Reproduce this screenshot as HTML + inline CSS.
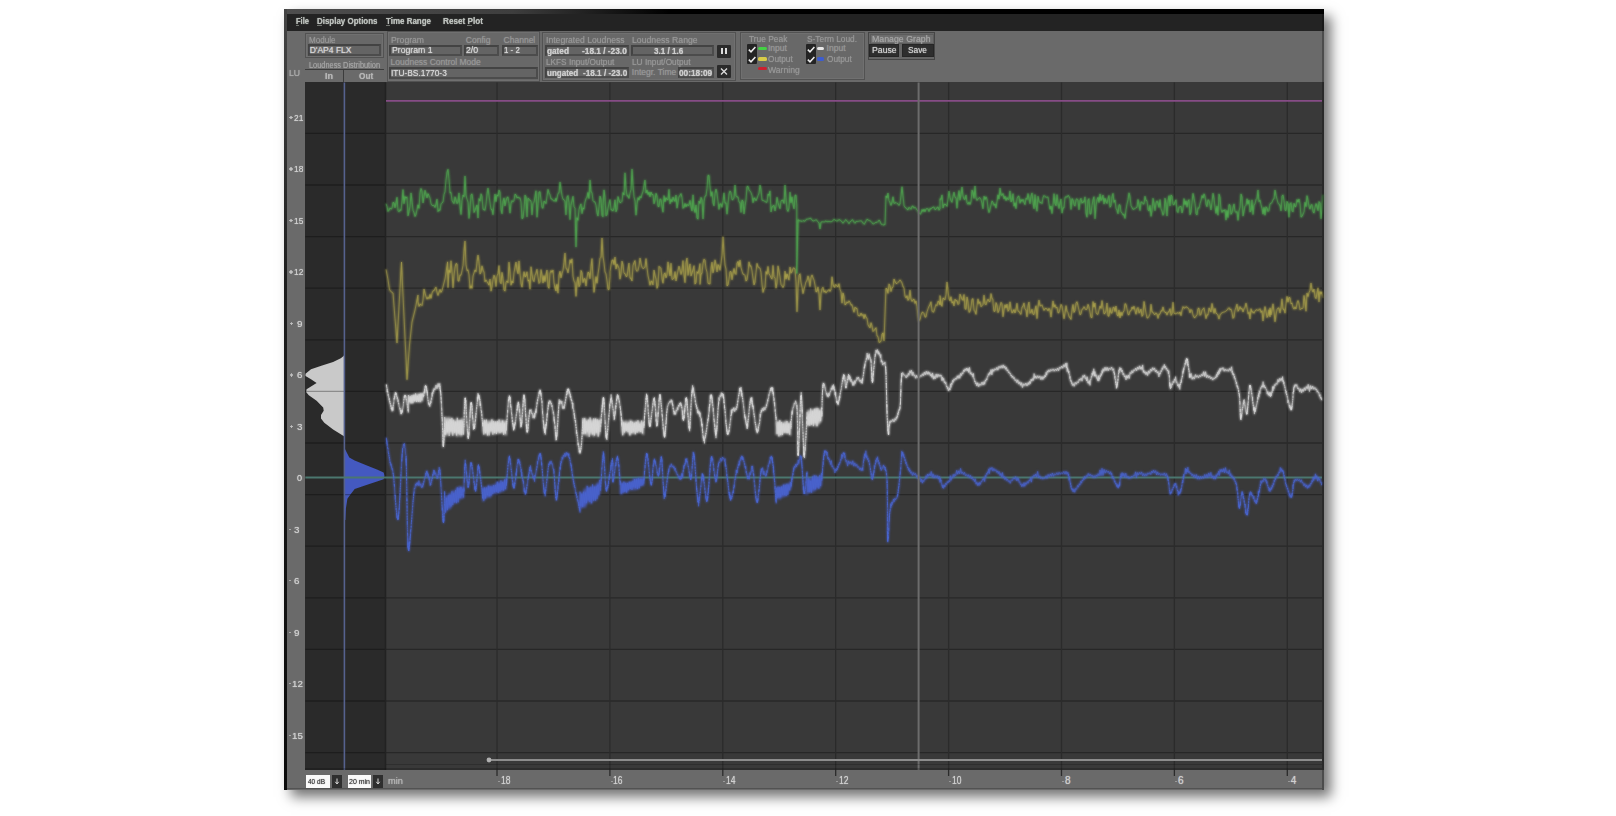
<!DOCTYPE html>
<html><head><meta charset="utf-8"><style>
html,body{margin:0;padding:0;background:#fff;width:1616px;height:816px;overflow:hidden;position:relative;font-family:"Liberation Sans",sans-serif;}
#win{position:absolute;left:0;top:0;width:1616px;height:816px;}
#win>div{position:absolute;}
.t{position:absolute;white-space:nowrap;line-height:1;}
</style></head><body>
<div id="win"><div style="left:284px;top:9px;width:1040px;height:780.5px;background:#6a6a6a;box-shadow:7px 7px 12px rgba(0,0,0,0.55);"></div>
<div style="left:284px;top:9px;width:1040px;height:5px;background:linear-gradient(to right,#4e4e4e 0%,#3e3e3e 22%,#000 37%,#000 100%);"></div>
<div style="left:284px;top:9px;width:3px;height:780.5px;background:linear-gradient(to bottom,#454545 0%,#1e1e1e 35%,#0a0a0a 100%);"></div>
<div style="left:287px;top:14px;width:1037px;height:16.5px;background:#232323;"></div>
<div class="t" style="left:295.5px;top:17.00px;font-size:8.5px;color:#bcc0bc;font-weight:bold;text-shadow:0 0 1px #bcc0bc;transform:scaleX(0.888);transform-origin:0 0;">File</div>
<div class="t" style="left:316.5px;top:17.00px;font-size:8.5px;color:#bcc0bc;font-weight:bold;text-shadow:0 0 1px #bcc0bc;transform:scaleX(0.935);transform-origin:0 0;">Display Options</div>
<div class="t" style="left:385.8px;top:17.00px;font-size:8.5px;color:#bcc0bc;font-weight:bold;text-shadow:0 0 1px #bcc0bc;transform:scaleX(0.937);transform-origin:0 0;">Time Range</div>
<div class="t" style="left:443.4px;top:17.00px;font-size:8.5px;color:#bcc0bc;font-weight:bold;text-shadow:0 0 1px #bcc0bc;transform:scaleX(0.962);transform-origin:0 0;">Reset Plot</div>
<div style="left:295.5px;top:25.4px;width:3.0px;height:0.7000000000000028px;background:#70746f;"></div>
<div style="left:316.5px;top:25.4px;width:5.0px;height:0.7000000000000028px;background:#70746f;"></div>
<div style="left:385.8px;top:25.4px;width:4.199999999999989px;height:0.7000000000000028px;background:#70746f;"></div>
<div style="left:467px;top:25.4px;width:5px;height:0.7000000000000028px;background:#70746f;"></div>
<div style="left:305.4px;top:32.8px;width:78.60000000000002px;height:25.400000000000006px;background:#686868;border:1px solid #525252;box-sizing:border-box;box-shadow:inset 0 0 0 1px #707070;"></div>
<div class="t" style="left:309px;top:35.50px;font-size:8.5px;color:#969696;font-weight:normal;text-shadow:0 0 1px #969696;transform:scaleX(0.954);transform-origin:0 0;">Module</div>
<div style="left:307.8px;top:44.4px;width:73.69999999999999px;height:11.300000000000004px;background:#646464;border:2px solid #434343;border-right-color:#4c4c4c;border-bottom-color:#4c4c4c;box-sizing:border-box;"></div>
<div class="t" style="left:309.7px;top:46.40px;font-size:8.5px;color:#d6d6d6;font-weight:normal;text-shadow:0 0 1px #d6d6d6;">D'AP4 FLX</div>
<div class="t" style="left:309px;top:60.80px;font-size:8.5px;color:#a2a2a2;font-weight:normal;text-shadow:0 0 1px #a2a2a2;transform:scaleX(0.869);transform-origin:0 0;">Loudness Distribution</div>
<div style="left:305px;top:68.8px;width:79px;height:1.4000000000000057px;background:#3c3c3c;"></div>
<div style="left:343px;top:70px;width:1.3999999999999773px;height:12.5px;background:#3c3c3c;"></div>
<div class="t" style="left:325px;top:72.00px;font-size:8.5px;color:#b6b6b6;font-weight:bold;text-shadow:0 0 1px #b6b6b6;transform:scaleX(1.059);transform-origin:0 0;">In</div>
<div class="t" style="left:358.6px;top:72.00px;font-size:8.5px;color:#b6b6b6;font-weight:bold;text-shadow:0 0 1px #b6b6b6;transform:scaleX(0.970);transform-origin:0 0;">Out</div>
<div class="t" style="left:288.7px;top:68.80px;font-size:8.5px;color:#ababab;font-weight:normal;text-shadow:0 0 1px #ababab;transform:scaleX(1.022);transform-origin:0 0;">LU</div>
<div style="left:387.4px;top:31.3px;width:152.60000000000002px;height:50.5px;background:#686868;border:1px solid #525252;box-sizing:border-box;box-shadow:inset 0 0 0 1px #707070;"></div>
<div class="t" style="left:390.5px;top:35.70px;font-size:8.5px;color:#969696;font-weight:normal;text-shadow:0 0 1px #969696;transform:scaleX(1.012);transform-origin:0 0;">Program</div>
<div class="t" style="left:465.8px;top:35.70px;font-size:8.5px;color:#969696;font-weight:normal;text-shadow:0 0 1px #969696;">Config</div>
<div class="t" style="left:503.6px;top:35.70px;font-size:8.5px;color:#969696;font-weight:normal;text-shadow:0 0 1px #969696;">Channel</div>
<div style="left:389px;top:44.5px;width:73px;height:11.5px;background:#646464;border:2px solid #434343;border-right-color:#4c4c4c;border-bottom-color:#4c4c4c;box-sizing:border-box;"></div>
<div class="t" style="left:391.6px;top:46.40px;font-size:8.5px;color:#d6d6d6;font-weight:normal;text-shadow:0 0 1px #d6d6d6;transform:scaleX(1.021);transform-origin:0 0;">Program 1</div>
<div style="left:464.2px;top:44.5px;width:35.19999999999999px;height:11.5px;background:#646464;border:2px solid #434343;border-right-color:#4c4c4c;border-bottom-color:#4c4c4c;box-sizing:border-box;"></div>
<div class="t" style="left:465.8px;top:46.40px;font-size:8.5px;color:#d6d6d6;font-weight:normal;text-shadow:0 0 1px #d6d6d6;transform:scaleX(1.024);transform-origin:0 0;">2/0</div>
<div style="left:502px;top:44.5px;width:35.799999999999955px;height:11.5px;background:#646464;border:2px solid #434343;border-right-color:#4c4c4c;border-bottom-color:#4c4c4c;box-sizing:border-box;"></div>
<div class="t" style="left:504.2px;top:46.40px;font-size:8.5px;color:#d6d6d6;font-weight:normal;text-shadow:0 0 1px #d6d6d6;transform:scaleX(0.929);transform-origin:0 0;">1 - 2</div>
<div class="t" style="left:390.5px;top:58.30px;font-size:8.5px;color:#969696;font-weight:normal;text-shadow:0 0 1px #969696;">Loudness Control Mode</div>
<div style="left:389px;top:67px;width:148.79999999999995px;height:11.5px;background:#646464;border:2px solid #434343;border-right-color:#4c4c4c;border-bottom-color:#4c4c4c;box-sizing:border-box;"></div>
<div class="t" style="left:391px;top:69.20px;font-size:8.5px;color:#d6d6d6;font-weight:normal;text-shadow:0 0 1px #d6d6d6;transform:scaleX(0.984);transform-origin:0 0;">ITU-BS.1770-3</div>
<div style="left:542.1px;top:31.5px;width:194.29999999999995px;height:49.400000000000006px;background:#686868;border:1px solid #525252;box-sizing:border-box;box-shadow:inset 0 0 0 1px #707070;"></div>
<div class="t" style="left:546px;top:36.00px;font-size:8.5px;color:#969696;font-weight:normal;text-shadow:0 0 1px #969696;transform:scaleX(1.014);transform-origin:0 0;">Integrated Loudness</div>
<div class="t" style="left:631.8px;top:36.00px;font-size:8.5px;color:#969696;font-weight:normal;text-shadow:0 0 1px #969696;transform:scaleX(1.021);transform-origin:0 0;">Loudness Range</div>
<div style="left:545.4px;top:44.5px;width:83.20000000000005px;height:11.700000000000003px;background:#646464;border:2px solid #434343;border-right-color:#4c4c4c;border-bottom-color:#4c4c4c;box-sizing:border-box;"></div>
<div class="t" style="left:546.7px;top:46.60px;font-size:8.5px;color:#cdcdcd;font-weight:bold;text-shadow:0 0 1px #cdcdcd;transform:scaleX(0.970);transform-origin:0 0;">gated</div>
<div class="t" style="left:581.8px;top:46.60px;font-size:8.5px;color:#cdcdcd;font-weight:bold;text-shadow:0 0 1px #cdcdcd;transform:scaleX(0.977);transform-origin:0 0;">-18.1 / -23.0</div>
<div style="left:631.2px;top:44.5px;width:82.5px;height:11.700000000000003px;background:#646464;border:2px solid #434343;border-right-color:#4c4c4c;border-bottom-color:#4c4c4c;box-sizing:border-box;"></div>
<div class="t" style="left:653.9px;top:46.60px;font-size:8.5px;color:#cdcdcd;font-weight:bold;text-shadow:0 0 1px #cdcdcd;transform:scaleX(0.951);transform-origin:0 0;">3.1 / 1.6</div>
<div style="left:717px;top:44.5px;width:13.600000000000023px;height:13.600000000000001px;background:#2b2b2b;border-radius:1px;"></div>
<div style="left:721.2px;top:48.3px;width:2.199999999999932px;height:6.0px;background:#dcdcdc;"></div>
<div style="left:724.6px;top:48.3px;width:2.199999999999932px;height:6.0px;background:#dcdcdc;"></div>
<div class="t" style="left:546px;top:58.10px;font-size:8.5px;color:#969696;font-weight:normal;text-shadow:0 0 1px #969696;transform:scaleX(0.970);transform-origin:0 0;">LKFS Input/Output</div>
<div class="t" style="left:631.8px;top:58.10px;font-size:8.5px;color:#969696;font-weight:normal;text-shadow:0 0 1px #969696;transform:scaleX(0.975);transform-origin:0 0;">LU Input/Output</div>
<div style="left:545.4px;top:67.2px;width:83.20000000000005px;height:10.799999999999997px;background:#646464;border:2px solid #434343;border-right-color:#4c4c4c;border-bottom-color:#4c4c4c;box-sizing:border-box;"></div>
<div class="t" style="left:546.7px;top:69.10px;font-size:8.5px;color:#cdcdcd;font-weight:bold;text-shadow:0 0 1px #cdcdcd;transform:scaleX(0.944);transform-origin:0 0;">ungated</div>
<div class="t" style="left:583px;top:69.10px;font-size:8.5px;color:#cdcdcd;font-weight:bold;text-shadow:0 0 1px #cdcdcd;transform:scaleX(0.964);transform-origin:0 0;">-18.1 / -23.0</div>
<div class="t" style="left:631.8px;top:68.10px;font-size:8.5px;color:#969696;font-weight:normal;text-shadow:0 0 1px #969696;">Integr. Time</div>
<div style="left:678px;top:67.2px;width:35.700000000000045px;height:10.799999999999997px;background:#646464;border:2px solid #434343;border-right-color:#4c4c4c;border-bottom-color:#4c4c4c;box-sizing:border-box;"></div>
<div class="t" style="left:679.2px;top:69.10px;font-size:8.5px;color:#cdcdcd;font-weight:bold;text-shadow:0 0 1px #cdcdcd;transform:scaleX(0.976);transform-origin:0 0;">00:18:09</div>
<div style="left:717px;top:65.3px;width:13.600000000000023px;height:13.0px;background:#2b2b2b;border-radius:1px;"></div>
<svg style="position:absolute;left:717px;top:65.3px" width="14" height="13" viewBox="0 0 14 13"><path d="M4,3.5 L10,9.5 M10,3.5 L4,9.5" stroke="#dedede" stroke-width="1.3" fill="none"/></svg>
<div style="left:739.5px;top:32.1px;width:125.5px;height:47.49999999999999px;background:#686868;border:1px solid #525252;box-sizing:border-box;box-shadow:inset 0 0 0 1px #707070;"></div>
<div class="t" style="left:748.6px;top:35.30px;font-size:8.5px;color:#969696;font-weight:normal;text-shadow:0 0 1px #969696;transform:scaleX(0.987);transform-origin:0 0;">True Peak</div>
<div class="t" style="left:807px;top:35.30px;font-size:8.5px;color:#969696;font-weight:normal;text-shadow:0 0 1px #969696;transform:scaleX(0.980);transform-origin:0 0;">S-Term Loud.</div>
<div style="left:747.3px;top:43.9px;width:9.900000000000091px;height:20.4px;background:#242424;border-radius:1px;"></div>
<div style="left:805.8px;top:43.9px;width:9.900000000000091px;height:20.4px;background:#242424;border-radius:1px;"></div>
<svg style="position:absolute;left:747.3px;top:44.5px" width="10" height="9" viewBox="0 0 10 9"><path d="M1.8,4.6 L4,6.8 L8.4,2" stroke="#ececec" stroke-width="1.5" fill="none"/></svg>
<svg style="position:absolute;left:747.3px;top:55.0px" width="10" height="9" viewBox="0 0 10 9"><path d="M1.8,4.6 L4,6.8 L8.4,2" stroke="#ececec" stroke-width="1.5" fill="none"/></svg>
<svg style="position:absolute;left:805.8px;top:44.5px" width="10" height="9" viewBox="0 0 10 9"><path d="M1.8,4.6 L4,6.8 L8.4,2" stroke="#ececec" stroke-width="1.5" fill="none"/></svg>
<svg style="position:absolute;left:805.8px;top:55.0px" width="10" height="9" viewBox="0 0 10 9"><path d="M1.8,4.6 L4,6.8 L8.4,2" stroke="#ececec" stroke-width="1.5" fill="none"/></svg>
<div style="left:758.4px;top:47.2px;width:8.300000000000068px;height:3.299999999999997px;background:#44d044;border-radius:1.5px;"></div>
<div style="left:758.4px;top:57.3px;width:8.300000000000068px;height:3.3000000000000043px;background:#d8cc48;border-radius:1.5px;"></div>
<div style="left:758.4px;top:66.8px;width:8.300000000000068px;height:3.6000000000000085px;background:#cc2030;border-radius:1.5px;"></div>
<div style="left:817.3px;top:47.2px;width:7.0px;height:3.299999999999997px;background:#e8e8e8;border-radius:1.5px;"></div>
<div style="left:817.3px;top:57.3px;width:7.0px;height:3.3000000000000043px;background:#3c5cd0;border-radius:1.5px;"></div>
<div class="t" style="left:768px;top:44.40px;font-size:8.5px;color:#969696;font-weight:normal;text-shadow:0 0 1px #969696;">Input</div>
<div class="t" style="left:768px;top:54.80px;font-size:8.5px;color:#969696;font-weight:normal;text-shadow:0 0 1px #969696;transform:scaleX(0.968);transform-origin:0 0;">Output</div>
<div class="t" style="left:768px;top:65.80px;font-size:8.5px;color:#969696;font-weight:normal;text-shadow:0 0 1px #969696;transform:scaleX(1.015);transform-origin:0 0;">Warning</div>
<div class="t" style="left:826.6px;top:44.40px;font-size:8.5px;color:#969696;font-weight:normal;text-shadow:0 0 1px #969696;">Input</div>
<div class="t" style="left:826.6px;top:54.80px;font-size:8.5px;color:#969696;font-weight:normal;text-shadow:0 0 1px #969696;transform:scaleX(0.968);transform-origin:0 0;">Output</div>
<div style="left:867.8px;top:32.3px;width:67.5px;height:27.400000000000006px;background:#666;border:1.5px solid #454545;box-sizing:border-box;"></div>
<div style="left:869.5px;top:34px;width:64.0px;height:9.899999999999999px;background:#6c6c6c;border:1px solid #5c5c5c;box-sizing:border-box;"></div>
<div class="t" style="left:871.5px;top:35.30px;font-size:8.5px;color:#a4a4a4;font-weight:normal;text-shadow:0 0 1px #a4a4a4;transform:scaleX(1.032);transform-origin:0 0;">Manage Graph</div>
<div style="left:868.6px;top:44.3px;width:30.799999999999955px;height:12.700000000000003px;background:#2e2e2e;border:1px solid #262626;box-sizing:border-box;"></div>
<div class="t" style="left:872px;top:46.30px;font-size:8.5px;color:#d0d0d0;font-weight:normal;text-shadow:0 0 1px #d0d0d0;transform:scaleX(1.025);transform-origin:0 0;">Pause</div>
<div style="left:902.2px;top:44.3px;width:31.399999999999977px;height:12.700000000000003px;background:#2e2e2e;border:1px solid #262626;box-sizing:border-box;"></div>
<div class="t" style="left:907.8px;top:46.30px;font-size:8.5px;color:#d0d0d0;font-weight:normal;text-shadow:0 0 1px #d0d0d0;transform:scaleX(0.981);transform-origin:0 0;">Save</div>
<div style="left:305.3px;top:82.4px;width:80.69999999999999px;height:687.6px;background:#2a2a2a;"></div>
<div style="left:386px;top:82.4px;width:938px;height:687.6px;background:#393939;"></div>
<svg style="position:absolute;left:0;top:0" width="1616" height="816" viewBox="0 0 1616 816"><polygon fill="#c9c9c9" points="344.5,354 343.6,356.1 340.8,358.3 333.1,362.1 322.1,365.5 311,369.3 305.5,373.7 305.5,375.9 311,379.2 316.6,383.1 311,386.4 306.6,389.2 306.1,391.9 308.8,395.3 316.6,400.8 323.2,407.4 323.7,410.7 321,415.1 321,418.4 324.3,422.8 333.1,429.5 343.6,436.1 344.5,437"/><polygon fill="#4459c0" points="344.6,446 344.9,448.8 347,453 349.3,457.6 354.7,460.6 362,463.5 369.4,466.5 377,469.5 383.6,472.4 384.6,475.8 383.6,479.2 377,481.5 369.4,484.1 362,486.5 354.7,489 350.8,494 347.4,498.8 345.9,508.6 345.4,520 344.6,520"/><line x1="305.3" y1="133.4" x2="1322" y2="133.4" stroke="rgba(0,0,0,0.3)" stroke-width="1.3"/><line x1="305.3" y1="185.0" x2="1322" y2="185.0" stroke="rgba(0,0,0,0.3)" stroke-width="1.3"/><line x1="305.3" y1="236.6" x2="1322" y2="236.6" stroke="rgba(0,0,0,0.3)" stroke-width="1.3"/><line x1="305.3" y1="288.2" x2="1322" y2="288.2" stroke="rgba(0,0,0,0.3)" stroke-width="1.3"/><line x1="305.3" y1="339.8" x2="1322" y2="339.8" stroke="rgba(0,0,0,0.3)" stroke-width="1.3"/><line x1="305.3" y1="391.4" x2="1322" y2="391.4" stroke="rgba(0,0,0,0.3)" stroke-width="1.3"/><line x1="305.3" y1="443.0" x2="1322" y2="443.0" stroke="rgba(0,0,0,0.3)" stroke-width="1.3"/><line x1="305.3" y1="494.6" x2="1322" y2="494.6" stroke="rgba(0,0,0,0.3)" stroke-width="1.3"/><line x1="305.3" y1="546.2" x2="1322" y2="546.2" stroke="rgba(0,0,0,0.3)" stroke-width="1.3"/><line x1="305.3" y1="597.8" x2="1322" y2="597.8" stroke="rgba(0,0,0,0.3)" stroke-width="1.3"/><line x1="305.3" y1="649.4" x2="1322" y2="649.4" stroke="rgba(0,0,0,0.3)" stroke-width="1.3"/><line x1="305.3" y1="701.0" x2="1322" y2="701.0" stroke="rgba(0,0,0,0.3)" stroke-width="1.3"/><line x1="305.3" y1="752.6" x2="1322" y2="752.6" stroke="rgba(0,0,0,0.3)" stroke-width="1.3"/><line x1="497.0" y1="82.4" x2="497.0" y2="776" stroke="#2b2b2b" stroke-width="1.3"/><line x1="609.9" y1="82.4" x2="609.9" y2="776" stroke="#2b2b2b" stroke-width="1.3"/><line x1="722.8" y1="82.4" x2="722.8" y2="776" stroke="#2b2b2b" stroke-width="1.3"/><line x1="835.7" y1="82.4" x2="835.7" y2="776" stroke="#2b2b2b" stroke-width="1.3"/><line x1="948.6" y1="82.4" x2="948.6" y2="776" stroke="#2b2b2b" stroke-width="1.3"/><line x1="1061.5" y1="82.4" x2="1061.5" y2="776" stroke="#2b2b2b" stroke-width="1.3"/><line x1="1174.4" y1="82.4" x2="1174.4" y2="776" stroke="#2b2b2b" stroke-width="1.3"/><line x1="1287.3" y1="82.4" x2="1287.3" y2="776" stroke="#2b2b2b" stroke-width="1.3"/><line x1="385.5" y1="82.4" x2="385.5" y2="770" stroke="#222" stroke-width="1.6"/><line x1="344.4" y1="82.4" x2="344.4" y2="770" stroke="#56628e" stroke-width="1.6"/><line x1="386" y1="100.9" x2="1322" y2="100.9" stroke="#864c86" stroke-width="1.6"/><line x1="305.3" y1="477.5" x2="1322" y2="477.5" stroke="#4b776f" stroke-width="1.8"/></svg><svg style="position:absolute;left:0;top:0;filter:blur(1px)" width="1616" height="816" viewBox="0 0 1616 816"><path d="M386.0,203.7 L387.0,206.4 L388.0,211.5 L389.0,210.2 L390.0,207.9 L391.0,209.1 L392.0,208.5 L393.0,202.2 L394.0,202.9 L395.0,207.9 L396.0,202.9 L397.0,197.2 L398.0,210.6 L399.0,211.8 L400.0,209.7 L401.0,210.6 L402.0,201.0 L403.0,189.5 L404.0,203.8 L405.0,196.5 L406.0,198.1 L407.0,196.8 L408.0,215.9 L409.0,211.8 L410.0,206.4 L411.0,192.9 L412.0,200.8 L413.0,210.3 L414.0,212.8 L415.0,216.5 L416.0,214.6 L417.0,209.6 L418.0,204.8 L419.0,208.4 L420.0,192.8 L421.0,188.4 L422.0,191.1 L423.0,203.0 L424.0,196.8 L425.0,190.2 L426.0,194.1 L427.0,198.0 L428.0,193.6 L429.0,195.6 L430.0,198.1 L431.0,203.7 L432.0,205.5 L433.0,205.5 L434.0,205.3 L435.0,207.6 L436.0,204.2 L437.0,199.1 L438.0,211.6 L439.0,209.9 L440.0,210.4 L441.0,203.9 L442.0,202.7 L443.0,202.1 L444.0,194.4 L445.0,191.8 L446.0,180.0 L447.0,172.4 L448.0,169.2 L449.0,178.8 L450.0,193.0 L451.0,192.4 L452.0,200.4 L453.0,202.3 L454.0,203.7 L455.0,196.7 L456.0,200.0 L457.0,203.7 L458.0,202.1 L459.0,192.9 L460.0,206.4 L461.0,214.6 L462.0,200.8 L463.0,195.0 L464.0,196.8 L465.0,176.0 L466.0,195.1 L467.0,199.2 L468.0,202.3 L469.0,218.5 L470.0,209.5 L471.0,194.8 L472.0,193.9 L473.0,201.1 L474.0,212.6 L475.0,210.2 L476.0,207.4 L477.0,204.9 L478.0,218.0 L479.0,198.6 L480.0,201.1 L481.0,193.7 L482.0,196.4 L483.0,209.4 L484.0,209.5 L485.0,210.3 L486.0,204.3 L487.0,193.8 L488.0,188.0 L489.0,195.2 L490.0,203.0 L491.0,209.4 L492.0,209.6 L493.0,214.8 L494.0,203.5 L495.0,194.0 L496.0,201.7 L497.0,194.8 L498.0,196.2 L499.0,190.0 L500.0,192.4 L501.0,209.5 L502.0,213.8 L503.0,201.6 L504.0,197.8 L505.0,206.0 L506.0,201.1 L507.0,197.5 L508.0,196.9 L509.0,203.8 L510.0,213.2 L511.0,203.8 L512.0,200.5 L513.0,201.8 L514.0,200.5 L515.0,194.1 L516.0,194.9 L517.0,198.1 L518.0,196.9 L519.0,198.2 L520.0,197.7 L521.0,201.8 L522.0,218.8 L523.0,217.9 L524.0,209.2 L525.0,195.1 L526.0,196.9 L527.0,216.9 L528.0,198.2 L529.0,199.0 L530.0,200.7 L531.0,200.7 L532.0,214.9 L533.0,203.7 L534.0,202.2 L535.0,196.7 L536.0,190.7 L537.0,217.3 L538.0,205.0 L539.0,192.0 L540.0,191.6 L541.0,199.8 L542.0,207.5 L543.0,208.3 L544.0,201.0 L545.0,202.3 L546.0,203.6 L547.0,196.1 L548.0,189.3 L549.0,192.9 L550.0,194.7 L551.0,199.1 L552.0,198.8 L553.0,200.6 L554.0,201.0 L555.0,200.7 L556.0,198.1 L556.0,201.6 L557.0,198.2 L558.0,193.4 L559.0,192.9 L560.0,182.0 L561.0,189.1 L562.0,195.6 L563.0,199.3 L564.0,199.7 L565.0,201.7 L566.0,214.9 L567.0,197.0 L568.0,195.5 L569.0,202.4 L570.0,219.7 L571.0,205.2 L572.0,200.7 L573.0,196.2 L574.0,206.6 L575.0,208.2 L576.0,247.0 L577.0,217.7 L578.0,220.3 L579.0,209.4 L580.0,206.2 L581.0,203.8 L582.0,213.7 L583.0,207.9 L584.0,209.1 L585.0,202.0 L586.0,198.7 L587.0,197.1 L588.0,192.4 L589.0,198.6 L590.0,180.0 L591.0,191.8 L592.0,192.5 L593.0,200.8 L594.0,201.8 L595.0,201.8 L596.0,205.3 L597.0,212.6 L598.0,216.1 L599.0,206.9 L600.0,196.0 L601.0,199.3 L602.0,215.6 L603.0,216.8 L603.0,205.9 L604.0,189.9 L605.0,197.7 L606.0,215.9 L607.0,214.6 L608.0,208.2 L609.0,203.5 L610.0,199.5 L611.0,210.1 L612.0,209.7 L613.0,211.1 L614.0,207.7 L615.0,199.7 L616.0,211.9 L617.0,209.0 L618.0,196.5 L619.0,200.3 L620.0,202.8 L621.0,202.4 L622.0,201.3 L623.0,192.5 L624.0,195.0 L625.0,172.8 L626.0,188.0 L627.0,196.2 L628.0,195.7 L629.0,198.5 L630.0,193.2 L631.0,189.4 L632.0,169.0 L633.0,185.1 L634.0,196.8 L635.0,201.0 L636.0,215.2 L637.0,204.5 L638.0,197.6 L639.0,200.1 L640.0,196.3 L641.0,197.9 L642.0,194.2 L643.0,191.5 L644.0,185.5 L645.0,180.0 L646.0,193.1 L647.0,190.1 L648.0,194.7 L649.0,192.1 L650.0,196.9 L651.0,192.0 L652.0,194.6 L653.0,194.4 L654.0,203.9 L655.0,200.2 L656.0,193.2 L657.0,195.9 L658.0,206.4 L659.0,206.7 L660.0,198.9 L661.0,199.3 L662.0,206.7 L663.0,212.3 L664.0,195.5 L665.0,201.8 L666.0,197.7 L667.0,199.7 L668.0,199.7 L669.0,189.3 L670.0,203.9 L671.0,199.4 L672.0,201.9 L673.0,196.9 L674.0,199.9 L675.0,201.5 L676.0,195.0 L677.0,208.2 L678.0,202.4 L679.0,196.4 L680.0,195.7 L681.0,193.5 L682.0,197.6 L683.0,208.4 L684.0,207.3 L685.0,203.4 L686.0,206.8 L687.0,204.2 L688.0,205.8 L689.0,204.9 L690.0,200.4 L691.0,207.0 L692.0,211.1 L693.0,194.8 L694.0,208.4 L695.0,212.6 L696.0,204.9 L697.0,217.9 L698.0,219.2 L699.0,201.0 L700.0,203.5 L701.0,197.3 L702.0,200.0 L703.0,219.0 L704.0,202.0 L705.0,196.0 L706.0,195.9 L707.0,188.4 L708.0,175.3 L709.0,175.3 L710.0,187.0 L711.0,196.3 L712.0,191.6 L713.0,202.7 L714.0,205.9 L715.0,193.3 L716.0,189.0 L717.0,193.1 L718.0,201.5 L719.0,209.5 L720.0,203.9 L721.0,203.9 L722.0,207.4 L723.0,200.6 L724.0,192.8 L725.0,203.1 L726.0,202.9 L727.0,214.2 L728.0,204.2 L729.0,193.7 L730.0,190.9 L731.0,192.7 L732.0,199.8 L733.0,199.7 L734.0,198.0 L735.0,185.0 L736.0,195.6 L737.0,197.1 L738.0,196.8 L739.0,202.1 L740.0,202.5 L741.0,212.5 L742.0,199.9 L743.0,201.1 L744.0,214.0 L745.0,206.2 L746.0,199.7 L747.0,186.5 L748.0,186.3 L749.0,189.8 L750.0,191.0 L751.0,192.7 L752.0,195.5 L753.0,202.8 L754.0,197.9 L755.0,198.5 L756.0,200.8 L757.0,198.5 L758.0,195.6 L759.0,193.0 L760.0,185.0 L761.0,189.3 L762.0,200.3 L763.0,200.4 L764.0,200.8 L765.0,201.5 L766.0,202.1 L767.0,202.4 L768.0,194.1 L769.0,195.3 L770.0,190.9 L771.0,212.0 L772.0,207.0 L773.0,206.0 L774.0,205.3 L775.0,211.0 L776.0,206.3 L777.0,197.2 L778.0,202.7 L779.0,206.0 L780.0,208.8 L781.0,200.7 L782.0,200.4 L783.0,200.2 L784.0,203.6 L785.0,185.0 L786.0,197.9 L787.0,209.5 L788.0,211.5 L789.0,208.1 L790.0,192.1 L791.0,202.8 L792.0,196.8 L793.0,204.5 L794.0,208.9 L795.0,195.2 L796.0,195.0 L796.8,205.0 L796.8,273.5 L798.0,222.0 L798.0,219.8 L799.0,220.3 L800.0,221.2 L801.0,220.7 L802.0,221.6 L803.0,220.6 L804.0,220.9 L805.0,221.3 L806.0,219.5 L807.0,219.0 L808.0,219.2 L809.0,218.7 L810.0,218.4 L811.0,218.3 L812.0,220.2 L813.0,221.0 L814.0,220.9 L815.0,220.3 L816.0,219.7 L817.0,220.3 L818.0,222.0 L819.0,223.1 L820.0,229.0 L821.0,222.1 L822.0,221.7 L823.0,221.8 L824.0,222.1 L825.0,221.6 L826.0,220.8 L827.0,222.0 L828.0,221.3 L829.0,221.6 L830.0,221.4 L831.0,221.9 L832.0,221.3 L833.0,220.7 L834.0,219.2 L835.0,220.2 L836.0,220.3 L837.0,221.4 L838.0,220.1 L839.0,219.9 L840.0,219.7 L841.0,221.0 L842.0,221.8 L843.0,223.3 L844.0,222.0 L845.0,220.2 L846.0,219.6 L847.0,221.2 L848.0,222.2 L849.0,223.8 L850.0,221.8 L851.0,221.3 L852.0,219.7 L853.0,220.1 L854.0,222.3 L855.0,223.3 L856.0,221.5 L857.0,221.2 L858.0,221.6 L859.0,221.0 L860.0,221.0 L861.0,220.8 L862.0,221.3 L863.0,223.2 L864.0,224.3 L865.0,223.4 L866.0,220.9 L867.0,219.2 L868.0,219.8 L869.0,220.6 L870.0,220.7 L871.0,221.4 L872.0,222.7 L873.0,224.1 L874.0,223.6 L875.0,223.0 L876.0,222.0 L877.0,222.6 L878.0,221.6 L879.0,220.0 L880.0,221.2 L881.0,224.1 L882.0,224.2 L883.0,225.2 L884.0,224.5 L885.0,224.8 L886.0,195.9 L887.0,197.8 L888.0,193.0 L889.0,200.8 L890.0,202.7 L891.0,205.5 L892.0,202.1 L893.0,196.7 L894.0,203.4 L895.0,203.1 L896.0,202.4 L897.0,203.5 L898.0,203.9 L899.0,205.5 L900.0,203.8 L900.0,204.0 L901.0,195.1 L902.0,186.7 L903.0,195.5 L904.0,205.5 L905.0,207.5 L906.0,207.8 L907.0,209.4 L908.0,209.9 L909.0,207.3 L910.0,208.3 L911.0,209.4 L912.0,206.2 L913.0,206.0 L914.0,208.2 L915.0,207.2 L916.0,208.3 L917.0,210.0 L918.0,211.0 L919.0,212.9 L920.0,214.2 L921.0,213.5 L922.0,209.5 L923.0,211.5 L924.0,209.2 L925.0,211.8 L926.0,208.9 L927.0,208.5 L928.0,208.9 L929.0,211.7 L930.0,208.4 L931.0,209.3 L932.0,207.5 L933.0,207.5 L934.0,206.8 L935.0,209.9 L936.0,209.2 L937.0,207.3 L938.0,207.0 L939.0,210.3 L940.0,208.8 L940.0,198.7 L941.0,199.4 L942.0,194.9 L943.0,208.1 L944.0,204.3 L945.0,204.4 L946.0,204.7 L947.0,206.4 L948.0,199.3 L949.0,191.0 L950.0,197.4 L951.0,200.8 L952.0,202.4 L953.0,196.1 L954.0,192.1 L955.0,197.3 L956.0,197.8 L957.0,208.3 L958.0,196.8 L959.0,190.5 L960.0,200.3 L961.0,194.4 L962.0,187.0 L963.0,195.9 L964.0,199.4 L965.0,199.2 L966.0,194.9 L967.0,202.9 L968.0,204.3 L969.0,202.1 L970.0,204.5 L971.0,201.7 L972.0,189.9 L973.0,193.1 L974.0,198.5 L975.0,186.0 L976.0,197.9 L977.0,200.5 L978.0,198.9 L979.0,197.9 L980.0,197.7 L981.0,199.7 L982.0,203.4 L983.0,208.8 L984.0,196.2 L985.0,199.5 L986.0,196.8 L987.0,199.1 L988.0,208.5 L989.0,212.7 L990.0,209.3 L991.0,204.9 L992.0,200.8 L993.0,202.3 L994.0,205.4 L995.0,204.0 L996.0,208.2 L997.0,201.5 L998.0,194.8 L999.0,199.1 L1000.0,188.0 L1001.0,194.9 L1002.0,195.4 L1003.0,193.4 L1004.0,198.9 L1005.0,196.1 L1006.0,200.6 L1007.0,197.6 L1008.0,199.7 L1009.0,198.9 L1010.0,190.9 L1011.0,202.0 L1012.0,200.2 L1013.0,193.6 L1014.0,206.2 L1015.0,202.8 L1016.0,208.7 L1017.0,198.6 L1018.0,196.4 L1019.0,196.1 L1020.0,203.4 L1021.0,199.5 L1022.0,201.3 L1023.0,199.3 L1024.0,202.5 L1025.0,204.7 L1026.0,198.2 L1027.0,199.4 L1028.0,193.5 L1029.0,198.6 L1030.0,203.8 L1031.0,196.3 L1032.0,192.9 L1033.0,202.4 L1034.0,208.8 L1035.0,194.5 L1036.0,205.3 L1037.0,211.3 L1038.0,196.2 L1039.0,201.2 L1040.0,202.8 L1041.0,202.4 L1042.0,203.6 L1043.0,197.6 L1044.0,195.5 L1045.0,196.5 L1046.0,197.3 L1047.0,197.3 L1048.0,196.9 L1049.0,203.9 L1050.0,209.3 L1051.0,206.0 L1052.0,213.6 L1053.0,204.8 L1054.0,193.6 L1055.0,203.2 L1056.0,205.9 L1057.0,194.5 L1058.0,203.1 L1059.0,208.6 L1060.0,203.2 L1061.0,198.9 L1062.0,213.2 L1063.0,207.9 L1064.0,208.0 L1065.0,197.2 L1066.0,196.7 L1067.0,197.2 L1068.0,195.4 L1069.0,196.1 L1070.0,198.9 L1071.0,209.5 L1072.0,198.6 L1073.0,199.5 L1074.0,204.4 L1075.0,206.2 L1076.0,199.4 L1077.0,198.7 L1078.0,200.7 L1079.0,209.8 L1080.0,201.1 L1080.0,200.7 L1081.0,198.2 L1082.0,203.3 L1083.0,201.8 L1084.0,202.1 L1085.0,196.8 L1086.0,212.9 L1087.0,217.3 L1088.0,200.0 L1089.0,198.5 L1090.0,214.1 L1091.0,213.9 L1092.0,205.5 L1093.0,199.7 L1094.0,196.6 L1095.0,218.8 L1096.0,206.1 L1097.0,199.5 L1098.0,197.3 L1099.0,202.6 L1100.0,193.9 L1101.0,200.7 L1102.0,198.9 L1103.0,195.0 L1104.0,204.1 L1105.0,198.2 L1106.0,201.6 L1107.0,203.6 L1108.0,198.9 L1109.0,195.4 L1110.0,207.3 L1111.0,205.7 L1112.0,196.8 L1113.0,193.3 L1114.0,202.5 L1115.0,200.0 L1116.0,208.3 L1117.0,210.0 L1118.0,213.8 L1119.0,204.7 L1120.0,204.9 L1121.0,212.0 L1122.0,212.9 L1123.0,215.1 L1124.0,214.4 L1125.0,218.5 L1126.0,209.7 L1127.0,204.1 L1128.0,199.6 L1129.0,192.8 L1130.0,196.8 L1131.0,205.8 L1132.0,207.5 L1133.0,209.6 L1134.0,208.8 L1135.0,208.8 L1136.0,207.5 L1137.0,207.3 L1138.0,199.4 L1139.0,204.6 L1140.0,210.6 L1141.0,201.8 L1142.0,202.2 L1143.0,203.7 L1144.0,204.2 L1145.0,196.2 L1146.0,200.5 L1147.0,200.7 L1148.0,209.6 L1149.0,210.9 L1150.0,205.2 L1151.0,216.4 L1152.0,210.7 L1153.0,198.2 L1154.0,203.9 L1155.0,210.7 L1156.0,203.2 L1157.0,200.7 L1158.0,203.4 L1159.0,207.5 L1160.0,199.5 L1161.0,208.8 L1162.0,211.3 L1163.0,215.4 L1164.0,212.7 L1165.0,198.1 L1166.0,204.4 L1167.0,216.0 L1168.0,200.9 L1169.0,195.6 L1170.0,206.0 L1171.0,195.0 L1172.0,196.0 L1173.0,204.5 L1174.0,205.0 L1175.0,201.9 L1176.0,199.7 L1177.0,211.2 L1178.0,212.6 L1179.0,206.9 L1180.0,206.9 L1181.0,206.2 L1182.0,213.0 L1183.0,209.0 L1184.0,198.5 L1185.0,204.6 L1186.0,200.8 L1187.0,207.3 L1188.0,201.6 L1189.0,199.6 L1190.0,214.8 L1191.0,212.1 L1192.0,202.5 L1193.0,193.3 L1194.0,198.2 L1195.0,203.6 L1196.0,213.5 L1197.0,215.0 L1198.0,207.7 L1199.0,208.3 L1200.0,203.6 L1201.0,200.5 L1202.0,195.5 L1203.0,198.1 L1204.0,193.8 L1205.0,196.3 L1206.0,204.1 L1207.0,206.8 L1208.0,199.7 L1209.0,200.4 L1210.0,205.0 L1211.0,210.0 L1212.0,202.1 L1213.0,193.2 L1214.0,198.2 L1215.0,207.4 L1216.0,213.5 L1217.0,206.1 L1218.0,215.3 L1219.0,193.9 L1220.0,197.6 L1221.0,209.3 L1222.0,212.5 L1223.0,210.1 L1224.0,211.2 L1225.0,209.5 L1226.0,220.1 L1227.0,210.3 L1228.0,217.6 L1229.0,204.5 L1230.0,204.9 L1231.0,214.4 L1232.0,212.7 L1233.0,207.7 L1234.0,203.9 L1235.0,211.6 L1236.0,212.4 L1237.0,211.5 L1238.0,220.4 L1239.0,211.1 L1240.0,207.2 L1241.0,193.9 L1242.0,197.2 L1243.0,216.1 L1244.0,211.5 L1245.0,206.3 L1246.0,205.3 L1247.0,198.7 L1248.0,204.2 L1249.0,200.1 L1250.0,212.1 L1251.0,210.2 L1252.0,199.8 L1253.0,214.6 L1254.0,205.7 L1255.0,203.8 L1256.0,199.5 L1257.0,198.5 L1258.0,190.0 L1259.0,201.7 L1260.0,200.2 L1261.0,204.8 L1262.0,208.5 L1263.0,214.2 L1264.0,207.3 L1265.0,215.3 L1266.0,206.7 L1267.0,208.1 L1268.0,211.6 L1269.0,210.4 L1270.0,203.7 L1271.0,203.2 L1272.0,202.7 L1273.0,199.4 L1274.0,199.0 L1275.0,190.0 L1276.0,195.2 L1277.0,199.2 L1278.0,202.9 L1279.0,204.5 L1280.0,205.1 L1281.0,210.9 L1282.0,196.4 L1283.0,194.9 L1284.0,200.5 L1285.0,210.3 L1286.0,210.6 L1287.0,201.2 L1288.0,203.6 L1289.0,217.3 L1290.0,203.8 L1291.0,202.6 L1292.0,210.6 L1293.0,211.9 L1294.0,203.2 L1295.0,206.7 L1296.0,206.5 L1297.0,199.5 L1298.0,202.1 L1299.0,199.0 L1300.0,203.9 L1301.0,217.1 L1302.0,216.4 L1303.0,214.3 L1304.0,211.9 L1305.0,202.2 L1306.0,206.7 L1307.0,195.6 L1308.0,200.2 L1309.0,206.4 L1310.0,209.2 L1311.0,205.2 L1312.0,204.4 L1313.0,211.6 L1314.0,213.1 L1315.0,207.3 L1316.0,203.5 L1317.0,206.2 L1318.0,210.8 L1319.0,201.5 L1320.0,203.0 L1321.0,218.8 L1322.0,209.4 L1323.0,194.7" fill="none" stroke="#4fb04f" stroke-width="1.1" stroke-linejoin="round"/><path d="M386.0,269.4 L387.8,278.5 L389.5,289.6 L391.2,291.9 L393.0,293.0 L395.0,318.4 L397.0,343.0 L398.5,315.9 L400.0,288.1 L401.5,262.0 L403.3,302.1 L405.2,341.4 L407.0,379.7 L409.5,345.0 L412.0,322.0 L413.5,316.0 L415.0,310.0 L416.5,302.5 L418.0,295.0 L418.0,301.5 L419.0,306.5 L420.0,304.2 L421.0,304.5 L422.0,305.6 L423.0,300.1 L424.0,289.0 L425.0,293.1 L426.0,296.5 L427.0,299.2 L428.0,297.2 L429.0,298.7 L430.0,294.4 L431.0,298.4 L432.0,293.2 L433.0,290.7 L434.0,290.9 L435.0,288.6 L436.0,287.1 L437.0,292.6 L438.0,295.5 L439.0,292.3 L440.0,289.4 L441.0,292.4 L442.0,290.7 L445.0,279.0 L447.6,261.8 L448.0,287.6 L449.0,270.1 L450.0,272.6 L451.0,260.7 L452.0,272.2 L453.0,287.8 L454.0,276.2 L455.0,266.9 L456.0,263.5 L457.0,263.9 L458.0,280.9 L459.0,281.2 L460.0,275.0 L461.0,275.2 L462.0,270.7 L463.0,265.5 L464.0,251.3 L465.0,241.0 L466.0,264.7 L467.0,270.7 L468.0,269.8 L469.0,274.7 L470.0,288.5 L471.0,285.8 L472.0,288.4 L473.0,276.0 L474.0,272.9 L475.0,270.0 L476.0,271.7 L477.0,261.7 L478.0,255.0 L479.0,261.7 L480.0,274.1 L481.0,272.3 L482.0,265.8 L483.0,270.1 L484.0,272.0 L485.0,281.8 L486.0,279.9 L487.0,281.7 L488.0,283.3 L489.0,285.2 L490.0,279.0 L491.0,291.2 L492.0,286.9 L493.0,279.4 L494.0,275.1 L495.0,278.0 L496.0,286.6 L497.0,275.9 L498.0,273.7 L499.0,265.5 L500.0,281.9 L501.0,283.8 L502.0,272.3 L503.0,278.6 L504.0,289.7 L505.0,291.1 L506.0,282.6 L507.0,280.9 L508.0,282.8 L509.0,262.1 L510.0,271.9 L511.0,285.3 L512.0,281.0 L513.0,283.0 L514.0,272.6 L515.0,267.1 L516.0,262.0 L517.0,269.8 L518.0,273.8 L519.0,260.9 L520.0,273.4 L521.0,283.4 L522.0,287.2 L523.0,279.1 L524.0,271.6 L525.0,276.9 L526.0,276.1 L527.0,271.7 L528.0,281.1 L529.0,279.9 L530.0,289.2 L531.0,266.7 L532.0,274.3 L533.0,280.0 L534.0,281.7 L535.0,275.1 L536.0,273.1 L537.0,269.2 L538.0,277.4 L539.0,283.5 L540.0,282.2 L541.0,269.5 L542.0,274.9 L543.0,283.1 L544.0,275.6 L545.0,281.6 L546.0,274.6 L547.0,270.0 L548.0,286.3 L549.0,288.4 L550.0,273.4 L551.0,270.5 L552.0,272.3 L553.0,270.1 L554.0,282.7 L555.0,288.2 L556.0,291.0 L556.0,287.2 L557.0,284.3 L558.0,293.2 L559.0,275.4 L560.0,271.2 L561.0,277.9 L562.0,273.7 L563.0,270.4 L564.0,262.5 L565.0,253.0 L566.0,268.5 L567.0,269.1 L568.0,272.9 L569.0,267.2 L570.0,259.7 L571.0,263.0 L572.0,258.8 L573.0,276.2 L574.0,281.1 L575.0,282.8 L576.0,296.4 L577.0,282.4 L578.0,276.9 L579.0,286.8 L580.0,284.7 L581.0,270.4 L582.0,272.8 L583.0,282.7 L584.0,278.8 L585.0,278.7 L586.0,286.1 L587.0,277.7 L588.0,272.0 L589.0,273.0 L590.0,278.8 L591.0,266.5 L592.0,258.5 L593.0,277.9 L594.0,292.4 L595.0,284.8 L596.0,276.6 L597.0,283.3 L598.0,274.0 L599.0,267.3 L600.0,258.4 L601.0,257.2 L602.0,238.0 L603.0,256.0 L604.0,263.1 L605.0,272.0 L606.0,273.9 L607.0,281.0 L608.0,289.4 L609.0,289.7 L610.0,276.7 L610.0,271.7 L611.0,264.9 L612.0,260.1 L613.0,260.0 L614.0,264.7 L615.0,257.0 L616.0,269.1 L617.0,264.2 L618.0,265.8 L619.0,268.4 L620.0,279.2 L621.0,273.8 L622.0,261.1 L623.0,264.9 L624.0,273.3 L625.0,273.5 L626.0,276.5 L627.0,276.4 L628.0,269.0 L629.0,263.0 L630.0,278.2 L631.0,278.2 L632.0,281.0 L633.0,265.3 L634.0,262.7 L635.0,260.5 L636.0,269.8 L637.0,271.4 L638.0,270.4 L639.0,265.7 L640.0,258.0 L641.0,263.0 L642.0,267.6 L643.0,268.5 L644.0,268.3 L645.0,267.0 L646.0,258.5 L647.0,267.8 L648.0,275.7 L649.0,280.1 L650.0,285.3 L651.0,281.3 L652.0,281.2 L653.0,285.1 L654.0,270.0 L655.0,275.1 L656.0,279.0 L657.0,288.4 L658.0,285.3 L659.0,266.3 L660.0,267.3 L661.0,268.4 L662.0,278.7 L663.0,283.3 L664.0,274.4 L665.0,272.8 L666.0,277.9 L667.0,274.9 L668.0,261.9 L669.0,270.2 L670.0,275.9 L671.0,263.2 L672.0,279.5 L673.0,279.2 L674.0,277.9 L675.0,271.5 L676.0,281.0 L677.0,276.1 L678.0,270.3 L679.0,266.1 L680.0,269.9 L681.0,274.6 L682.0,270.7 L683.0,260.5 L684.0,274.7 L685.0,282.7 L686.0,262.8 L687.0,258.0 L688.0,275.5 L689.0,268.8 L690.0,263.9 L691.0,276.1 L692.0,272.9 L693.0,270.0 L694.0,265.6 L695.0,284.1 L696.0,282.5 L697.0,271.6 L698.0,273.4 L699.0,269.6 L700.0,263.5 L700.0,284.5 L701.0,273.9 L702.0,273.4 L703.0,263.4 L704.0,259.2 L705.0,260.2 L706.0,268.7 L707.0,272.1 L708.0,283.3 L709.0,283.6 L710.0,284.0 L711.0,268.4 L712.0,262.1 L713.0,272.9 L714.0,268.3 L715.0,259.8 L716.0,264.6 L717.0,272.0 L718.0,264.5 L719.0,266.0 L720.0,270.4 L721.0,263.3 L722.0,255.1 L723.0,236.8 L724.0,252.8 L725.0,265.0 L726.0,269.1 L727.0,286.0 L728.0,285.0 L729.0,279.4 L730.0,271.5 L731.0,271.6 L732.0,279.8 L733.0,273.4 L734.0,268.4 L735.0,273.4 L736.0,274.5 L737.0,263.2 L738.0,261.4 L739.0,266.8 L740.0,260.0 L741.0,267.4 L742.0,271.2 L743.0,274.3 L744.0,274.2 L745.0,275.6 L746.0,281.1 L747.0,279.7 L748.0,273.1 L749.0,261.8 L750.0,266.2 L751.0,265.7 L752.0,270.9 L753.0,278.5 L754.0,285.0 L755.0,282.1 L756.0,272.3 L757.0,263.3 L758.0,266.9 L759.0,267.6 L760.0,268.0 L761.0,272.4 L762.0,284.2 L763.0,292.5 L764.0,288.7 L765.0,287.9 L766.0,271.5 L767.0,274.3 L768.0,266.4 L769.0,273.6 L770.0,275.4 L771.0,277.7 L772.0,279.2 L773.0,265.4 L774.0,276.6 L775.0,278.2 L776.0,288.2 L777.0,282.9 L778.0,265.8 L779.0,271.0 L780.0,276.7 L781.0,284.5 L782.0,285.8 L783.0,287.6 L784.0,285.5 L785.0,271.1 L786.0,279.2 L787.0,273.9 L788.0,276.5 L789.0,280.2 L790.0,267.1 L791.0,273.2 L792.0,272.1 L793.0,268.3 L794.0,267.8 L795.0,269.5 L796.0,281.9 L797.0,311.8 L798.0,288.0 L799.0,275.4 L800.0,273.7 L801.0,282.2 L802.0,287.4 L803.0,293.7 L804.0,289.4 L805.0,285.8 L806.0,281.5 L807.0,280.6 L808.0,275.8 L809.0,279.8 L810.0,286.6 L811.0,277.5 L812.0,274.9 L813.0,277.6 L814.0,280.1 L815.0,285.2 L816.0,292.0 L817.0,291.3 L818.0,286.9 L819.0,294.2 L820.0,310.0 L821.0,293.8 L822.0,288.6 L823.0,287.2 L824.0,292.2 L825.0,290.7 L826.0,292.9 L827.0,291.2 L828.0,290.8 L829.0,289.5 L830.0,291.4 L831.0,289.5 L832.0,276.7 L833.0,284.2 L834.0,287.1 L835.0,287.3 L835.0,285.2 L836.0,284.5 L837.0,286.2 L838.0,286.9 L839.0,283.6 L840.0,289.4 L841.0,292.0 L842.0,303.2 L843.0,292.9 L844.0,296.5 L845.0,305.0 L846.0,304.0 L847.0,301.9 L848.0,302.9 L849.0,300.8 L850.0,302.2 L851.0,305.3 L852.0,304.5 L853.0,309.1 L854.0,312.3 L855.0,307.1 L856.0,308.4 L857.0,308.3 L858.0,315.5 L859.0,315.6 L860.0,316.0 L861.0,313.0 L862.0,315.5 L863.0,314.4 L864.0,318.8 L865.0,314.3 L866.0,317.3 L867.0,318.1 L868.0,324.9 L869.0,326.5 L870.0,327.9 L871.0,322.6 L872.0,325.8 L873.0,331.6 L874.0,330.5 L875.0,329.2 L876.0,327.6 L877.0,336.0 L878.0,336.4 L879.0,342.5 L880.0,342.1 L881.0,341.3 L882.0,334.1 L883.0,332.9 L884.0,340.9 L886.0,288.0 L887.0,289.2 L888.0,293.4 L889.0,283.9 L890.0,285.9 L891.0,291.6 L892.0,287.8 L893.0,287.3 L894.0,279.0 L895.0,281.4 L896.0,283.4 L897.0,283.5 L898.0,282.5 L899.0,281.2 L900.0,279.9 L901.0,281.1 L902.0,283.0 L903.0,286.5 L903.0,286.3 L904.0,288.1 L905.0,296.2 L906.0,297.9 L907.0,295.7 L908.0,300.5 L909.0,298.6 L910.0,290.1 L911.0,299.0 L912.0,301.5 L913.0,299.8 L914.0,299.0 L915.0,303.5 L916.0,300.9 L917.0,306.5 L918.0,315.9 L919.0,321.1 L919.0,319.1 L920.0,319.5 L921.0,315.0 L922.0,312.3 L923.0,312.2 L924.0,313.5 L925.0,317.2 L926.0,317.0 L927.0,311.9 L928.0,308.9 L929.0,306.2 L930.0,304.6 L931.0,301.7 L932.0,311.1 L933.0,312.2 L934.0,311.6 L935.0,307.4 L936.0,304.6 L937.0,305.7 L938.0,301.1 L939.0,302.1 L940.0,304.9 L940.0,295.5 L941.0,304.0 L942.0,306.4 L943.0,298.0 L944.0,298.7 L945.0,299.8 L946.0,294.4 L947.0,282.0 L948.0,290.3 L949.0,299.1 L950.0,300.8 L951.0,296.7 L952.0,303.1 L953.0,301.5 L954.0,306.0 L955.0,299.1 L956.0,300.9 L957.0,300.5 L958.0,304.6 L959.0,303.6 L960.0,294.1 L961.0,296.6 L962.0,299.3 L963.0,300.4 L964.0,294.4 L965.0,308.8 L966.0,309.4 L967.0,296.9 L968.0,301.7 L969.0,312.4 L970.0,311.6 L971.0,307.1 L972.0,299.2 L973.0,298.6 L974.0,310.3 L975.0,311.5 L976.0,314.4 L977.0,305.6 L978.0,298.8 L979.0,303.7 L980.0,301.7 L981.0,306.8 L982.0,305.7 L983.0,304.5 L984.0,295.1 L985.0,303.6 L986.0,304.9 L987.0,301.3 L988.0,299.1 L989.0,301.4 L990.0,301.8 L991.0,293.5 L992.0,298.6 L993.0,299.2 L993.0,303.7 L994.0,311.5 L995.0,311.2 L996.0,302.5 L997.0,305.1 L998.0,312.7 L999.0,310.6 L1000.0,306.1 L1001.0,302.3 L1002.0,303.8 L1003.0,316.8 L1004.0,310.0 L1005.0,304.7 L1006.0,307.9 L1007.0,304.1 L1008.0,311.4 L1009.0,309.7 L1010.0,301.8 L1011.0,308.7 L1012.0,313.1 L1013.0,311.4 L1014.0,309.5 L1015.0,313.0 L1016.0,309.2 L1017.0,303.2 L1018.0,311.2 L1019.0,311.2 L1020.0,313.5 L1021.0,314.4 L1022.0,307.0 L1023.0,306.3 L1024.0,302.9 L1025.0,309.2 L1026.0,310.0 L1027.0,316.9 L1028.0,305.8 L1029.0,302.0 L1030.0,313.4 L1031.0,312.3 L1032.0,309.2 L1033.0,314.3 L1034.0,314.6 L1035.0,309.7 L1036.0,305.7 L1037.0,318.6 L1038.0,307.5 L1039.0,300.1 L1040.0,305.8 L1041.0,305.8 L1042.0,304.8 L1043.0,307.9 L1044.0,310.5 L1045.0,308.5 L1046.0,308.3 L1047.0,309.0 L1048.0,310.9 L1049.0,308.3 L1050.0,310.1 L1051.0,317.1 L1052.0,308.9 L1053.0,300.9 L1054.0,307.1 L1055.0,304.7 L1056.0,308.1 L1057.0,307.1 L1058.0,312.9 L1059.0,312.7 L1060.0,308.7 L1061.0,304.3 L1062.0,306.1 L1063.0,312.4 L1064.0,318.8 L1065.0,313.5 L1066.0,305.6 L1067.0,311.2 L1068.0,312.5 L1069.0,316.8 L1070.0,317.5 L1071.0,319.5 L1072.0,309.7 L1073.0,304.4 L1074.0,312.5 L1075.0,310.6 L1076.0,303.4 L1077.0,301.7 L1078.0,305.6 L1079.0,310.4 L1080.0,314.8 L1081.0,313.9 L1082.0,309.2 L1083.0,308.9 L1084.0,306.6 L1085.0,308.5 L1086.0,310.0 L1087.0,308.9 L1088.0,304.3 L1089.0,306.9 L1090.0,312.5 L1091.0,317.4 L1092.0,317.6 L1093.0,301.5 L1094.0,307.1 L1095.0,303.0 L1096.0,312.5 L1097.0,314.2 L1098.0,314.3 L1099.0,309.9 L1100.0,306.1 L1101.0,308.4 L1102.0,300.5 L1103.0,307.3 L1104.0,313.9 L1105.0,313.4 L1106.0,311.0 L1107.0,303.0 L1108.0,316.0 L1109.0,316.3 L1110.0,307.6 L1111.0,312.8 L1112.0,313.3 L1113.0,307.3 L1114.0,307.3 L1115.0,311.6 L1116.0,306.0 L1117.0,315.0 L1118.0,316.1 L1119.0,309.9 L1120.0,318.0 L1121.0,312.2 L1122.0,315.7 L1123.0,312.0 L1124.0,311.2 L1125.0,303.6 L1126.0,304.4 L1127.0,308.9 L1128.0,314.5 L1129.0,314.9 L1130.0,310.9 L1131.0,310.9 L1132.0,307.0 L1133.0,309.0 L1134.0,306.2 L1135.0,310.7 L1136.0,314.3 L1137.0,308.8 L1138.0,307.4 L1139.0,313.2 L1140.0,311.3 L1141.0,309.0 L1142.0,316.4 L1143.0,314.9 L1144.0,301.4 L1145.0,307.4 L1146.0,313.0 L1147.0,318.0 L1148.0,317.9 L1149.0,316.3 L1150.0,313.9 L1151.0,304.2 L1152.0,311.9 L1153.0,312.1 L1154.0,314.3 L1155.0,314.6 L1156.0,312.8 L1157.0,314.0 L1158.0,318.5 L1159.0,314.1 L1160.0,314.2 L1161.0,310.7 L1162.0,311.2 L1163.0,306.9 L1164.0,311.0 L1165.0,312.6 L1166.0,312.2 L1167.0,315.2 L1168.0,312.0 L1169.0,311.8 L1170.0,308.6 L1171.0,315.5 L1172.0,313.8 L1173.0,302.2 L1174.0,312.8 L1175.0,314.1 L1176.0,313.3 L1177.0,313.4 L1178.0,312.5 L1179.0,313.6 L1180.0,312.0 L1181.0,315.7 L1182.0,310.3 L1183.0,306.6 L1184.0,308.0 L1185.0,308.1 L1186.0,306.6 L1187.0,307.5 L1188.0,307.7 L1189.0,309.5 L1190.0,312.9 L1191.0,309.5 L1192.0,310.5 L1193.0,315.0 L1194.0,317.5 L1195.0,317.7 L1196.0,316.1 L1197.0,314.9 L1198.0,308.6 L1199.0,308.1 L1200.0,315.4 L1201.0,314.3 L1202.0,310.2 L1203.0,309.0 L1204.0,307.8 L1205.0,313.4 L1206.0,318.7 L1207.0,314.8 L1208.0,315.1 L1209.0,307.9 L1210.0,310.0 L1211.0,312.1 L1212.0,303.4 L1213.0,308.8 L1214.0,313.5 L1215.0,308.4 L1216.0,313.3 L1217.0,313.7 L1218.0,315.5 L1219.0,319.1 L1220.0,315.1 L1221.0,313.4 L1222.0,312.8 L1223.0,312.3 L1224.0,312.0 L1225.0,311.8 L1226.0,310.9 L1227.0,310.3 L1228.0,308.7 L1229.0,307.7 L1230.0,309.8 L1231.0,308.9 L1232.0,312.7 L1233.0,318.4 L1234.0,317.2 L1235.0,310.0 L1236.0,307.6 L1237.0,304.1 L1238.0,311.4 L1239.0,309.5 L1240.0,306.5 L1241.0,309.0 L1242.0,308.5 L1243.0,312.0 L1244.0,308.9 L1245.0,307.2 L1246.0,303.1 L1247.0,307.6 L1248.0,313.7 L1249.0,312.4 L1250.0,319.0 L1251.0,308.6 L1252.0,312.1 L1253.0,311.9 L1254.0,313.3 L1255.0,311.1 L1256.0,309.8 L1257.0,309.9 L1258.0,310.5 L1259.0,309.8 L1260.0,308.7 L1261.0,312.5 L1262.0,310.7 L1263.0,321.0 L1264.0,312.9 L1265.0,306.5 L1266.0,311.5 L1267.0,317.6 L1268.0,315.4 L1269.0,309.7 L1270.0,316.9 L1270.0,307.8 L1271.0,314.9 L1272.0,309.9 L1273.0,303.8 L1274.0,311.7 L1275.0,321.8 L1276.0,315.0 L1277.0,309.5 L1278.0,307.9 L1279.0,308.2 L1280.0,313.1 L1281.0,307.7 L1282.0,298.8 L1283.0,309.3 L1284.0,309.2 L1285.0,313.2 L1286.0,303.6 L1287.0,296.3 L1288.0,302.2 L1289.0,297.5 L1290.0,297.6 L1291.0,304.0 L1292.0,302.9 L1293.0,307.4 L1294.0,309.1 L1295.0,307.1 L1296.0,309.0 L1297.0,303.0 L1298.0,300.5 L1299.0,303.3 L1300.0,309.8 L1301.0,308.7 L1302.0,308.5 L1303.0,308.3 L1304.0,295.4 L1305.0,301.8 L1306.0,311.3 L1307.0,293.1 L1308.0,296.6 L1309.0,292.7 L1310.0,290.3 L1311.0,283.0 L1312.0,289.6 L1313.0,292.1 L1314.0,289.1 L1315.0,296.9 L1316.0,298.7 L1317.0,293.0 L1318.0,287.8 L1319.0,301.9 L1320.0,291.5 L1321.0,293.9 L1322.0,291.7 L1323.0,297.8" fill="none" stroke="#aca246" stroke-width="1.1" stroke-linejoin="round"/><path d="M408.4,395.0 L409.3,396.0 L410.2,396.2 L411.1,396.7 L412.0,395.1 L412.9,395.4 L413.8,394.8 L414.7,394.2 L415.6,393.4 L416.5,395.2 L417.4,395.9 L418.3,393.1 L419.2,394.2 L420.1,393.0 L421.0,393.4 L421.9,393.5 L422.8,393.4 L422.8,401.2 L421.9,400.3 L421.0,401.9 L420.1,402.1 L419.2,399.6 L418.3,402.0 L417.4,400.5 L416.5,402.1 L415.6,400.4 L414.7,401.4 L413.8,401.2 L412.9,403.3 L412.0,402.1 L411.1,403.4 L410.2,403.0 L409.3,401.8 L408.4,403.8Z" fill="#cacaca" stroke="#cacaca" stroke-width="1"/><path d="M444.7,417.0 L445.6,417.3 L446.5,421.6 L447.4,417.2 L448.3,421.5 L449.2,416.8 L450.1,419.1 L451.0,419.8 L451.9,417.9 L452.8,420.7 L453.7,419.7 L454.6,421.5 L455.5,421.6 L456.4,420.2 L457.3,417.8 L458.2,422.1 L459.1,420.2 L460.0,420.7 L460.9,420.1 L461.8,418.0 L462.7,421.4 L463.6,420.2 L463.6,434.6 L462.7,433.0 L461.8,434.9 L460.9,436.6 L460.0,434.6 L459.1,431.7 L458.2,433.5 L457.3,436.7 L456.4,435.5 L455.5,430.9 L454.6,432.8 L453.7,432.0 L452.8,435.7 L451.9,434.2 L451.0,431.6 L450.1,430.9 L449.2,436.0 L448.3,430.9 L447.4,432.3 L446.5,435.3 L445.6,434.7 L444.7,436.6Z" fill="#cacaca" stroke="#cacaca" stroke-width="1"/><path d="M482.9,422.9 L483.8,420.0 L484.7,419.9 L485.6,421.8 L486.5,419.6 L487.4,424.1 L488.3,424.2 L489.2,420.0 L490.1,422.8 L491.0,421.4 L491.9,419.4 L492.8,420.2 L493.7,421.0 L494.6,423.8 L495.5,421.5 L496.4,421.5 L497.3,421.1 L498.2,423.8 L499.1,419.5 L500.0,422.8 L500.9,423.0 L501.8,419.6 L502.7,420.6 L503.6,420.3 L504.5,423.5 L505.4,422.5 L506.3,420.6 L506.3,435.3 L505.4,433.5 L504.5,432.4 L503.6,434.9 L502.7,432.4 L501.8,432.2 L500.9,431.0 L500.0,433.2 L499.1,433.8 L498.2,431.1 L497.3,432.8 L496.4,434.1 L495.5,431.6 L494.6,433.1 L493.7,434.0 L492.8,434.7 L491.9,431.4 L491.0,431.4 L490.1,431.7 L489.2,435.4 L488.3,433.2 L487.4,435.5 L486.5,431.7 L485.6,433.2 L484.7,431.8 L483.8,434.6 L482.9,431.5Z" fill="#cacaca" stroke="#cacaca" stroke-width="1"/><path d="M582.9,418.3 L583.8,421.9 L584.7,418.2 L585.6,418.3 L586.5,421.3 L587.4,421.8 L588.3,419.6 L589.2,420.3 L590.1,417.5 L591.0,419.3 L591.9,422.6 L592.8,420.0 L593.7,418.4 L594.6,420.2 L595.5,418.6 L596.4,418.5 L597.3,419.3 L598.2,422.1 L599.1,420.2 L600.0,418.4 L600.0,431.9 L599.1,435.1 L598.2,436.6 L597.3,434.0 L596.4,432.6 L595.5,431.7 L594.6,435.5 L593.7,436.6 L592.8,434.5 L591.9,434.7 L591.0,431.7 L590.1,434.2 L589.2,436.8 L588.3,431.5 L587.4,431.5 L586.5,436.4 L585.6,433.5 L584.7,432.7 L583.8,434.1 L582.9,434.9Z" fill="#cacaca" stroke="#cacaca" stroke-width="1"/><path d="M621.8,419.6 L622.7,421.0 L623.6,422.5 L624.5,421.6 L625.4,423.4 L626.3,420.0 L627.2,423.9 L628.1,421.9 L629.0,422.6 L629.9,419.8 L630.8,421.2 L631.7,420.2 L632.6,421.8 L633.5,424.2 L634.4,422.9 L635.3,420.8 L636.2,421.9 L637.1,422.6 L638.0,420.3 L638.9,422.1 L639.8,424.1 L640.7,422.4 L641.6,420.5 L642.5,424.2 L643.4,422.1 L643.4,434.8 L642.5,433.4 L641.6,431.7 L640.7,431.9 L639.8,432.9 L638.9,430.7 L638.0,432.5 L637.1,432.7 L636.2,431.5 L635.3,434.3 L634.4,433.8 L633.5,431.5 L632.6,433.8 L631.7,432.9 L630.8,434.4 L629.9,435.4 L629.0,434.1 L628.1,432.1 L627.2,431.5 L626.3,430.9 L625.4,431.7 L624.5,432.5 L623.6,434.6 L622.7,435.3 L621.8,430.8Z" fill="#cacaca" stroke="#cacaca" stroke-width="1"/><path d="M776.2,422.4 L777.1,423.3 L778.0,421.8 L778.9,420.6 L779.8,420.2 L780.7,421.8 L781.6,422.0 L782.5,424.1 L783.4,423.6 L784.3,421.1 L785.2,424.3 L786.1,420.6 L787.0,421.0 L787.9,423.1 L788.8,423.4 L789.7,424.0 L790.6,421.0 L790.6,435.4 L789.7,434.7 L788.8,432.2 L787.9,433.1 L787.0,434.2 L786.1,432.9 L785.2,431.9 L784.3,432.7 L783.4,432.8 L782.5,434.9 L781.6,435.6 L780.7,435.0 L779.8,435.6 L778.9,436.4 L778.0,433.0 L777.1,433.9 L776.2,434.9Z" fill="#cacaca" stroke="#cacaca" stroke-width="1"/><path d="M807.1,414.2 L808.0,409.8 L808.9,414.2 L809.8,411.1 L810.7,408.5 L811.6,410.3 L812.5,410.9 L813.4,409.4 L814.3,408.7 L815.2,412.3 L816.1,408.3 L817.0,407.5 L817.9,408.2 L818.8,409.2 L819.7,410.7 L820.6,411.2 L821.5,407.5 L821.5,420.9 L820.6,421.1 L819.7,423.5 L818.8,420.8 L817.9,425.4 L817.0,426.2 L816.1,426.2 L815.2,422.7 L814.3,423.3 L813.4,426.2 L812.5,422.6 L811.6,424.7 L810.7,424.3 L809.8,425.8 L808.9,423.3 L808.0,425.4 L807.1,425.8Z" fill="#cacaca" stroke="#cacaca" stroke-width="1"/><path d="M386.3,384.1 L386.4,386.6 L386.6,384.9 L386.7,387.8 L386.9,387.3 L387.1,392.2 L387.3,388.8 L387.6,392.3 L387.8,391.2 L388.0,395.6 L388.3,394.2 L388.6,397.2 L388.8,396.8 L389.1,400.2 L389.4,398.2 L389.6,402.4 L389.9,400.9 L390.2,404.2 L390.4,403.0 L390.7,406.6 L391.0,405.2 L391.2,409.0 L391.4,407.7 L391.7,409.7 L391.9,407.7 L392.1,411.3 L392.3,407.5 L392.6,410.0 L392.8,407.0 L393.0,410.6 L393.2,405.4 L393.4,406.1 L393.6,402.7 L393.8,403.5 L394.0,398.0 L394.2,399.6 L394.4,395.9 L394.6,398.6 L394.8,394.1 L395.1,394.4 L395.3,392.4 L395.6,395.0 L395.8,392.3 L396.1,394.8 L396.4,393.2 L396.6,396.5 L396.9,395.9 L397.2,399.2 L397.5,397.3 L397.9,401.9 L398.2,399.6 L398.5,404.2 L398.8,403.1 L399.1,406.6 L399.4,406.9 L399.8,409.4 L400.1,408.1 L400.4,411.5 L400.6,410.1 L400.9,414.1 L401.2,411.5 L401.4,414.1 L401.7,410.3 L401.9,413.0 L402.2,410.1 L402.4,412.2 L402.6,408.9 L402.9,408.8 L403.1,406.1 L403.3,406.1 L403.5,402.2 L403.6,403.0 L403.8,399.2 L404.0,399.8 L404.2,396.3 L404.4,397.8 L404.6,395.3 L404.8,397.5 L405.0,394.9 L405.2,396.7 L405.5,395.1 L405.7,397.3 L405.9,396.3 L406.2,399.9 L406.4,399.1 L406.7,401.7 L406.9,401.7 L407.2,404.9 L407.4,404.4 L407.6,407.7 L407.8,406.7 L408.0,410.9 L408.1,408.9 L408.3,412.4 L408.4,411.2 L408.4,395.0 L409.3,401.8 L410.2,396.2 L411.1,403.4 L412.0,395.1 L412.9,403.3 L413.8,394.8 L414.7,401.4 L415.6,393.4 L416.5,402.1 L417.4,395.9 L418.3,402.0 L419.2,394.2 L420.1,402.1 L421.0,393.4 L421.9,400.3 L422.8,393.4 L423.5,397.2 L423.7,394.9 L423.8,396.0 L424.0,391.6 L424.3,393.5 L424.5,388.8 L424.8,392.7 L425.0,386.2 L425.3,387.5 L425.6,385.0 L425.9,387.7 L426.0,386.1 L426.2,388.3 L426.4,386.3 L426.5,390.8 L426.7,388.3 L426.9,392.7 L427.1,390.3 L427.3,395.6 L427.4,391.8 L427.6,398.2 L427.8,397.6 L428.0,401.0 L428.2,400.3 L428.4,403.8 L428.6,402.5 L428.9,404.8 L429.1,403.8 L429.3,405.3 L429.6,403.8 L429.8,406.7 L430.1,403.1 L430.4,404.0 L430.7,400.8 L431.0,403.1 L431.3,397.8 L431.7,399.6 L432.0,392.8 L432.3,396.5 L432.6,391.9 L433.0,393.7 L433.3,389.7 L433.7,391.7 L434.0,388.4 L434.9,390.0 L436.0,385.0 L437.0,388.8 L438.1,383.4 L439.0,387.0 L439.8,383.4 L439.9,389.0 L440.1,385.9 L440.2,390.9 L440.3,388.7 L440.4,392.2 L440.5,390.1 L440.6,393.7 L440.7,391.3 L440.8,395.6 L440.9,393.7 L441.0,397.9 L441.0,396.7 L441.1,399.7 L441.2,397.9 L441.2,402.2 L441.3,400.7 L441.4,403.4 L441.4,402.1 L441.5,406.1 L441.5,405.9 L441.6,408.8 L441.7,407.7 L441.7,410.5 L441.8,409.3 L441.8,414.0 L441.9,412.5 L441.9,415.8 L442.0,414.5 L442.1,418.0 L442.1,416.8 L442.2,419.0 L442.2,417.8 L442.3,421.5 L442.3,418.9 L442.4,425.2 L442.4,423.4 L442.5,426.5 L442.5,426.2 L442.6,429.9 L442.6,427.8 L442.6,432.1 L442.7,431.3 L442.7,434.8 L442.7,434.3 L442.8,436.8 L442.8,435.1 L442.9,438.7 L442.9,437.9 L442.9,441.8 L443.0,439.9 L443.0,442.4 L443.0,441.3 L443.1,445.4 L443.1,442.1 L443.2,445.8 L443.2,443.7 L443.2,446.9 L443.3,445.0 L443.4,447.0 L443.4,445.0 L443.5,446.5 L443.6,443.8 L443.7,444.6 L443.7,441.2 L443.8,443.3 L443.9,438.6 L444.0,440.6 L444.1,436.3 L444.2,437.2 L444.2,430.3 L444.3,434.6 L444.4,430.0 L444.4,431.0 L444.5,428.0 L444.6,429.3 L444.6,422.8 L444.7,427.2 L444.7,424.7 L444.7,417.0 L445.6,434.7 L446.5,421.6 L447.4,432.3 L448.3,421.5 L449.2,436.0 L450.1,419.1 L451.0,431.6 L451.9,417.9 L452.8,435.7 L453.7,419.7 L454.6,432.8 L455.5,421.6 L456.4,435.5 L457.3,417.8 L458.2,433.5 L459.1,420.2 L460.0,434.6 L460.9,420.1 L461.8,434.9 L462.7,421.4 L463.6,434.6 L463.8,427.7 L463.9,425.7 L463.9,427.3 L463.9,423.7 L463.9,425.1 L464.0,421.4 L464.0,421.9 L464.1,419.4 L464.1,420.0 L464.2,416.2 L464.2,417.1 L464.2,412.1 L464.3,414.0 L464.3,410.2 L464.4,411.4 L464.5,406.6 L464.5,408.5 L464.6,404.0 L464.6,404.7 L464.7,402.1 L464.8,403.0 L464.8,400.3 L464.9,401.4 L465.0,398.3 L465.1,400.5 L465.1,397.8 L465.2,399.3 L465.3,397.9 L465.4,400.0 L465.4,397.8 L465.5,403.2 L465.5,399.9 L465.6,402.0 L465.7,400.4 L465.7,404.2 L465.8,400.0 L465.9,406.6 L466.0,404.3 L466.0,408.8 L466.1,407.2 L466.2,411.0 L466.3,410.5 L466.3,413.8 L466.4,412.1 L466.5,417.4 L466.6,416.0 L466.7,418.7 L466.8,418.8 L466.8,423.0 L466.9,421.4 L467.0,425.5 L467.1,424.7 L467.2,427.2 L467.3,426.6 L467.3,430.4 L467.4,429.2 L467.5,432.8 L467.6,431.2 L467.7,434.0 L467.8,432.9 L467.8,437.0 L467.9,434.2 L468.0,437.5 L468.1,436.2 L468.2,438.6 L468.2,436.6 L468.3,439.0 L468.4,436.0 L468.5,437.5 L468.6,432.8 L468.7,436.4 L468.8,432.9 L468.9,435.3 L468.9,431.7 L469.0,433.3 L469.1,429.6 L469.2,430.1 L469.3,426.8 L469.4,427.8 L469.5,423.9 L469.6,424.1 L469.7,419.9 L469.8,420.7 L469.8,418.2 L469.9,418.2 L470.0,412.0 L470.1,417.7 L470.2,409.4 L470.3,412.4 L470.4,406.2 L470.5,410.0 L470.6,407.1 L470.6,407.6 L470.7,403.2 L470.8,405.7 L470.9,402.8 L471.0,405.2 L471.1,402.1 L471.2,403.7 L471.3,402.2 L471.4,404.8 L471.5,402.9 L471.6,405.0 L471.7,403.6 L471.9,407.4 L472.0,405.6 L472.1,410.6 L472.2,408.3 L472.3,413.7 L472.4,411.8 L472.5,417.8 L472.6,415.0 L472.7,419.4 L472.8,417.6 L473.0,422.0 L473.1,421.7 L473.2,425.7 L473.3,423.8 L473.4,429.7 L473.6,425.8 L473.7,428.3 L473.8,426.6 L474.0,428.9 L474.1,427.3 L474.2,428.8 L474.4,425.6 L474.5,428.9 L474.6,424.7 L474.7,427.5 L474.9,423.6 L475.0,424.8 L475.1,421.4 L475.3,422.1 L475.4,419.4 L475.5,420.8 L475.7,415.3 L475.8,418.1 L475.9,413.0 L476.1,414.8 L476.2,411.0 L476.4,411.3 L476.5,407.4 L476.7,408.7 L476.8,405.4 L477.0,406.0 L477.1,402.9 L477.2,403.5 L477.4,396.8 L477.5,401.5 L477.7,397.6 L477.8,399.1 L478.0,393.1 L478.1,398.0 L478.3,394.5 L478.4,397.7 L478.5,394.8 L478.7,396.8 L478.8,395.4 L479.0,398.5 L479.2,395.3 L479.3,399.6 L479.5,397.4 L479.7,400.3 L479.9,399.0 L480.0,405.7 L480.2,401.2 L480.4,405.8 L480.6,403.6 L480.8,407.5 L480.9,407.1 L481.1,410.6 L481.3,410.0 L481.4,413.1 L481.6,411.0 L481.7,415.8 L481.9,414.3 L482.0,419.0 L482.2,418.2 L482.3,420.7 L482.4,420.4 L482.6,424.1 L482.7,422.3 L482.8,425.9 L482.9,422.7 L482.9,426.6 L482.9,422.9 L483.8,434.6 L484.7,419.9 L485.6,433.2 L486.5,419.6 L487.4,435.5 L488.3,424.2 L489.2,435.4 L490.1,422.8 L491.0,431.4 L491.9,419.4 L492.8,434.7 L493.7,421.0 L494.6,433.1 L495.5,421.5 L496.4,434.1 L497.3,421.1 L498.2,431.1 L499.1,419.5 L500.0,433.2 L500.9,423.0 L501.8,432.2 L502.7,420.6 L503.6,434.9 L504.5,423.5 L505.4,433.5 L506.3,420.6 L506.5,425.6 L506.5,430.5 L506.6,425.8 L506.6,426.0 L506.7,423.6 L506.8,424.2 L506.8,421.4 L506.9,422.2 L507.0,419.1 L507.1,419.8 L507.2,415.6 L507.3,416.8 L507.4,414.0 L507.5,413.7 L507.6,410.0 L507.7,412.6 L507.8,408.4 L507.9,408.3 L508.0,405.8 L508.1,406.5 L508.2,403.3 L508.3,403.3 L508.4,399.9 L508.6,401.3 L508.7,399.1 L508.8,400.5 L508.9,397.2 L509.0,399.9 L509.2,396.6 L509.3,398.1 L509.4,395.4 L509.5,399.0 L509.7,396.2 L509.8,399.7 L509.9,397.6 L510.0,400.4 L510.2,397.0 L510.3,402.8 L510.4,400.5 L510.6,407.0 L510.7,404.1 L510.9,407.8 L511.0,406.4 L511.2,409.4 L511.3,408.8 L511.5,413.7 L511.6,412.6 L511.7,415.3 L511.9,414.4 L512.0,418.6 L512.2,417.2 L512.3,422.0 L512.5,420.0 L512.6,424.0 L512.8,423.0 L512.9,425.4 L513.1,423.8 L513.2,427.2 L513.4,425.5 L513.5,430.3 L513.7,427.6 L513.8,430.2 L514.0,426.7 L514.2,428.9 L514.4,423.9 L514.5,428.2 L514.7,424.5 L514.9,425.6 L515.1,422.1 L515.3,424.3 L515.5,420.7 L515.7,421.1 L515.8,417.6 L516.0,418.0 L516.2,414.6 L516.4,415.6 L516.6,412.0 L516.8,412.4 L516.9,408.9 L517.1,410.5 L517.3,405.2 L517.4,410.3 L517.6,404.6 L517.8,406.4 L517.9,402.9 L518.1,403.8 L518.2,401.8 L518.4,405.3 L518.6,401.9 L518.7,405.5 L518.9,403.9 L519.0,407.6 L519.1,406.4 L519.3,409.8 L519.4,409.5 L519.5,412.5 L519.7,408.7 L519.8,415.6 L519.9,415.0 L520.0,419.2 L520.2,417.7 L520.3,421.2 L520.4,419.1 L520.5,423.8 L520.7,422.0 L520.8,427.4 L520.9,423.7 L521.0,426.1 L521.2,424.6 L521.3,427.0 L521.4,423.1 L521.5,425.1 L521.6,422.2 L521.7,424.5 L521.8,419.5 L521.9,422.9 L522.0,417.7 L522.1,418.5 L522.2,415.3 L522.3,416.8 L522.4,412.6 L522.5,413.9 L522.6,409.4 L522.7,410.5 L522.8,405.9 L522.9,407.1 L523.0,403.6 L523.1,405.7 L523.2,400.4 L523.3,402.3 L523.4,397.8 L523.5,399.1 L523.6,397.3 L523.7,398.1 L523.8,394.7 L523.9,397.5 L524.0,395.1 L524.1,397.6 L524.2,394.7 L524.3,396.9 L524.4,396.0 L524.5,398.3 L524.5,397.1 L524.6,399.9 L524.7,398.1 L524.8,402.1 L524.9,399.3 L525.0,403.6 L525.0,402.3 L525.1,406.2 L525.2,404.7 L525.3,409.8 L525.4,407.7 L525.5,412.1 L525.5,410.9 L525.6,416.5 L525.7,413.6 L525.8,417.1 L525.9,416.3 L526.0,420.4 L526.1,418.5 L526.1,423.1 L526.2,422.2 L526.3,426.4 L526.4,424.3 L526.5,428.6 L526.6,424.1 L526.6,429.4 L526.7,425.3 L526.8,431.7 L526.9,429.9 L527.0,431.8 L527.1,430.2 L527.2,432.9 L527.3,430.1 L527.5,431.9 L527.6,429.6 L527.8,431.2 L527.9,426.8 L528.0,428.9 L528.2,423.9 L528.3,425.8 L528.4,419.9 L528.6,421.8 L528.7,417.8 L528.9,418.7 L529.0,415.3 L529.2,416.9 L529.3,412.1 L529.5,414.4 L529.6,409.9 L529.8,412.2 L530.0,409.7 L530.5,410.9 L531.1,409.5 L531.7,413.7 L532.3,413.0 L533.0,418.1 L533.7,415.6 L534.4,418.3 L534.6,413.0 L534.8,417.2 L535.1,413.9 L535.3,414.1 L535.5,410.7 L535.8,413.2 L536.0,408.6 L536.2,412.6 L536.5,406.5 L536.7,407.0 L537.0,402.3 L537.2,404.1 L537.5,399.3 L537.7,401.1 L538.0,397.5 L538.2,398.2 L538.5,395.0 L538.7,395.3 L539.0,392.3 L539.2,393.7 L539.4,391.2 L539.6,393.6 L539.9,389.7 L540.1,393.3 L540.3,389.9 L540.4,393.7 L540.6,391.3 L540.7,394.3 L540.8,392.4 L540.9,395.6 L541.1,393.3 L541.2,396.4 L541.3,395.6 L541.4,399.5 L541.5,398.1 L541.6,400.4 L541.8,400.4 L541.9,403.1 L542.0,400.7 L542.1,405.6 L542.2,405.3 L542.3,409.5 L542.4,408.7 L542.5,413.8 L542.6,410.6 L542.8,415.2 L542.9,414.6 L543.0,417.6 L543.1,417.0 L543.2,421.5 L543.3,420.2 L543.4,423.8 L543.5,421.1 L543.6,425.0 L543.7,423.9 L543.8,427.8 L543.9,424.9 L544.0,429.1 L544.2,427.2 L544.3,430.9 L544.4,428.4 L544.5,432.9 L544.6,429.1 L544.7,432.6 L544.9,429.3 L545.0,432.4 L545.2,427.8 L545.3,434.5 L545.5,427.8 L545.6,429.5 L545.8,424.2 L545.9,428.6 L546.1,424.1 L546.2,426.2 L546.4,421.8 L546.5,424.7 L546.7,418.6 L546.8,420.9 L547.0,414.1 L547.1,417.6 L547.3,412.8 L547.4,415.0 L547.6,410.5 L547.7,410.8 L547.9,407.6 L548.1,409.4 L548.2,404.8 L548.4,406.9 L548.5,402.6 L548.7,404.3 L548.8,402.0 L549.0,404.1 L549.1,400.8 L549.5,401.7 L549.9,400.4 L550.3,402.6 L550.6,401.5 L551.0,404.2 L551.4,403.0 L551.8,407.0 L552.2,405.3 L552.5,409.8 L552.9,409.8 L553.2,413.6 L553.5,411.7 L553.7,415.0 L553.8,414.6 L554.0,420.7 L554.1,416.6 L554.3,422.2 L554.4,419.3 L554.5,423.6 L554.7,421.9 L554.8,425.3 L554.9,425.6 L555.0,428.9 L555.2,425.8 L555.3,431.1 L555.4,430.5 L555.5,434.6 L555.6,432.0 L555.7,436.2 L555.9,434.4 L556.0,440.3 L556.1,435.0 L556.2,437.7 L556.3,436.4 L556.5,440.0 L556.6,434.9 L556.6,437.2 L556.7,435.4 L556.8,436.7 L556.9,432.8 L557.0,435.6 L557.0,432.2 L557.1,433.4 L557.2,430.2 L557.3,431.4 L557.3,427.9 L557.4,428.4 L557.5,425.1 L557.6,427.0 L557.7,423.2 L557.7,424.5 L557.8,420.5 L557.9,421.8 L558.0,416.8 L558.0,418.2 L558.1,414.1 L558.2,415.9 L558.3,411.3 L558.4,413.5 L558.5,410.1 L558.6,411.2 L558.6,406.6 L558.7,408.7 L558.8,405.4 L558.9,406.2 L559.0,402.7 L559.1,404.5 L559.2,399.3 L559.3,404.0 L559.4,400.9 L560.0,402.4 L560.6,400.7 L561.2,403.8 L561.9,401.1 L562.5,408.5 L563.2,406.3 L563.8,408.9 L564.1,406.3 L564.3,408.3 L564.5,404.6 L564.8,405.5 L565.0,401.8 L565.2,403.4 L565.5,399.5 L565.7,400.5 L565.9,396.8 L566.2,398.1 L566.4,394.0 L566.7,395.2 L566.9,391.0 L567.2,394.4 L567.4,389.0 L567.7,391.8 L568.0,388.6 L568.2,390.8 L568.5,388.7 L568.7,391.0 L568.9,389.4 L569.1,393.4 L569.4,391.2 L569.6,393.5 L569.8,392.5 L570.1,397.1 L570.3,393.8 L570.6,398.1 L570.8,396.0 L571.1,400.3 L571.3,398.8 L571.6,401.1 L571.8,400.1 L572.1,403.8 L572.4,402.5 L572.6,408.5 L572.9,403.0 L573.1,408.8 L573.4,408.6 L573.6,411.4 L573.9,410.6 L574.1,415.2 L574.3,413.0 L574.4,418.3 L574.6,414.9 L574.8,419.0 L574.9,417.8 L575.1,421.0 L575.2,420.1 L575.4,422.7 L575.6,420.4 L575.7,425.7 L575.9,424.2 L576.1,428.1 L576.2,427.0 L576.4,433.7 L576.6,429.9 L576.7,433.7 L576.9,432.2 L577.1,435.9 L577.2,434.7 L577.4,437.7 L577.6,437.2 L577.7,441.1 L577.9,440.6 L578.0,445.2 L578.2,442.6 L578.4,445.3 L578.5,444.1 L578.7,447.2 L578.8,446.2 L579.0,449.4 L579.1,447.8 L579.2,452.3 L579.4,449.6 L579.5,451.2 L579.6,450.4 L579.8,452.2 L579.9,451.0 L580.0,453.6 L580.1,450.6 L580.3,452.6 L580.4,450.2 L580.5,451.8 L580.7,449.8 L580.8,450.2 L580.9,447.7 L581.0,449.2 L581.2,446.2 L581.3,447.0 L581.4,443.6 L581.5,445.0 L581.6,441.3 L581.7,441.9 L581.8,437.7 L581.9,439.2 L582.0,435.9 L582.1,436.9 L582.2,432.1 L582.2,433.8 L582.3,429.6 L582.4,431.0 L582.5,427.0 L582.5,428.3 L582.6,424.2 L582.7,426.8 L582.7,422.2 L582.8,424.1 L582.8,420.5 L582.9,423.3 L582.9,419.7 L582.9,418.3 L583.8,434.1 L584.7,418.2 L585.6,433.5 L586.5,421.3 L587.4,431.5 L588.3,419.6 L589.2,436.8 L590.1,417.5 L591.0,431.7 L591.9,422.6 L592.8,434.5 L593.7,418.4 L594.6,435.5 L595.5,418.6 L596.4,432.6 L597.3,419.3 L598.2,436.6 L599.1,420.2 L600.0,431.9 L600.6,427.2 L600.6,424.6 L600.7,427.1 L600.8,420.4 L600.9,424.3 L600.9,421.9 L601.0,422.8 L601.1,418.8 L601.2,421.4 L601.3,415.5 L601.4,417.0 L601.5,414.0 L601.6,414.9 L601.8,410.9 L601.9,412.3 L602.0,407.9 L602.1,411.7 L602.2,404.8 L602.4,408.7 L602.5,402.8 L602.6,407.0 L602.7,400.7 L602.8,404.3 L603.0,398.4 L603.1,400.8 L603.2,397.6 L603.3,400.6 L603.4,397.0 L603.5,399.5 L603.6,397.8 L603.7,401.0 L603.8,397.9 L603.8,401.5 L603.9,399.3 L604.0,403.7 L604.1,401.7 L604.1,404.9 L604.2,402.7 L604.3,407.1 L604.3,405.5 L604.4,409.8 L604.5,408.8 L604.5,412.2 L604.6,411.9 L604.7,414.7 L604.8,413.8 L604.8,418.1 L604.9,418.1 L605.0,421.4 L605.1,420.4 L605.1,424.1 L605.2,421.7 L605.3,426.8 L605.4,426.0 L605.4,429.4 L605.5,427.7 L605.6,432.1 L605.7,430.9 L605.8,434.0 L605.8,432.2 L605.9,436.4 L606.0,433.8 L606.1,437.8 L606.2,434.5 L606.3,438.5 L606.4,434.7 L606.5,438.6 L606.6,435.4 L606.7,438.2 L606.8,434.9 L606.9,440.0 L607.0,434.2 L607.1,435.3 L607.2,433.1 L607.3,434.7 L607.4,431.2 L607.5,432.0 L607.7,428.7 L607.8,430.2 L607.9,426.2 L608.0,427.0 L608.1,424.3 L608.3,424.1 L608.4,421.2 L608.5,421.4 L608.6,418.2 L608.8,419.6 L608.9,414.7 L609.0,416.8 L609.1,412.9 L609.3,413.5 L609.4,410.1 L609.5,411.3 L609.6,403.8 L609.7,408.5 L609.9,405.3 L610.0,406.0 L610.1,402.9 L610.2,403.4 L610.3,401.2 L610.4,402.7 L610.6,398.9 L610.7,401.6 L610.8,398.3 L610.9,400.7 L611.1,394.4 L611.3,399.5 L611.6,397.5 L611.8,402.6 L612.0,400.3 L612.2,403.9 L612.4,403.3 L612.6,407.4 L612.8,406.6 L613.0,409.7 L613.2,409.0 L613.4,413.3 L613.6,412.7 L613.8,416.1 L614.0,414.8 L614.2,420.1 L614.4,415.6 L614.6,419.1 L614.7,414.5 L614.9,415.7 L615.0,411.4 L615.2,414.4 L615.3,411.6 L615.5,412.2 L615.6,405.2 L615.8,408.8 L615.9,406.0 L616.1,406.8 L616.2,402.9 L616.3,404.1 L616.5,399.0 L616.6,400.9 L616.8,398.0 L616.9,398.5 L617.1,395.7 L617.2,398.6 L617.4,394.2 L617.6,397.3 L617.9,395.2 L618.1,398.3 L618.4,395.6 L618.7,399.4 L618.9,398.5 L619.2,402.6 L619.4,400.5 L619.7,404.5 L619.9,404.5 L620.1,407.9 L620.3,406.2 L620.4,409.8 L620.5,407.9 L620.7,412.9 L620.8,410.7 L620.9,414.5 L621.0,412.7 L621.1,416.1 L621.2,413.8 L621.3,418.4 L621.3,417.6 L621.4,420.9 L621.5,417.2 L621.6,424.1 L621.6,422.4 L621.7,425.1 L621.7,423.4 L621.8,426.5 L621.8,419.6 L622.7,435.3 L623.6,422.5 L624.5,432.5 L625.4,423.4 L626.3,430.9 L627.2,423.9 L628.1,432.1 L629.0,422.6 L629.9,435.4 L630.8,421.2 L631.7,432.9 L632.6,421.8 L633.5,431.5 L634.4,422.9 L635.3,434.3 L636.2,421.9 L637.1,432.7 L638.0,420.3 L638.9,430.7 L639.8,424.1 L640.7,431.9 L641.6,420.5 L642.5,433.4 L643.4,422.1 L643.8,426.4 L643.9,428.0 L643.9,424.3 L644.0,426.3 L644.1,422.8 L644.1,425.3 L644.2,420.7 L644.3,422.8 L644.4,416.2 L644.5,419.5 L644.6,415.7 L644.6,417.7 L644.7,413.0 L644.8,414.8 L645.0,410.1 L645.1,412.0 L645.2,408.3 L645.3,409.4 L645.4,405.9 L645.5,406.1 L645.6,403.0 L645.7,404.1 L645.8,401.1 L645.9,402.3 L646.0,398.1 L646.2,399.7 L646.3,396.2 L646.4,400.1 L646.5,393.7 L646.6,396.7 L646.7,394.5 L646.8,396.5 L646.9,395.0 L647.0,397.0 L647.1,395.8 L647.2,399.2 L647.3,397.3 L647.3,399.3 L647.4,398.6 L647.5,402.1 L647.6,400.4 L647.7,404.1 L647.8,404.3 L647.9,407.0 L648.0,404.7 L648.1,410.4 L648.2,409.5 L648.3,414.0 L648.4,412.4 L648.5,416.4 L648.6,415.1 L648.7,419.1 L648.8,417.9 L648.9,422.4 L649.0,419.8 L649.1,424.4 L649.2,422.0 L649.3,426.1 L649.5,423.0 L649.6,426.7 L649.7,423.8 L649.9,427.0 L650.0,423.8 L650.2,426.2 L650.3,423.0 L650.5,426.2 L650.7,420.2 L650.8,422.7 L651.0,417.9 L651.2,419.3 L651.4,415.8 L651.5,416.9 L651.7,412.3 L651.9,413.0 L652.1,409.9 L652.3,410.5 L652.5,406.4 L652.6,407.3 L652.8,403.5 L653.0,404.6 L653.2,401.5 L653.3,401.9 L653.5,399.5 L653.7,400.4 L653.8,398.4 L654.0,400.9 L654.1,398.1 L654.3,400.5 L654.4,397.3 L654.5,400.6 L654.7,400.1 L654.8,405.3 L654.9,401.0 L655.0,405.9 L655.1,403.9 L655.2,406.8 L655.4,406.2 L655.5,410.3 L655.6,409.4 L655.7,415.7 L655.8,412.2 L655.9,417.3 L656.0,414.5 L656.1,421.3 L656.2,418.7 L656.3,421.6 L656.4,420.7 L656.5,423.4 L656.6,422.5 L656.7,426.4 L656.8,424.5 L656.9,426.2 L657.1,423.9 L657.2,425.8 L657.3,423.7 L657.4,424.7 L657.5,422.6 L657.5,424.1 L657.6,420.8 L657.7,421.7 L657.8,418.9 L657.9,418.5 L658.0,412.9 L658.1,416.7 L658.2,411.9 L658.3,414.0 L658.4,410.0 L658.5,409.9 L658.6,406.4 L658.7,407.6 L658.8,403.7 L658.9,404.6 L659.0,400.0 L659.1,401.7 L659.2,398.3 L659.3,400.4 L659.4,397.2 L659.5,398.4 L659.6,394.8 L659.8,396.7 L659.9,394.2 L660.0,396.5 L660.1,394.2 L660.2,398.8 L660.3,395.4 L660.4,399.2 L660.5,396.5 L660.6,400.0 L660.7,398.6 L660.8,401.8 L660.9,401.2 L661.1,404.3 L661.2,403.3 L661.3,406.5 L661.4,405.2 L661.5,408.9 L661.7,408.0 L661.8,411.7 L661.9,410.1 L662.0,415.3 L662.1,413.8 L662.3,417.3 L662.4,414.9 L662.5,420.7 L662.6,418.7 L662.8,423.3 L662.9,422.7 L663.0,425.9 L663.1,424.3 L663.2,429.2 L663.3,427.3 L663.5,430.5 L663.6,429.6 L663.7,432.3 L663.8,431.4 L663.9,434.4 L664.0,432.1 L664.1,436.2 L664.2,433.4 L664.3,436.9 L664.4,434.0 L664.5,437.6 L664.7,431.7 L664.8,437.2 L664.9,433.0 L665.0,436.2 L665.1,432.8 L665.2,433.8 L665.3,430.4 L665.4,432.3 L665.5,426.2 L665.6,430.3 L665.7,426.2 L665.8,427.3 L665.9,423.3 L666.0,424.4 L666.1,419.9 L666.2,423.6 L666.3,417.3 L666.4,420.0 L666.4,414.4 L666.5,416.3 L666.7,411.6 L666.8,413.1 L666.9,410.6 L667.0,411.3 L667.1,408.6 L667.2,409.8 L667.4,406.1 L667.9,406.3 L668.5,403.0 L669.2,403.1 L669.9,401.1 L670.6,402.3 L671.2,399.5 L671.8,402.3 L672.1,400.5 L672.3,404.9 L672.5,402.7 L672.7,406.2 L672.9,404.5 L673.1,409.1 L673.3,407.8 L673.6,411.7 L673.8,410.8 L674.1,414.4 L674.4,411.3 L674.7,414.3 L675.1,412.6 L675.6,414.5 L676.2,410.3 L676.8,411.1 L677.3,407.4 L677.9,409.9 L678.5,405.0 L679.1,406.5 L679.7,403.1 L680.2,404.4 L680.6,402.4 L680.9,405.5 L681.1,403.5 L681.3,406.0 L681.5,404.9 L681.7,408.2 L681.9,406.7 L682.1,411.1 L682.2,410.8 L682.4,415.2 L682.6,410.6 L682.7,419.3 L682.9,415.7 L683.0,419.0 L683.2,417.7 L683.4,420.8 L683.5,416.6 L683.7,420.3 L683.8,416.9 L684.0,418.4 L684.1,415.1 L684.3,418.1 L684.4,410.2 L684.6,413.7 L684.7,407.7 L684.9,411.6 L685.0,405.5 L685.1,407.2 L685.3,404.1 L685.4,404.6 L685.6,398.2 L685.7,401.9 L685.9,398.6 L686.0,400.2 L686.2,397.5 L686.3,400.7 L686.5,397.4 L686.6,401.1 L686.7,398.7 L686.8,401.1 L686.9,399.2 L687.0,405.6 L687.1,401.1 L687.2,405.1 L687.3,404.1 L687.4,408.4 L687.5,406.2 L687.6,410.4 L687.7,409.3 L687.8,415.0 L687.9,412.8 L688.0,417.2 L688.1,415.6 L688.2,419.3 L688.3,419.3 L688.4,422.4 L688.5,420.6 L688.6,424.6 L688.7,423.4 L688.8,427.4 L688.9,425.6 L689.0,428.2 L689.1,426.6 L689.2,428.6 L689.3,427.4 L689.4,429.7 L689.5,426.4 L689.6,431.2 L689.6,425.8 L689.7,428.4 L689.8,425.2 L689.9,428.5 L689.9,422.8 L690.0,425.1 L690.1,421.7 L690.1,423.1 L690.2,419.1 L690.3,419.9 L690.4,416.8 L690.4,417.8 L690.5,414.8 L690.6,415.2 L690.6,411.7 L690.7,415.4 L690.8,408.7 L690.9,410.2 L690.9,405.7 L691.0,407.3 L691.1,403.6 L691.2,404.7 L691.2,400.4 L691.3,401.3 L691.4,398.4 L691.5,398.7 L691.6,394.8 L691.6,396.6 L691.7,393.9 L691.8,395.1 L691.9,391.8 L692.0,393.2 L692.1,390.2 L692.2,393.4 L692.3,388.5 L692.4,391.5 L692.6,385.3 L692.8,390.3 L693.0,388.6 L693.2,391.1 L693.5,387.5 L693.7,392.4 L694.0,391.8 L694.2,396.2 L694.5,393.7 L694.7,397.9 L695.0,396.8 L695.2,402.0 L695.5,400.4 L695.8,404.9 L696.0,403.7 L696.3,407.2 L696.5,405.0 L696.8,409.0 L697.1,407.2 L697.5,413.1 L697.9,409.5 L698.3,413.5 L698.7,411.1 L699.1,414.3 L699.4,411.7 L699.8,416.7 L700.2,412.7 L700.5,417.7 L700.9,417.4 L701.2,421.4 L701.4,418.5 L701.5,425.7 L701.7,421.4 L701.8,425.2 L702.0,424.0 L702.1,427.3 L702.3,423.7 L702.4,430.9 L702.5,428.6 L702.6,433.0 L702.8,431.3 L702.9,435.6 L703.0,435.1 L703.2,438.2 L703.3,436.0 L703.5,439.1 L703.6,437.5 L703.8,441.1 L703.9,439.1 L704.1,440.7 L704.3,439.4 L704.5,443.4 L704.6,438.3 L704.8,439.0 L705.0,436.8 L705.2,438.1 L705.4,435.2 L705.6,436.5 L705.8,432.9 L706.0,434.4 L706.2,430.6 L706.4,431.7 L706.6,428.3 L706.8,429.1 L707.0,424.9 L707.2,425.8 L707.4,422.4 L707.6,423.1 L707.8,419.0 L708.0,421.4 L708.2,417.7 L708.4,419.3 L708.5,414.7 L708.7,416.9 L708.9,412.7 L709.0,413.3 L709.2,406.9 L709.3,411.6 L709.5,404.3 L709.6,407.8 L709.7,404.0 L709.9,405.2 L710.0,400.3 L710.1,401.6 L710.3,395.3 L710.4,399.2 L710.5,396.2 L710.7,398.2 L710.8,395.3 L711.0,397.5 L711.1,394.1 L711.3,396.0 L711.5,395.4 L711.6,398.2 L711.7,395.3 L711.8,397.6 L711.9,396.7 L712.0,399.7 L712.1,397.8 L712.2,403.3 L712.3,399.8 L712.4,402.9 L712.6,402.5 L712.7,405.8 L712.8,404.6 L712.9,408.1 L713.1,408.2 L713.2,411.6 L713.3,407.8 L713.4,413.3 L713.6,413.1 L713.7,416.2 L713.8,415.3 L713.9,420.2 L714.1,418.6 L714.2,422.1 L714.3,420.3 L714.4,424.5 L714.5,423.8 L714.7,427.0 L714.8,424.7 L714.9,429.5 L715.0,428.1 L715.1,431.6 L715.3,430.6 L715.4,433.8 L715.5,429.6 L715.6,435.3 L715.7,432.1 L715.8,435.6 L715.9,433.7 L716.0,438.1 L716.1,432.7 L716.2,434.3 L716.3,432.3 L716.4,433.5 L716.5,430.4 L716.6,432.0 L716.7,428.4 L716.8,430.9 L716.9,426.2 L716.9,429.1 L717.0,425.3 L717.1,426.6 L717.2,421.7 L717.3,423.2 L717.4,419.3 L717.4,420.2 L717.5,416.2 L717.6,417.7 L717.7,413.4 L717.8,415.4 L717.8,411.4 L717.9,412.2 L718.0,408.2 L718.1,409.4 L718.2,406.5 L718.3,407.4 L718.4,403.7 L718.5,405.8 L718.6,401.6 L718.7,404.1 L718.8,397.5 L719.4,400.7 L720.0,395.5 L720.6,396.7 L721.3,392.6 L721.9,396.0 L722.6,393.2 L723.2,397.7 L723.4,394.1 L723.5,398.6 L723.6,395.7 L723.7,398.8 L723.8,397.4 L723.9,403.2 L724.0,399.3 L724.2,403.0 L724.3,402.3 L724.4,408.6 L724.5,404.9 L724.6,407.8 L724.7,406.7 L724.9,410.0 L725.0,409.3 L725.1,412.9 L725.2,411.4 L725.3,415.6 L725.4,415.1 L725.6,418.1 L725.7,418.2 L725.8,422.5 L725.9,419.8 L726.0,424.1 L726.1,423.1 L726.3,426.4 L726.4,424.8 L726.5,428.9 L726.6,426.6 L726.7,431.3 L726.8,429.0 L727.0,431.8 L727.1,430.7 L727.2,434.0 L727.3,431.7 L727.4,434.2 L727.5,433.0 L727.6,434.7 L727.8,433.0 L728.0,434.8 L728.2,432.6 L728.4,433.9 L728.6,431.2 L728.8,432.4 L729.0,429.9 L729.2,431.5 L729.4,426.9 L729.6,428.2 L729.8,424.1 L729.9,425.3 L730.1,421.9 L730.3,421.9 L730.5,418.7 L730.7,419.6 L730.9,414.8 L731.1,416.0 L731.3,409.9 L731.5,414.7 L731.7,411.5 L731.9,413.1 L732.1,409.0 L732.9,410.6 L733.8,407.5 L734.7,411.7 L735.6,408.4 L736.5,409.6 L736.7,406.3 L737.0,407.7 L737.2,404.1 L737.4,405.4 L737.7,400.7 L737.9,402.2 L738.1,398.7 L738.4,399.0 L738.6,394.8 L738.8,396.0 L739.1,392.9 L739.3,393.8 L739.6,387.9 L739.8,391.3 L740.1,388.6 L740.3,390.9 L740.6,388.4 L740.9,391.0 L741.0,387.0 L741.2,391.8 L741.3,389.9 L741.5,396.2 L741.7,391.3 L741.8,395.1 L742.0,393.2 L742.2,396.8 L742.3,395.7 L742.5,398.9 L742.7,398.0 L742.8,401.7 L743.0,400.6 L743.2,403.7 L743.4,403.8 L743.6,407.4 L743.7,406.5 L743.9,409.6 L744.1,409.6 L744.3,412.9 L744.4,412.3 L744.6,417.4 L744.8,414.2 L745.0,418.2 L745.1,417.3 L745.3,419.9 L745.5,416.6 L745.7,421.7 L745.8,420.4 L746.0,423.4 L746.1,422.3 L746.3,424.7 L746.5,423.9 L746.6,425.9 L746.8,423.7 L747.0,428.6 L747.1,424.2 L747.3,428.8 L747.5,423.3 L747.7,426.7 L747.9,420.8 L748.0,422.4 L748.2,419.1 L748.3,420.1 L748.5,415.8 L748.7,416.7 L748.8,413.2 L749.0,414.0 L749.1,409.7 L749.3,410.3 L749.4,406.6 L749.6,407.8 L749.8,403.8 L749.9,405.0 L750.1,401.4 L750.3,403.3 L750.4,399.7 L750.6,400.7 L750.8,398.1 L751.0,401.6 L751.2,397.4 L751.3,400.6 L751.5,398.7 L751.7,401.7 L751.9,397.4 L752.0,404.0 L752.2,400.6 L752.4,407.1 L752.6,403.5 L752.8,406.4 L753.0,405.3 L753.1,409.3 L753.3,406.1 L753.5,411.3 L753.7,410.9 L753.9,414.8 L754.1,413.5 L754.3,417.1 L754.5,415.8 L754.7,419.4 L754.9,419.7 L755.1,423.1 L755.3,422.1 L755.5,425.1 L755.7,424.2 L755.8,427.3 L756.0,426.6 L756.2,430.1 L756.4,428.1 L756.6,431.1 L756.7,429.2 L756.9,432.3 L757.1,430.6 L757.3,433.2 L757.5,430.6 L757.8,431.5 L758.0,428.9 L758.2,431.3 L758.4,426.5 L758.6,428.4 L758.8,424.7 L759.1,425.5 L759.3,423.0 L759.5,423.9 L759.7,419.6 L759.9,420.9 L760.1,413.9 L760.3,417.5 L760.5,414.9 L760.7,415.2 L760.9,411.9 L761.1,412.7 L761.3,410.0 L761.5,411.9 L762.3,408.3 L763.2,411.0 L764.0,407.2 L764.9,410.1 L765.9,407.0 L766.1,407.5 L766.4,404.4 L766.7,406.2 L767.0,402.8 L767.3,403.3 L767.6,399.5 L767.9,401.4 L768.2,398.1 L768.5,398.5 L768.8,394.5 L769.1,395.6 L769.4,392.8 L769.8,393.0 L770.1,390.1 L770.4,390.7 L770.7,387.9 L770.9,390.7 L771.2,387.8 L771.5,388.8 L771.8,387.4 L771.9,390.4 L772.1,387.3 L772.3,390.3 L772.4,389.1 L772.6,391.7 L772.8,387.7 L772.9,393.9 L773.1,391.7 L773.3,395.6 L773.5,392.4 L773.6,397.7 L773.8,397.2 L773.9,400.8 L774.1,398.3 L774.3,403.4 L774.4,402.4 L774.6,406.3 L774.7,402.5 L774.9,408.0 L775.0,408.2 L775.1,411.6 L775.3,409.4 L775.4,413.5 L775.5,412.8 L775.6,415.8 L775.7,414.5 L775.8,417.5 L775.9,416.4 L776.0,419.9 L776.1,416.9 L776.2,420.7 L776.2,422.4 L777.1,433.9 L778.0,421.8 L778.9,436.4 L779.8,420.2 L780.7,435.0 L781.6,422.0 L782.5,434.9 L783.4,423.6 L784.3,432.7 L785.2,424.3 L786.1,432.9 L787.0,421.0 L787.9,433.1 L788.8,423.4 L789.7,434.7 L790.6,421.0 L790.9,426.8 L790.9,428.8 L791.0,425.8 L791.0,427.0 L791.1,423.8 L791.1,424.7 L791.2,422.4 L791.2,422.6 L791.3,419.0 L791.4,420.3 L791.5,416.5 L791.6,417.5 L791.7,413.7 L791.8,414.7 L791.9,411.6 L792.0,413.5 L792.2,410.4 L792.4,414.4 L792.9,407.4 L793.5,407.7 L794.2,403.4 L794.9,404.1 L795.6,400.7 L796.3,403.3 L796.8,404.3 L796.8,406.3 L796.9,405.3 L796.9,408.3 L797.0,405.5 L797.0,409.2 L797.1,408.0 L797.1,410.5 L797.2,409.5 L797.2,413.6 L797.2,411.8 L797.3,414.8 L797.3,413.6 L797.3,417.2 L797.3,416.3 L797.4,419.9 L797.4,419.8 L797.4,422.5 L797.4,420.9 L797.5,425.1 L797.5,424.4 L797.5,428.7 L797.5,426.8 L797.6,431.3 L797.6,430.9 L797.6,434.8 L797.6,431.7 L797.6,437.0 L797.6,436.2 L797.7,439.0 L797.7,439.1 L797.7,444.1 L797.7,440.9 L797.7,444.7 L797.8,443.1 L797.8,447.5 L797.8,446.5 L797.8,449.2 L797.8,447.3 L797.9,450.7 L797.9,449.3 L797.9,452.0 L797.9,450.3 L798.0,455.9 L798.0,452.4 L798.0,455.0 L798.1,453.0 L798.1,455.2 L798.2,452.3 L798.2,455.6 L798.2,454.2 L798.3,455.1 L798.3,453.2 L798.4,455.6 L798.4,452.4 L798.4,453.8 L798.5,451.3 L798.5,453.4 L798.6,449.4 L798.6,451.6 L798.7,448.5 L798.7,449.5 L798.7,445.6 L798.8,447.3 L798.8,444.6 L798.9,445.1 L798.9,442.0 L799.0,442.9 L799.0,439.9 L799.1,440.1 L799.1,436.0 L799.2,438.3 L799.2,431.0 L799.3,435.3 L799.3,430.5 L799.4,431.8 L799.5,428.1 L799.5,430.4 L799.6,424.6 L799.6,425.7 L799.7,421.3 L799.7,423.7 L799.8,419.0 L799.8,419.5 L799.9,415.4 L799.9,417.2 L800.0,414.0 L800.1,416.9 L800.1,409.8 L800.2,411.4 L800.2,408.6 L800.3,408.9 L800.3,405.3 L800.4,406.3 L800.4,403.0 L800.5,403.8 L800.5,400.8 L800.6,402.6 L800.7,398.7 L800.7,400.1 L800.8,398.0 L800.8,399.9 L800.9,395.9 L800.9,399.0 L801.0,395.5 L801.0,398.2 L801.1,395.6 L801.1,397.7 L801.2,392.2 L801.2,397.1 L801.3,395.1 L801.3,396.8 L801.4,395.3 L801.4,398.9 L801.5,396.4 L801.5,399.7 L801.6,397.2 L801.6,400.2 L801.7,399.6 L801.7,403.1 L801.8,401.2 L801.8,404.8 L801.9,403.5 L801.9,406.5 L802.0,404.9 L802.0,410.5 L802.1,406.8 L802.1,411.9 L802.2,409.9 L802.2,413.6 L802.3,409.6 L802.3,416.3 L802.4,415.4 L802.4,418.9 L802.5,418.8 L802.5,422.5 L802.6,421.6 L802.6,425.3 L802.7,424.3 L802.7,427.9 L802.8,427.3 L802.8,430.8 L802.9,430.7 L803.0,433.8 L803.0,432.3 L803.1,436.5 L803.1,435.3 L803.2,440.3 L803.2,437.8 L803.3,442.1 L803.3,440.6 L803.4,444.5 L803.4,443.8 L803.5,447.7 L803.5,446.4 L803.6,448.4 L803.6,447.1 L803.7,450.8 L803.7,446.4 L803.8,454.7 L803.8,450.6 L803.9,457.0 L803.9,451.4 L804.0,455.4 L804.0,451.5 L804.1,455.2 L804.1,453.1 L804.2,455.6 L804.3,453.2 L804.4,455.3 L804.4,453.5 L804.5,458.0 L804.6,452.9 L804.7,454.6 L804.8,451.9 L804.9,452.0 L805.0,449.4 L805.1,450.6 L805.1,446.9 L805.2,449.5 L805.3,445.0 L805.4,446.1 L805.5,442.8 L805.6,442.6 L805.7,439.2 L805.8,439.8 L805.9,436.2 L805.9,438.1 L806.0,433.1 L806.1,435.0 L806.2,431.2 L806.3,432.1 L806.3,427.9 L806.4,428.8 L806.5,425.7 L806.6,426.5 L806.6,422.1 L806.7,423.8 L806.8,420.8 L806.8,422.3 L806.9,417.5 L806.9,419.4 L807.0,416.4 L807.0,419.0 L807.1,412.2 L807.1,414.2 L808.0,425.4 L808.9,414.2 L809.8,425.8 L810.7,408.5 L811.6,424.7 L812.5,410.9 L813.4,426.2 L814.3,408.7 L815.2,422.7 L816.1,408.3 L817.0,426.2 L817.9,408.2 L818.8,420.8 L819.7,410.7 L820.6,421.1 L821.5,407.5 L821.8,416.9 L821.8,414.7 L821.8,415.8 L821.8,413.1 L821.9,415.4 L821.9,411.3 L821.9,413.8 L821.9,408.1 L822.0,409.2 L822.0,407.1 L822.0,407.3 L822.1,404.6 L822.1,405.0 L822.1,400.9 L822.2,402.2 L822.2,398.5 L822.2,400.0 L822.3,396.5 L822.3,397.9 L822.4,393.0 L822.4,395.1 L822.5,390.2 L822.5,392.8 L822.6,389.1 L822.7,389.7 L822.7,386.8 L822.8,387.9 L822.9,385.0 L823.0,387.6 L823.1,384.2 L823.1,385.8 L823.2,382.9 L823.5,384.1 L823.8,383.2 L824.1,385.6 L824.4,384.4 L824.8,387.6 L825.2,387.3 L825.6,391.1 L826.0,391.2 L826.4,394.5 L826.8,393.2 L827.2,396.4 L827.6,394.6 L828.2,397.2 L828.8,393.0 L829.4,395.7 L830.0,391.5 L830.6,392.0 L831.2,387.9 L831.8,389.7 L832.4,385.6 L833.0,389.2 L833.5,384.5 L833.8,389.3 L834.1,386.5 L834.4,390.6 L834.7,389.1 L835.0,394.9 L835.2,392.1 L835.5,396.5 L835.7,392.2 L836.0,398.3 L836.2,397.5 L836.5,402.4 L836.8,401.0 L837.0,403.0 L837.3,401.2 L837.6,404.0 L837.9,401.3 L838.1,405.1 L838.3,402.0 L838.5,403.5 L838.7,400.4 L839.0,401.3 L839.2,396.5 L839.4,400.3 L839.6,395.7 L839.9,398.1 L840.1,393.2 L840.3,394.3 L840.6,390.8 L840.8,391.4 L841.0,389.1 L841.3,389.4 L841.5,386.2 L841.7,386.8 L841.9,383.3 L842.2,383.7 L842.4,380.2 L842.6,381.6 L842.8,377.8 L843.0,379.1 L843.2,376.5 L843.3,378.3 L843.5,374.3 L843.7,379.3 L843.8,374.8 L844.2,376.4 L844.4,374.8 L844.6,376.8 L844.8,376.7 L845.0,381.2 L845.1,380.0 L845.2,383.4 L845.4,383.8 L845.5,387.8 L845.7,386.1 L845.9,388.3 L846.1,386.1 L846.3,387.8 L846.5,383.7 L846.7,384.6 L847.0,381.6 L847.2,382.7 L847.4,379.0 L847.7,379.9 L848.0,376.4 L848.2,377.4 L848.5,374.0 L848.8,379.3 L849.2,375.0 L849.7,379.6 L850.2,376.6 L850.7,381.6 L851.2,379.1 L851.7,382.2 L852.2,381.7 L852.7,385.5 L853.2,382.3 L853.9,385.5 L854.5,380.7 L855.1,383.6 L855.8,380.3 L856.4,380.6 L857.0,377.3 L857.6,379.2 L858.6,377.0 L859.5,381.4 L860.4,380.0 L861.3,383.1 L862.1,379.5 L862.3,383.5 L862.5,378.1 L862.7,380.7 L862.9,377.7 L863.0,377.7 L863.2,375.4 L863.4,376.0 L863.5,372.2 L863.7,373.7 L863.9,370.3 L864.0,370.7 L864.2,366.8 L864.3,368.6 L864.5,365.6 L864.7,367.9 L864.8,363.7 L865.0,366.3 L865.4,361.4 L865.8,362.1 L866.3,358.1 L866.7,359.6 L867.1,353.0 L867.5,357.6 L867.9,355.2 L868.6,359.5 L869.2,353.7 L869.8,357.5 L870.4,357.6 L870.9,361.6 L871.0,359.4 L871.1,362.8 L871.2,361.4 L871.2,365.4 L871.3,364.8 L871.4,370.7 L871.4,366.7 L871.5,371.3 L871.6,369.9 L871.6,374.7 L871.7,372.7 L871.7,377.2 L871.8,375.5 L871.9,378.8 L871.9,377.1 L872.0,381.2 L872.1,380.0 L872.2,381.4 L872.2,379.5 L872.4,382.9 L872.4,380.5 L872.5,382.5 L872.6,378.5 L872.7,380.8 L872.8,377.7 L872.9,381.6 L873.0,373.7 L873.1,376.6 L873.3,372.8 L873.4,374.9 L873.5,371.0 L873.6,372.4 L873.7,367.7 L873.9,368.8 L874.0,366.1 L874.1,366.9 L874.2,363.2 L874.3,363.8 L874.5,360.8 L874.6,363.3 L874.7,358.6 L874.8,358.9 L874.9,356.2 L875.1,356.6 L875.2,353.9 L875.3,356.5 L876.0,350.0 L876.7,352.5 L877.4,349.5 L878.2,353.8 L878.6,351.4 L878.9,354.5 L879.3,352.7 L879.7,355.5 L880.0,355.3 L880.4,357.8 L880.8,354.4 L881.2,362.1 L881.6,359.8 L882.0,362.3 L882.3,361.4 L882.6,365.1 L883.5,363.2 L884.3,364.0 L885.0,361.9 L885.6,368.3 L885.6,366.1 L885.7,369.6 L885.7,366.8 L885.8,370.7 L885.8,369.2 L885.8,372.4 L885.9,370.4 L885.9,373.2 L886.0,372.7 L886.0,374.8 L886.0,372.2 L886.1,377.2 L886.1,376.3 L886.1,379.4 L886.2,377.9 L886.2,381.7 L886.2,380.7 L886.3,384.3 L886.3,383.0 L886.3,387.4 L886.3,382.9 L886.4,388.1 L886.4,387.1 L886.4,391.3 L886.5,390.0 L886.5,394.6 L886.5,391.9 L886.5,395.3 L886.6,394.6 L886.6,397.6 L886.6,396.7 L886.6,399.7 L886.7,398.4 L886.7,402.9 L886.7,401.1 L886.7,405.3 L886.8,403.9 L886.8,407.2 L886.8,405.2 L886.9,409.2 L886.9,404.6 L886.9,410.9 L886.9,409.3 L887.0,412.4 L887.0,411.3 L887.0,414.1 L887.1,410.7 L887.1,416.8 L887.2,415.7 L887.3,419.8 L887.4,418.3 L887.4,423.2 L887.5,420.8 L887.6,425.2 L887.6,423.6 L887.7,426.9 L887.8,425.7 L887.9,431.3 L887.9,425.6 L888.0,430.8 L888.1,429.2 L888.2,433.7 L888.2,430.9 L888.3,434.5 L888.4,433.1 L888.5,434.7 L888.5,432.5 L888.6,434.7 L888.7,431.9 L888.8,434.5 L888.9,431.1 L888.9,431.6 L889.0,428.1 L889.1,427.9 L889.3,424.4 L889.5,426.2 L889.7,421.3 L890.0,423.3 L890.8,420.6 L891.7,421.7 L892.8,419.3 L894.0,422.0 L895.0,418.5 L895.9,420.3 L896.3,417.0 L896.8,418.5 L897.1,415.7 L897.5,417.3 L897.8,412.9 L898.1,414.9 L898.3,411.5 L898.6,413.1 L898.8,409.7 L899.2,410.7 L899.4,408.8 L899.7,409.9 L899.9,406.5 L900.1,408.7 L900.3,403.8 L900.3,404.7 L900.4,402.5 L900.4,403.4 L900.5,400.5 L900.5,404.4 L900.5,398.3 L900.6,400.5 L900.6,393.5 L900.7,396.8 L900.7,393.4 L900.7,394.6 L900.8,391.2 L900.8,393.3 L900.8,389.2 L900.9,392.2 L900.9,386.9 L900.9,386.9 L901.0,384.3 L901.0,385.3 L901.1,381.7 L901.1,383.6 L901.2,379.6 L901.3,381.7 L901.3,378.1 L901.4,382.1 L901.5,373.0 L901.6,377.7 L901.7,375.3 L901.8,376.6 L902.7,372.5 L903.8,374.9 L905.0,375.3 L906.2,378.0 L906.9,375.5 L907.6,376.5 L908.3,373.2 L909.0,375.3 L909.8,370.7 L910.6,372.8 L911.4,370.1 L912.2,375.7 L913.0,372.0 L913.9,375.7 L914.7,375.2 L915.6,378.3 L916.5,375.3 L917.5,377.6 L918.4,376.2 L919.4,377.4 L920.4,375.6 L921.4,376.3 L922.4,373.8 L923.3,375.8 L924.3,372.2 L925.3,374.8 L926.3,371.2 L927.3,374.3 L928.2,371.6 L929.0,374.3 L929.7,372.4 L930.4,375.8 L931.2,374.2 L931.9,377.3 L932.6,372.9 L933.4,379.2 L934.1,376.4 L935.1,379.0 L936.1,373.9 L937.1,377.5 L938.0,374.2 L939.0,376.5 L940.0,374.8 L940.6,376.2 L941.2,375.1 L941.9,380.7 L942.5,377.2 L943.1,380.4 L943.7,378.4 L944.3,382.9 L944.9,381.5 L945.4,383.8 L945.9,382.4 L946.5,387.0 L947.0,386.1 L947.4,388.7 L947.8,387.3 L948.3,390.9 L948.8,389.4 L949.2,390.2 L949.6,388.1 L950.1,389.9 L950.5,383.8 L951.0,387.5 L951.5,383.1 L952.0,384.6 L952.6,380.2 L953.2,382.4 L953.9,378.9 L954.7,380.3 L955.5,378.0 L956.4,379.3 L957.3,375.8 L958.1,378.3 L959.0,375.4 L959.8,378.3 L960.6,373.4 L961.4,375.6 L962.2,372.7 L962.9,373.9 L963.6,369.9 L964.3,371.7 L965.0,368.9 L965.7,370.4 L966.5,368.1 L967.2,370.8 L968.0,368.4 L968.7,372.5 L969.5,367.4 L970.3,374.2 L971.0,372.5 L971.7,374.9 L972.4,374.1 L972.9,377.2 L973.4,373.4 L973.8,378.8 L974.3,378.6 L974.7,381.9 L975.1,380.9 L975.6,383.8 L976.2,382.8 L976.8,386.0 L977.7,382.7 L978.7,386.7 L979.8,383.9 L980.9,385.3 L982.0,382.0 L983.1,385.0 L984.1,381.7 L984.7,384.3 L985.3,380.1 L985.8,381.2 L986.4,378.7 L986.9,380.0 L987.4,376.3 L987.9,376.6 L988.4,373.7 L989.0,375.2 L989.5,372.5 L990.0,374.2 L991.0,369.5 L991.9,374.9 L992.8,369.2 L993.8,371.3 L994.8,368.7 L995.9,370.1 L996.9,367.4 L997.9,370.2 L999.0,366.2 L1000.1,368.2 L1001.2,365.6 L1002.2,368.2 L1003.2,364.9 L1004.1,367.9 L1004.8,366.0 L1005.6,369.3 L1006.4,367.4 L1007.1,371.0 L1007.8,369.7 L1008.5,372.8 L1009.1,371.8 L1009.8,373.9 L1010.4,373.3 L1010.9,376.0 L1011.4,375.0 L1012.0,377.5 L1012.7,376.0 L1013.5,378.6 L1014.2,377.4 L1015.1,380.8 L1015.9,379.6 L1016.9,382.7 L1017.8,379.8 L1018.8,384.1 L1019.8,381.9 L1020.7,385.3 L1021.6,382.6 L1022.4,387.6 L1023.7,383.8 L1024.8,385.4 L1025.9,383.0 L1027.0,386.0 L1028.2,382.6 L1028.9,384.7 L1029.6,381.4 L1030.3,383.7 L1031.1,379.0 L1031.8,381.0 L1032.6,378.6 L1033.3,380.5 L1034.1,373.5 L1034.8,378.3 L1035.6,376.0 L1036.7,378.4 L1037.7,375.7 L1038.8,378.1 L1039.9,375.9 L1040.9,379.7 L1042.0,376.5 L1042.9,379.5 L1043.6,376.8 L1044.3,377.8 L1044.9,375.1 L1045.5,377.0 L1046.1,372.3 L1046.7,375.2 L1047.3,370.8 L1048.0,372.2 L1048.8,369.8 L1049.8,371.8 L1050.8,369.4 L1051.9,370.8 L1053.1,368.9 L1054.2,371.2 L1055.4,369.0 L1056.5,370.7 L1057.6,368.1 L1058.6,370.8 L1059.7,367.1 L1060.7,368.4 L1061.7,366.0 L1062.8,368.3 L1063.7,364.7 L1064.7,366.7 L1065.6,363.3 L1066.5,368.1 L1066.9,362.9 L1067.2,371.6 L1067.6,367.7 L1067.9,370.0 L1068.3,369.9 L1068.6,373.2 L1068.9,371.0 L1069.2,374.6 L1069.5,374.3 L1069.8,378.6 L1070.1,376.3 L1070.4,380.6 L1070.7,379.8 L1071.0,381.8 L1071.3,380.6 L1071.6,383.6 L1072.0,382.6 L1072.4,385.5 L1073.2,383.8 L1074.2,386.3 L1075.2,382.3 L1076.3,384.2 L1077.3,381.7 L1078.3,382.9 L1079.2,379.0 L1080.0,380.3 L1081.1,378.1 L1082.1,381.2 L1082.9,375.5 L1083.7,377.3 L1084.6,374.9 L1085.3,378.5 L1085.9,377.8 L1086.6,381.0 L1087.2,376.7 L1087.9,383.1 L1088.5,381.7 L1089.2,383.8 L1089.6,380.7 L1090.0,385.4 L1090.4,379.5 L1090.9,379.9 L1091.3,376.4 L1091.7,377.3 L1092.1,373.0 L1092.5,375.4 L1093.0,371.4 L1093.4,373.8 L1093.8,368.7 L1094.4,376.2 L1094.9,371.5 L1095.5,376.3 L1096.1,374.7 L1096.7,378.3 L1097.2,378.2 L1097.8,380.8 L1098.4,375.6 L1098.8,381.1 L1099.3,377.6 L1099.7,379.2 L1100.1,375.3 L1100.6,376.7 L1101.0,373.5 L1101.5,375.4 L1102.0,370.5 L1102.5,373.3 L1103.0,368.7 L1103.9,371.3 L1105.0,367.2 L1106.0,370.7 L1107.1,367.3 L1108.2,370.8 L1109.1,368.2 L1110.4,369.5 L1111.6,367.0 L1112.7,370.4 L1113.7,368.7 L1113.9,373.2 L1114.2,371.6 L1114.4,374.9 L1114.6,373.1 L1114.8,378.5 L1115.0,375.8 L1115.2,379.6 L1115.4,379.0 L1115.6,383.1 L1115.8,381.4 L1116.0,384.8 L1116.2,383.9 L1116.4,388.5 L1116.6,385.4 L1116.8,387.8 L1116.9,384.4 L1117.1,386.7 L1117.3,382.7 L1117.4,385.2 L1117.6,381.9 L1117.7,382.8 L1117.9,378.9 L1118.0,380.6 L1118.2,375.8 L1118.3,377.2 L1118.5,373.3 L1118.7,374.1 L1118.9,370.1 L1119.1,372.9 L1119.3,369.1 L1119.6,370.1 L1119.8,367.4 L1120.4,370.2 L1121.0,368.1 L1121.6,371.9 L1122.3,370.1 L1123.0,374.9 L1123.7,373.3 L1124.4,377.0 L1125.2,375.9 L1126.0,380.0 L1126.7,375.6 L1127.6,378.1 L1128.4,375.1 L1129.3,378.5 L1130.1,372.4 L1131.0,373.8 L1131.9,370.6 L1132.8,373.0 L1133.6,369.8 L1134.6,370.7 L1135.6,368.1 L1136.6,370.7 L1137.6,367.1 L1138.6,369.3 L1139.6,365.8 L1140.5,369.2 L1141.3,367.1 L1142.1,369.6 L1142.7,364.9 L1143.3,372.4 L1143.8,370.3 L1144.4,373.2 L1145.1,371.7 L1145.9,374.6 L1146.7,372.1 L1147.6,375.6 L1148.6,370.8 L1149.6,373.3 L1150.6,369.0 L1151.7,371.2 L1152.6,367.7 L1153.5,369.8 L1154.5,367.9 L1155.4,372.0 L1156.3,370.0 L1157.2,373.0 L1158.1,371.6 L1158.9,377.0 L1159.7,373.0 L1160.3,374.1 L1160.9,370.6 L1161.5,371.6 L1162.1,367.8 L1162.6,369.6 L1163.1,366.6 L1163.7,367.3 L1164.3,364.3 L1164.8,367.8 L1165.5,366.2 L1166.1,369.4 L1166.7,368.1 L1167.3,370.9 L1167.9,369.9 L1168.4,373.9 L1168.8,370.7 L1169.1,375.4 L1169.2,374.9 L1169.3,377.4 L1169.4,375.6 L1169.5,380.3 L1169.6,380.1 L1169.6,384.2 L1169.7,382.2 L1169.8,386.0 L1169.9,383.7 L1170.0,387.4 L1170.2,383.6 L1170.4,389.1 L1170.8,386.8 L1171.3,387.7 L1171.9,383.8 L1172.5,384.8 L1173.1,381.2 L1173.8,382.8 L1174.4,379.1 L1175.0,380.4 L1175.6,376.6 L1176.3,382.5 L1176.9,381.7 L1177.6,386.0 L1178.3,384.2 L1178.9,387.4 L1179.6,384.5 L1179.8,389.5 L1180.1,384.2 L1180.4,385.0 L1180.6,382.2 L1180.9,383.1 L1181.2,379.6 L1181.4,382.5 L1181.7,377.9 L1182.0,378.3 L1182.2,375.9 L1182.5,377.1 L1182.7,371.4 L1183.0,373.7 L1183.2,369.6 L1183.5,372.3 L1183.7,367.8 L1183.9,370.2 L1184.2,366.9 L1184.6,367.1 L1185.0,363.0 L1185.4,364.6 L1185.8,359.9 L1186.1,363.1 L1186.5,358.2 L1186.9,360.8 L1187.2,358.6 L1187.4,361.0 L1187.6,359.0 L1187.7,365.5 L1187.9,361.3 L1188.0,365.5 L1188.2,364.2 L1188.3,366.8 L1188.5,366.2 L1188.7,369.9 L1188.8,368.4 L1189.0,371.7 L1189.2,370.5 L1189.4,377.7 L1189.6,373.6 L1189.8,377.2 L1190.0,374.2 L1190.3,377.5 L1191.1,373.4 L1192.1,379.3 L1193.2,377.1 L1194.3,379.1 L1195.4,374.5 L1196.4,377.2 L1197.4,375.7 L1198.5,377.8 L1199.5,375.4 L1200.5,376.7 L1201.5,374.4 L1202.5,376.0 L1203.6,371.6 L1204.6,376.5 L1205.6,371.7 L1206.6,377.7 L1207.7,375.3 L1208.7,377.8 L1209.7,375.9 L1210.7,378.9 L1211.7,377.3 L1212.8,380.1 L1213.8,378.1 L1214.8,378.7 L1215.4,376.9 L1215.9,377.9 L1216.5,374.4 L1217.0,377.0 L1217.6,372.2 L1218.1,374.9 L1218.7,370.6 L1219.3,373.7 L1219.8,368.5 L1220.4,371.4 L1220.9,368.2 L1222.0,369.3 L1223.0,367.5 L1224.1,371.3 L1225.1,369.1 L1226.1,370.8 L1227.1,369.6 L1228.3,371.3 L1229.5,368.6 L1230.5,370.6 L1231.7,366.7 L1232.0,372.7 L1232.4,370.8 L1232.7,374.6 L1233.1,372.9 L1233.5,375.3 L1233.9,374.0 L1234.2,378.2 L1234.6,376.0 L1234.9,379.3 L1235.3,378.3 L1235.6,381.4 L1235.9,380.8 L1236.2,384.1 L1236.6,382.0 L1236.9,386.5 L1237.2,385.2 L1237.4,387.7 L1237.7,386.0 L1238.0,388.8 L1238.2,387.8 L1238.5,391.8 L1238.7,390.1 L1238.9,393.9 L1239.1,393.1 L1239.3,396.2 L1239.4,393.8 L1239.5,397.5 L1239.6,396.3 L1239.7,399.7 L1239.7,399.4 L1239.8,402.3 L1239.8,401.0 L1239.9,404.6 L1240.0,402.3 L1240.0,407.6 L1240.1,407.3 L1240.1,409.8 L1240.2,409.3 L1240.2,412.0 L1240.3,409.0 L1240.3,415.2 L1240.4,413.2 L1240.4,417.3 L1240.5,415.0 L1240.6,419.0 L1240.7,417.0 L1240.7,419.5 L1240.8,416.4 L1241.0,420.0 L1241.1,414.8 L1241.3,417.8 L1241.5,414.3 L1241.6,416.6 L1241.8,413.4 L1242.0,413.8 L1242.2,409.2 L1242.4,410.2 L1242.6,407.1 L1242.8,407.9 L1243.0,404.6 L1243.2,404.7 L1243.3,402.5 L1243.5,404.2 L1243.7,400.4 L1243.9,401.7 L1244.2,399.4 L1244.4,402.8 L1244.7,402.3 L1244.9,405.8 L1245.2,405.5 L1245.4,409.0 L1245.7,409.3 L1246.0,412.0 L1246.2,411.9 L1246.5,414.5 L1246.7,411.9 L1247.0,413.9 L1247.1,412.5 L1247.2,414.2 L1247.3,410.3 L1247.4,412.1 L1247.5,407.8 L1247.6,410.2 L1247.7,406.4 L1247.8,407.8 L1247.9,403.3 L1248.0,405.5 L1248.1,401.6 L1248.3,402.7 L1248.4,396.9 L1248.5,399.6 L1248.6,395.3 L1248.7,397.2 L1248.8,392.0 L1248.9,394.0 L1249.0,391.0 L1249.1,391.4 L1249.3,388.5 L1249.4,388.8 L1249.5,385.9 L1249.6,387.5 L1249.8,385.0 L1249.9,387.5 L1250.0,385.1 L1250.2,387.3 L1250.4,385.1 L1250.5,388.1 L1250.7,386.2 L1250.9,389.8 L1251.1,388.3 L1251.3,391.1 L1251.5,390.9 L1251.6,394.2 L1251.8,392.9 L1252.0,396.9 L1252.2,396.7 L1252.4,400.8 L1252.6,396.9 L1252.8,403.5 L1253.0,402.3 L1253.2,405.9 L1253.4,404.8 L1253.6,410.1 L1253.8,407.3 L1254.0,411.0 L1254.2,407.0 L1254.4,414.1 L1254.6,408.2 L1254.9,411.9 L1255.1,408.6 L1255.4,411.6 L1255.7,408.2 L1255.9,408.8 L1256.2,406.4 L1256.4,406.6 L1256.7,403.9 L1256.9,404.1 L1257.2,401.3 L1257.4,402.2 L1257.7,397.1 L1258.0,399.5 L1258.2,395.4 L1258.5,396.3 L1258.7,393.3 L1259.0,397.2 L1259.2,390.7 L1259.9,393.7 L1260.5,387.7 L1261.1,388.4 L1261.7,385.8 L1262.4,387.1 L1263.1,381.6 L1263.8,387.2 L1264.3,385.2 L1264.9,388.0 L1265.4,386.9 L1266.0,389.4 L1266.6,389.6 L1267.2,393.8 L1267.8,391.5 L1268.3,395.2 L1268.9,392.8 L1269.4,395.8 L1270.0,392.1 L1270.5,396.9 L1270.9,393.0 L1271.3,395.9 L1271.8,391.7 L1272.2,392.7 L1272.6,386.5 L1273.0,390.9 L1273.5,386.5 L1274.0,388.6 L1274.5,384.6 L1275.3,385.5 L1276.1,383.3 L1277.0,384.4 L1277.9,379.4 L1278.8,382.1 L1279.8,378.3 L1280.7,380.6 L1281.5,378.4 L1282.2,380.5 L1282.6,376.5 L1283.0,382.0 L1283.3,380.4 L1283.7,384.2 L1284.0,381.8 L1284.3,385.4 L1284.6,385.0 L1284.8,387.7 L1285.1,386.8 L1285.4,390.9 L1285.7,389.8 L1285.9,393.4 L1286.2,391.0 L1286.5,395.0 L1286.8,393.7 L1287.1,397.2 L1287.5,396.5 L1287.8,402.9 L1288.2,399.8 L1288.5,402.1 L1288.9,402.3 L1289.2,406.4 L1289.5,405.0 L1289.9,408.1 L1290.2,405.7 L1290.5,409.4 L1290.8,407.3 L1291.1,410.3 L1291.4,407.1 L1291.6,410.0 L1291.7,407.4 L1291.8,408.8 L1292.0,405.5 L1292.1,407.3 L1292.2,403.5 L1292.3,404.6 L1292.5,401.6 L1292.6,402.2 L1292.7,399.2 L1292.8,399.8 L1292.9,396.4 L1293.0,397.6 L1293.1,392.0 L1293.2,393.8 L1293.4,391.2 L1293.5,392.0 L1293.6,388.3 L1293.8,391.8 L1293.9,386.9 L1294.1,388.2 L1294.3,385.5 L1294.5,386.9 L1295.2,384.4 L1295.9,386.2 L1296.8,384.5 L1297.7,389.0 L1298.6,387.8 L1299.6,391.7 L1300.6,388.7 L1301.5,392.8 L1302.4,389.4 L1303.3,391.5 L1304.3,387.7 L1305.3,390.5 L1306.3,386.6 L1307.3,388.6 L1308.2,384.3 L1309.4,391.7 L1310.5,385.6 L1311.6,389.0 L1312.7,386.1 L1313.8,389.3 L1314.9,387.5 L1315.9,389.8 L1316.5,388.9 L1317.1,392.1 L1317.7,390.7 L1318.3,392.9 L1318.9,392.4 L1319.4,396.3 L1320.0,394.5 L1320.5,398.3 L1321.0,397.0 L1321.4,399.6 L1321.7,398.4 L1322.0,400.4" fill="none" stroke="#d2d2d2" stroke-width="1.15" stroke-linejoin="round"/><path d="M444.7,495.6 L445.6,498.5 L446.5,497.8 L447.4,495.6 L448.3,495.4 L449.2,492.9 L450.1,494.6 L451.0,495.3 L451.9,491.3 L452.8,490.3 L453.7,493.3 L454.6,492.8 L455.5,490.2 L456.4,488.3 L457.3,487.4 L458.2,487.2 L459.1,488.4 L460.0,486.2 L460.9,486.9 L461.8,487.1 L462.7,489.1 L463.6,486.9 L463.6,497.5 L462.7,498.5 L461.8,495.8 L460.9,499.2 L460.0,498.2 L459.1,498.5 L458.2,502.3 L457.3,499.9 L456.4,503.2 L455.5,502.7 L454.6,502.5 L453.7,501.4 L452.8,505.0 L451.9,505.9 L451.0,506.5 L450.1,509.2 L449.2,505.2 L448.3,508.8 L447.4,510.2 L446.5,506.2 L445.6,512.6 L444.7,512.9Z" fill="#485dc4" stroke="#485dc4" stroke-width="1"/><path d="M482.9,488.4 L483.8,486.9 L484.7,487.4 L485.6,489.2 L486.5,487.5 L487.4,486.2 L488.3,485.7 L489.2,484.8 L490.1,486.4 L491.0,486.6 L491.9,486.5 L492.8,484.7 L493.7,485.0 L494.6,486.4 L495.5,484.9 L496.4,482.3 L497.3,481.7 L498.2,482.0 L499.1,483.6 L500.0,482.1 L500.9,480.4 L501.8,480.9 L502.7,482.0 L503.6,482.9 L504.5,479.5 L505.4,479.0 L506.3,478.4 L506.3,489.2 L505.4,489.2 L504.5,489.8 L503.6,490.6 L502.7,491.4 L501.8,490.0 L500.9,492.2 L500.0,491.4 L499.1,493.0 L498.2,493.0 L497.3,491.2 L496.4,491.7 L495.5,494.3 L494.6,492.4 L493.7,492.9 L492.8,494.1 L491.9,495.0 L491.0,495.7 L490.1,497.8 L489.2,496.3 L488.3,497.3 L487.4,495.4 L486.5,498.5 L485.6,498.5 L484.7,497.9 L483.8,500.8 L482.9,501.3Z" fill="#485dc4" stroke="#485dc4" stroke-width="1"/><path d="M580.0,491.7 L580.9,493.5 L581.8,493.7 L582.7,493.0 L583.6,491.7 L584.5,488.4 L585.4,492.4 L586.3,492.2 L587.2,485.9 L588.1,488.5 L589.0,487.5 L589.9,488.5 L590.8,486.7 L591.7,488.9 L592.6,484.3 L593.5,488.1 L594.4,486.7 L595.3,485.5 L596.2,486.3 L597.1,482.8 L598.0,484.8 L598.9,483.3 L599.8,479.9 L599.8,494.2 L598.9,495.2 L598.0,496.1 L597.1,498.8 L596.2,500.3 L595.3,500.8 L594.4,497.6 L593.5,500.7 L592.6,497.7 L591.7,503.3 L590.8,503.9 L589.9,502.0 L589.0,500.3 L588.1,500.4 L587.2,503.7 L586.3,503.2 L585.4,507.5 L584.5,502.5 L583.6,507.8 L582.7,506.8 L581.8,507.9 L580.9,505.8 L580.0,509.9Z" fill="#485dc4" stroke="#485dc4" stroke-width="1"/><path d="M620.3,481.7 L621.2,482.3 L622.1,483.3 L623.0,483.5 L623.9,481.6 L624.8,484.1 L625.7,482.9 L626.6,482.5 L627.5,483.0 L628.4,483.2 L629.3,481.7 L630.2,482.0 L631.1,481.7 L632.0,481.2 L632.9,481.1 L633.8,477.9 L634.7,479.0 L635.6,479.3 L636.5,478.7 L637.4,478.7 L638.3,477.9 L639.2,478.4 L640.1,479.1 L641.0,477.0 L641.9,479.2 L642.8,477.8 L643.7,478.7 L643.7,485.5 L642.8,485.4 L641.9,484.8 L641.0,485.9 L640.1,485.9 L639.2,488.4 L638.3,487.2 L637.4,489.1 L636.5,489.0 L635.6,487.7 L634.7,490.3 L633.8,486.9 L632.9,489.3 L632.0,490.0 L631.1,489.8 L630.2,489.1 L629.3,488.7 L628.4,490.2 L627.5,492.4 L626.6,492.5 L625.7,492.5 L624.8,491.8 L623.9,492.6 L623.0,492.5 L622.1,494.1 L621.2,493.7 L620.3,494.1Z" fill="#485dc4" stroke="#485dc4" stroke-width="1"/><path d="M776.2,487.8 L777.1,489.5 L778.0,486.7 L778.9,486.6 L779.8,487.2 L780.7,486.4 L781.6,486.5 L782.5,486.5 L783.4,484.7 L784.3,484.3 L785.2,484.8 L786.1,485.5 L787.0,483.7 L787.9,485.8 L788.8,484.6 L789.7,482.0 L790.6,482.1 L790.6,489.8 L789.7,490.4 L788.8,490.8 L787.9,494.8 L787.0,495.1 L786.1,496.0 L785.2,496.0 L784.3,495.2 L783.4,497.3 L782.5,494.6 L781.6,497.6 L780.7,497.3 L779.8,499.7 L778.9,497.4 L778.0,497.6 L777.1,498.1 L776.2,500.6Z" fill="#485dc4" stroke="#485dc4" stroke-width="1"/><path d="M807.1,482.8 L808.0,479.1 L808.9,478.1 L809.8,480.1 L810.7,480.9 L811.6,477.4 L812.5,476.6 L813.4,475.8 L814.3,475.4 L815.2,477.4 L816.1,475.5 L817.0,478.7 L817.9,477.2 L818.8,478.1 L819.7,475.2 L820.6,476.7 L821.5,473.1 L821.5,484.9 L820.6,486.0 L819.7,488.1 L818.8,488.7 L817.9,484.9 L817.0,487.5 L816.1,489.9 L815.2,489.4 L814.3,491.5 L813.4,488.7 L812.5,490.5 L811.6,492.7 L810.7,492.0 L809.8,492.3 L808.9,492.3 L808.0,492.2 L807.1,495.0Z" fill="#485dc4" stroke="#485dc4" stroke-width="1"/><path d="M386.3,437.5 L386.4,439.7 L386.5,438.4 L386.6,441.8 L386.7,439.7 L386.9,443.9 L387.0,441.4 L387.1,445.6 L387.3,443.7 L387.5,447.8 L387.6,447.0 L387.8,449.1 L388.0,448.1 L388.2,452.6 L388.4,451.6 L388.6,454.0 L388.7,453.0 L388.9,456.2 L389.1,455.4 L389.3,458.5 L389.5,457.0 L389.6,460.4 L389.8,459.5 L390.0,463.0 L390.3,461.8 L390.5,464.7 L390.8,463.2 L391.0,466.2 L391.2,464.2 L391.5,467.6 L391.7,466.5 L392.0,469.6 L392.2,468.1 L392.5,470.4 L392.7,469.7 L393.0,474.2 L393.3,472.9 L393.4,476.2 L393.5,474.6 L393.6,478.1 L393.7,476.1 L393.8,479.8 L393.9,479.3 L394.0,482.2 L394.1,481.4 L394.2,485.3 L394.3,484.2 L394.4,486.7 L394.5,484.4 L394.6,489.8 L394.7,489.8 L394.8,492.6 L394.9,492.7 L395.0,496.1 L395.1,494.9 L395.2,499.6 L395.4,495.3 L395.5,501.9 L395.6,500.5 L395.7,504.8 L395.8,503.1 L395.9,506.6 L396.0,506.0 L396.1,510.1 L396.2,508.0 L396.4,511.6 L396.5,510.7 L396.6,514.9 L396.7,512.8 L396.8,516.7 L396.9,515.1 L397.0,517.9 L397.1,516.6 L397.2,518.3 L397.4,516.4 L397.5,519.2 L397.6,517.4 L397.7,519.5 L397.8,518.4 L397.9,520.0 L398.0,518.1 L398.1,519.4 L398.1,515.6 L398.2,519.4 L398.3,517.2 L398.3,519.0 L398.4,515.0 L398.5,517.1 L398.6,514.2 L398.6,516.3 L398.7,512.8 L398.8,514.0 L398.8,511.3 L398.9,513.3 L399.0,509.6 L399.0,510.4 L399.1,508.3 L399.2,509.8 L399.3,505.2 L399.3,509.4 L399.4,503.6 L399.5,505.2 L399.5,500.8 L399.6,502.8 L399.7,498.0 L399.7,500.4 L399.8,495.5 L399.9,497.9 L400.0,493.0 L400.0,495.4 L400.1,490.4 L400.2,491.8 L400.2,487.7 L400.3,489.4 L400.4,485.6 L400.4,486.9 L400.5,483.2 L400.6,484.6 L400.7,479.7 L400.7,481.2 L400.8,477.2 L400.9,478.1 L400.9,474.2 L401.0,476.4 L401.1,472.5 L401.1,473.3 L401.2,470.4 L401.3,470.3 L401.3,467.2 L401.4,468.2 L401.5,465.4 L401.5,465.5 L401.6,462.8 L401.7,462.9 L401.7,459.4 L401.8,461.7 L401.9,457.7 L401.9,460.7 L402.0,455.5 L402.0,458.1 L402.1,453.8 L402.2,456.7 L402.2,453.5 L402.3,454.5 L402.3,451.4 L402.4,452.3 L402.5,448.2 L402.5,452.6 L402.6,448.5 L403.1,448.1 L403.5,444.0 L404.0,446.0 L404.4,443.3 L404.8,447.6 L405.2,448.2 L405.6,453.9 L406.0,455.9 L406.0,460.3 L406.1,455.9 L406.1,462.0 L406.1,459.4 L406.2,463.7 L406.2,458.1 L406.2,465.4 L406.2,461.4 L406.3,466.2 L406.3,464.1 L406.3,467.2 L406.3,466.6 L406.4,469.2 L406.4,467.6 L406.4,471.2 L406.4,470.3 L406.5,474.3 L406.5,472.5 L406.5,475.8 L406.5,475.0 L406.6,480.6 L406.6,477.7 L406.6,480.3 L406.6,478.8 L406.6,483.5 L406.7,482.3 L406.7,484.8 L406.7,484.7 L406.7,487.7 L406.8,486.8 L406.8,490.6 L406.8,489.1 L406.8,493.8 L406.8,492.0 L406.9,495.1 L406.9,493.5 L406.9,501.4 L406.9,497.4 L406.9,500.9 L407.0,499.2 L407.0,504.0 L407.0,503.0 L407.0,506.3 L407.0,505.6 L407.1,508.5 L407.1,506.0 L407.1,511.4 L407.1,509.5 L407.1,514.2 L407.2,513.2 L407.2,517.5 L407.2,515.8 L407.2,519.8 L407.3,518.3 L407.3,521.9 L407.3,521.4 L407.3,524.8 L407.3,521.3 L407.4,526.5 L407.4,525.7 L407.4,528.8 L407.4,528.4 L407.5,530.5 L407.5,530.1 L407.5,533.7 L407.6,532.8 L407.6,535.8 L407.6,533.3 L407.6,537.2 L407.7,536.6 L407.7,538.7 L407.7,537.6 L407.8,540.5 L407.8,538.7 L407.8,543.0 L407.9,540.5 L407.9,547.2 L407.9,543.1 L408.0,544.8 L408.0,543.0 L408.0,547.2 L408.1,542.2 L408.1,548.4 L408.2,546.2 L408.2,548.2 L408.2,546.6 L408.3,550.1 L408.3,547.4 L408.4,549.1 L408.4,547.3 L408.5,550.7 L408.6,547.8 L408.6,551.0 L408.7,547.5 L408.8,550.1 L408.9,546.8 L409.0,551.0 L409.0,547.5 L409.1,549.0 L409.2,545.3 L409.3,547.2 L409.4,541.8 L409.5,546.2 L409.6,542.1 L409.7,544.5 L409.8,541.3 L409.9,542.7 L410.0,537.7 L410.1,540.2 L410.2,536.0 L410.3,537.9 L410.4,533.6 L410.5,536.0 L410.6,529.9 L410.7,532.4 L410.8,529.3 L410.9,530.3 L411.1,526.0 L411.2,527.5 L411.3,522.5 L411.4,523.8 L411.5,519.9 L411.6,521.9 L411.7,517.6 L411.8,518.8 L411.9,515.0 L412.0,515.6 L412.2,511.6 L412.3,512.8 L412.4,508.8 L412.5,509.5 L412.6,505.7 L412.7,507.1 L412.8,503.2 L412.9,503.7 L413.0,500.6 L413.1,501.9 L413.2,499.1 L413.3,499.7 L413.4,496.9 L413.5,498.3 L413.6,493.6 L413.7,496.0 L413.8,493.1 L413.9,493.5 L414.0,491.5 L414.1,493.3 L414.2,488.1 L414.9,488.9 L415.5,483.9 L416.1,485.8 L416.7,482.9 L417.3,484.7 L417.8,482.5 L418.4,485.6 L418.9,480.5 L419.8,485.5 L420.7,483.8 L421.5,487.7 L422.4,485.4 L422.7,487.4 L423.0,483.1 L423.3,485.3 L423.7,481.2 L424.0,482.4 L424.4,478.9 L424.7,479.1 L425.1,476.4 L425.4,477.3 L425.7,473.1 L426.1,475.7 L426.4,471.2 L426.7,473.5 L427.0,470.7 L427.3,474.2 L427.6,472.5 L428.0,477.4 L428.2,473.7 L428.5,477.6 L428.8,477.1 L429.1,480.3 L429.4,476.8 L429.7,482.7 L429.9,482.5 L430.2,485.8 L430.5,483.2 L430.8,485.0 L431.0,482.4 L431.3,482.8 L431.6,479.6 L431.8,480.8 L432.1,477.3 L432.4,478.9 L432.7,474.0 L432.9,476.2 L433.2,472.7 L433.5,473.1 L433.7,469.9 L434.0,474.7 L434.5,470.4 L435.0,473.7 L435.6,472.8 L436.1,476.2 L436.6,475.9 L437.1,478.9 L437.5,476.1 L437.8,478.1 L438.1,474.4 L438.4,475.0 L438.6,470.0 L438.9,473.2 L439.2,467.1 L439.5,469.6 L439.8,468.9 L439.9,471.1 L439.9,469.7 L440.0,472.4 L440.0,471.6 L440.1,474.3 L440.2,472.5 L440.2,475.2 L440.3,473.6 L440.4,477.4 L440.4,476.5 L440.5,479.7 L440.6,478.7 L440.7,482.7 L440.7,481.2 L440.8,484.7 L440.9,483.3 L440.9,486.5 L441.0,485.3 L441.1,488.7 L441.2,489.0 L441.3,491.3 L441.3,491.4 L441.4,493.9 L441.5,492.9 L441.6,497.3 L441.6,495.9 L441.7,499.9 L441.8,498.5 L441.9,503.4 L441.9,501.9 L442.0,506.1 L442.1,504.5 L442.2,510.4 L442.2,506.2 L442.3,510.8 L442.4,508.0 L442.5,512.3 L442.5,511.6 L442.6,515.1 L442.7,513.7 L442.7,517.3 L442.8,515.6 L442.8,518.0 L442.9,515.8 L443.0,520.0 L443.0,518.2 L443.1,521.5 L443.1,518.3 L443.2,522.3 L443.2,519.0 L443.3,522.6 L443.4,520.6 L443.5,522.3 L443.5,520.3 L443.6,523.0 L443.7,518.7 L443.8,521.6 L443.8,515.7 L443.9,521.3 L444.0,515.7 L444.0,516.9 L444.1,513.0 L444.1,514.3 L444.2,510.7 L444.2,511.0 L444.3,508.3 L444.3,508.4 L444.4,504.2 L444.4,505.5 L444.4,502.0 L444.5,502.4 L444.5,499.1 L444.5,499.6 L444.6,496.0 L444.6,497.8 L444.6,491.2 L444.7,495.7 L444.7,492.6 L444.7,494.2 L444.7,495.6 L445.6,512.6 L446.5,497.8 L447.4,510.2 L448.3,495.4 L449.2,505.2 L450.1,494.6 L451.0,506.5 L451.9,491.3 L452.8,505.0 L453.7,493.3 L454.6,502.5 L455.5,490.2 L456.4,503.2 L457.3,487.4 L458.2,502.3 L459.1,488.4 L460.0,498.2 L460.9,486.9 L461.8,495.8 L462.7,489.1 L463.6,497.5 L463.8,490.5 L463.9,492.3 L463.9,489.3 L463.9,490.5 L463.9,487.5 L464.0,491.0 L464.0,485.4 L464.1,485.4 L464.1,482.6 L464.2,482.9 L464.2,479.8 L464.2,482.5 L464.3,477.6 L464.3,479.7 L464.4,474.7 L464.5,474.7 L464.5,471.9 L464.6,472.9 L464.6,466.6 L464.7,470.3 L464.8,466.7 L464.8,468.5 L464.9,464.8 L465.0,466.0 L465.1,463.6 L465.1,465.4 L465.2,459.8 L465.3,465.2 L465.4,463.0 L465.5,465.7 L465.6,463.5 L465.7,466.5 L465.8,464.2 L466.0,467.7 L466.1,467.2 L466.2,471.5 L466.3,470.8 L466.5,474.6 L466.6,471.7 L466.7,477.4 L466.9,475.5 L467.0,480.8 L467.2,479.5 L467.3,482.6 L467.4,481.2 L467.6,485.2 L467.7,484.6 L467.8,487.2 L468.0,485.7 L468.1,487.9 L468.2,486.5 L468.4,487.3 L468.5,485.8 L468.6,487.1 L468.7,481.9 L468.8,485.4 L469.0,481.1 L469.1,483.5 L469.2,479.0 L469.3,480.4 L469.4,475.6 L469.6,477.8 L469.7,473.7 L469.8,474.3 L469.9,470.3 L470.0,470.3 L470.2,467.8 L470.3,467.8 L470.4,464.8 L470.6,466.6 L470.7,462.4 L470.9,465.7 L471.0,462.6 L471.2,464.2 L471.3,462.7 L471.5,465.2 L471.6,462.7 L471.8,466.0 L472.0,464.9 L472.1,469.2 L472.3,467.2 L472.5,470.1 L472.7,469.8 L472.8,473.7 L473.0,472.3 L473.2,476.7 L473.4,475.7 L473.6,479.0 L473.7,478.7 L473.9,483.0 L474.1,481.0 L474.3,484.9 L474.5,483.4 L474.6,489.5 L474.8,485.7 L475.0,489.4 L475.1,487.2 L475.3,490.4 L475.4,485.9 L475.6,491.7 L475.7,486.6 L475.9,490.7 L476.0,487.6 L476.2,489.1 L476.3,485.7 L476.4,486.6 L476.5,483.7 L476.7,485.3 L476.8,479.1 L476.9,482.1 L477.0,476.9 L477.1,478.0 L477.2,474.4 L477.3,475.9 L477.5,472.0 L477.6,471.8 L477.7,468.8 L477.8,470.5 L477.9,466.1 L478.1,469.2 L478.2,464.9 L478.4,467.8 L478.5,464.4 L478.6,468.1 L478.8,466.3 L478.9,469.2 L479.0,466.2 L479.2,469.3 L479.3,467.5 L479.5,473.3 L479.6,469.7 L479.8,473.4 L479.9,471.5 L480.1,475.6 L480.3,475.2 L480.4,478.6 L480.6,477.1 L480.8,481.3 L480.9,480.2 L481.1,483.8 L481.2,482.2 L481.4,487.0 L481.5,484.8 L481.7,489.1 L481.8,488.8 L482.0,491.5 L482.1,490.6 L482.2,494.3 L482.4,492.0 L482.5,498.0 L482.6,494.6 L482.7,497.8 L482.8,496.9 L482.9,499.1 L482.9,496.8 L482.9,488.4 L483.8,500.8 L484.7,487.4 L485.6,498.5 L486.5,487.5 L487.4,495.4 L488.3,485.7 L489.2,496.3 L490.1,486.4 L491.0,495.7 L491.9,486.5 L492.8,494.1 L493.7,485.0 L494.6,492.4 L495.5,484.9 L496.4,491.7 L497.3,481.7 L498.2,493.0 L499.1,483.6 L500.0,491.4 L500.9,480.4 L501.8,490.0 L502.7,482.0 L503.6,490.6 L504.5,479.5 L505.4,489.2 L506.3,478.4 L506.5,485.8 L506.5,482.2 L506.6,484.4 L506.7,480.0 L506.7,482.9 L506.8,479.1 L506.9,479.8 L507.0,475.7 L507.1,477.7 L507.2,474.3 L507.3,475.2 L507.4,471.3 L507.5,472.1 L507.7,468.0 L507.8,469.3 L507.9,465.2 L508.0,466.2 L508.2,463.1 L508.3,463.4 L508.4,460.7 L508.6,462.9 L508.7,458.6 L508.8,459.7 L509.0,457.1 L509.1,459.2 L509.3,455.9 L509.4,458.1 L509.5,455.8 L509.7,459.8 L509.8,458.0 L509.9,461.0 L510.1,458.8 L510.2,462.4 L510.4,461.5 L510.5,464.6 L510.7,462.9 L510.8,466.5 L511.0,466.8 L511.1,469.9 L511.3,468.9 L511.4,472.1 L511.6,471.2 L511.8,475.5 L511.9,474.6 L512.1,478.9 L512.2,477.1 L512.4,481.8 L512.6,480.3 L512.7,485.1 L512.9,482.7 L513.0,486.5 L513.2,484.1 L513.4,487.5 L513.5,485.1 L513.7,488.2 L513.8,485.6 L514.0,488.6 L514.2,485.0 L514.3,488.1 L514.5,482.5 L514.7,485.8 L514.8,482.8 L515.0,484.1 L515.2,480.5 L515.4,480.8 L515.5,477.6 L515.7,479.8 L515.9,473.3 L516.0,475.3 L516.2,471.7 L516.4,475.7 L516.5,468.5 L516.7,472.5 L516.9,466.7 L517.0,467.2 L517.2,464.3 L517.4,464.2 L517.6,461.9 L517.7,463.6 L517.9,459.4 L518.1,461.4 L518.2,458.9 L518.5,462.4 L518.7,459.0 L519.0,462.5 L519.2,460.4 L519.5,463.8 L519.8,461.6 L520.0,465.3 L520.3,464.3 L520.5,468.1 L520.8,467.6 L521.0,472.2 L521.3,469.0 L521.5,476.7 L521.8,472.0 L522.0,475.4 L522.2,474.9 L522.4,478.5 L522.6,477.7 L522.9,481.3 L523.1,479.5 L523.3,483.7 L523.6,481.0 L523.7,486.3 L523.9,486.2 L524.1,491.7 L524.3,487.7 L524.5,492.0 L524.7,490.7 L524.9,493.2 L525.1,491.5 L525.3,494.7 L525.6,491.6 L525.8,493.8 L525.9,490.2 L526.1,493.1 L526.3,489.6 L526.4,490.5 L526.6,487.0 L526.8,488.8 L527.0,484.5 L527.2,485.8 L527.4,483.0 L527.6,482.9 L527.8,479.1 L528.0,480.0 L528.2,476.1 L528.4,478.6 L528.6,474.2 L528.8,477.3 L529.0,472.4 L529.2,473.8 L529.4,469.4 L529.6,471.2 L529.8,467.0 L530.0,471.0 L530.5,465.5 L531.0,471.4 L531.4,470.1 L531.9,474.3 L532.4,473.7 L532.8,478.0 L533.3,476.4 L533.9,479.5 L534.4,477.6 L534.6,481.7 L534.9,475.2 L535.1,477.3 L535.3,474.9 L535.6,475.1 L535.8,472.7 L536.1,472.6 L536.3,468.7 L536.6,470.2 L536.8,466.3 L537.1,467.6 L537.4,461.2 L537.6,464.4 L537.9,461.2 L538.1,461.2 L538.4,457.3 L538.6,459.6 L538.9,455.4 L539.1,456.9 L539.4,454.1 L539.6,456.3 L539.9,453.1 L540.1,455.4 L540.3,453.5 L540.4,456.1 L540.6,453.5 L540.7,457.5 L540.8,455.2 L540.9,458.7 L541.1,456.9 L541.2,460.2 L541.3,458.3 L541.4,465.2 L541.6,461.7 L541.7,465.3 L541.8,463.2 L541.9,466.2 L542.0,465.8 L542.1,470.0 L542.3,469.0 L542.4,473.0 L542.5,471.4 L542.6,475.7 L542.7,474.7 L542.8,478.1 L542.9,477.9 L543.0,480.4 L543.1,479.9 L543.3,484.1 L543.4,483.2 L543.5,486.7 L543.6,484.5 L543.7,488.8 L543.8,486.9 L543.9,490.0 L544.0,488.3 L544.1,492.5 L544.2,489.7 L544.4,493.6 L544.5,491.8 L544.6,493.8 L544.7,492.0 L544.9,493.6 L545.0,492.1 L545.2,496.3 L545.3,490.3 L545.5,492.0 L545.6,489.3 L545.8,490.9 L545.9,487.3 L546.1,488.1 L546.2,485.9 L546.4,486.0 L546.5,481.9 L546.7,482.9 L546.8,479.0 L547.0,480.4 L547.1,476.7 L547.3,477.4 L547.4,474.6 L547.6,475.5 L547.7,470.9 L547.9,472.3 L548.1,468.5 L548.2,469.3 L548.4,466.0 L548.5,466.9 L548.7,464.4 L548.8,465.1 L549.0,463.3 L549.1,465.4 L549.8,461.5 L550.4,463.8 L551.1,460.8 L551.7,464.0 L552.4,463.6 L553.0,468.9 L553.5,468.7 L553.7,470.9 L553.8,469.1 L553.9,473.6 L554.0,470.9 L554.1,474.6 L554.2,474.6 L554.3,477.2 L554.4,476.0 L554.5,480.9 L554.6,479.0 L554.7,484.5 L554.8,481.8 L554.9,486.4 L555.0,484.7 L555.0,489.0 L555.1,486.1 L555.2,492.0 L555.3,489.8 L555.4,493.0 L555.5,491.9 L555.6,495.3 L555.7,493.0 L555.8,498.0 L555.9,496.4 L556.0,498.4 L556.1,496.9 L556.2,500.4 L556.3,497.0 L556.5,499.9 L556.6,496.3 L556.7,500.3 L556.8,497.5 L556.9,498.3 L557.0,495.3 L557.1,497.2 L557.2,491.6 L557.3,495.2 L557.4,492.1 L557.5,493.7 L557.6,490.3 L557.8,491.1 L557.9,485.5 L558.0,489.4 L558.1,486.3 L558.2,486.0 L558.3,482.7 L558.5,484.3 L558.6,480.4 L558.7,481.3 L558.8,477.6 L559.0,481.8 L559.1,474.7 L559.2,475.7 L559.4,471.8 L559.5,476.1 L559.6,470.2 L559.8,470.4 L559.9,467.3 L560.1,469.5 L560.2,466.3 L560.4,469.4 L560.6,463.0 L560.7,465.9 L560.9,461.2 L561.4,463.2 L562.1,456.9 L562.7,459.4 L563.4,455.1 L564.1,456.7 L564.8,453.2 L565.5,456.7 L566.3,452.3 L566.9,455.3 L567.6,452.9 L568.2,455.3 L568.5,454.1 L568.7,456.7 L568.9,453.5 L569.1,458.0 L569.3,457.0 L569.5,459.0 L569.8,457.8 L570.0,460.7 L570.2,460.1 L570.4,463.8 L570.6,462.8 L570.8,465.7 L571.0,463.6 L571.2,467.8 L571.4,465.1 L571.6,471.0 L571.8,468.4 L572.0,472.3 L572.1,471.9 L572.3,475.8 L572.5,474.2 L572.7,477.4 L572.9,476.4 L573.1,480.1 L573.3,479.2 L573.5,482.6 L573.7,480.6 L573.9,484.4 L574.1,482.8 L574.3,486.7 L574.6,485.2 L574.8,487.8 L575.0,487.0 L575.3,490.1 L575.5,490.2 L575.8,493.7 L576.0,492.1 L576.3,495.7 L576.6,493.7 L576.8,497.9 L577.1,496.0 L577.3,500.4 L577.5,499.3 L577.8,501.5 L578.0,500.4 L578.3,503.5 L578.5,502.4 L578.7,505.8 L578.9,504.1 L579.1,508.0 L579.3,506.9 L579.4,509.7 L579.6,507.2 L579.8,510.7 L579.9,509.4 L580.0,512.5 L580.0,491.7 L580.9,505.8 L581.8,493.7 L582.7,506.8 L583.6,491.7 L584.5,502.5 L585.4,492.4 L586.3,503.2 L587.2,485.9 L588.1,500.4 L589.0,487.5 L589.9,502.0 L590.8,486.7 L591.7,503.3 L592.6,484.3 L593.5,500.7 L594.4,486.7 L595.3,500.8 L596.2,486.3 L597.1,498.8 L598.0,484.8 L598.9,495.2 L599.8,479.9 L600.6,487.5 L600.6,490.7 L600.7,485.5 L600.7,487.1 L600.8,485.0 L600.9,485.2 L600.9,482.5 L601.0,483.6 L601.1,479.2 L601.2,481.3 L601.3,477.1 L601.4,478.8 L601.4,473.9 L601.5,476.0 L601.6,472.1 L601.7,472.2 L601.8,467.8 L601.9,469.5 L602.0,466.9 L602.1,467.4 L602.2,463.7 L602.3,464.4 L602.4,460.6 L602.5,462.4 L602.6,458.7 L602.8,460.0 L602.9,456.5 L603.0,457.9 L603.1,454.9 L603.2,457.0 L603.3,451.4 L603.3,456.3 L603.4,454.2 L603.5,455.4 L603.6,452.8 L603.7,456.3 L603.8,453.5 L603.8,460.4 L603.9,455.8 L604.0,458.5 L604.1,457.3 L604.1,461.3 L604.2,460.0 L604.3,462.7 L604.4,461.6 L604.4,465.1 L604.5,465.1 L604.6,468.2 L604.6,466.5 L604.7,471.1 L604.8,468.7 L604.9,474.1 L604.9,473.0 L605.0,476.4 L605.1,476.2 L605.2,479.6 L605.2,479.6 L605.3,483.3 L605.4,481.2 L605.5,485.5 L605.6,483.1 L605.7,486.6 L605.8,486.2 L605.9,488.9 L606.0,487.6 L606.1,490.3 L606.2,487.8 L606.3,491.2 L606.5,487.0 L606.6,491.6 L606.8,489.2 L607.0,490.3 L607.2,487.4 L607.4,488.8 L607.6,485.6 L607.8,488.0 L608.0,484.7 L608.3,485.9 L608.5,480.9 L608.7,484.1 L609.0,476.4 L609.2,480.0 L609.4,474.2 L609.7,478.0 L609.9,472.1 L610.1,472.9 L610.4,469.7 L610.6,470.6 L610.8,465.2 L611.0,469.7 L611.2,462.5 L611.4,466.3 L611.6,463.0 L611.8,463.4 L612.0,460.3 L612.1,462.3 L612.2,459.9 L612.4,462.1 L612.5,458.2 L612.6,461.2 L612.7,460.9 L612.7,463.7 L612.8,462.5 L612.8,466.3 L612.8,462.8 L612.8,468.2 L612.8,467.8 L612.7,471.4 L612.7,470.2 L612.7,476.4 L612.7,473.4 L612.7,477.8 L612.6,477.4 L612.7,480.5 L612.7,479.6 L612.8,482.3 L612.8,479.8 L612.9,481.7 L613.1,479.2 L613.2,482.3 L613.3,479.2 L613.5,480.5 L613.7,477.2 L613.9,478.8 L614.0,474.6 L614.3,474.9 L614.5,471.8 L614.7,472.9 L614.9,469.3 L615.1,469.6 L615.3,465.2 L615.6,466.3 L615.8,462.3 L616.0,465.9 L616.2,460.1 L616.4,461.1 L616.6,458.3 L616.8,459.8 L617.0,457.3 L617.2,460.0 L617.4,455.8 L617.5,458.8 L617.6,456.5 L617.8,459.3 L617.9,458.1 L618.1,460.9 L618.2,459.0 L618.3,462.9 L618.5,462.2 L618.6,465.8 L618.7,464.1 L618.9,467.3 L619.0,464.8 L619.1,471.0 L619.2,469.4 L619.3,475.7 L619.4,472.1 L619.6,475.9 L619.7,474.5 L619.8,478.8 L619.8,477.7 L619.9,480.8 L620.0,480.2 L620.1,482.5 L620.2,481.0 L620.2,484.8 L620.3,482.7 L620.3,481.7 L621.2,493.7 L622.1,483.3 L623.0,492.5 L623.9,481.6 L624.8,491.8 L625.7,482.9 L626.6,492.5 L627.5,483.0 L628.4,490.2 L629.3,481.7 L630.2,489.1 L631.1,481.7 L632.0,490.0 L632.9,481.1 L633.8,486.9 L634.7,479.0 L635.6,487.7 L636.5,478.7 L637.4,489.1 L638.3,477.9 L639.2,488.4 L640.1,479.1 L641.0,485.9 L641.9,479.2 L642.8,485.4 L643.7,478.7 L643.8,483.6 L643.9,480.1 L643.9,481.3 L644.0,477.1 L644.1,480.0 L644.2,476.2 L644.3,476.6 L644.4,471.2 L644.5,474.6 L644.6,471.0 L644.7,471.9 L644.8,468.3 L644.9,468.1 L645.0,464.9 L645.1,468.3 L645.3,462.4 L645.4,464.0 L645.5,459.2 L645.7,461.6 L645.8,457.3 L645.9,458.0 L646.1,456.1 L646.2,456.8 L646.3,453.8 L646.5,455.7 L646.6,453.0 L646.8,457.6 L646.9,453.0 L647.0,456.0 L647.2,454.0 L647.3,457.6 L647.5,454.3 L647.6,458.7 L647.8,458.4 L647.9,460.8 L648.1,458.3 L648.2,464.3 L648.4,462.2 L648.6,466.7 L648.7,465.1 L648.9,469.3 L649.1,468.7 L649.2,473.0 L649.4,472.2 L649.5,477.2 L649.7,475.2 L649.9,478.8 L650.0,477.6 L650.2,480.9 L650.3,478.6 L650.5,483.4 L650.6,481.1 L650.8,483.7 L650.9,481.7 L651.0,485.1 L651.2,482.0 L651.3,485.6 L651.5,483.0 L651.6,484.8 L651.8,482.2 L651.9,482.9 L652.0,479.4 L652.1,480.2 L652.3,476.4 L652.4,480.6 L652.5,474.2 L652.6,475.5 L652.7,469.7 L652.8,472.9 L652.9,468.1 L653.0,468.5 L653.2,464.6 L653.3,466.8 L653.4,463.6 L653.5,464.4 L653.7,461.7 L653.8,462.2 L654.0,459.8 L654.1,461.7 L654.4,458.7 L654.6,462.5 L654.9,459.9 L655.2,464.4 L655.5,461.3 L655.8,465.7 L656.2,465.2 L656.5,468.8 L656.8,469.1 L657.1,473.2 L657.4,471.7 L657.7,475.3 L658.0,473.4 L658.3,476.7 L658.5,474.7 L658.7,475.7 L658.9,472.9 L659.1,474.7 L659.3,467.9 L659.5,472.6 L659.7,467.7 L659.8,468.6 L660.0,463.9 L660.2,464.6 L660.3,461.3 L660.5,462.0 L660.7,459.1 L660.8,461.7 L661.0,457.0 L661.1,458.4 L661.3,456.1 L661.5,458.5 L661.5,456.9 L661.6,459.8 L661.7,458.0 L661.8,460.4 L661.8,459.6 L661.9,462.4 L662.0,459.6 L662.1,465.1 L662.1,463.6 L662.2,467.3 L662.3,465.3 L662.3,471.2 L662.4,468.3 L662.5,471.3 L662.6,470.0 L662.6,473.7 L662.7,472.9 L662.8,477.5 L662.8,476.1 L662.9,479.4 L663.0,479.0 L663.1,483.3 L663.1,481.8 L663.2,484.7 L663.3,483.6 L663.4,488.5 L663.5,485.9 L663.5,490.7 L663.6,486.7 L663.7,492.1 L663.8,491.1 L663.9,494.4 L664.0,492.2 L664.0,495.2 L664.1,493.6 L664.2,499.0 L664.3,493.7 L664.4,497.4 L664.6,494.7 L664.7,497.0 L664.9,492.0 L665.0,496.4 L665.2,493.2 L665.3,496.9 L665.5,491.4 L665.7,492.3 L665.8,489.1 L666.0,491.1 L666.2,486.2 L666.3,487.8 L666.5,484.3 L666.7,484.8 L666.9,480.6 L667.1,482.3 L667.2,478.2 L667.4,479.4 L667.6,475.8 L667.8,476.7 L668.0,472.9 L668.1,474.5 L668.3,470.8 L668.5,472.9 L668.7,468.6 L668.8,472.1 L669.7,465.7 L670.4,466.9 L671.3,463.7 L672.2,467.1 L673.2,465.8 L673.7,468.2 L674.2,466.7 L674.8,470.5 L675.3,468.0 L675.9,472.2 L676.5,471.6 L677.1,474.8 L677.7,474.2 L678.3,477.4 L678.9,476.4 L679.5,479.3 L680.1,476.3 L680.6,479.6 L681.0,477.2 L681.3,479.1 L681.7,473.3 L682.0,476.7 L682.4,473.6 L682.7,477.4 L683.1,470.1 L683.4,471.7 L683.7,465.5 L684.0,468.8 L684.4,464.7 L684.7,466.1 L685.0,462.8 L685.3,464.5 L685.6,458.7 L685.9,462.7 L686.2,459.2 L686.5,462.0 L686.8,458.3 L687.0,462.2 L687.3,461.3 L687.6,463.5 L687.8,463.7 L688.1,466.9 L688.4,465.9 L688.6,469.0 L688.9,469.0 L689.1,472.9 L689.3,471.5 L689.6,476.9 L689.8,473.0 L690.0,477.6 L690.2,475.6 L690.5,479.7 L690.7,477.8 L690.9,480.0 L691.0,476.3 L691.2,478.3 L691.3,475.3 L691.5,477.6 L691.6,473.9 L691.7,476.3 L691.8,471.3 L692.0,471.6 L692.1,466.0 L692.2,468.6 L692.3,464.3 L692.4,465.3 L692.5,460.6 L692.6,461.6 L692.7,457.8 L692.9,459.4 L693.0,456.2 L693.1,457.1 L693.2,451.9 L693.4,455.4 L693.5,453.6 L693.7,455.2 L693.8,452.6 L693.9,457.0 L694.0,454.2 L694.1,457.7 L694.1,455.3 L694.2,458.7 L694.3,456.0 L694.4,459.8 L694.5,458.4 L694.6,461.1 L694.7,460.7 L694.8,463.8 L694.8,462.2 L694.9,465.1 L695.0,463.9 L695.1,468.4 L695.2,466.8 L695.3,471.0 L695.4,470.3 L695.5,474.1 L695.6,472.3 L695.7,476.5 L695.8,475.4 L695.9,481.7 L696.0,477.6 L696.1,481.2 L696.2,480.4 L696.3,484.3 L696.4,483.6 L696.5,489.8 L696.6,485.7 L696.7,490.2 L696.8,487.9 L696.9,491.9 L697.0,490.2 L697.1,494.3 L697.2,492.8 L697.3,496.5 L697.4,494.9 L697.5,499.0 L697.6,496.4 L697.7,499.8 L697.8,499.0 L697.9,502.0 L698.0,497.2 L698.0,502.3 L698.1,501.0 L698.2,502.7 L698.4,500.3 L698.6,506.3 L698.7,501.3 L698.9,503.2 L699.1,498.3 L699.3,500.9 L699.4,496.6 L699.6,498.3 L699.8,494.1 L699.9,495.3 L700.1,492.0 L700.3,493.1 L700.4,488.8 L700.6,489.4 L700.8,485.5 L701.0,486.9 L701.1,482.5 L701.3,482.6 L701.5,477.4 L701.6,480.4 L701.8,476.8 L702.0,477.7 L702.1,473.5 L702.3,476.7 L702.5,473.5 L702.6,479.1 L702.8,474.0 L703.0,476.9 L703.2,474.8 L703.4,481.3 L703.5,476.2 L703.7,479.8 L703.9,478.2 L704.1,483.4 L704.2,482.2 L704.4,485.9 L704.6,485.5 L704.8,489.9 L704.9,487.8 L705.1,492.8 L705.3,491.3 L705.5,495.3 L705.6,494.6 L705.8,498.5 L706.0,496.0 L706.2,499.9 L706.4,498.3 L706.5,501.9 L706.7,499.2 L706.9,501.2 L707.1,499.4 L707.2,501.5 L707.3,496.6 L707.4,500.2 L707.5,497.2 L707.6,499.4 L707.7,496.2 L707.8,498.0 L707.9,493.2 L708.0,495.0 L708.1,492.0 L708.2,492.8 L708.3,488.0 L708.4,492.6 L708.5,487.3 L708.6,489.2 L708.7,484.7 L708.8,487.1 L708.9,481.8 L709.1,483.6 L709.2,478.7 L709.3,480.1 L709.4,477.1 L709.5,477.3 L709.6,473.8 L709.7,474.6 L709.8,470.2 L709.9,472.5 L710.0,467.9 L710.1,470.0 L710.2,465.1 L710.3,466.6 L710.4,463.6 L710.5,465.5 L710.6,461.6 L710.7,462.9 L710.8,459.9 L710.9,460.8 L711.1,457.9 L711.2,459.6 L711.3,456.7 L711.4,461.5 L711.5,456.4 L711.7,458.2 L711.9,456.4 L712.1,459.6 L712.3,457.9 L712.5,460.4 L712.7,458.8 L712.9,461.7 L713.1,461.8 L713.3,465.3 L713.5,463.8 L713.7,470.9 L713.9,468.1 L714.1,471.2 L714.3,471.5 L714.5,476.1 L714.6,474.3 L714.8,476.7 L715.0,475.9 L715.2,479.1 L715.4,477.7 L715.6,481.2 L715.7,480.5 L715.9,482.3 L716.1,479.5 L716.3,481.7 L716.5,478.8 L716.6,480.3 L716.8,476.6 L716.9,478.4 L717.1,474.2 L717.2,476.7 L717.3,471.4 L717.5,473.7 L717.6,469.3 L717.8,470.6 L718.0,465.8 L718.1,467.4 L718.4,463.3 L718.6,466.0 L718.8,461.8 L719.6,462.9 L720.6,458.1 L721.6,461.3 L722.6,457.0 L723.7,459.1 L724.7,460.0 L724.9,461.9 L725.0,458.5 L725.2,466.5 L725.3,462.2 L725.5,464.6 L725.6,464.0 L725.8,466.5 L725.9,465.4 L726.1,469.3 L726.3,468.0 L726.4,471.5 L726.6,470.8 L726.7,476.0 L726.9,473.9 L727.0,477.5 L727.2,476.4 L727.3,480.3 L727.5,477.9 L727.6,481.8 L727.8,480.6 L728.0,484.3 L728.1,483.6 L728.3,487.3 L728.4,486.1 L728.6,489.7 L728.7,488.6 L728.9,493.3 L729.0,491.8 L729.2,495.3 L729.3,493.8 L729.5,496.1 L729.7,492.0 L729.8,497.9 L730.0,495.6 L730.1,498.8 L730.3,495.1 L730.4,500.5 L730.6,497.0 L730.8,500.3 L731.0,496.4 L731.2,499.1 L731.5,497.8 L731.7,498.8 L731.9,496.0 L732.1,497.1 L732.3,494.6 L732.5,494.8 L732.8,491.7 L733.0,493.3 L733.2,490.2 L733.4,492.9 L733.6,487.1 L733.9,488.4 L734.1,484.7 L734.3,487.3 L734.5,482.0 L734.7,482.0 L734.9,478.9 L735.2,479.8 L735.4,476.6 L735.6,478.0 L735.8,474.0 L736.0,474.8 L736.3,469.9 L736.5,473.4 L736.9,470.0 L737.3,472.9 L737.6,466.8 L738.0,468.1 L738.4,463.9 L738.8,465.9 L739.2,460.8 L739.6,465.2 L740.0,459.8 L740.4,460.5 L740.8,457.4 L741.2,458.7 L741.6,455.8 L742.0,459.5 L742.4,456.3 L742.6,459.9 L742.9,456.9 L743.2,459.5 L743.5,458.7 L743.8,461.8 L744.1,461.2 L744.4,464.6 L744.7,463.4 L745.0,467.5 L745.2,465.9 L745.5,468.8 L745.8,466.4 L746.1,472.9 L746.4,471.1 L746.7,474.4 L746.9,473.5 L747.2,477.1 L747.5,475.9 L747.7,479.1 L748.0,476.6 L748.2,478.7 L748.8,476.3 L749.3,479.3 L749.8,472.5 L750.3,475.1 L750.8,471.6 L751.2,472.3 L751.7,466.1 L752.2,469.2 L752.6,465.9 L752.8,471.1 L752.9,469.6 L753.1,471.6 L753.2,471.1 L753.3,474.6 L753.5,473.4 L753.6,476.2 L753.8,473.7 L753.9,477.8 L754.0,477.8 L754.2,481.8 L754.3,480.6 L754.4,483.3 L754.6,483.7 L754.7,486.7 L754.9,485.4 L755.0,489.7 L755.1,489.4 L755.3,493.1 L755.4,491.4 L755.5,495.1 L755.7,494.6 L755.8,498.1 L756.0,495.8 L756.1,499.5 L756.2,498.0 L756.4,500.9 L756.5,499.6 L756.6,501.5 L756.8,500.3 L756.9,502.7 L757.1,500.9 L757.2,502.5 L757.3,499.7 L757.5,502.8 L757.6,499.1 L757.7,501.6 L757.9,498.0 L758.0,500.5 L758.2,496.4 L758.3,496.7 L758.4,494.0 L758.6,494.7 L758.7,490.3 L758.9,492.1 L759.0,488.9 L759.1,491.2 L759.3,486.0 L759.4,487.6 L759.5,484.0 L759.7,484.9 L759.8,479.8 L760.0,482.1 L760.1,477.6 L760.2,478.9 L760.4,475.1 L760.5,476.2 L760.6,472.5 L760.8,474.6 L760.9,471.2 L761.1,472.6 L761.2,468.8 L761.3,471.7 L761.5,468.5 L762.1,470.2 L762.7,467.6 L763.3,474.8 L763.9,470.9 L764.5,474.6 L765.2,474.6 L765.9,476.7 L766.2,473.4 L766.5,475.4 L766.8,470.5 L767.1,472.8 L767.5,469.7 L767.8,469.3 L768.1,465.4 L768.5,466.6 L768.8,463.5 L769.2,463.6 L769.5,460.6 L769.9,463.6 L770.2,457.1 L770.5,459.0 L770.9,456.5 L771.2,458.1 L771.5,455.9 L771.8,458.6 L771.9,457.4 L772.0,460.3 L772.1,457.1 L772.2,461.2 L772.4,458.2 L772.5,462.7 L772.6,461.0 L772.7,463.4 L772.8,461.8 L773.0,466.0 L773.1,464.4 L773.2,467.8 L773.3,467.1 L773.4,473.0 L773.5,466.1 L773.7,471.8 L773.8,470.4 L773.9,474.6 L774.0,473.4 L774.1,476.6 L774.2,475.8 L774.3,480.5 L774.4,478.3 L774.6,482.1 L774.7,480.7 L774.8,484.3 L774.9,483.7 L775.0,489.3 L775.1,486.0 L775.1,489.4 L775.2,489.7 L775.3,492.6 L775.4,490.4 L775.5,495.5 L775.6,494.1 L775.7,497.0 L775.7,496.1 L775.8,498.5 L775.9,497.9 L775.9,501.0 L776.0,495.9 L776.1,501.9 L776.1,500.5 L776.2,503.3 L776.2,487.8 L777.1,498.1 L778.0,486.7 L778.9,497.4 L779.8,487.2 L780.7,497.3 L781.6,486.5 L782.5,494.6 L783.4,484.7 L784.3,495.2 L785.2,484.8 L786.1,496.0 L787.0,483.7 L787.9,494.8 L788.8,484.6 L789.7,490.4 L790.6,482.1 L790.9,485.8 L791.0,487.3 L791.1,483.8 L791.2,486.0 L791.3,482.8 L791.5,484.2 L791.6,478.5 L791.8,482.3 L792.0,477.4 L792.2,479.8 L792.4,475.7 L792.6,476.2 L792.8,473.2 L793.0,475.0 L793.2,470.6 L793.4,471.8 L793.6,467.7 L793.8,470.6 L794.4,466.2 L795.0,467.7 L795.7,464.2 L796.4,466.8 L797.0,463.8 L797.7,465.0 L798.2,459.9 L798.8,463.6 L799.3,459.5 L799.8,459.6 L800.3,455.3 L800.7,457.6 L801.2,456.1 L801.3,459.9 L801.3,456.8 L801.4,460.1 L801.5,458.7 L801.6,462.7 L801.7,460.5 L801.8,464.7 L801.8,462.7 L801.9,466.7 L802.0,464.7 L802.1,468.4 L802.2,467.1 L802.3,472.1 L802.4,470.8 L802.4,473.4 L802.5,472.7 L802.6,477.1 L802.7,475.2 L802.8,479.4 L802.9,477.6 L802.9,482.5 L803.0,480.2 L803.1,484.8 L803.2,482.7 L803.3,489.9 L803.4,485.5 L803.4,488.5 L803.5,487.3 L803.6,491.1 L803.7,486.4 L803.8,491.9 L803.9,490.7 L803.9,494.0 L804.0,490.9 L804.1,493.5 L804.3,491.5 L804.4,493.7 L804.6,490.8 L804.8,494.0 L804.9,489.8 L805.1,490.7 L805.3,487.7 L805.4,488.5 L805.6,485.9 L805.8,485.8 L805.9,481.6 L806.1,482.6 L806.2,478.9 L806.4,479.4 L806.5,473.2 L806.7,477.2 L806.8,472.9 L806.9,474.3 L807.0,471.6 L807.1,474.1 L807.1,482.8 L808.0,492.2 L808.9,478.1 L809.8,492.3 L810.7,480.9 L811.6,492.7 L812.5,476.6 L813.4,488.7 L814.3,475.4 L815.2,489.4 L816.1,475.5 L817.0,487.5 L817.9,477.2 L818.8,488.7 L819.7,475.2 L820.6,486.0 L821.5,473.1 L821.8,478.8 L821.8,480.8 L821.9,478.0 L821.9,479.3 L822.0,476.2 L822.1,476.7 L822.1,473.4 L822.2,475.4 L822.3,471.3 L822.4,473.3 L822.5,468.5 L822.6,470.7 L822.7,465.6 L822.8,466.8 L822.9,464.5 L823.0,464.1 L823.1,461.5 L823.2,465.1 L823.3,458.7 L823.4,460.1 L823.6,456.1 L823.7,460.0 L823.8,455.1 L824.0,455.9 L824.1,452.9 L824.3,456.0 L824.4,450.7 L824.6,453.1 L824.7,450.8 L825.1,451.8 L825.4,450.6 L825.9,453.0 L826.3,451.1 L826.8,455.3 L827.2,452.0 L827.7,458.9 L828.2,457.1 L828.7,459.9 L829.2,458.6 L829.7,462.1 L830.1,461.4 L830.6,464.6 L831.3,460.5 L832.0,466.9 L832.7,465.7 L833.4,468.8 L834.2,468.6 L834.9,473.0 L835.7,469.2 L836.5,470.8 L836.9,468.0 L837.3,469.8 L837.7,466.0 L838.2,467.8 L838.7,463.8 L839.2,465.2 L839.7,462.3 L840.1,463.3 L840.6,459.3 L841.1,460.4 L841.6,454.3 L842.0,458.8 L842.4,455.1 L842.8,456.6 L843.2,452.9 L843.5,454.1 L843.8,452.2 L844.4,455.1 L844.7,453.0 L844.9,458.0 L845.0,455.4 L845.2,459.3 L845.4,459.1 L845.9,461.6 L846.6,460.4 L847.6,466.1 L848.6,460.8 L849.7,463.6 L850.7,461.8 L851.8,464.5 L852.8,460.7 L853.8,466.2 L854.8,462.9 L855.8,466.2 L856.8,464.3 L857.6,467.5 L858.6,466.5 L859.6,469.8 L860.5,467.9 L861.3,470.6 L862.1,468.2 L862.3,469.6 L862.5,467.6 L862.8,470.7 L863.0,465.3 L863.2,465.7 L863.3,461.4 L863.5,462.6 L863.7,459.5 L863.9,460.8 L864.1,456.6 L864.3,458.5 L864.5,454.3 L864.7,455.8 L865.0,453.3 L865.4,456.8 L865.9,450.7 L866.4,457.9 L866.9,455.5 L867.5,459.8 L868.0,457.9 L868.5,461.8 L869.0,460.2 L869.4,465.0 L869.7,463.4 L869.9,466.5 L870.1,466.4 L870.3,469.9 L870.5,468.2 L870.7,472.4 L870.9,471.2 L871.1,475.2 L871.3,473.3 L871.4,476.9 L871.7,476.5 L871.9,479.2 L872.1,477.7 L872.4,479.9 L872.6,477.0 L872.8,478.2 L873.0,474.2 L873.2,477.3 L873.4,472.5 L873.6,475.0 L873.9,470.3 L874.1,472.7 L874.3,465.3 L874.6,469.0 L874.8,465.9 L875.1,466.4 L875.3,462.8 L875.6,464.4 L875.8,460.0 L876.1,462.5 L876.3,459.5 L876.5,459.9 L876.8,457.9 L877.2,459.8 L877.6,456.7 L878.0,461.7 L878.4,460.2 L878.9,464.3 L879.3,462.3 L879.7,466.2 L880.1,465.4 L880.5,469.1 L880.8,467.3 L881.2,470.6 L882.0,468.6 L882.7,468.1 L883.4,464.9 L884.1,467.4 L884.3,466.3 L884.6,467.7 L884.8,467.2 L885.0,470.1 L885.3,467.1 L885.5,470.9 L885.7,469.3 L886.0,471.4 L886.2,470.6 L886.4,475.0 L886.6,473.2 L886.8,478.3 L886.9,477.8 L887.1,482.8 L887.1,480.4 L887.1,483.4 L887.1,482.0 L887.2,485.9 L887.2,484.0 L887.2,487.8 L887.2,486.0 L887.2,488.8 L887.3,488.1 L887.3,491.5 L887.3,490.4 L887.3,492.9 L887.3,491.7 L887.3,494.9 L887.3,491.9 L887.3,498.1 L887.3,497.2 L887.4,500.3 L887.4,498.7 L887.4,505.7 L887.4,501.7 L887.4,504.7 L887.4,503.9 L887.4,507.3 L887.4,506.3 L887.4,510.0 L887.4,509.5 L887.4,513.1 L887.4,511.7 L887.4,515.8 L887.4,513.6 L887.4,521.2 L887.4,517.0 L887.4,521.0 L887.4,520.4 L887.4,523.6 L887.4,522.9 L887.4,525.7 L887.4,523.9 L887.4,528.3 L887.4,526.6 L887.4,529.8 L887.4,528.4 L887.4,532.5 L887.4,531.3 L887.5,533.8 L887.5,532.0 L887.5,536.0 L887.5,534.8 L887.5,536.6 L887.5,532.4 L887.5,540.5 L887.5,537.4 L887.6,539.2 L887.6,535.1 L887.6,541.3 L887.6,538.6 L887.6,541.6 L887.7,539.8 L887.8,541.0 L887.8,536.8 L887.9,542.2 L887.9,539.4 L888.0,540.0 L888.1,537.0 L888.2,538.7 L888.2,535.3 L888.3,538.6 L888.4,532.7 L888.5,533.8 L888.5,531.3 L888.6,530.9 L888.7,527.9 L888.8,530.5 L888.9,525.2 L889.0,524.7 L889.1,521.2 L889.2,521.8 L889.3,516.0 L889.4,520.8 L889.4,514.1 L889.5,517.2 L889.6,512.9 L889.7,514.0 L889.8,511.3 L889.9,512.2 L890.0,509.2 L890.3,510.6 L890.6,503.6 L890.9,507.9 L891.2,504.6 L891.5,505.9 L891.8,501.9 L892.2,504.7 L892.5,502.0 L892.9,502.6 L893.5,499.0 L894.1,501.9 L894.8,498.4 L895.5,499.9 L896.2,498.1 L896.8,498.4 L897.4,494.7 L897.5,496.7 L897.7,493.9 L897.8,495.5 L898.0,492.0 L898.1,493.0 L898.2,489.3 L898.4,491.5 L898.5,486.9 L898.7,488.7 L898.8,485.9 L898.9,487.1 L899.0,483.4 L899.2,485.2 L899.3,480.7 L899.4,481.5 L899.5,479.3 L899.6,480.2 L899.7,476.0 L899.9,476.9 L900.0,473.6 L900.1,474.9 L900.2,471.4 L900.3,473.8 L900.4,470.6 L900.5,470.8 L900.7,467.4 L900.8,469.3 L900.9,465.7 L900.9,465.6 L901.0,463.0 L901.1,464.1 L901.2,460.9 L901.3,461.7 L901.4,458.3 L901.5,458.5 L901.6,455.3 L901.7,456.6 L901.8,450.9 L901.9,456.0 L902.1,452.5 L902.2,455.0 L902.4,452.2 L902.7,453.6 L903.0,452.5 L903.4,456.7 L903.7,454.2 L904.1,458.0 L904.5,456.8 L904.9,460.9 L905.3,459.4 L905.8,463.9 L906.2,461.8 L906.6,465.3 L907.1,464.6 L907.5,468.0 L908.0,467.0 L908.5,470.3 L909.0,468.2 L909.5,471.6 L910.0,469.9 L910.6,473.3 L911.5,471.7 L912.4,475.5 L913.4,472.6 L914.5,474.9 L915.5,473.4 L916.5,476.9 L917.2,475.2 L917.9,478.8 L918.7,475.9 L919.4,479.2 L920.1,478.2 L920.9,482.0 L921.6,479.1 L922.4,483.2 L923.1,480.3 L923.8,481.6 L924.6,478.9 L925.3,479.3 L926.0,475.7 L926.8,478.4 L927.5,474.0 L928.2,476.3 L929.2,473.9 L930.2,476.0 L931.2,471.4 L932.2,477.3 L933.1,473.8 L934.1,478.1 L935.1,475.4 L936.2,477.7 L937.2,475.5 L938.3,479.1 L939.2,476.2 L940.0,482.4 L940.4,478.0 L940.8,481.3 L941.1,479.8 L941.3,482.9 L941.6,483.1 L941.9,485.5 L942.1,485.2 L942.5,487.7 L942.9,485.1 L943.5,488.4 L944.2,484.9 L944.9,487.0 L945.7,483.2 L946.5,484.6 L947.3,481.5 L948.1,483.0 L948.8,480.6 L949.6,481.8 L950.3,475.6 L951.0,480.4 L951.8,477.6 L952.5,477.8 L953.2,474.3 L954.0,477.0 L954.7,474.4 L955.7,475.7 L956.7,470.3 L957.6,474.2 L958.6,470.9 L959.6,473.8 L960.6,468.3 L961.6,473.5 L962.5,472.2 L963.5,474.4 L964.5,472.3 L965.5,475.8 L966.5,474.6 L967.5,476.4 L968.4,474.7 L969.4,477.7 L970.4,475.3 L971.4,478.7 L972.4,477.0 L973.1,480.1 L973.8,479.1 L974.6,481.7 L975.3,478.7 L976.0,484.1 L976.8,482.3 L977.5,485.5 L978.2,482.9 L979.0,485.7 L979.7,482.4 L980.4,484.4 L981.2,481.4 L981.9,481.7 L982.6,478.9 L983.4,479.8 L984.1,477.6 L984.7,481.6 L985.3,475.3 L985.9,477.1 L986.5,473.3 L987.1,474.4 L987.6,471.8 L988.2,472.8 L988.8,468.9 L989.4,473.6 L990.0,467.8 L991.0,469.5 L992.0,467.3 L992.9,471.2 L993.9,468.5 L994.9,470.8 L995.9,469.6 L996.7,472.4 L997.5,470.9 L998.3,473.7 L999.1,471.4 L1000.0,475.6 L1000.8,473.4 L1001.8,477.1 L1002.5,472.5 L1003.3,478.0 L1004.1,476.4 L1004.9,479.6 L1005.8,477.4 L1006.6,480.4 L1007.5,479.0 L1008.3,481.5 L1009.1,480.6 L1010.2,483.4 L1011.3,479.7 L1012.3,480.7 L1013.4,477.8 L1014.5,479.0 L1015.5,476.6 L1016.5,480.7 L1017.2,477.7 L1017.9,480.7 L1018.5,478.3 L1019.2,482.4 L1019.8,481.7 L1020.4,484.7 L1021.1,483.8 L1021.7,486.7 L1022.4,484.3 L1023.2,486.4 L1024.0,482.5 L1024.8,486.3 L1025.6,482.8 L1026.4,484.3 L1027.3,481.5 L1028.2,483.3 L1029.0,480.0 L1029.8,480.8 L1030.6,477.6 L1031.4,482.2 L1032.2,476.6 L1033.1,477.4 L1033.9,474.9 L1034.8,476.5 L1035.6,474.1 L1036.6,477.2 L1037.7,471.3 L1038.7,478.0 L1039.8,475.8 L1040.8,478.7 L1041.9,477.4 L1042.9,479.2 L1044.0,477.7 L1045.0,478.4 L1046.0,475.7 L1047.0,478.5 L1048.1,474.4 L1049.2,476.9 L1050.3,474.0 L1051.3,476.5 L1052.4,473.0 L1053.5,476.4 L1054.6,473.9 L1055.7,474.9 L1056.9,472.7 L1058.0,474.9 L1059.1,472.3 L1060.3,474.3 L1061.4,472.8 L1062.6,473.7 L1063.8,471.4 L1065.0,474.2 L1066.0,471.3 L1067.0,474.2 L1067.9,472.2 L1068.3,475.9 L1068.7,473.8 L1069.0,480.4 L1069.3,476.5 L1069.5,479.2 L1069.8,478.3 L1070.0,482.3 L1070.2,481.7 L1070.4,484.8 L1070.7,482.8 L1070.9,487.4 L1071.1,485.4 L1071.4,489.1 L1071.7,488.4 L1072.0,490.2 L1072.4,488.7 L1073.1,492.0 L1073.9,488.9 L1074.8,492.3 L1075.7,488.4 L1076.6,489.4 L1077.6,485.4 L1078.4,487.2 L1079.3,483.7 L1080.0,485.1 L1080.8,481.1 L1081.5,483.2 L1082.2,479.9 L1082.8,481.0 L1083.4,478.0 L1084.0,479.7 L1084.6,476.4 L1085.5,478.4 L1086.4,475.5 L1087.2,476.7 L1088.2,473.4 L1089.2,476.0 L1090.1,474.0 L1091.1,476.4 L1092.1,475.0 L1093.1,477.6 L1094.2,475.7 L1095.3,477.6 L1096.2,474.9 L1097.1,476.5 L1098.1,473.7 L1099.1,476.0 L1100.0,469.9 L1101.0,475.7 L1102.0,468.2 L1103.0,475.6 L1104.1,469.3 L1105.2,473.2 L1106.3,470.3 L1107.4,472.3 L1108.4,471.2 L1109.5,474.1 L1110.6,471.7 L1111.2,474.8 L1111.7,473.1 L1112.2,478.4 L1112.8,476.0 L1113.4,478.9 L1113.9,478.1 L1114.5,482.3 L1115.0,480.7 L1115.6,484.2 L1116.1,483.1 L1116.6,486.5 L1117.1,484.3 L1117.5,487.4 L1117.9,485.1 L1118.3,488.2 L1118.7,485.1 L1119.0,487.0 L1119.3,483.7 L1119.5,485.9 L1119.7,481.7 L1119.8,485.5 L1120.0,479.3 L1120.2,479.5 L1120.4,475.9 L1120.6,477.0 L1121.0,473.6 L1121.4,477.6 L1122.1,472.6 L1122.9,476.3 L1123.8,473.3 L1124.8,477.5 L1125.8,473.1 L1126.9,477.9 L1128.0,476.1 L1129.0,478.7 L1129.9,477.1 L1130.8,478.1 L1131.7,476.0 L1132.7,477.3 L1133.6,475.2 L1134.6,475.7 L1135.5,471.8 L1136.4,477.9 L1137.3,472.5 L1138.2,475.2 L1139.4,472.4 L1140.5,474.3 L1141.6,471.9 L1142.7,476.0 L1143.7,473.5 L1144.8,476.2 L1145.9,473.7 L1146.8,475.8 L1147.8,472.8 L1148.8,474.2 L1149.8,472.6 L1150.8,474.6 L1151.7,471.0 L1152.6,473.0 L1153.5,470.2 L1154.6,472.7 L1155.6,470.6 L1156.6,475.0 L1157.6,471.9 L1158.6,474.7 L1159.7,473.4 L1160.7,475.4 L1161.9,473.7 L1163.1,475.3 L1164.3,472.9 L1165.4,476.2 L1166.4,473.5 L1167.3,477.1 L1167.6,475.7 L1167.9,480.5 L1168.1,477.2 L1168.3,480.6 L1168.5,480.0 L1168.7,484.1 L1168.8,482.4 L1169.0,485.2 L1169.1,484.5 L1169.2,488.3 L1169.4,487.9 L1169.5,491.2 L1169.7,490.3 L1169.8,492.6 L1170.0,491.8 L1170.2,494.4 L1170.4,492.0 L1170.8,493.9 L1171.2,491.5 L1171.6,492.9 L1172.1,489.2 L1172.6,490.3 L1173.1,487.2 L1173.5,488.0 L1174.0,484.5 L1174.5,486.2 L1175.0,483.0 L1175.4,485.2 L1175.9,483.4 L1176.4,488.1 L1176.8,485.8 L1177.3,491.1 L1177.7,490.0 L1178.2,495.4 L1178.7,491.3 L1179.1,494.2 L1179.6,492.0 L1179.8,494.0 L1180.1,491.4 L1180.4,492.5 L1180.6,489.1 L1180.9,491.6 L1181.2,488.0 L1181.4,489.4 L1181.7,485.4 L1182.0,486.3 L1182.2,481.9 L1182.5,482.9 L1182.7,480.0 L1183.0,482.6 L1183.2,476.0 L1183.5,479.2 L1183.7,474.3 L1183.9,477.1 L1184.2,473.8 L1184.9,473.4 L1185.4,468.2 L1186.0,474.0 L1186.5,469.0 L1187.2,472.0 L1187.9,467.1 L1188.5,472.5 L1189.2,471.3 L1190.0,473.7 L1190.9,472.9 L1191.8,475.8 L1192.6,474.1 L1193.5,476.9 L1194.4,474.8 L1195.4,477.9 L1196.4,474.5 L1197.4,479.2 L1198.4,476.0 L1199.5,479.2 L1200.5,476.4 L1201.5,478.6 L1202.5,476.5 L1203.6,478.4 L1204.7,474.4 L1205.8,477.7 L1206.8,474.3 L1207.8,477.8 L1208.7,472.9 L1209.9,476.6 L1210.9,472.3 L1211.9,477.8 L1212.9,475.7 L1213.8,479.1 L1214.8,476.4 L1215.5,479.2 L1216.1,474.7 L1216.7,476.8 L1217.4,473.6 L1218.0,474.7 L1218.7,471.1 L1219.4,475.6 L1220.1,469.4 L1220.9,471.9 L1221.7,469.3 L1222.6,472.0 L1223.6,468.6 L1224.5,472.8 L1225.5,467.6 L1226.5,472.7 L1227.5,471.8 L1228.4,473.9 L1229.3,469.8 L1230.1,476.2 L1230.8,473.6 L1231.5,477.1 L1232.1,475.6 L1232.7,478.2 L1233.3,477.0 L1233.8,479.6 L1234.4,478.1 L1234.9,481.6 L1235.4,480.9 L1235.8,484.1 L1236.2,482.6 L1236.4,485.2 L1236.6,484.2 L1236.8,489.5 L1237.0,486.6 L1237.1,490.7 L1237.3,489.0 L1237.4,491.7 L1237.5,492.0 L1237.7,494.3 L1237.8,492.6 L1237.9,497.9 L1238.0,496.3 L1238.1,500.0 L1238.3,499.2 L1238.4,502.8 L1238.5,501.6 L1238.6,504.5 L1238.7,503.1 L1238.8,507.4 L1238.9,504.1 L1239.1,507.2 L1239.2,504.9 L1239.3,508.6 L1239.5,505.3 L1239.7,508.5 L1239.9,504.5 L1240.1,505.9 L1240.3,501.6 L1240.5,505.2 L1240.7,499.0 L1241.0,499.1 L1241.2,495.3 L1241.4,496.1 L1241.6,492.6 L1241.9,495.0 L1242.1,491.2 L1242.4,494.2 L1242.6,492.4 L1242.8,495.2 L1243.0,493.9 L1243.2,498.3 L1243.4,496.2 L1243.6,499.0 L1243.9,498.0 L1244.1,502.4 L1244.3,500.5 L1244.6,504.8 L1244.8,504.1 L1245.0,507.6 L1245.3,503.9 L1245.5,513.4 L1245.7,509.6 L1246.0,513.1 L1246.2,511.7 L1246.4,514.7 L1246.6,513.4 L1246.8,515.0 L1247.0,513.3 L1247.1,515.2 L1247.3,513.1 L1247.5,515.2 L1247.6,508.6 L1247.7,513.6 L1247.9,509.9 L1248.0,510.8 L1248.1,507.7 L1248.2,508.8 L1248.4,504.0 L1248.5,507.6 L1248.6,501.2 L1248.7,502.8 L1248.8,498.4 L1249.0,500.0 L1249.1,496.7 L1249.3,497.3 L1249.5,494.2 L1249.6,495.7 L1249.8,492.7 L1250.0,493.8 L1250.5,491.6 L1251.0,495.1 L1251.5,492.5 L1252.1,496.1 L1252.7,495.1 L1253.3,499.0 L1253.9,496.1 L1254.5,501.6 L1255.1,500.0 L1255.7,503.3 L1256.2,501.3 L1256.5,503.8 L1256.7,500.0 L1257.0,502.3 L1257.3,498.2 L1257.6,500.0 L1257.8,496.0 L1258.1,497.2 L1258.3,491.4 L1258.6,496.0 L1258.8,491.1 L1259.0,492.6 L1259.3,489.3 L1259.5,492.3 L1259.8,487.2 L1260.0,488.3 L1260.3,484.2 L1260.5,486.0 L1260.8,480.7 L1261.5,483.4 L1262.3,480.4 L1263.1,481.9 L1263.8,478.2 L1264.6,479.7 L1265.4,478.5 L1265.8,481.4 L1266.2,479.7 L1266.6,483.4 L1267.0,481.4 L1267.4,485.6 L1267.8,485.0 L1268.2,488.1 L1268.6,487.3 L1269.0,490.8 L1269.5,488.1 L1270.0,491.7 L1270.4,488.9 L1270.8,489.9 L1271.3,487.3 L1271.7,489.3 L1272.2,485.0 L1272.7,487.3 L1273.2,483.2 L1273.7,484.9 L1274.1,480.1 L1274.6,481.8 L1275.1,478.0 L1275.6,479.8 L1276.1,476.0 L1276.8,477.4 L1277.5,474.3 L1278.2,475.9 L1278.9,471.8 L1279.6,473.1 L1280.3,467.4 L1280.9,471.4 L1281.6,468.6 L1282.2,471.4 L1282.5,470.0 L1282.8,472.0 L1283.1,470.5 L1283.4,474.3 L1283.7,471.7 L1283.9,476.7 L1284.2,475.0 L1284.5,478.6 L1284.7,477.6 L1285.0,480.5 L1285.2,479.3 L1285.5,483.7 L1285.8,482.6 L1286.0,485.4 L1286.3,484.3 L1286.5,486.8 L1286.8,485.6 L1287.3,489.4 L1287.7,487.9 L1288.2,492.3 L1288.7,490.6 L1289.2,495.7 L1289.7,493.4 L1290.1,497.3 L1290.6,495.2 L1291.0,497.7 L1291.4,495.7 L1291.6,497.5 L1291.9,493.7 L1292.1,496.3 L1292.2,493.0 L1292.4,494.3 L1292.6,490.2 L1292.8,491.0 L1292.9,484.6 L1293.1,489.0 L1293.3,484.3 L1293.5,485.4 L1293.7,481.9 L1293.9,483.2 L1294.2,479.8 L1294.5,481.8 L1295.3,479.1 L1296.2,480.8 L1297.2,478.8 L1298.3,480.8 L1299.4,479.3 L1300.6,482.2 L1301.4,479.7 L1302.2,482.8 L1303.0,482.5 L1303.9,485.9 L1304.8,483.6 L1305.6,487.1 L1306.5,484.9 L1307.4,488.4 L1308.2,485.6 L1308.8,487.7 L1309.4,484.7 L1310.0,486.3 L1310.7,483.1 L1311.3,484.2 L1311.9,480.4 L1312.5,482.2 L1313.1,477.3 L1313.7,480.7 L1314.2,476.9 L1314.8,478.8 L1315.4,473.8 L1315.9,478.1 L1316.7,475.6 L1317.5,481.2 L1318.3,477.3 L1319.1,480.3 L1319.8,478.5 L1320.5,482.5 L1321.1,481.9 L1321.6,485.2 L1322.0,482.3" fill="none" stroke="#485dc6" stroke-width="1.15" stroke-linejoin="round"/></svg><svg style="position:absolute;left:0;top:0" width="1616" height="816" viewBox="0 0 1616 816"><path d="M386.0,203.7 L387.0,206.4 L388.0,211.5 L389.0,210.2 L390.0,207.9 L391.0,209.1 L392.0,208.5 L393.0,202.2 L394.0,202.9 L395.0,207.9 L396.0,202.9 L397.0,197.2 L398.0,210.6 L399.0,211.8 L400.0,209.7 L401.0,210.6 L402.0,201.0 L403.0,189.5 L404.0,203.8 L405.0,196.5 L406.0,198.1 L407.0,196.8 L408.0,215.9 L409.0,211.8 L410.0,206.4 L411.0,192.9 L412.0,200.8 L413.0,210.3 L414.0,212.8 L415.0,216.5 L416.0,214.6 L417.0,209.6 L418.0,204.8 L419.0,208.4 L420.0,192.8 L421.0,188.4 L422.0,191.1 L423.0,203.0 L424.0,196.8 L425.0,190.2 L426.0,194.1 L427.0,198.0 L428.0,193.6 L429.0,195.6 L430.0,198.1 L431.0,203.7 L432.0,205.5 L433.0,205.5 L434.0,205.3 L435.0,207.6 L436.0,204.2 L437.0,199.1 L438.0,211.6 L439.0,209.9 L440.0,210.4 L441.0,203.9 L442.0,202.7 L443.0,202.1 L444.0,194.4 L445.0,191.8 L446.0,180.0 L447.0,172.4 L448.0,169.2 L449.0,178.8 L450.0,193.0 L451.0,192.4 L452.0,200.4 L453.0,202.3 L454.0,203.7 L455.0,196.7 L456.0,200.0 L457.0,203.7 L458.0,202.1 L459.0,192.9 L460.0,206.4 L461.0,214.6 L462.0,200.8 L463.0,195.0 L464.0,196.8 L465.0,176.0 L466.0,195.1 L467.0,199.2 L468.0,202.3 L469.0,218.5 L470.0,209.5 L471.0,194.8 L472.0,193.9 L473.0,201.1 L474.0,212.6 L475.0,210.2 L476.0,207.4 L477.0,204.9 L478.0,218.0 L479.0,198.6 L480.0,201.1 L481.0,193.7 L482.0,196.4 L483.0,209.4 L484.0,209.5 L485.0,210.3 L486.0,204.3 L487.0,193.8 L488.0,188.0 L489.0,195.2 L490.0,203.0 L491.0,209.4 L492.0,209.6 L493.0,214.8 L494.0,203.5 L495.0,194.0 L496.0,201.7 L497.0,194.8 L498.0,196.2 L499.0,190.0 L500.0,192.4 L501.0,209.5 L502.0,213.8 L503.0,201.6 L504.0,197.8 L505.0,206.0 L506.0,201.1 L507.0,197.5 L508.0,196.9 L509.0,203.8 L510.0,213.2 L511.0,203.8 L512.0,200.5 L513.0,201.8 L514.0,200.5 L515.0,194.1 L516.0,194.9 L517.0,198.1 L518.0,196.9 L519.0,198.2 L520.0,197.7 L521.0,201.8 L522.0,218.8 L523.0,217.9 L524.0,209.2 L525.0,195.1 L526.0,196.9 L527.0,216.9 L528.0,198.2 L529.0,199.0 L530.0,200.7 L531.0,200.7 L532.0,214.9 L533.0,203.7 L534.0,202.2 L535.0,196.7 L536.0,190.7 L537.0,217.3 L538.0,205.0 L539.0,192.0 L540.0,191.6 L541.0,199.8 L542.0,207.5 L543.0,208.3 L544.0,201.0 L545.0,202.3 L546.0,203.6 L547.0,196.1 L548.0,189.3 L549.0,192.9 L550.0,194.7 L551.0,199.1 L552.0,198.8 L553.0,200.6 L554.0,201.0 L555.0,200.7 L556.0,198.1 L556.0,201.6 L557.0,198.2 L558.0,193.4 L559.0,192.9 L560.0,182.0 L561.0,189.1 L562.0,195.6 L563.0,199.3 L564.0,199.7 L565.0,201.7 L566.0,214.9 L567.0,197.0 L568.0,195.5 L569.0,202.4 L570.0,219.7 L571.0,205.2 L572.0,200.7 L573.0,196.2 L574.0,206.6 L575.0,208.2 L576.0,247.0 L577.0,217.7 L578.0,220.3 L579.0,209.4 L580.0,206.2 L581.0,203.8 L582.0,213.7 L583.0,207.9 L584.0,209.1 L585.0,202.0 L586.0,198.7 L587.0,197.1 L588.0,192.4 L589.0,198.6 L590.0,180.0 L591.0,191.8 L592.0,192.5 L593.0,200.8 L594.0,201.8 L595.0,201.8 L596.0,205.3 L597.0,212.6 L598.0,216.1 L599.0,206.9 L600.0,196.0 L601.0,199.3 L602.0,215.6 L603.0,216.8 L603.0,205.9 L604.0,189.9 L605.0,197.7 L606.0,215.9 L607.0,214.6 L608.0,208.2 L609.0,203.5 L610.0,199.5 L611.0,210.1 L612.0,209.7 L613.0,211.1 L614.0,207.7 L615.0,199.7 L616.0,211.9 L617.0,209.0 L618.0,196.5 L619.0,200.3 L620.0,202.8 L621.0,202.4 L622.0,201.3 L623.0,192.5 L624.0,195.0 L625.0,172.8 L626.0,188.0 L627.0,196.2 L628.0,195.7 L629.0,198.5 L630.0,193.2 L631.0,189.4 L632.0,169.0 L633.0,185.1 L634.0,196.8 L635.0,201.0 L636.0,215.2 L637.0,204.5 L638.0,197.6 L639.0,200.1 L640.0,196.3 L641.0,197.9 L642.0,194.2 L643.0,191.5 L644.0,185.5 L645.0,180.0 L646.0,193.1 L647.0,190.1 L648.0,194.7 L649.0,192.1 L650.0,196.9 L651.0,192.0 L652.0,194.6 L653.0,194.4 L654.0,203.9 L655.0,200.2 L656.0,193.2 L657.0,195.9 L658.0,206.4 L659.0,206.7 L660.0,198.9 L661.0,199.3 L662.0,206.7 L663.0,212.3 L664.0,195.5 L665.0,201.8 L666.0,197.7 L667.0,199.7 L668.0,199.7 L669.0,189.3 L670.0,203.9 L671.0,199.4 L672.0,201.9 L673.0,196.9 L674.0,199.9 L675.0,201.5 L676.0,195.0 L677.0,208.2 L678.0,202.4 L679.0,196.4 L680.0,195.7 L681.0,193.5 L682.0,197.6 L683.0,208.4 L684.0,207.3 L685.0,203.4 L686.0,206.8 L687.0,204.2 L688.0,205.8 L689.0,204.9 L690.0,200.4 L691.0,207.0 L692.0,211.1 L693.0,194.8 L694.0,208.4 L695.0,212.6 L696.0,204.9 L697.0,217.9 L698.0,219.2 L699.0,201.0 L700.0,203.5 L701.0,197.3 L702.0,200.0 L703.0,219.0 L704.0,202.0 L705.0,196.0 L706.0,195.9 L707.0,188.4 L708.0,175.3 L709.0,175.3 L710.0,187.0 L711.0,196.3 L712.0,191.6 L713.0,202.7 L714.0,205.9 L715.0,193.3 L716.0,189.0 L717.0,193.1 L718.0,201.5 L719.0,209.5 L720.0,203.9 L721.0,203.9 L722.0,207.4 L723.0,200.6 L724.0,192.8 L725.0,203.1 L726.0,202.9 L727.0,214.2 L728.0,204.2 L729.0,193.7 L730.0,190.9 L731.0,192.7 L732.0,199.8 L733.0,199.7 L734.0,198.0 L735.0,185.0 L736.0,195.6 L737.0,197.1 L738.0,196.8 L739.0,202.1 L740.0,202.5 L741.0,212.5 L742.0,199.9 L743.0,201.1 L744.0,214.0 L745.0,206.2 L746.0,199.7 L747.0,186.5 L748.0,186.3 L749.0,189.8 L750.0,191.0 L751.0,192.7 L752.0,195.5 L753.0,202.8 L754.0,197.9 L755.0,198.5 L756.0,200.8 L757.0,198.5 L758.0,195.6 L759.0,193.0 L760.0,185.0 L761.0,189.3 L762.0,200.3 L763.0,200.4 L764.0,200.8 L765.0,201.5 L766.0,202.1 L767.0,202.4 L768.0,194.1 L769.0,195.3 L770.0,190.9 L771.0,212.0 L772.0,207.0 L773.0,206.0 L774.0,205.3 L775.0,211.0 L776.0,206.3 L777.0,197.2 L778.0,202.7 L779.0,206.0 L780.0,208.8 L781.0,200.7 L782.0,200.4 L783.0,200.2 L784.0,203.6 L785.0,185.0 L786.0,197.9 L787.0,209.5 L788.0,211.5 L789.0,208.1 L790.0,192.1 L791.0,202.8 L792.0,196.8 L793.0,204.5 L794.0,208.9 L795.0,195.2 L796.0,195.0 L796.8,205.0 L796.8,273.5 L798.0,222.0 L798.0,219.8 L799.0,220.3 L800.0,221.2 L801.0,220.7 L802.0,221.6 L803.0,220.6 L804.0,220.9 L805.0,221.3 L806.0,219.5 L807.0,219.0 L808.0,219.2 L809.0,218.7 L810.0,218.4 L811.0,218.3 L812.0,220.2 L813.0,221.0 L814.0,220.9 L815.0,220.3 L816.0,219.7 L817.0,220.3 L818.0,222.0 L819.0,223.1 L820.0,229.0 L821.0,222.1 L822.0,221.7 L823.0,221.8 L824.0,222.1 L825.0,221.6 L826.0,220.8 L827.0,222.0 L828.0,221.3 L829.0,221.6 L830.0,221.4 L831.0,221.9 L832.0,221.3 L833.0,220.7 L834.0,219.2 L835.0,220.2 L836.0,220.3 L837.0,221.4 L838.0,220.1 L839.0,219.9 L840.0,219.7 L841.0,221.0 L842.0,221.8 L843.0,223.3 L844.0,222.0 L845.0,220.2 L846.0,219.6 L847.0,221.2 L848.0,222.2 L849.0,223.8 L850.0,221.8 L851.0,221.3 L852.0,219.7 L853.0,220.1 L854.0,222.3 L855.0,223.3 L856.0,221.5 L857.0,221.2 L858.0,221.6 L859.0,221.0 L860.0,221.0 L861.0,220.8 L862.0,221.3 L863.0,223.2 L864.0,224.3 L865.0,223.4 L866.0,220.9 L867.0,219.2 L868.0,219.8 L869.0,220.6 L870.0,220.7 L871.0,221.4 L872.0,222.7 L873.0,224.1 L874.0,223.6 L875.0,223.0 L876.0,222.0 L877.0,222.6 L878.0,221.6 L879.0,220.0 L880.0,221.2 L881.0,224.1 L882.0,224.2 L883.0,225.2 L884.0,224.5 L885.0,224.8 L886.0,195.9 L887.0,197.8 L888.0,193.0 L889.0,200.8 L890.0,202.7 L891.0,205.5 L892.0,202.1 L893.0,196.7 L894.0,203.4 L895.0,203.1 L896.0,202.4 L897.0,203.5 L898.0,203.9 L899.0,205.5 L900.0,203.8 L900.0,204.0 L901.0,195.1 L902.0,186.7 L903.0,195.5 L904.0,205.5 L905.0,207.5 L906.0,207.8 L907.0,209.4 L908.0,209.9 L909.0,207.3 L910.0,208.3 L911.0,209.4 L912.0,206.2 L913.0,206.0 L914.0,208.2 L915.0,207.2 L916.0,208.3 L917.0,210.0 L918.0,211.0 L919.0,212.9 L920.0,214.2 L921.0,213.5 L922.0,209.5 L923.0,211.5 L924.0,209.2 L925.0,211.8 L926.0,208.9 L927.0,208.5 L928.0,208.9 L929.0,211.7 L930.0,208.4 L931.0,209.3 L932.0,207.5 L933.0,207.5 L934.0,206.8 L935.0,209.9 L936.0,209.2 L937.0,207.3 L938.0,207.0 L939.0,210.3 L940.0,208.8 L940.0,198.7 L941.0,199.4 L942.0,194.9 L943.0,208.1 L944.0,204.3 L945.0,204.4 L946.0,204.7 L947.0,206.4 L948.0,199.3 L949.0,191.0 L950.0,197.4 L951.0,200.8 L952.0,202.4 L953.0,196.1 L954.0,192.1 L955.0,197.3 L956.0,197.8 L957.0,208.3 L958.0,196.8 L959.0,190.5 L960.0,200.3 L961.0,194.4 L962.0,187.0 L963.0,195.9 L964.0,199.4 L965.0,199.2 L966.0,194.9 L967.0,202.9 L968.0,204.3 L969.0,202.1 L970.0,204.5 L971.0,201.7 L972.0,189.9 L973.0,193.1 L974.0,198.5 L975.0,186.0 L976.0,197.9 L977.0,200.5 L978.0,198.9 L979.0,197.9 L980.0,197.7 L981.0,199.7 L982.0,203.4 L983.0,208.8 L984.0,196.2 L985.0,199.5 L986.0,196.8 L987.0,199.1 L988.0,208.5 L989.0,212.7 L990.0,209.3 L991.0,204.9 L992.0,200.8 L993.0,202.3 L994.0,205.4 L995.0,204.0 L996.0,208.2 L997.0,201.5 L998.0,194.8 L999.0,199.1 L1000.0,188.0 L1001.0,194.9 L1002.0,195.4 L1003.0,193.4 L1004.0,198.9 L1005.0,196.1 L1006.0,200.6 L1007.0,197.6 L1008.0,199.7 L1009.0,198.9 L1010.0,190.9 L1011.0,202.0 L1012.0,200.2 L1013.0,193.6 L1014.0,206.2 L1015.0,202.8 L1016.0,208.7 L1017.0,198.6 L1018.0,196.4 L1019.0,196.1 L1020.0,203.4 L1021.0,199.5 L1022.0,201.3 L1023.0,199.3 L1024.0,202.5 L1025.0,204.7 L1026.0,198.2 L1027.0,199.4 L1028.0,193.5 L1029.0,198.6 L1030.0,203.8 L1031.0,196.3 L1032.0,192.9 L1033.0,202.4 L1034.0,208.8 L1035.0,194.5 L1036.0,205.3 L1037.0,211.3 L1038.0,196.2 L1039.0,201.2 L1040.0,202.8 L1041.0,202.4 L1042.0,203.6 L1043.0,197.6 L1044.0,195.5 L1045.0,196.5 L1046.0,197.3 L1047.0,197.3 L1048.0,196.9 L1049.0,203.9 L1050.0,209.3 L1051.0,206.0 L1052.0,213.6 L1053.0,204.8 L1054.0,193.6 L1055.0,203.2 L1056.0,205.9 L1057.0,194.5 L1058.0,203.1 L1059.0,208.6 L1060.0,203.2 L1061.0,198.9 L1062.0,213.2 L1063.0,207.9 L1064.0,208.0 L1065.0,197.2 L1066.0,196.7 L1067.0,197.2 L1068.0,195.4 L1069.0,196.1 L1070.0,198.9 L1071.0,209.5 L1072.0,198.6 L1073.0,199.5 L1074.0,204.4 L1075.0,206.2 L1076.0,199.4 L1077.0,198.7 L1078.0,200.7 L1079.0,209.8 L1080.0,201.1 L1080.0,200.7 L1081.0,198.2 L1082.0,203.3 L1083.0,201.8 L1084.0,202.1 L1085.0,196.8 L1086.0,212.9 L1087.0,217.3 L1088.0,200.0 L1089.0,198.5 L1090.0,214.1 L1091.0,213.9 L1092.0,205.5 L1093.0,199.7 L1094.0,196.6 L1095.0,218.8 L1096.0,206.1 L1097.0,199.5 L1098.0,197.3 L1099.0,202.6 L1100.0,193.9 L1101.0,200.7 L1102.0,198.9 L1103.0,195.0 L1104.0,204.1 L1105.0,198.2 L1106.0,201.6 L1107.0,203.6 L1108.0,198.9 L1109.0,195.4 L1110.0,207.3 L1111.0,205.7 L1112.0,196.8 L1113.0,193.3 L1114.0,202.5 L1115.0,200.0 L1116.0,208.3 L1117.0,210.0 L1118.0,213.8 L1119.0,204.7 L1120.0,204.9 L1121.0,212.0 L1122.0,212.9 L1123.0,215.1 L1124.0,214.4 L1125.0,218.5 L1126.0,209.7 L1127.0,204.1 L1128.0,199.6 L1129.0,192.8 L1130.0,196.8 L1131.0,205.8 L1132.0,207.5 L1133.0,209.6 L1134.0,208.8 L1135.0,208.8 L1136.0,207.5 L1137.0,207.3 L1138.0,199.4 L1139.0,204.6 L1140.0,210.6 L1141.0,201.8 L1142.0,202.2 L1143.0,203.7 L1144.0,204.2 L1145.0,196.2 L1146.0,200.5 L1147.0,200.7 L1148.0,209.6 L1149.0,210.9 L1150.0,205.2 L1151.0,216.4 L1152.0,210.7 L1153.0,198.2 L1154.0,203.9 L1155.0,210.7 L1156.0,203.2 L1157.0,200.7 L1158.0,203.4 L1159.0,207.5 L1160.0,199.5 L1161.0,208.8 L1162.0,211.3 L1163.0,215.4 L1164.0,212.7 L1165.0,198.1 L1166.0,204.4 L1167.0,216.0 L1168.0,200.9 L1169.0,195.6 L1170.0,206.0 L1171.0,195.0 L1172.0,196.0 L1173.0,204.5 L1174.0,205.0 L1175.0,201.9 L1176.0,199.7 L1177.0,211.2 L1178.0,212.6 L1179.0,206.9 L1180.0,206.9 L1181.0,206.2 L1182.0,213.0 L1183.0,209.0 L1184.0,198.5 L1185.0,204.6 L1186.0,200.8 L1187.0,207.3 L1188.0,201.6 L1189.0,199.6 L1190.0,214.8 L1191.0,212.1 L1192.0,202.5 L1193.0,193.3 L1194.0,198.2 L1195.0,203.6 L1196.0,213.5 L1197.0,215.0 L1198.0,207.7 L1199.0,208.3 L1200.0,203.6 L1201.0,200.5 L1202.0,195.5 L1203.0,198.1 L1204.0,193.8 L1205.0,196.3 L1206.0,204.1 L1207.0,206.8 L1208.0,199.7 L1209.0,200.4 L1210.0,205.0 L1211.0,210.0 L1212.0,202.1 L1213.0,193.2 L1214.0,198.2 L1215.0,207.4 L1216.0,213.5 L1217.0,206.1 L1218.0,215.3 L1219.0,193.9 L1220.0,197.6 L1221.0,209.3 L1222.0,212.5 L1223.0,210.1 L1224.0,211.2 L1225.0,209.5 L1226.0,220.1 L1227.0,210.3 L1228.0,217.6 L1229.0,204.5 L1230.0,204.9 L1231.0,214.4 L1232.0,212.7 L1233.0,207.7 L1234.0,203.9 L1235.0,211.6 L1236.0,212.4 L1237.0,211.5 L1238.0,220.4 L1239.0,211.1 L1240.0,207.2 L1241.0,193.9 L1242.0,197.2 L1243.0,216.1 L1244.0,211.5 L1245.0,206.3 L1246.0,205.3 L1247.0,198.7 L1248.0,204.2 L1249.0,200.1 L1250.0,212.1 L1251.0,210.2 L1252.0,199.8 L1253.0,214.6 L1254.0,205.7 L1255.0,203.8 L1256.0,199.5 L1257.0,198.5 L1258.0,190.0 L1259.0,201.7 L1260.0,200.2 L1261.0,204.8 L1262.0,208.5 L1263.0,214.2 L1264.0,207.3 L1265.0,215.3 L1266.0,206.7 L1267.0,208.1 L1268.0,211.6 L1269.0,210.4 L1270.0,203.7 L1271.0,203.2 L1272.0,202.7 L1273.0,199.4 L1274.0,199.0 L1275.0,190.0 L1276.0,195.2 L1277.0,199.2 L1278.0,202.9 L1279.0,204.5 L1280.0,205.1 L1281.0,210.9 L1282.0,196.4 L1283.0,194.9 L1284.0,200.5 L1285.0,210.3 L1286.0,210.6 L1287.0,201.2 L1288.0,203.6 L1289.0,217.3 L1290.0,203.8 L1291.0,202.6 L1292.0,210.6 L1293.0,211.9 L1294.0,203.2 L1295.0,206.7 L1296.0,206.5 L1297.0,199.5 L1298.0,202.1 L1299.0,199.0 L1300.0,203.9 L1301.0,217.1 L1302.0,216.4 L1303.0,214.3 L1304.0,211.9 L1305.0,202.2 L1306.0,206.7 L1307.0,195.6 L1308.0,200.2 L1309.0,206.4 L1310.0,209.2 L1311.0,205.2 L1312.0,204.4 L1313.0,211.6 L1314.0,213.1 L1315.0,207.3 L1316.0,203.5 L1317.0,206.2 L1318.0,210.8 L1319.0,201.5 L1320.0,203.0 L1321.0,218.8 L1322.0,209.4 L1323.0,194.7" fill="none" stroke="#55b855" stroke-opacity="0.5" stroke-width="0.8" stroke-linejoin="round"/><path d="M386.0,269.4 L387.8,278.5 L389.5,289.6 L391.2,291.9 L393.0,293.0 L395.0,318.4 L397.0,343.0 L398.5,315.9 L400.0,288.1 L401.5,262.0 L403.3,302.1 L405.2,341.4 L407.0,379.7 L409.5,345.0 L412.0,322.0 L413.5,316.0 L415.0,310.0 L416.5,302.5 L418.0,295.0 L418.0,301.5 L419.0,306.5 L420.0,304.2 L421.0,304.5 L422.0,305.6 L423.0,300.1 L424.0,289.0 L425.0,293.1 L426.0,296.5 L427.0,299.2 L428.0,297.2 L429.0,298.7 L430.0,294.4 L431.0,298.4 L432.0,293.2 L433.0,290.7 L434.0,290.9 L435.0,288.6 L436.0,287.1 L437.0,292.6 L438.0,295.5 L439.0,292.3 L440.0,289.4 L441.0,292.4 L442.0,290.7 L445.0,279.0 L447.6,261.8 L448.0,287.6 L449.0,270.1 L450.0,272.6 L451.0,260.7 L452.0,272.2 L453.0,287.8 L454.0,276.2 L455.0,266.9 L456.0,263.5 L457.0,263.9 L458.0,280.9 L459.0,281.2 L460.0,275.0 L461.0,275.2 L462.0,270.7 L463.0,265.5 L464.0,251.3 L465.0,241.0 L466.0,264.7 L467.0,270.7 L468.0,269.8 L469.0,274.7 L470.0,288.5 L471.0,285.8 L472.0,288.4 L473.0,276.0 L474.0,272.9 L475.0,270.0 L476.0,271.7 L477.0,261.7 L478.0,255.0 L479.0,261.7 L480.0,274.1 L481.0,272.3 L482.0,265.8 L483.0,270.1 L484.0,272.0 L485.0,281.8 L486.0,279.9 L487.0,281.7 L488.0,283.3 L489.0,285.2 L490.0,279.0 L491.0,291.2 L492.0,286.9 L493.0,279.4 L494.0,275.1 L495.0,278.0 L496.0,286.6 L497.0,275.9 L498.0,273.7 L499.0,265.5 L500.0,281.9 L501.0,283.8 L502.0,272.3 L503.0,278.6 L504.0,289.7 L505.0,291.1 L506.0,282.6 L507.0,280.9 L508.0,282.8 L509.0,262.1 L510.0,271.9 L511.0,285.3 L512.0,281.0 L513.0,283.0 L514.0,272.6 L515.0,267.1 L516.0,262.0 L517.0,269.8 L518.0,273.8 L519.0,260.9 L520.0,273.4 L521.0,283.4 L522.0,287.2 L523.0,279.1 L524.0,271.6 L525.0,276.9 L526.0,276.1 L527.0,271.7 L528.0,281.1 L529.0,279.9 L530.0,289.2 L531.0,266.7 L532.0,274.3 L533.0,280.0 L534.0,281.7 L535.0,275.1 L536.0,273.1 L537.0,269.2 L538.0,277.4 L539.0,283.5 L540.0,282.2 L541.0,269.5 L542.0,274.9 L543.0,283.1 L544.0,275.6 L545.0,281.6 L546.0,274.6 L547.0,270.0 L548.0,286.3 L549.0,288.4 L550.0,273.4 L551.0,270.5 L552.0,272.3 L553.0,270.1 L554.0,282.7 L555.0,288.2 L556.0,291.0 L556.0,287.2 L557.0,284.3 L558.0,293.2 L559.0,275.4 L560.0,271.2 L561.0,277.9 L562.0,273.7 L563.0,270.4 L564.0,262.5 L565.0,253.0 L566.0,268.5 L567.0,269.1 L568.0,272.9 L569.0,267.2 L570.0,259.7 L571.0,263.0 L572.0,258.8 L573.0,276.2 L574.0,281.1 L575.0,282.8 L576.0,296.4 L577.0,282.4 L578.0,276.9 L579.0,286.8 L580.0,284.7 L581.0,270.4 L582.0,272.8 L583.0,282.7 L584.0,278.8 L585.0,278.7 L586.0,286.1 L587.0,277.7 L588.0,272.0 L589.0,273.0 L590.0,278.8 L591.0,266.5 L592.0,258.5 L593.0,277.9 L594.0,292.4 L595.0,284.8 L596.0,276.6 L597.0,283.3 L598.0,274.0 L599.0,267.3 L600.0,258.4 L601.0,257.2 L602.0,238.0 L603.0,256.0 L604.0,263.1 L605.0,272.0 L606.0,273.9 L607.0,281.0 L608.0,289.4 L609.0,289.7 L610.0,276.7 L610.0,271.7 L611.0,264.9 L612.0,260.1 L613.0,260.0 L614.0,264.7 L615.0,257.0 L616.0,269.1 L617.0,264.2 L618.0,265.8 L619.0,268.4 L620.0,279.2 L621.0,273.8 L622.0,261.1 L623.0,264.9 L624.0,273.3 L625.0,273.5 L626.0,276.5 L627.0,276.4 L628.0,269.0 L629.0,263.0 L630.0,278.2 L631.0,278.2 L632.0,281.0 L633.0,265.3 L634.0,262.7 L635.0,260.5 L636.0,269.8 L637.0,271.4 L638.0,270.4 L639.0,265.7 L640.0,258.0 L641.0,263.0 L642.0,267.6 L643.0,268.5 L644.0,268.3 L645.0,267.0 L646.0,258.5 L647.0,267.8 L648.0,275.7 L649.0,280.1 L650.0,285.3 L651.0,281.3 L652.0,281.2 L653.0,285.1 L654.0,270.0 L655.0,275.1 L656.0,279.0 L657.0,288.4 L658.0,285.3 L659.0,266.3 L660.0,267.3 L661.0,268.4 L662.0,278.7 L663.0,283.3 L664.0,274.4 L665.0,272.8 L666.0,277.9 L667.0,274.9 L668.0,261.9 L669.0,270.2 L670.0,275.9 L671.0,263.2 L672.0,279.5 L673.0,279.2 L674.0,277.9 L675.0,271.5 L676.0,281.0 L677.0,276.1 L678.0,270.3 L679.0,266.1 L680.0,269.9 L681.0,274.6 L682.0,270.7 L683.0,260.5 L684.0,274.7 L685.0,282.7 L686.0,262.8 L687.0,258.0 L688.0,275.5 L689.0,268.8 L690.0,263.9 L691.0,276.1 L692.0,272.9 L693.0,270.0 L694.0,265.6 L695.0,284.1 L696.0,282.5 L697.0,271.6 L698.0,273.4 L699.0,269.6 L700.0,263.5 L700.0,284.5 L701.0,273.9 L702.0,273.4 L703.0,263.4 L704.0,259.2 L705.0,260.2 L706.0,268.7 L707.0,272.1 L708.0,283.3 L709.0,283.6 L710.0,284.0 L711.0,268.4 L712.0,262.1 L713.0,272.9 L714.0,268.3 L715.0,259.8 L716.0,264.6 L717.0,272.0 L718.0,264.5 L719.0,266.0 L720.0,270.4 L721.0,263.3 L722.0,255.1 L723.0,236.8 L724.0,252.8 L725.0,265.0 L726.0,269.1 L727.0,286.0 L728.0,285.0 L729.0,279.4 L730.0,271.5 L731.0,271.6 L732.0,279.8 L733.0,273.4 L734.0,268.4 L735.0,273.4 L736.0,274.5 L737.0,263.2 L738.0,261.4 L739.0,266.8 L740.0,260.0 L741.0,267.4 L742.0,271.2 L743.0,274.3 L744.0,274.2 L745.0,275.6 L746.0,281.1 L747.0,279.7 L748.0,273.1 L749.0,261.8 L750.0,266.2 L751.0,265.7 L752.0,270.9 L753.0,278.5 L754.0,285.0 L755.0,282.1 L756.0,272.3 L757.0,263.3 L758.0,266.9 L759.0,267.6 L760.0,268.0 L761.0,272.4 L762.0,284.2 L763.0,292.5 L764.0,288.7 L765.0,287.9 L766.0,271.5 L767.0,274.3 L768.0,266.4 L769.0,273.6 L770.0,275.4 L771.0,277.7 L772.0,279.2 L773.0,265.4 L774.0,276.6 L775.0,278.2 L776.0,288.2 L777.0,282.9 L778.0,265.8 L779.0,271.0 L780.0,276.7 L781.0,284.5 L782.0,285.8 L783.0,287.6 L784.0,285.5 L785.0,271.1 L786.0,279.2 L787.0,273.9 L788.0,276.5 L789.0,280.2 L790.0,267.1 L791.0,273.2 L792.0,272.1 L793.0,268.3 L794.0,267.8 L795.0,269.5 L796.0,281.9 L797.0,311.8 L798.0,288.0 L799.0,275.4 L800.0,273.7 L801.0,282.2 L802.0,287.4 L803.0,293.7 L804.0,289.4 L805.0,285.8 L806.0,281.5 L807.0,280.6 L808.0,275.8 L809.0,279.8 L810.0,286.6 L811.0,277.5 L812.0,274.9 L813.0,277.6 L814.0,280.1 L815.0,285.2 L816.0,292.0 L817.0,291.3 L818.0,286.9 L819.0,294.2 L820.0,310.0 L821.0,293.8 L822.0,288.6 L823.0,287.2 L824.0,292.2 L825.0,290.7 L826.0,292.9 L827.0,291.2 L828.0,290.8 L829.0,289.5 L830.0,291.4 L831.0,289.5 L832.0,276.7 L833.0,284.2 L834.0,287.1 L835.0,287.3 L835.0,285.2 L836.0,284.5 L837.0,286.2 L838.0,286.9 L839.0,283.6 L840.0,289.4 L841.0,292.0 L842.0,303.2 L843.0,292.9 L844.0,296.5 L845.0,305.0 L846.0,304.0 L847.0,301.9 L848.0,302.9 L849.0,300.8 L850.0,302.2 L851.0,305.3 L852.0,304.5 L853.0,309.1 L854.0,312.3 L855.0,307.1 L856.0,308.4 L857.0,308.3 L858.0,315.5 L859.0,315.6 L860.0,316.0 L861.0,313.0 L862.0,315.5 L863.0,314.4 L864.0,318.8 L865.0,314.3 L866.0,317.3 L867.0,318.1 L868.0,324.9 L869.0,326.5 L870.0,327.9 L871.0,322.6 L872.0,325.8 L873.0,331.6 L874.0,330.5 L875.0,329.2 L876.0,327.6 L877.0,336.0 L878.0,336.4 L879.0,342.5 L880.0,342.1 L881.0,341.3 L882.0,334.1 L883.0,332.9 L884.0,340.9 L886.0,288.0 L887.0,289.2 L888.0,293.4 L889.0,283.9 L890.0,285.9 L891.0,291.6 L892.0,287.8 L893.0,287.3 L894.0,279.0 L895.0,281.4 L896.0,283.4 L897.0,283.5 L898.0,282.5 L899.0,281.2 L900.0,279.9 L901.0,281.1 L902.0,283.0 L903.0,286.5 L903.0,286.3 L904.0,288.1 L905.0,296.2 L906.0,297.9 L907.0,295.7 L908.0,300.5 L909.0,298.6 L910.0,290.1 L911.0,299.0 L912.0,301.5 L913.0,299.8 L914.0,299.0 L915.0,303.5 L916.0,300.9 L917.0,306.5 L918.0,315.9 L919.0,321.1 L919.0,319.1 L920.0,319.5 L921.0,315.0 L922.0,312.3 L923.0,312.2 L924.0,313.5 L925.0,317.2 L926.0,317.0 L927.0,311.9 L928.0,308.9 L929.0,306.2 L930.0,304.6 L931.0,301.7 L932.0,311.1 L933.0,312.2 L934.0,311.6 L935.0,307.4 L936.0,304.6 L937.0,305.7 L938.0,301.1 L939.0,302.1 L940.0,304.9 L940.0,295.5 L941.0,304.0 L942.0,306.4 L943.0,298.0 L944.0,298.7 L945.0,299.8 L946.0,294.4 L947.0,282.0 L948.0,290.3 L949.0,299.1 L950.0,300.8 L951.0,296.7 L952.0,303.1 L953.0,301.5 L954.0,306.0 L955.0,299.1 L956.0,300.9 L957.0,300.5 L958.0,304.6 L959.0,303.6 L960.0,294.1 L961.0,296.6 L962.0,299.3 L963.0,300.4 L964.0,294.4 L965.0,308.8 L966.0,309.4 L967.0,296.9 L968.0,301.7 L969.0,312.4 L970.0,311.6 L971.0,307.1 L972.0,299.2 L973.0,298.6 L974.0,310.3 L975.0,311.5 L976.0,314.4 L977.0,305.6 L978.0,298.8 L979.0,303.7 L980.0,301.7 L981.0,306.8 L982.0,305.7 L983.0,304.5 L984.0,295.1 L985.0,303.6 L986.0,304.9 L987.0,301.3 L988.0,299.1 L989.0,301.4 L990.0,301.8 L991.0,293.5 L992.0,298.6 L993.0,299.2 L993.0,303.7 L994.0,311.5 L995.0,311.2 L996.0,302.5 L997.0,305.1 L998.0,312.7 L999.0,310.6 L1000.0,306.1 L1001.0,302.3 L1002.0,303.8 L1003.0,316.8 L1004.0,310.0 L1005.0,304.7 L1006.0,307.9 L1007.0,304.1 L1008.0,311.4 L1009.0,309.7 L1010.0,301.8 L1011.0,308.7 L1012.0,313.1 L1013.0,311.4 L1014.0,309.5 L1015.0,313.0 L1016.0,309.2 L1017.0,303.2 L1018.0,311.2 L1019.0,311.2 L1020.0,313.5 L1021.0,314.4 L1022.0,307.0 L1023.0,306.3 L1024.0,302.9 L1025.0,309.2 L1026.0,310.0 L1027.0,316.9 L1028.0,305.8 L1029.0,302.0 L1030.0,313.4 L1031.0,312.3 L1032.0,309.2 L1033.0,314.3 L1034.0,314.6 L1035.0,309.7 L1036.0,305.7 L1037.0,318.6 L1038.0,307.5 L1039.0,300.1 L1040.0,305.8 L1041.0,305.8 L1042.0,304.8 L1043.0,307.9 L1044.0,310.5 L1045.0,308.5 L1046.0,308.3 L1047.0,309.0 L1048.0,310.9 L1049.0,308.3 L1050.0,310.1 L1051.0,317.1 L1052.0,308.9 L1053.0,300.9 L1054.0,307.1 L1055.0,304.7 L1056.0,308.1 L1057.0,307.1 L1058.0,312.9 L1059.0,312.7 L1060.0,308.7 L1061.0,304.3 L1062.0,306.1 L1063.0,312.4 L1064.0,318.8 L1065.0,313.5 L1066.0,305.6 L1067.0,311.2 L1068.0,312.5 L1069.0,316.8 L1070.0,317.5 L1071.0,319.5 L1072.0,309.7 L1073.0,304.4 L1074.0,312.5 L1075.0,310.6 L1076.0,303.4 L1077.0,301.7 L1078.0,305.6 L1079.0,310.4 L1080.0,314.8 L1081.0,313.9 L1082.0,309.2 L1083.0,308.9 L1084.0,306.6 L1085.0,308.5 L1086.0,310.0 L1087.0,308.9 L1088.0,304.3 L1089.0,306.9 L1090.0,312.5 L1091.0,317.4 L1092.0,317.6 L1093.0,301.5 L1094.0,307.1 L1095.0,303.0 L1096.0,312.5 L1097.0,314.2 L1098.0,314.3 L1099.0,309.9 L1100.0,306.1 L1101.0,308.4 L1102.0,300.5 L1103.0,307.3 L1104.0,313.9 L1105.0,313.4 L1106.0,311.0 L1107.0,303.0 L1108.0,316.0 L1109.0,316.3 L1110.0,307.6 L1111.0,312.8 L1112.0,313.3 L1113.0,307.3 L1114.0,307.3 L1115.0,311.6 L1116.0,306.0 L1117.0,315.0 L1118.0,316.1 L1119.0,309.9 L1120.0,318.0 L1121.0,312.2 L1122.0,315.7 L1123.0,312.0 L1124.0,311.2 L1125.0,303.6 L1126.0,304.4 L1127.0,308.9 L1128.0,314.5 L1129.0,314.9 L1130.0,310.9 L1131.0,310.9 L1132.0,307.0 L1133.0,309.0 L1134.0,306.2 L1135.0,310.7 L1136.0,314.3 L1137.0,308.8 L1138.0,307.4 L1139.0,313.2 L1140.0,311.3 L1141.0,309.0 L1142.0,316.4 L1143.0,314.9 L1144.0,301.4 L1145.0,307.4 L1146.0,313.0 L1147.0,318.0 L1148.0,317.9 L1149.0,316.3 L1150.0,313.9 L1151.0,304.2 L1152.0,311.9 L1153.0,312.1 L1154.0,314.3 L1155.0,314.6 L1156.0,312.8 L1157.0,314.0 L1158.0,318.5 L1159.0,314.1 L1160.0,314.2 L1161.0,310.7 L1162.0,311.2 L1163.0,306.9 L1164.0,311.0 L1165.0,312.6 L1166.0,312.2 L1167.0,315.2 L1168.0,312.0 L1169.0,311.8 L1170.0,308.6 L1171.0,315.5 L1172.0,313.8 L1173.0,302.2 L1174.0,312.8 L1175.0,314.1 L1176.0,313.3 L1177.0,313.4 L1178.0,312.5 L1179.0,313.6 L1180.0,312.0 L1181.0,315.7 L1182.0,310.3 L1183.0,306.6 L1184.0,308.0 L1185.0,308.1 L1186.0,306.6 L1187.0,307.5 L1188.0,307.7 L1189.0,309.5 L1190.0,312.9 L1191.0,309.5 L1192.0,310.5 L1193.0,315.0 L1194.0,317.5 L1195.0,317.7 L1196.0,316.1 L1197.0,314.9 L1198.0,308.6 L1199.0,308.1 L1200.0,315.4 L1201.0,314.3 L1202.0,310.2 L1203.0,309.0 L1204.0,307.8 L1205.0,313.4 L1206.0,318.7 L1207.0,314.8 L1208.0,315.1 L1209.0,307.9 L1210.0,310.0 L1211.0,312.1 L1212.0,303.4 L1213.0,308.8 L1214.0,313.5 L1215.0,308.4 L1216.0,313.3 L1217.0,313.7 L1218.0,315.5 L1219.0,319.1 L1220.0,315.1 L1221.0,313.4 L1222.0,312.8 L1223.0,312.3 L1224.0,312.0 L1225.0,311.8 L1226.0,310.9 L1227.0,310.3 L1228.0,308.7 L1229.0,307.7 L1230.0,309.8 L1231.0,308.9 L1232.0,312.7 L1233.0,318.4 L1234.0,317.2 L1235.0,310.0 L1236.0,307.6 L1237.0,304.1 L1238.0,311.4 L1239.0,309.5 L1240.0,306.5 L1241.0,309.0 L1242.0,308.5 L1243.0,312.0 L1244.0,308.9 L1245.0,307.2 L1246.0,303.1 L1247.0,307.6 L1248.0,313.7 L1249.0,312.4 L1250.0,319.0 L1251.0,308.6 L1252.0,312.1 L1253.0,311.9 L1254.0,313.3 L1255.0,311.1 L1256.0,309.8 L1257.0,309.9 L1258.0,310.5 L1259.0,309.8 L1260.0,308.7 L1261.0,312.5 L1262.0,310.7 L1263.0,321.0 L1264.0,312.9 L1265.0,306.5 L1266.0,311.5 L1267.0,317.6 L1268.0,315.4 L1269.0,309.7 L1270.0,316.9 L1270.0,307.8 L1271.0,314.9 L1272.0,309.9 L1273.0,303.8 L1274.0,311.7 L1275.0,321.8 L1276.0,315.0 L1277.0,309.5 L1278.0,307.9 L1279.0,308.2 L1280.0,313.1 L1281.0,307.7 L1282.0,298.8 L1283.0,309.3 L1284.0,309.2 L1285.0,313.2 L1286.0,303.6 L1287.0,296.3 L1288.0,302.2 L1289.0,297.5 L1290.0,297.6 L1291.0,304.0 L1292.0,302.9 L1293.0,307.4 L1294.0,309.1 L1295.0,307.1 L1296.0,309.0 L1297.0,303.0 L1298.0,300.5 L1299.0,303.3 L1300.0,309.8 L1301.0,308.7 L1302.0,308.5 L1303.0,308.3 L1304.0,295.4 L1305.0,301.8 L1306.0,311.3 L1307.0,293.1 L1308.0,296.6 L1309.0,292.7 L1310.0,290.3 L1311.0,283.0 L1312.0,289.6 L1313.0,292.1 L1314.0,289.1 L1315.0,296.9 L1316.0,298.7 L1317.0,293.0 L1318.0,287.8 L1319.0,301.9 L1320.0,291.5 L1321.0,293.9 L1322.0,291.7 L1323.0,297.8" fill="none" stroke="#b8ae52" stroke-opacity="0.5" stroke-width="0.8" stroke-linejoin="round"/><path d="M386.3,384.1 L386.4,386.6 L386.6,384.9 L386.7,387.8 L386.9,387.3 L387.1,392.2 L387.3,388.8 L387.6,392.3 L387.8,391.2 L388.0,395.6 L388.3,394.2 L388.6,397.2 L388.8,396.8 L389.1,400.2 L389.4,398.2 L389.6,402.4 L389.9,400.9 L390.2,404.2 L390.4,403.0 L390.7,406.6 L391.0,405.2 L391.2,409.0 L391.4,407.7 L391.7,409.7 L391.9,407.7 L392.1,411.3 L392.3,407.5 L392.6,410.0 L392.8,407.0 L393.0,410.6 L393.2,405.4 L393.4,406.1 L393.6,402.7 L393.8,403.5 L394.0,398.0 L394.2,399.6 L394.4,395.9 L394.6,398.6 L394.8,394.1 L395.1,394.4 L395.3,392.4 L395.6,395.0 L395.8,392.3 L396.1,394.8 L396.4,393.2 L396.6,396.5 L396.9,395.9 L397.2,399.2 L397.5,397.3 L397.9,401.9 L398.2,399.6 L398.5,404.2 L398.8,403.1 L399.1,406.6 L399.4,406.9 L399.8,409.4 L400.1,408.1 L400.4,411.5 L400.6,410.1 L400.9,414.1 L401.2,411.5 L401.4,414.1 L401.7,410.3 L401.9,413.0 L402.2,410.1 L402.4,412.2 L402.6,408.9 L402.9,408.8 L403.1,406.1 L403.3,406.1 L403.5,402.2 L403.6,403.0 L403.8,399.2 L404.0,399.8 L404.2,396.3 L404.4,397.8 L404.6,395.3 L404.8,397.5 L405.0,394.9 L405.2,396.7 L405.5,395.1 L405.7,397.3 L405.9,396.3 L406.2,399.9 L406.4,399.1 L406.7,401.7 L406.9,401.7 L407.2,404.9 L407.4,404.4 L407.6,407.7 L407.8,406.7 L408.0,410.9 L408.1,408.9 L408.3,412.4 L408.4,411.2 L408.4,395.0 L409.3,401.8 L410.2,396.2 L411.1,403.4 L412.0,395.1 L412.9,403.3 L413.8,394.8 L414.7,401.4 L415.6,393.4 L416.5,402.1 L417.4,395.9 L418.3,402.0 L419.2,394.2 L420.1,402.1 L421.0,393.4 L421.9,400.3 L422.8,393.4 L423.5,397.2 L423.7,394.9 L423.8,396.0 L424.0,391.6 L424.3,393.5 L424.5,388.8 L424.8,392.7 L425.0,386.2 L425.3,387.5 L425.6,385.0 L425.9,387.7 L426.0,386.1 L426.2,388.3 L426.4,386.3 L426.5,390.8 L426.7,388.3 L426.9,392.7 L427.1,390.3 L427.3,395.6 L427.4,391.8 L427.6,398.2 L427.8,397.6 L428.0,401.0 L428.2,400.3 L428.4,403.8 L428.6,402.5 L428.9,404.8 L429.1,403.8 L429.3,405.3 L429.6,403.8 L429.8,406.7 L430.1,403.1 L430.4,404.0 L430.7,400.8 L431.0,403.1 L431.3,397.8 L431.7,399.6 L432.0,392.8 L432.3,396.5 L432.6,391.9 L433.0,393.7 L433.3,389.7 L433.7,391.7 L434.0,388.4 L434.9,390.0 L436.0,385.0 L437.0,388.8 L438.1,383.4 L439.0,387.0 L439.8,383.4 L439.9,389.0 L440.1,385.9 L440.2,390.9 L440.3,388.7 L440.4,392.2 L440.5,390.1 L440.6,393.7 L440.7,391.3 L440.8,395.6 L440.9,393.7 L441.0,397.9 L441.0,396.7 L441.1,399.7 L441.2,397.9 L441.2,402.2 L441.3,400.7 L441.4,403.4 L441.4,402.1 L441.5,406.1 L441.5,405.9 L441.6,408.8 L441.7,407.7 L441.7,410.5 L441.8,409.3 L441.8,414.0 L441.9,412.5 L441.9,415.8 L442.0,414.5 L442.1,418.0 L442.1,416.8 L442.2,419.0 L442.2,417.8 L442.3,421.5 L442.3,418.9 L442.4,425.2 L442.4,423.4 L442.5,426.5 L442.5,426.2 L442.6,429.9 L442.6,427.8 L442.6,432.1 L442.7,431.3 L442.7,434.8 L442.7,434.3 L442.8,436.8 L442.8,435.1 L442.9,438.7 L442.9,437.9 L442.9,441.8 L443.0,439.9 L443.0,442.4 L443.0,441.3 L443.1,445.4 L443.1,442.1 L443.2,445.8 L443.2,443.7 L443.2,446.9 L443.3,445.0 L443.4,447.0 L443.4,445.0 L443.5,446.5 L443.6,443.8 L443.7,444.6 L443.7,441.2 L443.8,443.3 L443.9,438.6 L444.0,440.6 L444.1,436.3 L444.2,437.2 L444.2,430.3 L444.3,434.6 L444.4,430.0 L444.4,431.0 L444.5,428.0 L444.6,429.3 L444.6,422.8 L444.7,427.2 L444.7,424.7 L444.7,417.0 L445.6,434.7 L446.5,421.6 L447.4,432.3 L448.3,421.5 L449.2,436.0 L450.1,419.1 L451.0,431.6 L451.9,417.9 L452.8,435.7 L453.7,419.7 L454.6,432.8 L455.5,421.6 L456.4,435.5 L457.3,417.8 L458.2,433.5 L459.1,420.2 L460.0,434.6 L460.9,420.1 L461.8,434.9 L462.7,421.4 L463.6,434.6 L463.8,427.7 L463.9,425.7 L463.9,427.3 L463.9,423.7 L463.9,425.1 L464.0,421.4 L464.0,421.9 L464.1,419.4 L464.1,420.0 L464.2,416.2 L464.2,417.1 L464.2,412.1 L464.3,414.0 L464.3,410.2 L464.4,411.4 L464.5,406.6 L464.5,408.5 L464.6,404.0 L464.6,404.7 L464.7,402.1 L464.8,403.0 L464.8,400.3 L464.9,401.4 L465.0,398.3 L465.1,400.5 L465.1,397.8 L465.2,399.3 L465.3,397.9 L465.4,400.0 L465.4,397.8 L465.5,403.2 L465.5,399.9 L465.6,402.0 L465.7,400.4 L465.7,404.2 L465.8,400.0 L465.9,406.6 L466.0,404.3 L466.0,408.8 L466.1,407.2 L466.2,411.0 L466.3,410.5 L466.3,413.8 L466.4,412.1 L466.5,417.4 L466.6,416.0 L466.7,418.7 L466.8,418.8 L466.8,423.0 L466.9,421.4 L467.0,425.5 L467.1,424.7 L467.2,427.2 L467.3,426.6 L467.3,430.4 L467.4,429.2 L467.5,432.8 L467.6,431.2 L467.7,434.0 L467.8,432.9 L467.8,437.0 L467.9,434.2 L468.0,437.5 L468.1,436.2 L468.2,438.6 L468.2,436.6 L468.3,439.0 L468.4,436.0 L468.5,437.5 L468.6,432.8 L468.7,436.4 L468.8,432.9 L468.9,435.3 L468.9,431.7 L469.0,433.3 L469.1,429.6 L469.2,430.1 L469.3,426.8 L469.4,427.8 L469.5,423.9 L469.6,424.1 L469.7,419.9 L469.8,420.7 L469.8,418.2 L469.9,418.2 L470.0,412.0 L470.1,417.7 L470.2,409.4 L470.3,412.4 L470.4,406.2 L470.5,410.0 L470.6,407.1 L470.6,407.6 L470.7,403.2 L470.8,405.7 L470.9,402.8 L471.0,405.2 L471.1,402.1 L471.2,403.7 L471.3,402.2 L471.4,404.8 L471.5,402.9 L471.6,405.0 L471.7,403.6 L471.9,407.4 L472.0,405.6 L472.1,410.6 L472.2,408.3 L472.3,413.7 L472.4,411.8 L472.5,417.8 L472.6,415.0 L472.7,419.4 L472.8,417.6 L473.0,422.0 L473.1,421.7 L473.2,425.7 L473.3,423.8 L473.4,429.7 L473.6,425.8 L473.7,428.3 L473.8,426.6 L474.0,428.9 L474.1,427.3 L474.2,428.8 L474.4,425.6 L474.5,428.9 L474.6,424.7 L474.7,427.5 L474.9,423.6 L475.0,424.8 L475.1,421.4 L475.3,422.1 L475.4,419.4 L475.5,420.8 L475.7,415.3 L475.8,418.1 L475.9,413.0 L476.1,414.8 L476.2,411.0 L476.4,411.3 L476.5,407.4 L476.7,408.7 L476.8,405.4 L477.0,406.0 L477.1,402.9 L477.2,403.5 L477.4,396.8 L477.5,401.5 L477.7,397.6 L477.8,399.1 L478.0,393.1 L478.1,398.0 L478.3,394.5 L478.4,397.7 L478.5,394.8 L478.7,396.8 L478.8,395.4 L479.0,398.5 L479.2,395.3 L479.3,399.6 L479.5,397.4 L479.7,400.3 L479.9,399.0 L480.0,405.7 L480.2,401.2 L480.4,405.8 L480.6,403.6 L480.8,407.5 L480.9,407.1 L481.1,410.6 L481.3,410.0 L481.4,413.1 L481.6,411.0 L481.7,415.8 L481.9,414.3 L482.0,419.0 L482.2,418.2 L482.3,420.7 L482.4,420.4 L482.6,424.1 L482.7,422.3 L482.8,425.9 L482.9,422.7 L482.9,426.6 L482.9,422.9 L483.8,434.6 L484.7,419.9 L485.6,433.2 L486.5,419.6 L487.4,435.5 L488.3,424.2 L489.2,435.4 L490.1,422.8 L491.0,431.4 L491.9,419.4 L492.8,434.7 L493.7,421.0 L494.6,433.1 L495.5,421.5 L496.4,434.1 L497.3,421.1 L498.2,431.1 L499.1,419.5 L500.0,433.2 L500.9,423.0 L501.8,432.2 L502.7,420.6 L503.6,434.9 L504.5,423.5 L505.4,433.5 L506.3,420.6 L506.5,425.6 L506.5,430.5 L506.6,425.8 L506.6,426.0 L506.7,423.6 L506.8,424.2 L506.8,421.4 L506.9,422.2 L507.0,419.1 L507.1,419.8 L507.2,415.6 L507.3,416.8 L507.4,414.0 L507.5,413.7 L507.6,410.0 L507.7,412.6 L507.8,408.4 L507.9,408.3 L508.0,405.8 L508.1,406.5 L508.2,403.3 L508.3,403.3 L508.4,399.9 L508.6,401.3 L508.7,399.1 L508.8,400.5 L508.9,397.2 L509.0,399.9 L509.2,396.6 L509.3,398.1 L509.4,395.4 L509.5,399.0 L509.7,396.2 L509.8,399.7 L509.9,397.6 L510.0,400.4 L510.2,397.0 L510.3,402.8 L510.4,400.5 L510.6,407.0 L510.7,404.1 L510.9,407.8 L511.0,406.4 L511.2,409.4 L511.3,408.8 L511.5,413.7 L511.6,412.6 L511.7,415.3 L511.9,414.4 L512.0,418.6 L512.2,417.2 L512.3,422.0 L512.5,420.0 L512.6,424.0 L512.8,423.0 L512.9,425.4 L513.1,423.8 L513.2,427.2 L513.4,425.5 L513.5,430.3 L513.7,427.6 L513.8,430.2 L514.0,426.7 L514.2,428.9 L514.4,423.9 L514.5,428.2 L514.7,424.5 L514.9,425.6 L515.1,422.1 L515.3,424.3 L515.5,420.7 L515.7,421.1 L515.8,417.6 L516.0,418.0 L516.2,414.6 L516.4,415.6 L516.6,412.0 L516.8,412.4 L516.9,408.9 L517.1,410.5 L517.3,405.2 L517.4,410.3 L517.6,404.6 L517.8,406.4 L517.9,402.9 L518.1,403.8 L518.2,401.8 L518.4,405.3 L518.6,401.9 L518.7,405.5 L518.9,403.9 L519.0,407.6 L519.1,406.4 L519.3,409.8 L519.4,409.5 L519.5,412.5 L519.7,408.7 L519.8,415.6 L519.9,415.0 L520.0,419.2 L520.2,417.7 L520.3,421.2 L520.4,419.1 L520.5,423.8 L520.7,422.0 L520.8,427.4 L520.9,423.7 L521.0,426.1 L521.2,424.6 L521.3,427.0 L521.4,423.1 L521.5,425.1 L521.6,422.2 L521.7,424.5 L521.8,419.5 L521.9,422.9 L522.0,417.7 L522.1,418.5 L522.2,415.3 L522.3,416.8 L522.4,412.6 L522.5,413.9 L522.6,409.4 L522.7,410.5 L522.8,405.9 L522.9,407.1 L523.0,403.6 L523.1,405.7 L523.2,400.4 L523.3,402.3 L523.4,397.8 L523.5,399.1 L523.6,397.3 L523.7,398.1 L523.8,394.7 L523.9,397.5 L524.0,395.1 L524.1,397.6 L524.2,394.7 L524.3,396.9 L524.4,396.0 L524.5,398.3 L524.5,397.1 L524.6,399.9 L524.7,398.1 L524.8,402.1 L524.9,399.3 L525.0,403.6 L525.0,402.3 L525.1,406.2 L525.2,404.7 L525.3,409.8 L525.4,407.7 L525.5,412.1 L525.5,410.9 L525.6,416.5 L525.7,413.6 L525.8,417.1 L525.9,416.3 L526.0,420.4 L526.1,418.5 L526.1,423.1 L526.2,422.2 L526.3,426.4 L526.4,424.3 L526.5,428.6 L526.6,424.1 L526.6,429.4 L526.7,425.3 L526.8,431.7 L526.9,429.9 L527.0,431.8 L527.1,430.2 L527.2,432.9 L527.3,430.1 L527.5,431.9 L527.6,429.6 L527.8,431.2 L527.9,426.8 L528.0,428.9 L528.2,423.9 L528.3,425.8 L528.4,419.9 L528.6,421.8 L528.7,417.8 L528.9,418.7 L529.0,415.3 L529.2,416.9 L529.3,412.1 L529.5,414.4 L529.6,409.9 L529.8,412.2 L530.0,409.7 L530.5,410.9 L531.1,409.5 L531.7,413.7 L532.3,413.0 L533.0,418.1 L533.7,415.6 L534.4,418.3 L534.6,413.0 L534.8,417.2 L535.1,413.9 L535.3,414.1 L535.5,410.7 L535.8,413.2 L536.0,408.6 L536.2,412.6 L536.5,406.5 L536.7,407.0 L537.0,402.3 L537.2,404.1 L537.5,399.3 L537.7,401.1 L538.0,397.5 L538.2,398.2 L538.5,395.0 L538.7,395.3 L539.0,392.3 L539.2,393.7 L539.4,391.2 L539.6,393.6 L539.9,389.7 L540.1,393.3 L540.3,389.9 L540.4,393.7 L540.6,391.3 L540.7,394.3 L540.8,392.4 L540.9,395.6 L541.1,393.3 L541.2,396.4 L541.3,395.6 L541.4,399.5 L541.5,398.1 L541.6,400.4 L541.8,400.4 L541.9,403.1 L542.0,400.7 L542.1,405.6 L542.2,405.3 L542.3,409.5 L542.4,408.7 L542.5,413.8 L542.6,410.6 L542.8,415.2 L542.9,414.6 L543.0,417.6 L543.1,417.0 L543.2,421.5 L543.3,420.2 L543.4,423.8 L543.5,421.1 L543.6,425.0 L543.7,423.9 L543.8,427.8 L543.9,424.9 L544.0,429.1 L544.2,427.2 L544.3,430.9 L544.4,428.4 L544.5,432.9 L544.6,429.1 L544.7,432.6 L544.9,429.3 L545.0,432.4 L545.2,427.8 L545.3,434.5 L545.5,427.8 L545.6,429.5 L545.8,424.2 L545.9,428.6 L546.1,424.1 L546.2,426.2 L546.4,421.8 L546.5,424.7 L546.7,418.6 L546.8,420.9 L547.0,414.1 L547.1,417.6 L547.3,412.8 L547.4,415.0 L547.6,410.5 L547.7,410.8 L547.9,407.6 L548.1,409.4 L548.2,404.8 L548.4,406.9 L548.5,402.6 L548.7,404.3 L548.8,402.0 L549.0,404.1 L549.1,400.8 L549.5,401.7 L549.9,400.4 L550.3,402.6 L550.6,401.5 L551.0,404.2 L551.4,403.0 L551.8,407.0 L552.2,405.3 L552.5,409.8 L552.9,409.8 L553.2,413.6 L553.5,411.7 L553.7,415.0 L553.8,414.6 L554.0,420.7 L554.1,416.6 L554.3,422.2 L554.4,419.3 L554.5,423.6 L554.7,421.9 L554.8,425.3 L554.9,425.6 L555.0,428.9 L555.2,425.8 L555.3,431.1 L555.4,430.5 L555.5,434.6 L555.6,432.0 L555.7,436.2 L555.9,434.4 L556.0,440.3 L556.1,435.0 L556.2,437.7 L556.3,436.4 L556.5,440.0 L556.6,434.9 L556.6,437.2 L556.7,435.4 L556.8,436.7 L556.9,432.8 L557.0,435.6 L557.0,432.2 L557.1,433.4 L557.2,430.2 L557.3,431.4 L557.3,427.9 L557.4,428.4 L557.5,425.1 L557.6,427.0 L557.7,423.2 L557.7,424.5 L557.8,420.5 L557.9,421.8 L558.0,416.8 L558.0,418.2 L558.1,414.1 L558.2,415.9 L558.3,411.3 L558.4,413.5 L558.5,410.1 L558.6,411.2 L558.6,406.6 L558.7,408.7 L558.8,405.4 L558.9,406.2 L559.0,402.7 L559.1,404.5 L559.2,399.3 L559.3,404.0 L559.4,400.9 L560.0,402.4 L560.6,400.7 L561.2,403.8 L561.9,401.1 L562.5,408.5 L563.2,406.3 L563.8,408.9 L564.1,406.3 L564.3,408.3 L564.5,404.6 L564.8,405.5 L565.0,401.8 L565.2,403.4 L565.5,399.5 L565.7,400.5 L565.9,396.8 L566.2,398.1 L566.4,394.0 L566.7,395.2 L566.9,391.0 L567.2,394.4 L567.4,389.0 L567.7,391.8 L568.0,388.6 L568.2,390.8 L568.5,388.7 L568.7,391.0 L568.9,389.4 L569.1,393.4 L569.4,391.2 L569.6,393.5 L569.8,392.5 L570.1,397.1 L570.3,393.8 L570.6,398.1 L570.8,396.0 L571.1,400.3 L571.3,398.8 L571.6,401.1 L571.8,400.1 L572.1,403.8 L572.4,402.5 L572.6,408.5 L572.9,403.0 L573.1,408.8 L573.4,408.6 L573.6,411.4 L573.9,410.6 L574.1,415.2 L574.3,413.0 L574.4,418.3 L574.6,414.9 L574.8,419.0 L574.9,417.8 L575.1,421.0 L575.2,420.1 L575.4,422.7 L575.6,420.4 L575.7,425.7 L575.9,424.2 L576.1,428.1 L576.2,427.0 L576.4,433.7 L576.6,429.9 L576.7,433.7 L576.9,432.2 L577.1,435.9 L577.2,434.7 L577.4,437.7 L577.6,437.2 L577.7,441.1 L577.9,440.6 L578.0,445.2 L578.2,442.6 L578.4,445.3 L578.5,444.1 L578.7,447.2 L578.8,446.2 L579.0,449.4 L579.1,447.8 L579.2,452.3 L579.4,449.6 L579.5,451.2 L579.6,450.4 L579.8,452.2 L579.9,451.0 L580.0,453.6 L580.1,450.6 L580.3,452.6 L580.4,450.2 L580.5,451.8 L580.7,449.8 L580.8,450.2 L580.9,447.7 L581.0,449.2 L581.2,446.2 L581.3,447.0 L581.4,443.6 L581.5,445.0 L581.6,441.3 L581.7,441.9 L581.8,437.7 L581.9,439.2 L582.0,435.9 L582.1,436.9 L582.2,432.1 L582.2,433.8 L582.3,429.6 L582.4,431.0 L582.5,427.0 L582.5,428.3 L582.6,424.2 L582.7,426.8 L582.7,422.2 L582.8,424.1 L582.8,420.5 L582.9,423.3 L582.9,419.7 L582.9,418.3 L583.8,434.1 L584.7,418.2 L585.6,433.5 L586.5,421.3 L587.4,431.5 L588.3,419.6 L589.2,436.8 L590.1,417.5 L591.0,431.7 L591.9,422.6 L592.8,434.5 L593.7,418.4 L594.6,435.5 L595.5,418.6 L596.4,432.6 L597.3,419.3 L598.2,436.6 L599.1,420.2 L600.0,431.9 L600.6,427.2 L600.6,424.6 L600.7,427.1 L600.8,420.4 L600.9,424.3 L600.9,421.9 L601.0,422.8 L601.1,418.8 L601.2,421.4 L601.3,415.5 L601.4,417.0 L601.5,414.0 L601.6,414.9 L601.8,410.9 L601.9,412.3 L602.0,407.9 L602.1,411.7 L602.2,404.8 L602.4,408.7 L602.5,402.8 L602.6,407.0 L602.7,400.7 L602.8,404.3 L603.0,398.4 L603.1,400.8 L603.2,397.6 L603.3,400.6 L603.4,397.0 L603.5,399.5 L603.6,397.8 L603.7,401.0 L603.8,397.9 L603.8,401.5 L603.9,399.3 L604.0,403.7 L604.1,401.7 L604.1,404.9 L604.2,402.7 L604.3,407.1 L604.3,405.5 L604.4,409.8 L604.5,408.8 L604.5,412.2 L604.6,411.9 L604.7,414.7 L604.8,413.8 L604.8,418.1 L604.9,418.1 L605.0,421.4 L605.1,420.4 L605.1,424.1 L605.2,421.7 L605.3,426.8 L605.4,426.0 L605.4,429.4 L605.5,427.7 L605.6,432.1 L605.7,430.9 L605.8,434.0 L605.8,432.2 L605.9,436.4 L606.0,433.8 L606.1,437.8 L606.2,434.5 L606.3,438.5 L606.4,434.7 L606.5,438.6 L606.6,435.4 L606.7,438.2 L606.8,434.9 L606.9,440.0 L607.0,434.2 L607.1,435.3 L607.2,433.1 L607.3,434.7 L607.4,431.2 L607.5,432.0 L607.7,428.7 L607.8,430.2 L607.9,426.2 L608.0,427.0 L608.1,424.3 L608.3,424.1 L608.4,421.2 L608.5,421.4 L608.6,418.2 L608.8,419.6 L608.9,414.7 L609.0,416.8 L609.1,412.9 L609.3,413.5 L609.4,410.1 L609.5,411.3 L609.6,403.8 L609.7,408.5 L609.9,405.3 L610.0,406.0 L610.1,402.9 L610.2,403.4 L610.3,401.2 L610.4,402.7 L610.6,398.9 L610.7,401.6 L610.8,398.3 L610.9,400.7 L611.1,394.4 L611.3,399.5 L611.6,397.5 L611.8,402.6 L612.0,400.3 L612.2,403.9 L612.4,403.3 L612.6,407.4 L612.8,406.6 L613.0,409.7 L613.2,409.0 L613.4,413.3 L613.6,412.7 L613.8,416.1 L614.0,414.8 L614.2,420.1 L614.4,415.6 L614.6,419.1 L614.7,414.5 L614.9,415.7 L615.0,411.4 L615.2,414.4 L615.3,411.6 L615.5,412.2 L615.6,405.2 L615.8,408.8 L615.9,406.0 L616.1,406.8 L616.2,402.9 L616.3,404.1 L616.5,399.0 L616.6,400.9 L616.8,398.0 L616.9,398.5 L617.1,395.7 L617.2,398.6 L617.4,394.2 L617.6,397.3 L617.9,395.2 L618.1,398.3 L618.4,395.6 L618.7,399.4 L618.9,398.5 L619.2,402.6 L619.4,400.5 L619.7,404.5 L619.9,404.5 L620.1,407.9 L620.3,406.2 L620.4,409.8 L620.5,407.9 L620.7,412.9 L620.8,410.7 L620.9,414.5 L621.0,412.7 L621.1,416.1 L621.2,413.8 L621.3,418.4 L621.3,417.6 L621.4,420.9 L621.5,417.2 L621.6,424.1 L621.6,422.4 L621.7,425.1 L621.7,423.4 L621.8,426.5 L621.8,419.6 L622.7,435.3 L623.6,422.5 L624.5,432.5 L625.4,423.4 L626.3,430.9 L627.2,423.9 L628.1,432.1 L629.0,422.6 L629.9,435.4 L630.8,421.2 L631.7,432.9 L632.6,421.8 L633.5,431.5 L634.4,422.9 L635.3,434.3 L636.2,421.9 L637.1,432.7 L638.0,420.3 L638.9,430.7 L639.8,424.1 L640.7,431.9 L641.6,420.5 L642.5,433.4 L643.4,422.1 L643.8,426.4 L643.9,428.0 L643.9,424.3 L644.0,426.3 L644.1,422.8 L644.1,425.3 L644.2,420.7 L644.3,422.8 L644.4,416.2 L644.5,419.5 L644.6,415.7 L644.6,417.7 L644.7,413.0 L644.8,414.8 L645.0,410.1 L645.1,412.0 L645.2,408.3 L645.3,409.4 L645.4,405.9 L645.5,406.1 L645.6,403.0 L645.7,404.1 L645.8,401.1 L645.9,402.3 L646.0,398.1 L646.2,399.7 L646.3,396.2 L646.4,400.1 L646.5,393.7 L646.6,396.7 L646.7,394.5 L646.8,396.5 L646.9,395.0 L647.0,397.0 L647.1,395.8 L647.2,399.2 L647.3,397.3 L647.3,399.3 L647.4,398.6 L647.5,402.1 L647.6,400.4 L647.7,404.1 L647.8,404.3 L647.9,407.0 L648.0,404.7 L648.1,410.4 L648.2,409.5 L648.3,414.0 L648.4,412.4 L648.5,416.4 L648.6,415.1 L648.7,419.1 L648.8,417.9 L648.9,422.4 L649.0,419.8 L649.1,424.4 L649.2,422.0 L649.3,426.1 L649.5,423.0 L649.6,426.7 L649.7,423.8 L649.9,427.0 L650.0,423.8 L650.2,426.2 L650.3,423.0 L650.5,426.2 L650.7,420.2 L650.8,422.7 L651.0,417.9 L651.2,419.3 L651.4,415.8 L651.5,416.9 L651.7,412.3 L651.9,413.0 L652.1,409.9 L652.3,410.5 L652.5,406.4 L652.6,407.3 L652.8,403.5 L653.0,404.6 L653.2,401.5 L653.3,401.9 L653.5,399.5 L653.7,400.4 L653.8,398.4 L654.0,400.9 L654.1,398.1 L654.3,400.5 L654.4,397.3 L654.5,400.6 L654.7,400.1 L654.8,405.3 L654.9,401.0 L655.0,405.9 L655.1,403.9 L655.2,406.8 L655.4,406.2 L655.5,410.3 L655.6,409.4 L655.7,415.7 L655.8,412.2 L655.9,417.3 L656.0,414.5 L656.1,421.3 L656.2,418.7 L656.3,421.6 L656.4,420.7 L656.5,423.4 L656.6,422.5 L656.7,426.4 L656.8,424.5 L656.9,426.2 L657.1,423.9 L657.2,425.8 L657.3,423.7 L657.4,424.7 L657.5,422.6 L657.5,424.1 L657.6,420.8 L657.7,421.7 L657.8,418.9 L657.9,418.5 L658.0,412.9 L658.1,416.7 L658.2,411.9 L658.3,414.0 L658.4,410.0 L658.5,409.9 L658.6,406.4 L658.7,407.6 L658.8,403.7 L658.9,404.6 L659.0,400.0 L659.1,401.7 L659.2,398.3 L659.3,400.4 L659.4,397.2 L659.5,398.4 L659.6,394.8 L659.8,396.7 L659.9,394.2 L660.0,396.5 L660.1,394.2 L660.2,398.8 L660.3,395.4 L660.4,399.2 L660.5,396.5 L660.6,400.0 L660.7,398.6 L660.8,401.8 L660.9,401.2 L661.1,404.3 L661.2,403.3 L661.3,406.5 L661.4,405.2 L661.5,408.9 L661.7,408.0 L661.8,411.7 L661.9,410.1 L662.0,415.3 L662.1,413.8 L662.3,417.3 L662.4,414.9 L662.5,420.7 L662.6,418.7 L662.8,423.3 L662.9,422.7 L663.0,425.9 L663.1,424.3 L663.2,429.2 L663.3,427.3 L663.5,430.5 L663.6,429.6 L663.7,432.3 L663.8,431.4 L663.9,434.4 L664.0,432.1 L664.1,436.2 L664.2,433.4 L664.3,436.9 L664.4,434.0 L664.5,437.6 L664.7,431.7 L664.8,437.2 L664.9,433.0 L665.0,436.2 L665.1,432.8 L665.2,433.8 L665.3,430.4 L665.4,432.3 L665.5,426.2 L665.6,430.3 L665.7,426.2 L665.8,427.3 L665.9,423.3 L666.0,424.4 L666.1,419.9 L666.2,423.6 L666.3,417.3 L666.4,420.0 L666.4,414.4 L666.5,416.3 L666.7,411.6 L666.8,413.1 L666.9,410.6 L667.0,411.3 L667.1,408.6 L667.2,409.8 L667.4,406.1 L667.9,406.3 L668.5,403.0 L669.2,403.1 L669.9,401.1 L670.6,402.3 L671.2,399.5 L671.8,402.3 L672.1,400.5 L672.3,404.9 L672.5,402.7 L672.7,406.2 L672.9,404.5 L673.1,409.1 L673.3,407.8 L673.6,411.7 L673.8,410.8 L674.1,414.4 L674.4,411.3 L674.7,414.3 L675.1,412.6 L675.6,414.5 L676.2,410.3 L676.8,411.1 L677.3,407.4 L677.9,409.9 L678.5,405.0 L679.1,406.5 L679.7,403.1 L680.2,404.4 L680.6,402.4 L680.9,405.5 L681.1,403.5 L681.3,406.0 L681.5,404.9 L681.7,408.2 L681.9,406.7 L682.1,411.1 L682.2,410.8 L682.4,415.2 L682.6,410.6 L682.7,419.3 L682.9,415.7 L683.0,419.0 L683.2,417.7 L683.4,420.8 L683.5,416.6 L683.7,420.3 L683.8,416.9 L684.0,418.4 L684.1,415.1 L684.3,418.1 L684.4,410.2 L684.6,413.7 L684.7,407.7 L684.9,411.6 L685.0,405.5 L685.1,407.2 L685.3,404.1 L685.4,404.6 L685.6,398.2 L685.7,401.9 L685.9,398.6 L686.0,400.2 L686.2,397.5 L686.3,400.7 L686.5,397.4 L686.6,401.1 L686.7,398.7 L686.8,401.1 L686.9,399.2 L687.0,405.6 L687.1,401.1 L687.2,405.1 L687.3,404.1 L687.4,408.4 L687.5,406.2 L687.6,410.4 L687.7,409.3 L687.8,415.0 L687.9,412.8 L688.0,417.2 L688.1,415.6 L688.2,419.3 L688.3,419.3 L688.4,422.4 L688.5,420.6 L688.6,424.6 L688.7,423.4 L688.8,427.4 L688.9,425.6 L689.0,428.2 L689.1,426.6 L689.2,428.6 L689.3,427.4 L689.4,429.7 L689.5,426.4 L689.6,431.2 L689.6,425.8 L689.7,428.4 L689.8,425.2 L689.9,428.5 L689.9,422.8 L690.0,425.1 L690.1,421.7 L690.1,423.1 L690.2,419.1 L690.3,419.9 L690.4,416.8 L690.4,417.8 L690.5,414.8 L690.6,415.2 L690.6,411.7 L690.7,415.4 L690.8,408.7 L690.9,410.2 L690.9,405.7 L691.0,407.3 L691.1,403.6 L691.2,404.7 L691.2,400.4 L691.3,401.3 L691.4,398.4 L691.5,398.7 L691.6,394.8 L691.6,396.6 L691.7,393.9 L691.8,395.1 L691.9,391.8 L692.0,393.2 L692.1,390.2 L692.2,393.4 L692.3,388.5 L692.4,391.5 L692.6,385.3 L692.8,390.3 L693.0,388.6 L693.2,391.1 L693.5,387.5 L693.7,392.4 L694.0,391.8 L694.2,396.2 L694.5,393.7 L694.7,397.9 L695.0,396.8 L695.2,402.0 L695.5,400.4 L695.8,404.9 L696.0,403.7 L696.3,407.2 L696.5,405.0 L696.8,409.0 L697.1,407.2 L697.5,413.1 L697.9,409.5 L698.3,413.5 L698.7,411.1 L699.1,414.3 L699.4,411.7 L699.8,416.7 L700.2,412.7 L700.5,417.7 L700.9,417.4 L701.2,421.4 L701.4,418.5 L701.5,425.7 L701.7,421.4 L701.8,425.2 L702.0,424.0 L702.1,427.3 L702.3,423.7 L702.4,430.9 L702.5,428.6 L702.6,433.0 L702.8,431.3 L702.9,435.6 L703.0,435.1 L703.2,438.2 L703.3,436.0 L703.5,439.1 L703.6,437.5 L703.8,441.1 L703.9,439.1 L704.1,440.7 L704.3,439.4 L704.5,443.4 L704.6,438.3 L704.8,439.0 L705.0,436.8 L705.2,438.1 L705.4,435.2 L705.6,436.5 L705.8,432.9 L706.0,434.4 L706.2,430.6 L706.4,431.7 L706.6,428.3 L706.8,429.1 L707.0,424.9 L707.2,425.8 L707.4,422.4 L707.6,423.1 L707.8,419.0 L708.0,421.4 L708.2,417.7 L708.4,419.3 L708.5,414.7 L708.7,416.9 L708.9,412.7 L709.0,413.3 L709.2,406.9 L709.3,411.6 L709.5,404.3 L709.6,407.8 L709.7,404.0 L709.9,405.2 L710.0,400.3 L710.1,401.6 L710.3,395.3 L710.4,399.2 L710.5,396.2 L710.7,398.2 L710.8,395.3 L711.0,397.5 L711.1,394.1 L711.3,396.0 L711.5,395.4 L711.6,398.2 L711.7,395.3 L711.8,397.6 L711.9,396.7 L712.0,399.7 L712.1,397.8 L712.2,403.3 L712.3,399.8 L712.4,402.9 L712.6,402.5 L712.7,405.8 L712.8,404.6 L712.9,408.1 L713.1,408.2 L713.2,411.6 L713.3,407.8 L713.4,413.3 L713.6,413.1 L713.7,416.2 L713.8,415.3 L713.9,420.2 L714.1,418.6 L714.2,422.1 L714.3,420.3 L714.4,424.5 L714.5,423.8 L714.7,427.0 L714.8,424.7 L714.9,429.5 L715.0,428.1 L715.1,431.6 L715.3,430.6 L715.4,433.8 L715.5,429.6 L715.6,435.3 L715.7,432.1 L715.8,435.6 L715.9,433.7 L716.0,438.1 L716.1,432.7 L716.2,434.3 L716.3,432.3 L716.4,433.5 L716.5,430.4 L716.6,432.0 L716.7,428.4 L716.8,430.9 L716.9,426.2 L716.9,429.1 L717.0,425.3 L717.1,426.6 L717.2,421.7 L717.3,423.2 L717.4,419.3 L717.4,420.2 L717.5,416.2 L717.6,417.7 L717.7,413.4 L717.8,415.4 L717.8,411.4 L717.9,412.2 L718.0,408.2 L718.1,409.4 L718.2,406.5 L718.3,407.4 L718.4,403.7 L718.5,405.8 L718.6,401.6 L718.7,404.1 L718.8,397.5 L719.4,400.7 L720.0,395.5 L720.6,396.7 L721.3,392.6 L721.9,396.0 L722.6,393.2 L723.2,397.7 L723.4,394.1 L723.5,398.6 L723.6,395.7 L723.7,398.8 L723.8,397.4 L723.9,403.2 L724.0,399.3 L724.2,403.0 L724.3,402.3 L724.4,408.6 L724.5,404.9 L724.6,407.8 L724.7,406.7 L724.9,410.0 L725.0,409.3 L725.1,412.9 L725.2,411.4 L725.3,415.6 L725.4,415.1 L725.6,418.1 L725.7,418.2 L725.8,422.5 L725.9,419.8 L726.0,424.1 L726.1,423.1 L726.3,426.4 L726.4,424.8 L726.5,428.9 L726.6,426.6 L726.7,431.3 L726.8,429.0 L727.0,431.8 L727.1,430.7 L727.2,434.0 L727.3,431.7 L727.4,434.2 L727.5,433.0 L727.6,434.7 L727.8,433.0 L728.0,434.8 L728.2,432.6 L728.4,433.9 L728.6,431.2 L728.8,432.4 L729.0,429.9 L729.2,431.5 L729.4,426.9 L729.6,428.2 L729.8,424.1 L729.9,425.3 L730.1,421.9 L730.3,421.9 L730.5,418.7 L730.7,419.6 L730.9,414.8 L731.1,416.0 L731.3,409.9 L731.5,414.7 L731.7,411.5 L731.9,413.1 L732.1,409.0 L732.9,410.6 L733.8,407.5 L734.7,411.7 L735.6,408.4 L736.5,409.6 L736.7,406.3 L737.0,407.7 L737.2,404.1 L737.4,405.4 L737.7,400.7 L737.9,402.2 L738.1,398.7 L738.4,399.0 L738.6,394.8 L738.8,396.0 L739.1,392.9 L739.3,393.8 L739.6,387.9 L739.8,391.3 L740.1,388.6 L740.3,390.9 L740.6,388.4 L740.9,391.0 L741.0,387.0 L741.2,391.8 L741.3,389.9 L741.5,396.2 L741.7,391.3 L741.8,395.1 L742.0,393.2 L742.2,396.8 L742.3,395.7 L742.5,398.9 L742.7,398.0 L742.8,401.7 L743.0,400.6 L743.2,403.7 L743.4,403.8 L743.6,407.4 L743.7,406.5 L743.9,409.6 L744.1,409.6 L744.3,412.9 L744.4,412.3 L744.6,417.4 L744.8,414.2 L745.0,418.2 L745.1,417.3 L745.3,419.9 L745.5,416.6 L745.7,421.7 L745.8,420.4 L746.0,423.4 L746.1,422.3 L746.3,424.7 L746.5,423.9 L746.6,425.9 L746.8,423.7 L747.0,428.6 L747.1,424.2 L747.3,428.8 L747.5,423.3 L747.7,426.7 L747.9,420.8 L748.0,422.4 L748.2,419.1 L748.3,420.1 L748.5,415.8 L748.7,416.7 L748.8,413.2 L749.0,414.0 L749.1,409.7 L749.3,410.3 L749.4,406.6 L749.6,407.8 L749.8,403.8 L749.9,405.0 L750.1,401.4 L750.3,403.3 L750.4,399.7 L750.6,400.7 L750.8,398.1 L751.0,401.6 L751.2,397.4 L751.3,400.6 L751.5,398.7 L751.7,401.7 L751.9,397.4 L752.0,404.0 L752.2,400.6 L752.4,407.1 L752.6,403.5 L752.8,406.4 L753.0,405.3 L753.1,409.3 L753.3,406.1 L753.5,411.3 L753.7,410.9 L753.9,414.8 L754.1,413.5 L754.3,417.1 L754.5,415.8 L754.7,419.4 L754.9,419.7 L755.1,423.1 L755.3,422.1 L755.5,425.1 L755.7,424.2 L755.8,427.3 L756.0,426.6 L756.2,430.1 L756.4,428.1 L756.6,431.1 L756.7,429.2 L756.9,432.3 L757.1,430.6 L757.3,433.2 L757.5,430.6 L757.8,431.5 L758.0,428.9 L758.2,431.3 L758.4,426.5 L758.6,428.4 L758.8,424.7 L759.1,425.5 L759.3,423.0 L759.5,423.9 L759.7,419.6 L759.9,420.9 L760.1,413.9 L760.3,417.5 L760.5,414.9 L760.7,415.2 L760.9,411.9 L761.1,412.7 L761.3,410.0 L761.5,411.9 L762.3,408.3 L763.2,411.0 L764.0,407.2 L764.9,410.1 L765.9,407.0 L766.1,407.5 L766.4,404.4 L766.7,406.2 L767.0,402.8 L767.3,403.3 L767.6,399.5 L767.9,401.4 L768.2,398.1 L768.5,398.5 L768.8,394.5 L769.1,395.6 L769.4,392.8 L769.8,393.0 L770.1,390.1 L770.4,390.7 L770.7,387.9 L770.9,390.7 L771.2,387.8 L771.5,388.8 L771.8,387.4 L771.9,390.4 L772.1,387.3 L772.3,390.3 L772.4,389.1 L772.6,391.7 L772.8,387.7 L772.9,393.9 L773.1,391.7 L773.3,395.6 L773.5,392.4 L773.6,397.7 L773.8,397.2 L773.9,400.8 L774.1,398.3 L774.3,403.4 L774.4,402.4 L774.6,406.3 L774.7,402.5 L774.9,408.0 L775.0,408.2 L775.1,411.6 L775.3,409.4 L775.4,413.5 L775.5,412.8 L775.6,415.8 L775.7,414.5 L775.8,417.5 L775.9,416.4 L776.0,419.9 L776.1,416.9 L776.2,420.7 L776.2,422.4 L777.1,433.9 L778.0,421.8 L778.9,436.4 L779.8,420.2 L780.7,435.0 L781.6,422.0 L782.5,434.9 L783.4,423.6 L784.3,432.7 L785.2,424.3 L786.1,432.9 L787.0,421.0 L787.9,433.1 L788.8,423.4 L789.7,434.7 L790.6,421.0 L790.9,426.8 L790.9,428.8 L791.0,425.8 L791.0,427.0 L791.1,423.8 L791.1,424.7 L791.2,422.4 L791.2,422.6 L791.3,419.0 L791.4,420.3 L791.5,416.5 L791.6,417.5 L791.7,413.7 L791.8,414.7 L791.9,411.6 L792.0,413.5 L792.2,410.4 L792.4,414.4 L792.9,407.4 L793.5,407.7 L794.2,403.4 L794.9,404.1 L795.6,400.7 L796.3,403.3 L796.8,404.3 L796.8,406.3 L796.9,405.3 L796.9,408.3 L797.0,405.5 L797.0,409.2 L797.1,408.0 L797.1,410.5 L797.2,409.5 L797.2,413.6 L797.2,411.8 L797.3,414.8 L797.3,413.6 L797.3,417.2 L797.3,416.3 L797.4,419.9 L797.4,419.8 L797.4,422.5 L797.4,420.9 L797.5,425.1 L797.5,424.4 L797.5,428.7 L797.5,426.8 L797.6,431.3 L797.6,430.9 L797.6,434.8 L797.6,431.7 L797.6,437.0 L797.6,436.2 L797.7,439.0 L797.7,439.1 L797.7,444.1 L797.7,440.9 L797.7,444.7 L797.8,443.1 L797.8,447.5 L797.8,446.5 L797.8,449.2 L797.8,447.3 L797.9,450.7 L797.9,449.3 L797.9,452.0 L797.9,450.3 L798.0,455.9 L798.0,452.4 L798.0,455.0 L798.1,453.0 L798.1,455.2 L798.2,452.3 L798.2,455.6 L798.2,454.2 L798.3,455.1 L798.3,453.2 L798.4,455.6 L798.4,452.4 L798.4,453.8 L798.5,451.3 L798.5,453.4 L798.6,449.4 L798.6,451.6 L798.7,448.5 L798.7,449.5 L798.7,445.6 L798.8,447.3 L798.8,444.6 L798.9,445.1 L798.9,442.0 L799.0,442.9 L799.0,439.9 L799.1,440.1 L799.1,436.0 L799.2,438.3 L799.2,431.0 L799.3,435.3 L799.3,430.5 L799.4,431.8 L799.5,428.1 L799.5,430.4 L799.6,424.6 L799.6,425.7 L799.7,421.3 L799.7,423.7 L799.8,419.0 L799.8,419.5 L799.9,415.4 L799.9,417.2 L800.0,414.0 L800.1,416.9 L800.1,409.8 L800.2,411.4 L800.2,408.6 L800.3,408.9 L800.3,405.3 L800.4,406.3 L800.4,403.0 L800.5,403.8 L800.5,400.8 L800.6,402.6 L800.7,398.7 L800.7,400.1 L800.8,398.0 L800.8,399.9 L800.9,395.9 L800.9,399.0 L801.0,395.5 L801.0,398.2 L801.1,395.6 L801.1,397.7 L801.2,392.2 L801.2,397.1 L801.3,395.1 L801.3,396.8 L801.4,395.3 L801.4,398.9 L801.5,396.4 L801.5,399.7 L801.6,397.2 L801.6,400.2 L801.7,399.6 L801.7,403.1 L801.8,401.2 L801.8,404.8 L801.9,403.5 L801.9,406.5 L802.0,404.9 L802.0,410.5 L802.1,406.8 L802.1,411.9 L802.2,409.9 L802.2,413.6 L802.3,409.6 L802.3,416.3 L802.4,415.4 L802.4,418.9 L802.5,418.8 L802.5,422.5 L802.6,421.6 L802.6,425.3 L802.7,424.3 L802.7,427.9 L802.8,427.3 L802.8,430.8 L802.9,430.7 L803.0,433.8 L803.0,432.3 L803.1,436.5 L803.1,435.3 L803.2,440.3 L803.2,437.8 L803.3,442.1 L803.3,440.6 L803.4,444.5 L803.4,443.8 L803.5,447.7 L803.5,446.4 L803.6,448.4 L803.6,447.1 L803.7,450.8 L803.7,446.4 L803.8,454.7 L803.8,450.6 L803.9,457.0 L803.9,451.4 L804.0,455.4 L804.0,451.5 L804.1,455.2 L804.1,453.1 L804.2,455.6 L804.3,453.2 L804.4,455.3 L804.4,453.5 L804.5,458.0 L804.6,452.9 L804.7,454.6 L804.8,451.9 L804.9,452.0 L805.0,449.4 L805.1,450.6 L805.1,446.9 L805.2,449.5 L805.3,445.0 L805.4,446.1 L805.5,442.8 L805.6,442.6 L805.7,439.2 L805.8,439.8 L805.9,436.2 L805.9,438.1 L806.0,433.1 L806.1,435.0 L806.2,431.2 L806.3,432.1 L806.3,427.9 L806.4,428.8 L806.5,425.7 L806.6,426.5 L806.6,422.1 L806.7,423.8 L806.8,420.8 L806.8,422.3 L806.9,417.5 L806.9,419.4 L807.0,416.4 L807.0,419.0 L807.1,412.2 L807.1,414.2 L808.0,425.4 L808.9,414.2 L809.8,425.8 L810.7,408.5 L811.6,424.7 L812.5,410.9 L813.4,426.2 L814.3,408.7 L815.2,422.7 L816.1,408.3 L817.0,426.2 L817.9,408.2 L818.8,420.8 L819.7,410.7 L820.6,421.1 L821.5,407.5 L821.8,416.9 L821.8,414.7 L821.8,415.8 L821.8,413.1 L821.9,415.4 L821.9,411.3 L821.9,413.8 L821.9,408.1 L822.0,409.2 L822.0,407.1 L822.0,407.3 L822.1,404.6 L822.1,405.0 L822.1,400.9 L822.2,402.2 L822.2,398.5 L822.2,400.0 L822.3,396.5 L822.3,397.9 L822.4,393.0 L822.4,395.1 L822.5,390.2 L822.5,392.8 L822.6,389.1 L822.7,389.7 L822.7,386.8 L822.8,387.9 L822.9,385.0 L823.0,387.6 L823.1,384.2 L823.1,385.8 L823.2,382.9 L823.5,384.1 L823.8,383.2 L824.1,385.6 L824.4,384.4 L824.8,387.6 L825.2,387.3 L825.6,391.1 L826.0,391.2 L826.4,394.5 L826.8,393.2 L827.2,396.4 L827.6,394.6 L828.2,397.2 L828.8,393.0 L829.4,395.7 L830.0,391.5 L830.6,392.0 L831.2,387.9 L831.8,389.7 L832.4,385.6 L833.0,389.2 L833.5,384.5 L833.8,389.3 L834.1,386.5 L834.4,390.6 L834.7,389.1 L835.0,394.9 L835.2,392.1 L835.5,396.5 L835.7,392.2 L836.0,398.3 L836.2,397.5 L836.5,402.4 L836.8,401.0 L837.0,403.0 L837.3,401.2 L837.6,404.0 L837.9,401.3 L838.1,405.1 L838.3,402.0 L838.5,403.5 L838.7,400.4 L839.0,401.3 L839.2,396.5 L839.4,400.3 L839.6,395.7 L839.9,398.1 L840.1,393.2 L840.3,394.3 L840.6,390.8 L840.8,391.4 L841.0,389.1 L841.3,389.4 L841.5,386.2 L841.7,386.8 L841.9,383.3 L842.2,383.7 L842.4,380.2 L842.6,381.6 L842.8,377.8 L843.0,379.1 L843.2,376.5 L843.3,378.3 L843.5,374.3 L843.7,379.3 L843.8,374.8 L844.2,376.4 L844.4,374.8 L844.6,376.8 L844.8,376.7 L845.0,381.2 L845.1,380.0 L845.2,383.4 L845.4,383.8 L845.5,387.8 L845.7,386.1 L845.9,388.3 L846.1,386.1 L846.3,387.8 L846.5,383.7 L846.7,384.6 L847.0,381.6 L847.2,382.7 L847.4,379.0 L847.7,379.9 L848.0,376.4 L848.2,377.4 L848.5,374.0 L848.8,379.3 L849.2,375.0 L849.7,379.6 L850.2,376.6 L850.7,381.6 L851.2,379.1 L851.7,382.2 L852.2,381.7 L852.7,385.5 L853.2,382.3 L853.9,385.5 L854.5,380.7 L855.1,383.6 L855.8,380.3 L856.4,380.6 L857.0,377.3 L857.6,379.2 L858.6,377.0 L859.5,381.4 L860.4,380.0 L861.3,383.1 L862.1,379.5 L862.3,383.5 L862.5,378.1 L862.7,380.7 L862.9,377.7 L863.0,377.7 L863.2,375.4 L863.4,376.0 L863.5,372.2 L863.7,373.7 L863.9,370.3 L864.0,370.7 L864.2,366.8 L864.3,368.6 L864.5,365.6 L864.7,367.9 L864.8,363.7 L865.0,366.3 L865.4,361.4 L865.8,362.1 L866.3,358.1 L866.7,359.6 L867.1,353.0 L867.5,357.6 L867.9,355.2 L868.6,359.5 L869.2,353.7 L869.8,357.5 L870.4,357.6 L870.9,361.6 L871.0,359.4 L871.1,362.8 L871.2,361.4 L871.2,365.4 L871.3,364.8 L871.4,370.7 L871.4,366.7 L871.5,371.3 L871.6,369.9 L871.6,374.7 L871.7,372.7 L871.7,377.2 L871.8,375.5 L871.9,378.8 L871.9,377.1 L872.0,381.2 L872.1,380.0 L872.2,381.4 L872.2,379.5 L872.4,382.9 L872.4,380.5 L872.5,382.5 L872.6,378.5 L872.7,380.8 L872.8,377.7 L872.9,381.6 L873.0,373.7 L873.1,376.6 L873.3,372.8 L873.4,374.9 L873.5,371.0 L873.6,372.4 L873.7,367.7 L873.9,368.8 L874.0,366.1 L874.1,366.9 L874.2,363.2 L874.3,363.8 L874.5,360.8 L874.6,363.3 L874.7,358.6 L874.8,358.9 L874.9,356.2 L875.1,356.6 L875.2,353.9 L875.3,356.5 L876.0,350.0 L876.7,352.5 L877.4,349.5 L878.2,353.8 L878.6,351.4 L878.9,354.5 L879.3,352.7 L879.7,355.5 L880.0,355.3 L880.4,357.8 L880.8,354.4 L881.2,362.1 L881.6,359.8 L882.0,362.3 L882.3,361.4 L882.6,365.1 L883.5,363.2 L884.3,364.0 L885.0,361.9 L885.6,368.3 L885.6,366.1 L885.7,369.6 L885.7,366.8 L885.8,370.7 L885.8,369.2 L885.8,372.4 L885.9,370.4 L885.9,373.2 L886.0,372.7 L886.0,374.8 L886.0,372.2 L886.1,377.2 L886.1,376.3 L886.1,379.4 L886.2,377.9 L886.2,381.7 L886.2,380.7 L886.3,384.3 L886.3,383.0 L886.3,387.4 L886.3,382.9 L886.4,388.1 L886.4,387.1 L886.4,391.3 L886.5,390.0 L886.5,394.6 L886.5,391.9 L886.5,395.3 L886.6,394.6 L886.6,397.6 L886.6,396.7 L886.6,399.7 L886.7,398.4 L886.7,402.9 L886.7,401.1 L886.7,405.3 L886.8,403.9 L886.8,407.2 L886.8,405.2 L886.9,409.2 L886.9,404.6 L886.9,410.9 L886.9,409.3 L887.0,412.4 L887.0,411.3 L887.0,414.1 L887.1,410.7 L887.1,416.8 L887.2,415.7 L887.3,419.8 L887.4,418.3 L887.4,423.2 L887.5,420.8 L887.6,425.2 L887.6,423.6 L887.7,426.9 L887.8,425.7 L887.9,431.3 L887.9,425.6 L888.0,430.8 L888.1,429.2 L888.2,433.7 L888.2,430.9 L888.3,434.5 L888.4,433.1 L888.5,434.7 L888.5,432.5 L888.6,434.7 L888.7,431.9 L888.8,434.5 L888.9,431.1 L888.9,431.6 L889.0,428.1 L889.1,427.9 L889.3,424.4 L889.5,426.2 L889.7,421.3 L890.0,423.3 L890.8,420.6 L891.7,421.7 L892.8,419.3 L894.0,422.0 L895.0,418.5 L895.9,420.3 L896.3,417.0 L896.8,418.5 L897.1,415.7 L897.5,417.3 L897.8,412.9 L898.1,414.9 L898.3,411.5 L898.6,413.1 L898.8,409.7 L899.2,410.7 L899.4,408.8 L899.7,409.9 L899.9,406.5 L900.1,408.7 L900.3,403.8 L900.3,404.7 L900.4,402.5 L900.4,403.4 L900.5,400.5 L900.5,404.4 L900.5,398.3 L900.6,400.5 L900.6,393.5 L900.7,396.8 L900.7,393.4 L900.7,394.6 L900.8,391.2 L900.8,393.3 L900.8,389.2 L900.9,392.2 L900.9,386.9 L900.9,386.9 L901.0,384.3 L901.0,385.3 L901.1,381.7 L901.1,383.6 L901.2,379.6 L901.3,381.7 L901.3,378.1 L901.4,382.1 L901.5,373.0 L901.6,377.7 L901.7,375.3 L901.8,376.6 L902.7,372.5 L903.8,374.9 L905.0,375.3 L906.2,378.0 L906.9,375.5 L907.6,376.5 L908.3,373.2 L909.0,375.3 L909.8,370.7 L910.6,372.8 L911.4,370.1 L912.2,375.7 L913.0,372.0 L913.9,375.7 L914.7,375.2 L915.6,378.3 L916.5,375.3 L917.5,377.6 L918.4,376.2 L919.4,377.4 L920.4,375.6 L921.4,376.3 L922.4,373.8 L923.3,375.8 L924.3,372.2 L925.3,374.8 L926.3,371.2 L927.3,374.3 L928.2,371.6 L929.0,374.3 L929.7,372.4 L930.4,375.8 L931.2,374.2 L931.9,377.3 L932.6,372.9 L933.4,379.2 L934.1,376.4 L935.1,379.0 L936.1,373.9 L937.1,377.5 L938.0,374.2 L939.0,376.5 L940.0,374.8 L940.6,376.2 L941.2,375.1 L941.9,380.7 L942.5,377.2 L943.1,380.4 L943.7,378.4 L944.3,382.9 L944.9,381.5 L945.4,383.8 L945.9,382.4 L946.5,387.0 L947.0,386.1 L947.4,388.7 L947.8,387.3 L948.3,390.9 L948.8,389.4 L949.2,390.2 L949.6,388.1 L950.1,389.9 L950.5,383.8 L951.0,387.5 L951.5,383.1 L952.0,384.6 L952.6,380.2 L953.2,382.4 L953.9,378.9 L954.7,380.3 L955.5,378.0 L956.4,379.3 L957.3,375.8 L958.1,378.3 L959.0,375.4 L959.8,378.3 L960.6,373.4 L961.4,375.6 L962.2,372.7 L962.9,373.9 L963.6,369.9 L964.3,371.7 L965.0,368.9 L965.7,370.4 L966.5,368.1 L967.2,370.8 L968.0,368.4 L968.7,372.5 L969.5,367.4 L970.3,374.2 L971.0,372.5 L971.7,374.9 L972.4,374.1 L972.9,377.2 L973.4,373.4 L973.8,378.8 L974.3,378.6 L974.7,381.9 L975.1,380.9 L975.6,383.8 L976.2,382.8 L976.8,386.0 L977.7,382.7 L978.7,386.7 L979.8,383.9 L980.9,385.3 L982.0,382.0 L983.1,385.0 L984.1,381.7 L984.7,384.3 L985.3,380.1 L985.8,381.2 L986.4,378.7 L986.9,380.0 L987.4,376.3 L987.9,376.6 L988.4,373.7 L989.0,375.2 L989.5,372.5 L990.0,374.2 L991.0,369.5 L991.9,374.9 L992.8,369.2 L993.8,371.3 L994.8,368.7 L995.9,370.1 L996.9,367.4 L997.9,370.2 L999.0,366.2 L1000.1,368.2 L1001.2,365.6 L1002.2,368.2 L1003.2,364.9 L1004.1,367.9 L1004.8,366.0 L1005.6,369.3 L1006.4,367.4 L1007.1,371.0 L1007.8,369.7 L1008.5,372.8 L1009.1,371.8 L1009.8,373.9 L1010.4,373.3 L1010.9,376.0 L1011.4,375.0 L1012.0,377.5 L1012.7,376.0 L1013.5,378.6 L1014.2,377.4 L1015.1,380.8 L1015.9,379.6 L1016.9,382.7 L1017.8,379.8 L1018.8,384.1 L1019.8,381.9 L1020.7,385.3 L1021.6,382.6 L1022.4,387.6 L1023.7,383.8 L1024.8,385.4 L1025.9,383.0 L1027.0,386.0 L1028.2,382.6 L1028.9,384.7 L1029.6,381.4 L1030.3,383.7 L1031.1,379.0 L1031.8,381.0 L1032.6,378.6 L1033.3,380.5 L1034.1,373.5 L1034.8,378.3 L1035.6,376.0 L1036.7,378.4 L1037.7,375.7 L1038.8,378.1 L1039.9,375.9 L1040.9,379.7 L1042.0,376.5 L1042.9,379.5 L1043.6,376.8 L1044.3,377.8 L1044.9,375.1 L1045.5,377.0 L1046.1,372.3 L1046.7,375.2 L1047.3,370.8 L1048.0,372.2 L1048.8,369.8 L1049.8,371.8 L1050.8,369.4 L1051.9,370.8 L1053.1,368.9 L1054.2,371.2 L1055.4,369.0 L1056.5,370.7 L1057.6,368.1 L1058.6,370.8 L1059.7,367.1 L1060.7,368.4 L1061.7,366.0 L1062.8,368.3 L1063.7,364.7 L1064.7,366.7 L1065.6,363.3 L1066.5,368.1 L1066.9,362.9 L1067.2,371.6 L1067.6,367.7 L1067.9,370.0 L1068.3,369.9 L1068.6,373.2 L1068.9,371.0 L1069.2,374.6 L1069.5,374.3 L1069.8,378.6 L1070.1,376.3 L1070.4,380.6 L1070.7,379.8 L1071.0,381.8 L1071.3,380.6 L1071.6,383.6 L1072.0,382.6 L1072.4,385.5 L1073.2,383.8 L1074.2,386.3 L1075.2,382.3 L1076.3,384.2 L1077.3,381.7 L1078.3,382.9 L1079.2,379.0 L1080.0,380.3 L1081.1,378.1 L1082.1,381.2 L1082.9,375.5 L1083.7,377.3 L1084.6,374.9 L1085.3,378.5 L1085.9,377.8 L1086.6,381.0 L1087.2,376.7 L1087.9,383.1 L1088.5,381.7 L1089.2,383.8 L1089.6,380.7 L1090.0,385.4 L1090.4,379.5 L1090.9,379.9 L1091.3,376.4 L1091.7,377.3 L1092.1,373.0 L1092.5,375.4 L1093.0,371.4 L1093.4,373.8 L1093.8,368.7 L1094.4,376.2 L1094.9,371.5 L1095.5,376.3 L1096.1,374.7 L1096.7,378.3 L1097.2,378.2 L1097.8,380.8 L1098.4,375.6 L1098.8,381.1 L1099.3,377.6 L1099.7,379.2 L1100.1,375.3 L1100.6,376.7 L1101.0,373.5 L1101.5,375.4 L1102.0,370.5 L1102.5,373.3 L1103.0,368.7 L1103.9,371.3 L1105.0,367.2 L1106.0,370.7 L1107.1,367.3 L1108.2,370.8 L1109.1,368.2 L1110.4,369.5 L1111.6,367.0 L1112.7,370.4 L1113.7,368.7 L1113.9,373.2 L1114.2,371.6 L1114.4,374.9 L1114.6,373.1 L1114.8,378.5 L1115.0,375.8 L1115.2,379.6 L1115.4,379.0 L1115.6,383.1 L1115.8,381.4 L1116.0,384.8 L1116.2,383.9 L1116.4,388.5 L1116.6,385.4 L1116.8,387.8 L1116.9,384.4 L1117.1,386.7 L1117.3,382.7 L1117.4,385.2 L1117.6,381.9 L1117.7,382.8 L1117.9,378.9 L1118.0,380.6 L1118.2,375.8 L1118.3,377.2 L1118.5,373.3 L1118.7,374.1 L1118.9,370.1 L1119.1,372.9 L1119.3,369.1 L1119.6,370.1 L1119.8,367.4 L1120.4,370.2 L1121.0,368.1 L1121.6,371.9 L1122.3,370.1 L1123.0,374.9 L1123.7,373.3 L1124.4,377.0 L1125.2,375.9 L1126.0,380.0 L1126.7,375.6 L1127.6,378.1 L1128.4,375.1 L1129.3,378.5 L1130.1,372.4 L1131.0,373.8 L1131.9,370.6 L1132.8,373.0 L1133.6,369.8 L1134.6,370.7 L1135.6,368.1 L1136.6,370.7 L1137.6,367.1 L1138.6,369.3 L1139.6,365.8 L1140.5,369.2 L1141.3,367.1 L1142.1,369.6 L1142.7,364.9 L1143.3,372.4 L1143.8,370.3 L1144.4,373.2 L1145.1,371.7 L1145.9,374.6 L1146.7,372.1 L1147.6,375.6 L1148.6,370.8 L1149.6,373.3 L1150.6,369.0 L1151.7,371.2 L1152.6,367.7 L1153.5,369.8 L1154.5,367.9 L1155.4,372.0 L1156.3,370.0 L1157.2,373.0 L1158.1,371.6 L1158.9,377.0 L1159.7,373.0 L1160.3,374.1 L1160.9,370.6 L1161.5,371.6 L1162.1,367.8 L1162.6,369.6 L1163.1,366.6 L1163.7,367.3 L1164.3,364.3 L1164.8,367.8 L1165.5,366.2 L1166.1,369.4 L1166.7,368.1 L1167.3,370.9 L1167.9,369.9 L1168.4,373.9 L1168.8,370.7 L1169.1,375.4 L1169.2,374.9 L1169.3,377.4 L1169.4,375.6 L1169.5,380.3 L1169.6,380.1 L1169.6,384.2 L1169.7,382.2 L1169.8,386.0 L1169.9,383.7 L1170.0,387.4 L1170.2,383.6 L1170.4,389.1 L1170.8,386.8 L1171.3,387.7 L1171.9,383.8 L1172.5,384.8 L1173.1,381.2 L1173.8,382.8 L1174.4,379.1 L1175.0,380.4 L1175.6,376.6 L1176.3,382.5 L1176.9,381.7 L1177.6,386.0 L1178.3,384.2 L1178.9,387.4 L1179.6,384.5 L1179.8,389.5 L1180.1,384.2 L1180.4,385.0 L1180.6,382.2 L1180.9,383.1 L1181.2,379.6 L1181.4,382.5 L1181.7,377.9 L1182.0,378.3 L1182.2,375.9 L1182.5,377.1 L1182.7,371.4 L1183.0,373.7 L1183.2,369.6 L1183.5,372.3 L1183.7,367.8 L1183.9,370.2 L1184.2,366.9 L1184.6,367.1 L1185.0,363.0 L1185.4,364.6 L1185.8,359.9 L1186.1,363.1 L1186.5,358.2 L1186.9,360.8 L1187.2,358.6 L1187.4,361.0 L1187.6,359.0 L1187.7,365.5 L1187.9,361.3 L1188.0,365.5 L1188.2,364.2 L1188.3,366.8 L1188.5,366.2 L1188.7,369.9 L1188.8,368.4 L1189.0,371.7 L1189.2,370.5 L1189.4,377.7 L1189.6,373.6 L1189.8,377.2 L1190.0,374.2 L1190.3,377.5 L1191.1,373.4 L1192.1,379.3 L1193.2,377.1 L1194.3,379.1 L1195.4,374.5 L1196.4,377.2 L1197.4,375.7 L1198.5,377.8 L1199.5,375.4 L1200.5,376.7 L1201.5,374.4 L1202.5,376.0 L1203.6,371.6 L1204.6,376.5 L1205.6,371.7 L1206.6,377.7 L1207.7,375.3 L1208.7,377.8 L1209.7,375.9 L1210.7,378.9 L1211.7,377.3 L1212.8,380.1 L1213.8,378.1 L1214.8,378.7 L1215.4,376.9 L1215.9,377.9 L1216.5,374.4 L1217.0,377.0 L1217.6,372.2 L1218.1,374.9 L1218.7,370.6 L1219.3,373.7 L1219.8,368.5 L1220.4,371.4 L1220.9,368.2 L1222.0,369.3 L1223.0,367.5 L1224.1,371.3 L1225.1,369.1 L1226.1,370.8 L1227.1,369.6 L1228.3,371.3 L1229.5,368.6 L1230.5,370.6 L1231.7,366.7 L1232.0,372.7 L1232.4,370.8 L1232.7,374.6 L1233.1,372.9 L1233.5,375.3 L1233.9,374.0 L1234.2,378.2 L1234.6,376.0 L1234.9,379.3 L1235.3,378.3 L1235.6,381.4 L1235.9,380.8 L1236.2,384.1 L1236.6,382.0 L1236.9,386.5 L1237.2,385.2 L1237.4,387.7 L1237.7,386.0 L1238.0,388.8 L1238.2,387.8 L1238.5,391.8 L1238.7,390.1 L1238.9,393.9 L1239.1,393.1 L1239.3,396.2 L1239.4,393.8 L1239.5,397.5 L1239.6,396.3 L1239.7,399.7 L1239.7,399.4 L1239.8,402.3 L1239.8,401.0 L1239.9,404.6 L1240.0,402.3 L1240.0,407.6 L1240.1,407.3 L1240.1,409.8 L1240.2,409.3 L1240.2,412.0 L1240.3,409.0 L1240.3,415.2 L1240.4,413.2 L1240.4,417.3 L1240.5,415.0 L1240.6,419.0 L1240.7,417.0 L1240.7,419.5 L1240.8,416.4 L1241.0,420.0 L1241.1,414.8 L1241.3,417.8 L1241.5,414.3 L1241.6,416.6 L1241.8,413.4 L1242.0,413.8 L1242.2,409.2 L1242.4,410.2 L1242.6,407.1 L1242.8,407.9 L1243.0,404.6 L1243.2,404.7 L1243.3,402.5 L1243.5,404.2 L1243.7,400.4 L1243.9,401.7 L1244.2,399.4 L1244.4,402.8 L1244.7,402.3 L1244.9,405.8 L1245.2,405.5 L1245.4,409.0 L1245.7,409.3 L1246.0,412.0 L1246.2,411.9 L1246.5,414.5 L1246.7,411.9 L1247.0,413.9 L1247.1,412.5 L1247.2,414.2 L1247.3,410.3 L1247.4,412.1 L1247.5,407.8 L1247.6,410.2 L1247.7,406.4 L1247.8,407.8 L1247.9,403.3 L1248.0,405.5 L1248.1,401.6 L1248.3,402.7 L1248.4,396.9 L1248.5,399.6 L1248.6,395.3 L1248.7,397.2 L1248.8,392.0 L1248.9,394.0 L1249.0,391.0 L1249.1,391.4 L1249.3,388.5 L1249.4,388.8 L1249.5,385.9 L1249.6,387.5 L1249.8,385.0 L1249.9,387.5 L1250.0,385.1 L1250.2,387.3 L1250.4,385.1 L1250.5,388.1 L1250.7,386.2 L1250.9,389.8 L1251.1,388.3 L1251.3,391.1 L1251.5,390.9 L1251.6,394.2 L1251.8,392.9 L1252.0,396.9 L1252.2,396.7 L1252.4,400.8 L1252.6,396.9 L1252.8,403.5 L1253.0,402.3 L1253.2,405.9 L1253.4,404.8 L1253.6,410.1 L1253.8,407.3 L1254.0,411.0 L1254.2,407.0 L1254.4,414.1 L1254.6,408.2 L1254.9,411.9 L1255.1,408.6 L1255.4,411.6 L1255.7,408.2 L1255.9,408.8 L1256.2,406.4 L1256.4,406.6 L1256.7,403.9 L1256.9,404.1 L1257.2,401.3 L1257.4,402.2 L1257.7,397.1 L1258.0,399.5 L1258.2,395.4 L1258.5,396.3 L1258.7,393.3 L1259.0,397.2 L1259.2,390.7 L1259.9,393.7 L1260.5,387.7 L1261.1,388.4 L1261.7,385.8 L1262.4,387.1 L1263.1,381.6 L1263.8,387.2 L1264.3,385.2 L1264.9,388.0 L1265.4,386.9 L1266.0,389.4 L1266.6,389.6 L1267.2,393.8 L1267.8,391.5 L1268.3,395.2 L1268.9,392.8 L1269.4,395.8 L1270.0,392.1 L1270.5,396.9 L1270.9,393.0 L1271.3,395.9 L1271.8,391.7 L1272.2,392.7 L1272.6,386.5 L1273.0,390.9 L1273.5,386.5 L1274.0,388.6 L1274.5,384.6 L1275.3,385.5 L1276.1,383.3 L1277.0,384.4 L1277.9,379.4 L1278.8,382.1 L1279.8,378.3 L1280.7,380.6 L1281.5,378.4 L1282.2,380.5 L1282.6,376.5 L1283.0,382.0 L1283.3,380.4 L1283.7,384.2 L1284.0,381.8 L1284.3,385.4 L1284.6,385.0 L1284.8,387.7 L1285.1,386.8 L1285.4,390.9 L1285.7,389.8 L1285.9,393.4 L1286.2,391.0 L1286.5,395.0 L1286.8,393.7 L1287.1,397.2 L1287.5,396.5 L1287.8,402.9 L1288.2,399.8 L1288.5,402.1 L1288.9,402.3 L1289.2,406.4 L1289.5,405.0 L1289.9,408.1 L1290.2,405.7 L1290.5,409.4 L1290.8,407.3 L1291.1,410.3 L1291.4,407.1 L1291.6,410.0 L1291.7,407.4 L1291.8,408.8 L1292.0,405.5 L1292.1,407.3 L1292.2,403.5 L1292.3,404.6 L1292.5,401.6 L1292.6,402.2 L1292.7,399.2 L1292.8,399.8 L1292.9,396.4 L1293.0,397.6 L1293.1,392.0 L1293.2,393.8 L1293.4,391.2 L1293.5,392.0 L1293.6,388.3 L1293.8,391.8 L1293.9,386.9 L1294.1,388.2 L1294.3,385.5 L1294.5,386.9 L1295.2,384.4 L1295.9,386.2 L1296.8,384.5 L1297.7,389.0 L1298.6,387.8 L1299.6,391.7 L1300.6,388.7 L1301.5,392.8 L1302.4,389.4 L1303.3,391.5 L1304.3,387.7 L1305.3,390.5 L1306.3,386.6 L1307.3,388.6 L1308.2,384.3 L1309.4,391.7 L1310.5,385.6 L1311.6,389.0 L1312.7,386.1 L1313.8,389.3 L1314.9,387.5 L1315.9,389.8 L1316.5,388.9 L1317.1,392.1 L1317.7,390.7 L1318.3,392.9 L1318.9,392.4 L1319.4,396.3 L1320.0,394.5 L1320.5,398.3 L1321.0,397.0 L1321.4,399.6 L1321.7,398.4 L1322.0,400.4" fill="none" stroke="#d8d8d8" stroke-opacity="0.55" stroke-width="0.8" stroke-linejoin="round"/><path d="M386.3,437.5 L386.4,439.7 L386.5,438.4 L386.6,441.8 L386.7,439.7 L386.9,443.9 L387.0,441.4 L387.1,445.6 L387.3,443.7 L387.5,447.8 L387.6,447.0 L387.8,449.1 L388.0,448.1 L388.2,452.6 L388.4,451.6 L388.6,454.0 L388.7,453.0 L388.9,456.2 L389.1,455.4 L389.3,458.5 L389.5,457.0 L389.6,460.4 L389.8,459.5 L390.0,463.0 L390.3,461.8 L390.5,464.7 L390.8,463.2 L391.0,466.2 L391.2,464.2 L391.5,467.6 L391.7,466.5 L392.0,469.6 L392.2,468.1 L392.5,470.4 L392.7,469.7 L393.0,474.2 L393.3,472.9 L393.4,476.2 L393.5,474.6 L393.6,478.1 L393.7,476.1 L393.8,479.8 L393.9,479.3 L394.0,482.2 L394.1,481.4 L394.2,485.3 L394.3,484.2 L394.4,486.7 L394.5,484.4 L394.6,489.8 L394.7,489.8 L394.8,492.6 L394.9,492.7 L395.0,496.1 L395.1,494.9 L395.2,499.6 L395.4,495.3 L395.5,501.9 L395.6,500.5 L395.7,504.8 L395.8,503.1 L395.9,506.6 L396.0,506.0 L396.1,510.1 L396.2,508.0 L396.4,511.6 L396.5,510.7 L396.6,514.9 L396.7,512.8 L396.8,516.7 L396.9,515.1 L397.0,517.9 L397.1,516.6 L397.2,518.3 L397.4,516.4 L397.5,519.2 L397.6,517.4 L397.7,519.5 L397.8,518.4 L397.9,520.0 L398.0,518.1 L398.1,519.4 L398.1,515.6 L398.2,519.4 L398.3,517.2 L398.3,519.0 L398.4,515.0 L398.5,517.1 L398.6,514.2 L398.6,516.3 L398.7,512.8 L398.8,514.0 L398.8,511.3 L398.9,513.3 L399.0,509.6 L399.0,510.4 L399.1,508.3 L399.2,509.8 L399.3,505.2 L399.3,509.4 L399.4,503.6 L399.5,505.2 L399.5,500.8 L399.6,502.8 L399.7,498.0 L399.7,500.4 L399.8,495.5 L399.9,497.9 L400.0,493.0 L400.0,495.4 L400.1,490.4 L400.2,491.8 L400.2,487.7 L400.3,489.4 L400.4,485.6 L400.4,486.9 L400.5,483.2 L400.6,484.6 L400.7,479.7 L400.7,481.2 L400.8,477.2 L400.9,478.1 L400.9,474.2 L401.0,476.4 L401.1,472.5 L401.1,473.3 L401.2,470.4 L401.3,470.3 L401.3,467.2 L401.4,468.2 L401.5,465.4 L401.5,465.5 L401.6,462.8 L401.7,462.9 L401.7,459.4 L401.8,461.7 L401.9,457.7 L401.9,460.7 L402.0,455.5 L402.0,458.1 L402.1,453.8 L402.2,456.7 L402.2,453.5 L402.3,454.5 L402.3,451.4 L402.4,452.3 L402.5,448.2 L402.5,452.6 L402.6,448.5 L403.1,448.1 L403.5,444.0 L404.0,446.0 L404.4,443.3 L404.8,447.6 L405.2,448.2 L405.6,453.9 L406.0,455.9 L406.0,460.3 L406.1,455.9 L406.1,462.0 L406.1,459.4 L406.2,463.7 L406.2,458.1 L406.2,465.4 L406.2,461.4 L406.3,466.2 L406.3,464.1 L406.3,467.2 L406.3,466.6 L406.4,469.2 L406.4,467.6 L406.4,471.2 L406.4,470.3 L406.5,474.3 L406.5,472.5 L406.5,475.8 L406.5,475.0 L406.6,480.6 L406.6,477.7 L406.6,480.3 L406.6,478.8 L406.6,483.5 L406.7,482.3 L406.7,484.8 L406.7,484.7 L406.7,487.7 L406.8,486.8 L406.8,490.6 L406.8,489.1 L406.8,493.8 L406.8,492.0 L406.9,495.1 L406.9,493.5 L406.9,501.4 L406.9,497.4 L406.9,500.9 L407.0,499.2 L407.0,504.0 L407.0,503.0 L407.0,506.3 L407.0,505.6 L407.1,508.5 L407.1,506.0 L407.1,511.4 L407.1,509.5 L407.1,514.2 L407.2,513.2 L407.2,517.5 L407.2,515.8 L407.2,519.8 L407.3,518.3 L407.3,521.9 L407.3,521.4 L407.3,524.8 L407.3,521.3 L407.4,526.5 L407.4,525.7 L407.4,528.8 L407.4,528.4 L407.5,530.5 L407.5,530.1 L407.5,533.7 L407.6,532.8 L407.6,535.8 L407.6,533.3 L407.6,537.2 L407.7,536.6 L407.7,538.7 L407.7,537.6 L407.8,540.5 L407.8,538.7 L407.8,543.0 L407.9,540.5 L407.9,547.2 L407.9,543.1 L408.0,544.8 L408.0,543.0 L408.0,547.2 L408.1,542.2 L408.1,548.4 L408.2,546.2 L408.2,548.2 L408.2,546.6 L408.3,550.1 L408.3,547.4 L408.4,549.1 L408.4,547.3 L408.5,550.7 L408.6,547.8 L408.6,551.0 L408.7,547.5 L408.8,550.1 L408.9,546.8 L409.0,551.0 L409.0,547.5 L409.1,549.0 L409.2,545.3 L409.3,547.2 L409.4,541.8 L409.5,546.2 L409.6,542.1 L409.7,544.5 L409.8,541.3 L409.9,542.7 L410.0,537.7 L410.1,540.2 L410.2,536.0 L410.3,537.9 L410.4,533.6 L410.5,536.0 L410.6,529.9 L410.7,532.4 L410.8,529.3 L410.9,530.3 L411.1,526.0 L411.2,527.5 L411.3,522.5 L411.4,523.8 L411.5,519.9 L411.6,521.9 L411.7,517.6 L411.8,518.8 L411.9,515.0 L412.0,515.6 L412.2,511.6 L412.3,512.8 L412.4,508.8 L412.5,509.5 L412.6,505.7 L412.7,507.1 L412.8,503.2 L412.9,503.7 L413.0,500.6 L413.1,501.9 L413.2,499.1 L413.3,499.7 L413.4,496.9 L413.5,498.3 L413.6,493.6 L413.7,496.0 L413.8,493.1 L413.9,493.5 L414.0,491.5 L414.1,493.3 L414.2,488.1 L414.9,488.9 L415.5,483.9 L416.1,485.8 L416.7,482.9 L417.3,484.7 L417.8,482.5 L418.4,485.6 L418.9,480.5 L419.8,485.5 L420.7,483.8 L421.5,487.7 L422.4,485.4 L422.7,487.4 L423.0,483.1 L423.3,485.3 L423.7,481.2 L424.0,482.4 L424.4,478.9 L424.7,479.1 L425.1,476.4 L425.4,477.3 L425.7,473.1 L426.1,475.7 L426.4,471.2 L426.7,473.5 L427.0,470.7 L427.3,474.2 L427.6,472.5 L428.0,477.4 L428.2,473.7 L428.5,477.6 L428.8,477.1 L429.1,480.3 L429.4,476.8 L429.7,482.7 L429.9,482.5 L430.2,485.8 L430.5,483.2 L430.8,485.0 L431.0,482.4 L431.3,482.8 L431.6,479.6 L431.8,480.8 L432.1,477.3 L432.4,478.9 L432.7,474.0 L432.9,476.2 L433.2,472.7 L433.5,473.1 L433.7,469.9 L434.0,474.7 L434.5,470.4 L435.0,473.7 L435.6,472.8 L436.1,476.2 L436.6,475.9 L437.1,478.9 L437.5,476.1 L437.8,478.1 L438.1,474.4 L438.4,475.0 L438.6,470.0 L438.9,473.2 L439.2,467.1 L439.5,469.6 L439.8,468.9 L439.9,471.1 L439.9,469.7 L440.0,472.4 L440.0,471.6 L440.1,474.3 L440.2,472.5 L440.2,475.2 L440.3,473.6 L440.4,477.4 L440.4,476.5 L440.5,479.7 L440.6,478.7 L440.7,482.7 L440.7,481.2 L440.8,484.7 L440.9,483.3 L440.9,486.5 L441.0,485.3 L441.1,488.7 L441.2,489.0 L441.3,491.3 L441.3,491.4 L441.4,493.9 L441.5,492.9 L441.6,497.3 L441.6,495.9 L441.7,499.9 L441.8,498.5 L441.9,503.4 L441.9,501.9 L442.0,506.1 L442.1,504.5 L442.2,510.4 L442.2,506.2 L442.3,510.8 L442.4,508.0 L442.5,512.3 L442.5,511.6 L442.6,515.1 L442.7,513.7 L442.7,517.3 L442.8,515.6 L442.8,518.0 L442.9,515.8 L443.0,520.0 L443.0,518.2 L443.1,521.5 L443.1,518.3 L443.2,522.3 L443.2,519.0 L443.3,522.6 L443.4,520.6 L443.5,522.3 L443.5,520.3 L443.6,523.0 L443.7,518.7 L443.8,521.6 L443.8,515.7 L443.9,521.3 L444.0,515.7 L444.0,516.9 L444.1,513.0 L444.1,514.3 L444.2,510.7 L444.2,511.0 L444.3,508.3 L444.3,508.4 L444.4,504.2 L444.4,505.5 L444.4,502.0 L444.5,502.4 L444.5,499.1 L444.5,499.6 L444.6,496.0 L444.6,497.8 L444.6,491.2 L444.7,495.7 L444.7,492.6 L444.7,494.2 L444.7,495.6 L445.6,512.6 L446.5,497.8 L447.4,510.2 L448.3,495.4 L449.2,505.2 L450.1,494.6 L451.0,506.5 L451.9,491.3 L452.8,505.0 L453.7,493.3 L454.6,502.5 L455.5,490.2 L456.4,503.2 L457.3,487.4 L458.2,502.3 L459.1,488.4 L460.0,498.2 L460.9,486.9 L461.8,495.8 L462.7,489.1 L463.6,497.5 L463.8,490.5 L463.9,492.3 L463.9,489.3 L463.9,490.5 L463.9,487.5 L464.0,491.0 L464.0,485.4 L464.1,485.4 L464.1,482.6 L464.2,482.9 L464.2,479.8 L464.2,482.5 L464.3,477.6 L464.3,479.7 L464.4,474.7 L464.5,474.7 L464.5,471.9 L464.6,472.9 L464.6,466.6 L464.7,470.3 L464.8,466.7 L464.8,468.5 L464.9,464.8 L465.0,466.0 L465.1,463.6 L465.1,465.4 L465.2,459.8 L465.3,465.2 L465.4,463.0 L465.5,465.7 L465.6,463.5 L465.7,466.5 L465.8,464.2 L466.0,467.7 L466.1,467.2 L466.2,471.5 L466.3,470.8 L466.5,474.6 L466.6,471.7 L466.7,477.4 L466.9,475.5 L467.0,480.8 L467.2,479.5 L467.3,482.6 L467.4,481.2 L467.6,485.2 L467.7,484.6 L467.8,487.2 L468.0,485.7 L468.1,487.9 L468.2,486.5 L468.4,487.3 L468.5,485.8 L468.6,487.1 L468.7,481.9 L468.8,485.4 L469.0,481.1 L469.1,483.5 L469.2,479.0 L469.3,480.4 L469.4,475.6 L469.6,477.8 L469.7,473.7 L469.8,474.3 L469.9,470.3 L470.0,470.3 L470.2,467.8 L470.3,467.8 L470.4,464.8 L470.6,466.6 L470.7,462.4 L470.9,465.7 L471.0,462.6 L471.2,464.2 L471.3,462.7 L471.5,465.2 L471.6,462.7 L471.8,466.0 L472.0,464.9 L472.1,469.2 L472.3,467.2 L472.5,470.1 L472.7,469.8 L472.8,473.7 L473.0,472.3 L473.2,476.7 L473.4,475.7 L473.6,479.0 L473.7,478.7 L473.9,483.0 L474.1,481.0 L474.3,484.9 L474.5,483.4 L474.6,489.5 L474.8,485.7 L475.0,489.4 L475.1,487.2 L475.3,490.4 L475.4,485.9 L475.6,491.7 L475.7,486.6 L475.9,490.7 L476.0,487.6 L476.2,489.1 L476.3,485.7 L476.4,486.6 L476.5,483.7 L476.7,485.3 L476.8,479.1 L476.9,482.1 L477.0,476.9 L477.1,478.0 L477.2,474.4 L477.3,475.9 L477.5,472.0 L477.6,471.8 L477.7,468.8 L477.8,470.5 L477.9,466.1 L478.1,469.2 L478.2,464.9 L478.4,467.8 L478.5,464.4 L478.6,468.1 L478.8,466.3 L478.9,469.2 L479.0,466.2 L479.2,469.3 L479.3,467.5 L479.5,473.3 L479.6,469.7 L479.8,473.4 L479.9,471.5 L480.1,475.6 L480.3,475.2 L480.4,478.6 L480.6,477.1 L480.8,481.3 L480.9,480.2 L481.1,483.8 L481.2,482.2 L481.4,487.0 L481.5,484.8 L481.7,489.1 L481.8,488.8 L482.0,491.5 L482.1,490.6 L482.2,494.3 L482.4,492.0 L482.5,498.0 L482.6,494.6 L482.7,497.8 L482.8,496.9 L482.9,499.1 L482.9,496.8 L482.9,488.4 L483.8,500.8 L484.7,487.4 L485.6,498.5 L486.5,487.5 L487.4,495.4 L488.3,485.7 L489.2,496.3 L490.1,486.4 L491.0,495.7 L491.9,486.5 L492.8,494.1 L493.7,485.0 L494.6,492.4 L495.5,484.9 L496.4,491.7 L497.3,481.7 L498.2,493.0 L499.1,483.6 L500.0,491.4 L500.9,480.4 L501.8,490.0 L502.7,482.0 L503.6,490.6 L504.5,479.5 L505.4,489.2 L506.3,478.4 L506.5,485.8 L506.5,482.2 L506.6,484.4 L506.7,480.0 L506.7,482.9 L506.8,479.1 L506.9,479.8 L507.0,475.7 L507.1,477.7 L507.2,474.3 L507.3,475.2 L507.4,471.3 L507.5,472.1 L507.7,468.0 L507.8,469.3 L507.9,465.2 L508.0,466.2 L508.2,463.1 L508.3,463.4 L508.4,460.7 L508.6,462.9 L508.7,458.6 L508.8,459.7 L509.0,457.1 L509.1,459.2 L509.3,455.9 L509.4,458.1 L509.5,455.8 L509.7,459.8 L509.8,458.0 L509.9,461.0 L510.1,458.8 L510.2,462.4 L510.4,461.5 L510.5,464.6 L510.7,462.9 L510.8,466.5 L511.0,466.8 L511.1,469.9 L511.3,468.9 L511.4,472.1 L511.6,471.2 L511.8,475.5 L511.9,474.6 L512.1,478.9 L512.2,477.1 L512.4,481.8 L512.6,480.3 L512.7,485.1 L512.9,482.7 L513.0,486.5 L513.2,484.1 L513.4,487.5 L513.5,485.1 L513.7,488.2 L513.8,485.6 L514.0,488.6 L514.2,485.0 L514.3,488.1 L514.5,482.5 L514.7,485.8 L514.8,482.8 L515.0,484.1 L515.2,480.5 L515.4,480.8 L515.5,477.6 L515.7,479.8 L515.9,473.3 L516.0,475.3 L516.2,471.7 L516.4,475.7 L516.5,468.5 L516.7,472.5 L516.9,466.7 L517.0,467.2 L517.2,464.3 L517.4,464.2 L517.6,461.9 L517.7,463.6 L517.9,459.4 L518.1,461.4 L518.2,458.9 L518.5,462.4 L518.7,459.0 L519.0,462.5 L519.2,460.4 L519.5,463.8 L519.8,461.6 L520.0,465.3 L520.3,464.3 L520.5,468.1 L520.8,467.6 L521.0,472.2 L521.3,469.0 L521.5,476.7 L521.8,472.0 L522.0,475.4 L522.2,474.9 L522.4,478.5 L522.6,477.7 L522.9,481.3 L523.1,479.5 L523.3,483.7 L523.6,481.0 L523.7,486.3 L523.9,486.2 L524.1,491.7 L524.3,487.7 L524.5,492.0 L524.7,490.7 L524.9,493.2 L525.1,491.5 L525.3,494.7 L525.6,491.6 L525.8,493.8 L525.9,490.2 L526.1,493.1 L526.3,489.6 L526.4,490.5 L526.6,487.0 L526.8,488.8 L527.0,484.5 L527.2,485.8 L527.4,483.0 L527.6,482.9 L527.8,479.1 L528.0,480.0 L528.2,476.1 L528.4,478.6 L528.6,474.2 L528.8,477.3 L529.0,472.4 L529.2,473.8 L529.4,469.4 L529.6,471.2 L529.8,467.0 L530.0,471.0 L530.5,465.5 L531.0,471.4 L531.4,470.1 L531.9,474.3 L532.4,473.7 L532.8,478.0 L533.3,476.4 L533.9,479.5 L534.4,477.6 L534.6,481.7 L534.9,475.2 L535.1,477.3 L535.3,474.9 L535.6,475.1 L535.8,472.7 L536.1,472.6 L536.3,468.7 L536.6,470.2 L536.8,466.3 L537.1,467.6 L537.4,461.2 L537.6,464.4 L537.9,461.2 L538.1,461.2 L538.4,457.3 L538.6,459.6 L538.9,455.4 L539.1,456.9 L539.4,454.1 L539.6,456.3 L539.9,453.1 L540.1,455.4 L540.3,453.5 L540.4,456.1 L540.6,453.5 L540.7,457.5 L540.8,455.2 L540.9,458.7 L541.1,456.9 L541.2,460.2 L541.3,458.3 L541.4,465.2 L541.6,461.7 L541.7,465.3 L541.8,463.2 L541.9,466.2 L542.0,465.8 L542.1,470.0 L542.3,469.0 L542.4,473.0 L542.5,471.4 L542.6,475.7 L542.7,474.7 L542.8,478.1 L542.9,477.9 L543.0,480.4 L543.1,479.9 L543.3,484.1 L543.4,483.2 L543.5,486.7 L543.6,484.5 L543.7,488.8 L543.8,486.9 L543.9,490.0 L544.0,488.3 L544.1,492.5 L544.2,489.7 L544.4,493.6 L544.5,491.8 L544.6,493.8 L544.7,492.0 L544.9,493.6 L545.0,492.1 L545.2,496.3 L545.3,490.3 L545.5,492.0 L545.6,489.3 L545.8,490.9 L545.9,487.3 L546.1,488.1 L546.2,485.9 L546.4,486.0 L546.5,481.9 L546.7,482.9 L546.8,479.0 L547.0,480.4 L547.1,476.7 L547.3,477.4 L547.4,474.6 L547.6,475.5 L547.7,470.9 L547.9,472.3 L548.1,468.5 L548.2,469.3 L548.4,466.0 L548.5,466.9 L548.7,464.4 L548.8,465.1 L549.0,463.3 L549.1,465.4 L549.8,461.5 L550.4,463.8 L551.1,460.8 L551.7,464.0 L552.4,463.6 L553.0,468.9 L553.5,468.7 L553.7,470.9 L553.8,469.1 L553.9,473.6 L554.0,470.9 L554.1,474.6 L554.2,474.6 L554.3,477.2 L554.4,476.0 L554.5,480.9 L554.6,479.0 L554.7,484.5 L554.8,481.8 L554.9,486.4 L555.0,484.7 L555.0,489.0 L555.1,486.1 L555.2,492.0 L555.3,489.8 L555.4,493.0 L555.5,491.9 L555.6,495.3 L555.7,493.0 L555.8,498.0 L555.9,496.4 L556.0,498.4 L556.1,496.9 L556.2,500.4 L556.3,497.0 L556.5,499.9 L556.6,496.3 L556.7,500.3 L556.8,497.5 L556.9,498.3 L557.0,495.3 L557.1,497.2 L557.2,491.6 L557.3,495.2 L557.4,492.1 L557.5,493.7 L557.6,490.3 L557.8,491.1 L557.9,485.5 L558.0,489.4 L558.1,486.3 L558.2,486.0 L558.3,482.7 L558.5,484.3 L558.6,480.4 L558.7,481.3 L558.8,477.6 L559.0,481.8 L559.1,474.7 L559.2,475.7 L559.4,471.8 L559.5,476.1 L559.6,470.2 L559.8,470.4 L559.9,467.3 L560.1,469.5 L560.2,466.3 L560.4,469.4 L560.6,463.0 L560.7,465.9 L560.9,461.2 L561.4,463.2 L562.1,456.9 L562.7,459.4 L563.4,455.1 L564.1,456.7 L564.8,453.2 L565.5,456.7 L566.3,452.3 L566.9,455.3 L567.6,452.9 L568.2,455.3 L568.5,454.1 L568.7,456.7 L568.9,453.5 L569.1,458.0 L569.3,457.0 L569.5,459.0 L569.8,457.8 L570.0,460.7 L570.2,460.1 L570.4,463.8 L570.6,462.8 L570.8,465.7 L571.0,463.6 L571.2,467.8 L571.4,465.1 L571.6,471.0 L571.8,468.4 L572.0,472.3 L572.1,471.9 L572.3,475.8 L572.5,474.2 L572.7,477.4 L572.9,476.4 L573.1,480.1 L573.3,479.2 L573.5,482.6 L573.7,480.6 L573.9,484.4 L574.1,482.8 L574.3,486.7 L574.6,485.2 L574.8,487.8 L575.0,487.0 L575.3,490.1 L575.5,490.2 L575.8,493.7 L576.0,492.1 L576.3,495.7 L576.6,493.7 L576.8,497.9 L577.1,496.0 L577.3,500.4 L577.5,499.3 L577.8,501.5 L578.0,500.4 L578.3,503.5 L578.5,502.4 L578.7,505.8 L578.9,504.1 L579.1,508.0 L579.3,506.9 L579.4,509.7 L579.6,507.2 L579.8,510.7 L579.9,509.4 L580.0,512.5 L580.0,491.7 L580.9,505.8 L581.8,493.7 L582.7,506.8 L583.6,491.7 L584.5,502.5 L585.4,492.4 L586.3,503.2 L587.2,485.9 L588.1,500.4 L589.0,487.5 L589.9,502.0 L590.8,486.7 L591.7,503.3 L592.6,484.3 L593.5,500.7 L594.4,486.7 L595.3,500.8 L596.2,486.3 L597.1,498.8 L598.0,484.8 L598.9,495.2 L599.8,479.9 L600.6,487.5 L600.6,490.7 L600.7,485.5 L600.7,487.1 L600.8,485.0 L600.9,485.2 L600.9,482.5 L601.0,483.6 L601.1,479.2 L601.2,481.3 L601.3,477.1 L601.4,478.8 L601.4,473.9 L601.5,476.0 L601.6,472.1 L601.7,472.2 L601.8,467.8 L601.9,469.5 L602.0,466.9 L602.1,467.4 L602.2,463.7 L602.3,464.4 L602.4,460.6 L602.5,462.4 L602.6,458.7 L602.8,460.0 L602.9,456.5 L603.0,457.9 L603.1,454.9 L603.2,457.0 L603.3,451.4 L603.3,456.3 L603.4,454.2 L603.5,455.4 L603.6,452.8 L603.7,456.3 L603.8,453.5 L603.8,460.4 L603.9,455.8 L604.0,458.5 L604.1,457.3 L604.1,461.3 L604.2,460.0 L604.3,462.7 L604.4,461.6 L604.4,465.1 L604.5,465.1 L604.6,468.2 L604.6,466.5 L604.7,471.1 L604.8,468.7 L604.9,474.1 L604.9,473.0 L605.0,476.4 L605.1,476.2 L605.2,479.6 L605.2,479.6 L605.3,483.3 L605.4,481.2 L605.5,485.5 L605.6,483.1 L605.7,486.6 L605.8,486.2 L605.9,488.9 L606.0,487.6 L606.1,490.3 L606.2,487.8 L606.3,491.2 L606.5,487.0 L606.6,491.6 L606.8,489.2 L607.0,490.3 L607.2,487.4 L607.4,488.8 L607.6,485.6 L607.8,488.0 L608.0,484.7 L608.3,485.9 L608.5,480.9 L608.7,484.1 L609.0,476.4 L609.2,480.0 L609.4,474.2 L609.7,478.0 L609.9,472.1 L610.1,472.9 L610.4,469.7 L610.6,470.6 L610.8,465.2 L611.0,469.7 L611.2,462.5 L611.4,466.3 L611.6,463.0 L611.8,463.4 L612.0,460.3 L612.1,462.3 L612.2,459.9 L612.4,462.1 L612.5,458.2 L612.6,461.2 L612.7,460.9 L612.7,463.7 L612.8,462.5 L612.8,466.3 L612.8,462.8 L612.8,468.2 L612.8,467.8 L612.7,471.4 L612.7,470.2 L612.7,476.4 L612.7,473.4 L612.7,477.8 L612.6,477.4 L612.7,480.5 L612.7,479.6 L612.8,482.3 L612.8,479.8 L612.9,481.7 L613.1,479.2 L613.2,482.3 L613.3,479.2 L613.5,480.5 L613.7,477.2 L613.9,478.8 L614.0,474.6 L614.3,474.9 L614.5,471.8 L614.7,472.9 L614.9,469.3 L615.1,469.6 L615.3,465.2 L615.6,466.3 L615.8,462.3 L616.0,465.9 L616.2,460.1 L616.4,461.1 L616.6,458.3 L616.8,459.8 L617.0,457.3 L617.2,460.0 L617.4,455.8 L617.5,458.8 L617.6,456.5 L617.8,459.3 L617.9,458.1 L618.1,460.9 L618.2,459.0 L618.3,462.9 L618.5,462.2 L618.6,465.8 L618.7,464.1 L618.9,467.3 L619.0,464.8 L619.1,471.0 L619.2,469.4 L619.3,475.7 L619.4,472.1 L619.6,475.9 L619.7,474.5 L619.8,478.8 L619.8,477.7 L619.9,480.8 L620.0,480.2 L620.1,482.5 L620.2,481.0 L620.2,484.8 L620.3,482.7 L620.3,481.7 L621.2,493.7 L622.1,483.3 L623.0,492.5 L623.9,481.6 L624.8,491.8 L625.7,482.9 L626.6,492.5 L627.5,483.0 L628.4,490.2 L629.3,481.7 L630.2,489.1 L631.1,481.7 L632.0,490.0 L632.9,481.1 L633.8,486.9 L634.7,479.0 L635.6,487.7 L636.5,478.7 L637.4,489.1 L638.3,477.9 L639.2,488.4 L640.1,479.1 L641.0,485.9 L641.9,479.2 L642.8,485.4 L643.7,478.7 L643.8,483.6 L643.9,480.1 L643.9,481.3 L644.0,477.1 L644.1,480.0 L644.2,476.2 L644.3,476.6 L644.4,471.2 L644.5,474.6 L644.6,471.0 L644.7,471.9 L644.8,468.3 L644.9,468.1 L645.0,464.9 L645.1,468.3 L645.3,462.4 L645.4,464.0 L645.5,459.2 L645.7,461.6 L645.8,457.3 L645.9,458.0 L646.1,456.1 L646.2,456.8 L646.3,453.8 L646.5,455.7 L646.6,453.0 L646.8,457.6 L646.9,453.0 L647.0,456.0 L647.2,454.0 L647.3,457.6 L647.5,454.3 L647.6,458.7 L647.8,458.4 L647.9,460.8 L648.1,458.3 L648.2,464.3 L648.4,462.2 L648.6,466.7 L648.7,465.1 L648.9,469.3 L649.1,468.7 L649.2,473.0 L649.4,472.2 L649.5,477.2 L649.7,475.2 L649.9,478.8 L650.0,477.6 L650.2,480.9 L650.3,478.6 L650.5,483.4 L650.6,481.1 L650.8,483.7 L650.9,481.7 L651.0,485.1 L651.2,482.0 L651.3,485.6 L651.5,483.0 L651.6,484.8 L651.8,482.2 L651.9,482.9 L652.0,479.4 L652.1,480.2 L652.3,476.4 L652.4,480.6 L652.5,474.2 L652.6,475.5 L652.7,469.7 L652.8,472.9 L652.9,468.1 L653.0,468.5 L653.2,464.6 L653.3,466.8 L653.4,463.6 L653.5,464.4 L653.7,461.7 L653.8,462.2 L654.0,459.8 L654.1,461.7 L654.4,458.7 L654.6,462.5 L654.9,459.9 L655.2,464.4 L655.5,461.3 L655.8,465.7 L656.2,465.2 L656.5,468.8 L656.8,469.1 L657.1,473.2 L657.4,471.7 L657.7,475.3 L658.0,473.4 L658.3,476.7 L658.5,474.7 L658.7,475.7 L658.9,472.9 L659.1,474.7 L659.3,467.9 L659.5,472.6 L659.7,467.7 L659.8,468.6 L660.0,463.9 L660.2,464.6 L660.3,461.3 L660.5,462.0 L660.7,459.1 L660.8,461.7 L661.0,457.0 L661.1,458.4 L661.3,456.1 L661.5,458.5 L661.5,456.9 L661.6,459.8 L661.7,458.0 L661.8,460.4 L661.8,459.6 L661.9,462.4 L662.0,459.6 L662.1,465.1 L662.1,463.6 L662.2,467.3 L662.3,465.3 L662.3,471.2 L662.4,468.3 L662.5,471.3 L662.6,470.0 L662.6,473.7 L662.7,472.9 L662.8,477.5 L662.8,476.1 L662.9,479.4 L663.0,479.0 L663.1,483.3 L663.1,481.8 L663.2,484.7 L663.3,483.6 L663.4,488.5 L663.5,485.9 L663.5,490.7 L663.6,486.7 L663.7,492.1 L663.8,491.1 L663.9,494.4 L664.0,492.2 L664.0,495.2 L664.1,493.6 L664.2,499.0 L664.3,493.7 L664.4,497.4 L664.6,494.7 L664.7,497.0 L664.9,492.0 L665.0,496.4 L665.2,493.2 L665.3,496.9 L665.5,491.4 L665.7,492.3 L665.8,489.1 L666.0,491.1 L666.2,486.2 L666.3,487.8 L666.5,484.3 L666.7,484.8 L666.9,480.6 L667.1,482.3 L667.2,478.2 L667.4,479.4 L667.6,475.8 L667.8,476.7 L668.0,472.9 L668.1,474.5 L668.3,470.8 L668.5,472.9 L668.7,468.6 L668.8,472.1 L669.7,465.7 L670.4,466.9 L671.3,463.7 L672.2,467.1 L673.2,465.8 L673.7,468.2 L674.2,466.7 L674.8,470.5 L675.3,468.0 L675.9,472.2 L676.5,471.6 L677.1,474.8 L677.7,474.2 L678.3,477.4 L678.9,476.4 L679.5,479.3 L680.1,476.3 L680.6,479.6 L681.0,477.2 L681.3,479.1 L681.7,473.3 L682.0,476.7 L682.4,473.6 L682.7,477.4 L683.1,470.1 L683.4,471.7 L683.7,465.5 L684.0,468.8 L684.4,464.7 L684.7,466.1 L685.0,462.8 L685.3,464.5 L685.6,458.7 L685.9,462.7 L686.2,459.2 L686.5,462.0 L686.8,458.3 L687.0,462.2 L687.3,461.3 L687.6,463.5 L687.8,463.7 L688.1,466.9 L688.4,465.9 L688.6,469.0 L688.9,469.0 L689.1,472.9 L689.3,471.5 L689.6,476.9 L689.8,473.0 L690.0,477.6 L690.2,475.6 L690.5,479.7 L690.7,477.8 L690.9,480.0 L691.0,476.3 L691.2,478.3 L691.3,475.3 L691.5,477.6 L691.6,473.9 L691.7,476.3 L691.8,471.3 L692.0,471.6 L692.1,466.0 L692.2,468.6 L692.3,464.3 L692.4,465.3 L692.5,460.6 L692.6,461.6 L692.7,457.8 L692.9,459.4 L693.0,456.2 L693.1,457.1 L693.2,451.9 L693.4,455.4 L693.5,453.6 L693.7,455.2 L693.8,452.6 L693.9,457.0 L694.0,454.2 L694.1,457.7 L694.1,455.3 L694.2,458.7 L694.3,456.0 L694.4,459.8 L694.5,458.4 L694.6,461.1 L694.7,460.7 L694.8,463.8 L694.8,462.2 L694.9,465.1 L695.0,463.9 L695.1,468.4 L695.2,466.8 L695.3,471.0 L695.4,470.3 L695.5,474.1 L695.6,472.3 L695.7,476.5 L695.8,475.4 L695.9,481.7 L696.0,477.6 L696.1,481.2 L696.2,480.4 L696.3,484.3 L696.4,483.6 L696.5,489.8 L696.6,485.7 L696.7,490.2 L696.8,487.9 L696.9,491.9 L697.0,490.2 L697.1,494.3 L697.2,492.8 L697.3,496.5 L697.4,494.9 L697.5,499.0 L697.6,496.4 L697.7,499.8 L697.8,499.0 L697.9,502.0 L698.0,497.2 L698.0,502.3 L698.1,501.0 L698.2,502.7 L698.4,500.3 L698.6,506.3 L698.7,501.3 L698.9,503.2 L699.1,498.3 L699.3,500.9 L699.4,496.6 L699.6,498.3 L699.8,494.1 L699.9,495.3 L700.1,492.0 L700.3,493.1 L700.4,488.8 L700.6,489.4 L700.8,485.5 L701.0,486.9 L701.1,482.5 L701.3,482.6 L701.5,477.4 L701.6,480.4 L701.8,476.8 L702.0,477.7 L702.1,473.5 L702.3,476.7 L702.5,473.5 L702.6,479.1 L702.8,474.0 L703.0,476.9 L703.2,474.8 L703.4,481.3 L703.5,476.2 L703.7,479.8 L703.9,478.2 L704.1,483.4 L704.2,482.2 L704.4,485.9 L704.6,485.5 L704.8,489.9 L704.9,487.8 L705.1,492.8 L705.3,491.3 L705.5,495.3 L705.6,494.6 L705.8,498.5 L706.0,496.0 L706.2,499.9 L706.4,498.3 L706.5,501.9 L706.7,499.2 L706.9,501.2 L707.1,499.4 L707.2,501.5 L707.3,496.6 L707.4,500.2 L707.5,497.2 L707.6,499.4 L707.7,496.2 L707.8,498.0 L707.9,493.2 L708.0,495.0 L708.1,492.0 L708.2,492.8 L708.3,488.0 L708.4,492.6 L708.5,487.3 L708.6,489.2 L708.7,484.7 L708.8,487.1 L708.9,481.8 L709.1,483.6 L709.2,478.7 L709.3,480.1 L709.4,477.1 L709.5,477.3 L709.6,473.8 L709.7,474.6 L709.8,470.2 L709.9,472.5 L710.0,467.9 L710.1,470.0 L710.2,465.1 L710.3,466.6 L710.4,463.6 L710.5,465.5 L710.6,461.6 L710.7,462.9 L710.8,459.9 L710.9,460.8 L711.1,457.9 L711.2,459.6 L711.3,456.7 L711.4,461.5 L711.5,456.4 L711.7,458.2 L711.9,456.4 L712.1,459.6 L712.3,457.9 L712.5,460.4 L712.7,458.8 L712.9,461.7 L713.1,461.8 L713.3,465.3 L713.5,463.8 L713.7,470.9 L713.9,468.1 L714.1,471.2 L714.3,471.5 L714.5,476.1 L714.6,474.3 L714.8,476.7 L715.0,475.9 L715.2,479.1 L715.4,477.7 L715.6,481.2 L715.7,480.5 L715.9,482.3 L716.1,479.5 L716.3,481.7 L716.5,478.8 L716.6,480.3 L716.8,476.6 L716.9,478.4 L717.1,474.2 L717.2,476.7 L717.3,471.4 L717.5,473.7 L717.6,469.3 L717.8,470.6 L718.0,465.8 L718.1,467.4 L718.4,463.3 L718.6,466.0 L718.8,461.8 L719.6,462.9 L720.6,458.1 L721.6,461.3 L722.6,457.0 L723.7,459.1 L724.7,460.0 L724.9,461.9 L725.0,458.5 L725.2,466.5 L725.3,462.2 L725.5,464.6 L725.6,464.0 L725.8,466.5 L725.9,465.4 L726.1,469.3 L726.3,468.0 L726.4,471.5 L726.6,470.8 L726.7,476.0 L726.9,473.9 L727.0,477.5 L727.2,476.4 L727.3,480.3 L727.5,477.9 L727.6,481.8 L727.8,480.6 L728.0,484.3 L728.1,483.6 L728.3,487.3 L728.4,486.1 L728.6,489.7 L728.7,488.6 L728.9,493.3 L729.0,491.8 L729.2,495.3 L729.3,493.8 L729.5,496.1 L729.7,492.0 L729.8,497.9 L730.0,495.6 L730.1,498.8 L730.3,495.1 L730.4,500.5 L730.6,497.0 L730.8,500.3 L731.0,496.4 L731.2,499.1 L731.5,497.8 L731.7,498.8 L731.9,496.0 L732.1,497.1 L732.3,494.6 L732.5,494.8 L732.8,491.7 L733.0,493.3 L733.2,490.2 L733.4,492.9 L733.6,487.1 L733.9,488.4 L734.1,484.7 L734.3,487.3 L734.5,482.0 L734.7,482.0 L734.9,478.9 L735.2,479.8 L735.4,476.6 L735.6,478.0 L735.8,474.0 L736.0,474.8 L736.3,469.9 L736.5,473.4 L736.9,470.0 L737.3,472.9 L737.6,466.8 L738.0,468.1 L738.4,463.9 L738.8,465.9 L739.2,460.8 L739.6,465.2 L740.0,459.8 L740.4,460.5 L740.8,457.4 L741.2,458.7 L741.6,455.8 L742.0,459.5 L742.4,456.3 L742.6,459.9 L742.9,456.9 L743.2,459.5 L743.5,458.7 L743.8,461.8 L744.1,461.2 L744.4,464.6 L744.7,463.4 L745.0,467.5 L745.2,465.9 L745.5,468.8 L745.8,466.4 L746.1,472.9 L746.4,471.1 L746.7,474.4 L746.9,473.5 L747.2,477.1 L747.5,475.9 L747.7,479.1 L748.0,476.6 L748.2,478.7 L748.8,476.3 L749.3,479.3 L749.8,472.5 L750.3,475.1 L750.8,471.6 L751.2,472.3 L751.7,466.1 L752.2,469.2 L752.6,465.9 L752.8,471.1 L752.9,469.6 L753.1,471.6 L753.2,471.1 L753.3,474.6 L753.5,473.4 L753.6,476.2 L753.8,473.7 L753.9,477.8 L754.0,477.8 L754.2,481.8 L754.3,480.6 L754.4,483.3 L754.6,483.7 L754.7,486.7 L754.9,485.4 L755.0,489.7 L755.1,489.4 L755.3,493.1 L755.4,491.4 L755.5,495.1 L755.7,494.6 L755.8,498.1 L756.0,495.8 L756.1,499.5 L756.2,498.0 L756.4,500.9 L756.5,499.6 L756.6,501.5 L756.8,500.3 L756.9,502.7 L757.1,500.9 L757.2,502.5 L757.3,499.7 L757.5,502.8 L757.6,499.1 L757.7,501.6 L757.9,498.0 L758.0,500.5 L758.2,496.4 L758.3,496.7 L758.4,494.0 L758.6,494.7 L758.7,490.3 L758.9,492.1 L759.0,488.9 L759.1,491.2 L759.3,486.0 L759.4,487.6 L759.5,484.0 L759.7,484.9 L759.8,479.8 L760.0,482.1 L760.1,477.6 L760.2,478.9 L760.4,475.1 L760.5,476.2 L760.6,472.5 L760.8,474.6 L760.9,471.2 L761.1,472.6 L761.2,468.8 L761.3,471.7 L761.5,468.5 L762.1,470.2 L762.7,467.6 L763.3,474.8 L763.9,470.9 L764.5,474.6 L765.2,474.6 L765.9,476.7 L766.2,473.4 L766.5,475.4 L766.8,470.5 L767.1,472.8 L767.5,469.7 L767.8,469.3 L768.1,465.4 L768.5,466.6 L768.8,463.5 L769.2,463.6 L769.5,460.6 L769.9,463.6 L770.2,457.1 L770.5,459.0 L770.9,456.5 L771.2,458.1 L771.5,455.9 L771.8,458.6 L771.9,457.4 L772.0,460.3 L772.1,457.1 L772.2,461.2 L772.4,458.2 L772.5,462.7 L772.6,461.0 L772.7,463.4 L772.8,461.8 L773.0,466.0 L773.1,464.4 L773.2,467.8 L773.3,467.1 L773.4,473.0 L773.5,466.1 L773.7,471.8 L773.8,470.4 L773.9,474.6 L774.0,473.4 L774.1,476.6 L774.2,475.8 L774.3,480.5 L774.4,478.3 L774.6,482.1 L774.7,480.7 L774.8,484.3 L774.9,483.7 L775.0,489.3 L775.1,486.0 L775.1,489.4 L775.2,489.7 L775.3,492.6 L775.4,490.4 L775.5,495.5 L775.6,494.1 L775.7,497.0 L775.7,496.1 L775.8,498.5 L775.9,497.9 L775.9,501.0 L776.0,495.9 L776.1,501.9 L776.1,500.5 L776.2,503.3 L776.2,487.8 L777.1,498.1 L778.0,486.7 L778.9,497.4 L779.8,487.2 L780.7,497.3 L781.6,486.5 L782.5,494.6 L783.4,484.7 L784.3,495.2 L785.2,484.8 L786.1,496.0 L787.0,483.7 L787.9,494.8 L788.8,484.6 L789.7,490.4 L790.6,482.1 L790.9,485.8 L791.0,487.3 L791.1,483.8 L791.2,486.0 L791.3,482.8 L791.5,484.2 L791.6,478.5 L791.8,482.3 L792.0,477.4 L792.2,479.8 L792.4,475.7 L792.6,476.2 L792.8,473.2 L793.0,475.0 L793.2,470.6 L793.4,471.8 L793.6,467.7 L793.8,470.6 L794.4,466.2 L795.0,467.7 L795.7,464.2 L796.4,466.8 L797.0,463.8 L797.7,465.0 L798.2,459.9 L798.8,463.6 L799.3,459.5 L799.8,459.6 L800.3,455.3 L800.7,457.6 L801.2,456.1 L801.3,459.9 L801.3,456.8 L801.4,460.1 L801.5,458.7 L801.6,462.7 L801.7,460.5 L801.8,464.7 L801.8,462.7 L801.9,466.7 L802.0,464.7 L802.1,468.4 L802.2,467.1 L802.3,472.1 L802.4,470.8 L802.4,473.4 L802.5,472.7 L802.6,477.1 L802.7,475.2 L802.8,479.4 L802.9,477.6 L802.9,482.5 L803.0,480.2 L803.1,484.8 L803.2,482.7 L803.3,489.9 L803.4,485.5 L803.4,488.5 L803.5,487.3 L803.6,491.1 L803.7,486.4 L803.8,491.9 L803.9,490.7 L803.9,494.0 L804.0,490.9 L804.1,493.5 L804.3,491.5 L804.4,493.7 L804.6,490.8 L804.8,494.0 L804.9,489.8 L805.1,490.7 L805.3,487.7 L805.4,488.5 L805.6,485.9 L805.8,485.8 L805.9,481.6 L806.1,482.6 L806.2,478.9 L806.4,479.4 L806.5,473.2 L806.7,477.2 L806.8,472.9 L806.9,474.3 L807.0,471.6 L807.1,474.1 L807.1,482.8 L808.0,492.2 L808.9,478.1 L809.8,492.3 L810.7,480.9 L811.6,492.7 L812.5,476.6 L813.4,488.7 L814.3,475.4 L815.2,489.4 L816.1,475.5 L817.0,487.5 L817.9,477.2 L818.8,488.7 L819.7,475.2 L820.6,486.0 L821.5,473.1 L821.8,478.8 L821.8,480.8 L821.9,478.0 L821.9,479.3 L822.0,476.2 L822.1,476.7 L822.1,473.4 L822.2,475.4 L822.3,471.3 L822.4,473.3 L822.5,468.5 L822.6,470.7 L822.7,465.6 L822.8,466.8 L822.9,464.5 L823.0,464.1 L823.1,461.5 L823.2,465.1 L823.3,458.7 L823.4,460.1 L823.6,456.1 L823.7,460.0 L823.8,455.1 L824.0,455.9 L824.1,452.9 L824.3,456.0 L824.4,450.7 L824.6,453.1 L824.7,450.8 L825.1,451.8 L825.4,450.6 L825.9,453.0 L826.3,451.1 L826.8,455.3 L827.2,452.0 L827.7,458.9 L828.2,457.1 L828.7,459.9 L829.2,458.6 L829.7,462.1 L830.1,461.4 L830.6,464.6 L831.3,460.5 L832.0,466.9 L832.7,465.7 L833.4,468.8 L834.2,468.6 L834.9,473.0 L835.7,469.2 L836.5,470.8 L836.9,468.0 L837.3,469.8 L837.7,466.0 L838.2,467.8 L838.7,463.8 L839.2,465.2 L839.7,462.3 L840.1,463.3 L840.6,459.3 L841.1,460.4 L841.6,454.3 L842.0,458.8 L842.4,455.1 L842.8,456.6 L843.2,452.9 L843.5,454.1 L843.8,452.2 L844.4,455.1 L844.7,453.0 L844.9,458.0 L845.0,455.4 L845.2,459.3 L845.4,459.1 L845.9,461.6 L846.6,460.4 L847.6,466.1 L848.6,460.8 L849.7,463.6 L850.7,461.8 L851.8,464.5 L852.8,460.7 L853.8,466.2 L854.8,462.9 L855.8,466.2 L856.8,464.3 L857.6,467.5 L858.6,466.5 L859.6,469.8 L860.5,467.9 L861.3,470.6 L862.1,468.2 L862.3,469.6 L862.5,467.6 L862.8,470.7 L863.0,465.3 L863.2,465.7 L863.3,461.4 L863.5,462.6 L863.7,459.5 L863.9,460.8 L864.1,456.6 L864.3,458.5 L864.5,454.3 L864.7,455.8 L865.0,453.3 L865.4,456.8 L865.9,450.7 L866.4,457.9 L866.9,455.5 L867.5,459.8 L868.0,457.9 L868.5,461.8 L869.0,460.2 L869.4,465.0 L869.7,463.4 L869.9,466.5 L870.1,466.4 L870.3,469.9 L870.5,468.2 L870.7,472.4 L870.9,471.2 L871.1,475.2 L871.3,473.3 L871.4,476.9 L871.7,476.5 L871.9,479.2 L872.1,477.7 L872.4,479.9 L872.6,477.0 L872.8,478.2 L873.0,474.2 L873.2,477.3 L873.4,472.5 L873.6,475.0 L873.9,470.3 L874.1,472.7 L874.3,465.3 L874.6,469.0 L874.8,465.9 L875.1,466.4 L875.3,462.8 L875.6,464.4 L875.8,460.0 L876.1,462.5 L876.3,459.5 L876.5,459.9 L876.8,457.9 L877.2,459.8 L877.6,456.7 L878.0,461.7 L878.4,460.2 L878.9,464.3 L879.3,462.3 L879.7,466.2 L880.1,465.4 L880.5,469.1 L880.8,467.3 L881.2,470.6 L882.0,468.6 L882.7,468.1 L883.4,464.9 L884.1,467.4 L884.3,466.3 L884.6,467.7 L884.8,467.2 L885.0,470.1 L885.3,467.1 L885.5,470.9 L885.7,469.3 L886.0,471.4 L886.2,470.6 L886.4,475.0 L886.6,473.2 L886.8,478.3 L886.9,477.8 L887.1,482.8 L887.1,480.4 L887.1,483.4 L887.1,482.0 L887.2,485.9 L887.2,484.0 L887.2,487.8 L887.2,486.0 L887.2,488.8 L887.3,488.1 L887.3,491.5 L887.3,490.4 L887.3,492.9 L887.3,491.7 L887.3,494.9 L887.3,491.9 L887.3,498.1 L887.3,497.2 L887.4,500.3 L887.4,498.7 L887.4,505.7 L887.4,501.7 L887.4,504.7 L887.4,503.9 L887.4,507.3 L887.4,506.3 L887.4,510.0 L887.4,509.5 L887.4,513.1 L887.4,511.7 L887.4,515.8 L887.4,513.6 L887.4,521.2 L887.4,517.0 L887.4,521.0 L887.4,520.4 L887.4,523.6 L887.4,522.9 L887.4,525.7 L887.4,523.9 L887.4,528.3 L887.4,526.6 L887.4,529.8 L887.4,528.4 L887.4,532.5 L887.4,531.3 L887.5,533.8 L887.5,532.0 L887.5,536.0 L887.5,534.8 L887.5,536.6 L887.5,532.4 L887.5,540.5 L887.5,537.4 L887.6,539.2 L887.6,535.1 L887.6,541.3 L887.6,538.6 L887.6,541.6 L887.7,539.8 L887.8,541.0 L887.8,536.8 L887.9,542.2 L887.9,539.4 L888.0,540.0 L888.1,537.0 L888.2,538.7 L888.2,535.3 L888.3,538.6 L888.4,532.7 L888.5,533.8 L888.5,531.3 L888.6,530.9 L888.7,527.9 L888.8,530.5 L888.9,525.2 L889.0,524.7 L889.1,521.2 L889.2,521.8 L889.3,516.0 L889.4,520.8 L889.4,514.1 L889.5,517.2 L889.6,512.9 L889.7,514.0 L889.8,511.3 L889.9,512.2 L890.0,509.2 L890.3,510.6 L890.6,503.6 L890.9,507.9 L891.2,504.6 L891.5,505.9 L891.8,501.9 L892.2,504.7 L892.5,502.0 L892.9,502.6 L893.5,499.0 L894.1,501.9 L894.8,498.4 L895.5,499.9 L896.2,498.1 L896.8,498.4 L897.4,494.7 L897.5,496.7 L897.7,493.9 L897.8,495.5 L898.0,492.0 L898.1,493.0 L898.2,489.3 L898.4,491.5 L898.5,486.9 L898.7,488.7 L898.8,485.9 L898.9,487.1 L899.0,483.4 L899.2,485.2 L899.3,480.7 L899.4,481.5 L899.5,479.3 L899.6,480.2 L899.7,476.0 L899.9,476.9 L900.0,473.6 L900.1,474.9 L900.2,471.4 L900.3,473.8 L900.4,470.6 L900.5,470.8 L900.7,467.4 L900.8,469.3 L900.9,465.7 L900.9,465.6 L901.0,463.0 L901.1,464.1 L901.2,460.9 L901.3,461.7 L901.4,458.3 L901.5,458.5 L901.6,455.3 L901.7,456.6 L901.8,450.9 L901.9,456.0 L902.1,452.5 L902.2,455.0 L902.4,452.2 L902.7,453.6 L903.0,452.5 L903.4,456.7 L903.7,454.2 L904.1,458.0 L904.5,456.8 L904.9,460.9 L905.3,459.4 L905.8,463.9 L906.2,461.8 L906.6,465.3 L907.1,464.6 L907.5,468.0 L908.0,467.0 L908.5,470.3 L909.0,468.2 L909.5,471.6 L910.0,469.9 L910.6,473.3 L911.5,471.7 L912.4,475.5 L913.4,472.6 L914.5,474.9 L915.5,473.4 L916.5,476.9 L917.2,475.2 L917.9,478.8 L918.7,475.9 L919.4,479.2 L920.1,478.2 L920.9,482.0 L921.6,479.1 L922.4,483.2 L923.1,480.3 L923.8,481.6 L924.6,478.9 L925.3,479.3 L926.0,475.7 L926.8,478.4 L927.5,474.0 L928.2,476.3 L929.2,473.9 L930.2,476.0 L931.2,471.4 L932.2,477.3 L933.1,473.8 L934.1,478.1 L935.1,475.4 L936.2,477.7 L937.2,475.5 L938.3,479.1 L939.2,476.2 L940.0,482.4 L940.4,478.0 L940.8,481.3 L941.1,479.8 L941.3,482.9 L941.6,483.1 L941.9,485.5 L942.1,485.2 L942.5,487.7 L942.9,485.1 L943.5,488.4 L944.2,484.9 L944.9,487.0 L945.7,483.2 L946.5,484.6 L947.3,481.5 L948.1,483.0 L948.8,480.6 L949.6,481.8 L950.3,475.6 L951.0,480.4 L951.8,477.6 L952.5,477.8 L953.2,474.3 L954.0,477.0 L954.7,474.4 L955.7,475.7 L956.7,470.3 L957.6,474.2 L958.6,470.9 L959.6,473.8 L960.6,468.3 L961.6,473.5 L962.5,472.2 L963.5,474.4 L964.5,472.3 L965.5,475.8 L966.5,474.6 L967.5,476.4 L968.4,474.7 L969.4,477.7 L970.4,475.3 L971.4,478.7 L972.4,477.0 L973.1,480.1 L973.8,479.1 L974.6,481.7 L975.3,478.7 L976.0,484.1 L976.8,482.3 L977.5,485.5 L978.2,482.9 L979.0,485.7 L979.7,482.4 L980.4,484.4 L981.2,481.4 L981.9,481.7 L982.6,478.9 L983.4,479.8 L984.1,477.6 L984.7,481.6 L985.3,475.3 L985.9,477.1 L986.5,473.3 L987.1,474.4 L987.6,471.8 L988.2,472.8 L988.8,468.9 L989.4,473.6 L990.0,467.8 L991.0,469.5 L992.0,467.3 L992.9,471.2 L993.9,468.5 L994.9,470.8 L995.9,469.6 L996.7,472.4 L997.5,470.9 L998.3,473.7 L999.1,471.4 L1000.0,475.6 L1000.8,473.4 L1001.8,477.1 L1002.5,472.5 L1003.3,478.0 L1004.1,476.4 L1004.9,479.6 L1005.8,477.4 L1006.6,480.4 L1007.5,479.0 L1008.3,481.5 L1009.1,480.6 L1010.2,483.4 L1011.3,479.7 L1012.3,480.7 L1013.4,477.8 L1014.5,479.0 L1015.5,476.6 L1016.5,480.7 L1017.2,477.7 L1017.9,480.7 L1018.5,478.3 L1019.2,482.4 L1019.8,481.7 L1020.4,484.7 L1021.1,483.8 L1021.7,486.7 L1022.4,484.3 L1023.2,486.4 L1024.0,482.5 L1024.8,486.3 L1025.6,482.8 L1026.4,484.3 L1027.3,481.5 L1028.2,483.3 L1029.0,480.0 L1029.8,480.8 L1030.6,477.6 L1031.4,482.2 L1032.2,476.6 L1033.1,477.4 L1033.9,474.9 L1034.8,476.5 L1035.6,474.1 L1036.6,477.2 L1037.7,471.3 L1038.7,478.0 L1039.8,475.8 L1040.8,478.7 L1041.9,477.4 L1042.9,479.2 L1044.0,477.7 L1045.0,478.4 L1046.0,475.7 L1047.0,478.5 L1048.1,474.4 L1049.2,476.9 L1050.3,474.0 L1051.3,476.5 L1052.4,473.0 L1053.5,476.4 L1054.6,473.9 L1055.7,474.9 L1056.9,472.7 L1058.0,474.9 L1059.1,472.3 L1060.3,474.3 L1061.4,472.8 L1062.6,473.7 L1063.8,471.4 L1065.0,474.2 L1066.0,471.3 L1067.0,474.2 L1067.9,472.2 L1068.3,475.9 L1068.7,473.8 L1069.0,480.4 L1069.3,476.5 L1069.5,479.2 L1069.8,478.3 L1070.0,482.3 L1070.2,481.7 L1070.4,484.8 L1070.7,482.8 L1070.9,487.4 L1071.1,485.4 L1071.4,489.1 L1071.7,488.4 L1072.0,490.2 L1072.4,488.7 L1073.1,492.0 L1073.9,488.9 L1074.8,492.3 L1075.7,488.4 L1076.6,489.4 L1077.6,485.4 L1078.4,487.2 L1079.3,483.7 L1080.0,485.1 L1080.8,481.1 L1081.5,483.2 L1082.2,479.9 L1082.8,481.0 L1083.4,478.0 L1084.0,479.7 L1084.6,476.4 L1085.5,478.4 L1086.4,475.5 L1087.2,476.7 L1088.2,473.4 L1089.2,476.0 L1090.1,474.0 L1091.1,476.4 L1092.1,475.0 L1093.1,477.6 L1094.2,475.7 L1095.3,477.6 L1096.2,474.9 L1097.1,476.5 L1098.1,473.7 L1099.1,476.0 L1100.0,469.9 L1101.0,475.7 L1102.0,468.2 L1103.0,475.6 L1104.1,469.3 L1105.2,473.2 L1106.3,470.3 L1107.4,472.3 L1108.4,471.2 L1109.5,474.1 L1110.6,471.7 L1111.2,474.8 L1111.7,473.1 L1112.2,478.4 L1112.8,476.0 L1113.4,478.9 L1113.9,478.1 L1114.5,482.3 L1115.0,480.7 L1115.6,484.2 L1116.1,483.1 L1116.6,486.5 L1117.1,484.3 L1117.5,487.4 L1117.9,485.1 L1118.3,488.2 L1118.7,485.1 L1119.0,487.0 L1119.3,483.7 L1119.5,485.9 L1119.7,481.7 L1119.8,485.5 L1120.0,479.3 L1120.2,479.5 L1120.4,475.9 L1120.6,477.0 L1121.0,473.6 L1121.4,477.6 L1122.1,472.6 L1122.9,476.3 L1123.8,473.3 L1124.8,477.5 L1125.8,473.1 L1126.9,477.9 L1128.0,476.1 L1129.0,478.7 L1129.9,477.1 L1130.8,478.1 L1131.7,476.0 L1132.7,477.3 L1133.6,475.2 L1134.6,475.7 L1135.5,471.8 L1136.4,477.9 L1137.3,472.5 L1138.2,475.2 L1139.4,472.4 L1140.5,474.3 L1141.6,471.9 L1142.7,476.0 L1143.7,473.5 L1144.8,476.2 L1145.9,473.7 L1146.8,475.8 L1147.8,472.8 L1148.8,474.2 L1149.8,472.6 L1150.8,474.6 L1151.7,471.0 L1152.6,473.0 L1153.5,470.2 L1154.6,472.7 L1155.6,470.6 L1156.6,475.0 L1157.6,471.9 L1158.6,474.7 L1159.7,473.4 L1160.7,475.4 L1161.9,473.7 L1163.1,475.3 L1164.3,472.9 L1165.4,476.2 L1166.4,473.5 L1167.3,477.1 L1167.6,475.7 L1167.9,480.5 L1168.1,477.2 L1168.3,480.6 L1168.5,480.0 L1168.7,484.1 L1168.8,482.4 L1169.0,485.2 L1169.1,484.5 L1169.2,488.3 L1169.4,487.9 L1169.5,491.2 L1169.7,490.3 L1169.8,492.6 L1170.0,491.8 L1170.2,494.4 L1170.4,492.0 L1170.8,493.9 L1171.2,491.5 L1171.6,492.9 L1172.1,489.2 L1172.6,490.3 L1173.1,487.2 L1173.5,488.0 L1174.0,484.5 L1174.5,486.2 L1175.0,483.0 L1175.4,485.2 L1175.9,483.4 L1176.4,488.1 L1176.8,485.8 L1177.3,491.1 L1177.7,490.0 L1178.2,495.4 L1178.7,491.3 L1179.1,494.2 L1179.6,492.0 L1179.8,494.0 L1180.1,491.4 L1180.4,492.5 L1180.6,489.1 L1180.9,491.6 L1181.2,488.0 L1181.4,489.4 L1181.7,485.4 L1182.0,486.3 L1182.2,481.9 L1182.5,482.9 L1182.7,480.0 L1183.0,482.6 L1183.2,476.0 L1183.5,479.2 L1183.7,474.3 L1183.9,477.1 L1184.2,473.8 L1184.9,473.4 L1185.4,468.2 L1186.0,474.0 L1186.5,469.0 L1187.2,472.0 L1187.9,467.1 L1188.5,472.5 L1189.2,471.3 L1190.0,473.7 L1190.9,472.9 L1191.8,475.8 L1192.6,474.1 L1193.5,476.9 L1194.4,474.8 L1195.4,477.9 L1196.4,474.5 L1197.4,479.2 L1198.4,476.0 L1199.5,479.2 L1200.5,476.4 L1201.5,478.6 L1202.5,476.5 L1203.6,478.4 L1204.7,474.4 L1205.8,477.7 L1206.8,474.3 L1207.8,477.8 L1208.7,472.9 L1209.9,476.6 L1210.9,472.3 L1211.9,477.8 L1212.9,475.7 L1213.8,479.1 L1214.8,476.4 L1215.5,479.2 L1216.1,474.7 L1216.7,476.8 L1217.4,473.6 L1218.0,474.7 L1218.7,471.1 L1219.4,475.6 L1220.1,469.4 L1220.9,471.9 L1221.7,469.3 L1222.6,472.0 L1223.6,468.6 L1224.5,472.8 L1225.5,467.6 L1226.5,472.7 L1227.5,471.8 L1228.4,473.9 L1229.3,469.8 L1230.1,476.2 L1230.8,473.6 L1231.5,477.1 L1232.1,475.6 L1232.7,478.2 L1233.3,477.0 L1233.8,479.6 L1234.4,478.1 L1234.9,481.6 L1235.4,480.9 L1235.8,484.1 L1236.2,482.6 L1236.4,485.2 L1236.6,484.2 L1236.8,489.5 L1237.0,486.6 L1237.1,490.7 L1237.3,489.0 L1237.4,491.7 L1237.5,492.0 L1237.7,494.3 L1237.8,492.6 L1237.9,497.9 L1238.0,496.3 L1238.1,500.0 L1238.3,499.2 L1238.4,502.8 L1238.5,501.6 L1238.6,504.5 L1238.7,503.1 L1238.8,507.4 L1238.9,504.1 L1239.1,507.2 L1239.2,504.9 L1239.3,508.6 L1239.5,505.3 L1239.7,508.5 L1239.9,504.5 L1240.1,505.9 L1240.3,501.6 L1240.5,505.2 L1240.7,499.0 L1241.0,499.1 L1241.2,495.3 L1241.4,496.1 L1241.6,492.6 L1241.9,495.0 L1242.1,491.2 L1242.4,494.2 L1242.6,492.4 L1242.8,495.2 L1243.0,493.9 L1243.2,498.3 L1243.4,496.2 L1243.6,499.0 L1243.9,498.0 L1244.1,502.4 L1244.3,500.5 L1244.6,504.8 L1244.8,504.1 L1245.0,507.6 L1245.3,503.9 L1245.5,513.4 L1245.7,509.6 L1246.0,513.1 L1246.2,511.7 L1246.4,514.7 L1246.6,513.4 L1246.8,515.0 L1247.0,513.3 L1247.1,515.2 L1247.3,513.1 L1247.5,515.2 L1247.6,508.6 L1247.7,513.6 L1247.9,509.9 L1248.0,510.8 L1248.1,507.7 L1248.2,508.8 L1248.4,504.0 L1248.5,507.6 L1248.6,501.2 L1248.7,502.8 L1248.8,498.4 L1249.0,500.0 L1249.1,496.7 L1249.3,497.3 L1249.5,494.2 L1249.6,495.7 L1249.8,492.7 L1250.0,493.8 L1250.5,491.6 L1251.0,495.1 L1251.5,492.5 L1252.1,496.1 L1252.7,495.1 L1253.3,499.0 L1253.9,496.1 L1254.5,501.6 L1255.1,500.0 L1255.7,503.3 L1256.2,501.3 L1256.5,503.8 L1256.7,500.0 L1257.0,502.3 L1257.3,498.2 L1257.6,500.0 L1257.8,496.0 L1258.1,497.2 L1258.3,491.4 L1258.6,496.0 L1258.8,491.1 L1259.0,492.6 L1259.3,489.3 L1259.5,492.3 L1259.8,487.2 L1260.0,488.3 L1260.3,484.2 L1260.5,486.0 L1260.8,480.7 L1261.5,483.4 L1262.3,480.4 L1263.1,481.9 L1263.8,478.2 L1264.6,479.7 L1265.4,478.5 L1265.8,481.4 L1266.2,479.7 L1266.6,483.4 L1267.0,481.4 L1267.4,485.6 L1267.8,485.0 L1268.2,488.1 L1268.6,487.3 L1269.0,490.8 L1269.5,488.1 L1270.0,491.7 L1270.4,488.9 L1270.8,489.9 L1271.3,487.3 L1271.7,489.3 L1272.2,485.0 L1272.7,487.3 L1273.2,483.2 L1273.7,484.9 L1274.1,480.1 L1274.6,481.8 L1275.1,478.0 L1275.6,479.8 L1276.1,476.0 L1276.8,477.4 L1277.5,474.3 L1278.2,475.9 L1278.9,471.8 L1279.6,473.1 L1280.3,467.4 L1280.9,471.4 L1281.6,468.6 L1282.2,471.4 L1282.5,470.0 L1282.8,472.0 L1283.1,470.5 L1283.4,474.3 L1283.7,471.7 L1283.9,476.7 L1284.2,475.0 L1284.5,478.6 L1284.7,477.6 L1285.0,480.5 L1285.2,479.3 L1285.5,483.7 L1285.8,482.6 L1286.0,485.4 L1286.3,484.3 L1286.5,486.8 L1286.8,485.6 L1287.3,489.4 L1287.7,487.9 L1288.2,492.3 L1288.7,490.6 L1289.2,495.7 L1289.7,493.4 L1290.1,497.3 L1290.6,495.2 L1291.0,497.7 L1291.4,495.7 L1291.6,497.5 L1291.9,493.7 L1292.1,496.3 L1292.2,493.0 L1292.4,494.3 L1292.6,490.2 L1292.8,491.0 L1292.9,484.6 L1293.1,489.0 L1293.3,484.3 L1293.5,485.4 L1293.7,481.9 L1293.9,483.2 L1294.2,479.8 L1294.5,481.8 L1295.3,479.1 L1296.2,480.8 L1297.2,478.8 L1298.3,480.8 L1299.4,479.3 L1300.6,482.2 L1301.4,479.7 L1302.2,482.8 L1303.0,482.5 L1303.9,485.9 L1304.8,483.6 L1305.6,487.1 L1306.5,484.9 L1307.4,488.4 L1308.2,485.6 L1308.8,487.7 L1309.4,484.7 L1310.0,486.3 L1310.7,483.1 L1311.3,484.2 L1311.9,480.4 L1312.5,482.2 L1313.1,477.3 L1313.7,480.7 L1314.2,476.9 L1314.8,478.8 L1315.4,473.8 L1315.9,478.1 L1316.7,475.6 L1317.5,481.2 L1318.3,477.3 L1319.1,480.3 L1319.8,478.5 L1320.5,482.5 L1321.1,481.9 L1321.6,485.2 L1322.0,482.3" fill="none" stroke="#4a68d0" stroke-opacity="0.55" stroke-width="0.8" stroke-linejoin="round"/><line x1="918.6" y1="82.4" x2="918.6" y2="770" stroke="#6c6c6c" stroke-width="2"/><line x1="489" y1="760" x2="1322" y2="760" stroke="#8c8c8c" stroke-width="1.8"/><circle cx="489" cy="760" r="2.4" fill="#b0b0b0"/><line x1="386" y1="764.5" x2="1322" y2="764.5" stroke="rgba(0,0,0,0.18)" stroke-width="1.2"/></svg>
<div class="t" style="left:294.3px;top:112.96px;font-size:9.5px;color:#d0d0d0;font-weight:normal;text-shadow:0 0 1px #d0d0d0;transform:scaleX(0.880);transform-origin:0 0;">21</div>
<div style="left:289.2px;top:116.64999999999998px;width:3.6000000000000227px;height:1.5px;background:#c0c0c0;border-radius:1px;"></div>
<div style="left:290.25px;top:115.64999999999998px;width:1.5px;height:3.5px;background:#c0c0c0;border-radius:1px;"></div>
<div class="t" style="left:294.3px;top:164.46px;font-size:9.5px;color:#d0d0d0;font-weight:normal;text-shadow:0 0 1px #d0d0d0;transform:scaleX(0.880);transform-origin:0 0;">18</div>
<div style="left:289.2px;top:168.14999999999998px;width:3.6000000000000227px;height:1.5px;background:#c0c0c0;border-radius:1px;"></div>
<div style="left:290.25px;top:167.14999999999998px;width:1.5px;height:3.5px;background:#c0c0c0;border-radius:1px;"></div>
<div class="t" style="left:294.3px;top:215.96px;font-size:9.5px;color:#d0d0d0;font-weight:normal;text-shadow:0 0 1px #d0d0d0;transform:scaleX(0.880);transform-origin:0 0;">15</div>
<div style="left:289.2px;top:219.64999999999998px;width:3.6000000000000227px;height:1.5px;background:#c0c0c0;border-radius:1px;"></div>
<div style="left:290.25px;top:218.64999999999998px;width:1.5px;height:3.5px;background:#c0c0c0;border-radius:1px;"></div>
<div class="t" style="left:294.3px;top:267.46px;font-size:9.5px;color:#d0d0d0;font-weight:normal;text-shadow:0 0 1px #d0d0d0;transform:scaleX(0.880);transform-origin:0 0;">12</div>
<div style="left:289.2px;top:271.15px;width:3.6000000000000227px;height:1.5px;background:#c0c0c0;border-radius:1px;"></div>
<div style="left:290.25px;top:270.15px;width:1.5px;height:3.5px;background:#c0c0c0;border-radius:1px;"></div>
<div class="t" style="left:296.8px;top:318.96px;font-size:9.5px;color:#d0d0d0;font-weight:normal;text-shadow:0 0 1px #d0d0d0;transform:scaleX(1.022);transform-origin:0 0;">9</div>
<div style="left:289.6px;top:322.65px;width:3.6000000000000227px;height:1.5px;background:#c0c0c0;border-radius:1px;"></div>
<div style="left:290.65000000000003px;top:321.65px;width:1.5px;height:3.5px;background:#c0c0c0;border-radius:1px;"></div>
<div class="t" style="left:296.8px;top:370.46px;font-size:9.5px;color:#d0d0d0;font-weight:normal;text-shadow:0 0 1px #d0d0d0;transform:scaleX(1.022);transform-origin:0 0;">6</div>
<div style="left:289.6px;top:374.15px;width:3.6000000000000227px;height:1.5px;background:#c0c0c0;border-radius:1px;"></div>
<div style="left:290.65000000000003px;top:373.15px;width:1.5px;height:3.5px;background:#c0c0c0;border-radius:1px;"></div>
<div class="t" style="left:296.8px;top:421.96px;font-size:9.5px;color:#d0d0d0;font-weight:normal;text-shadow:0 0 1px #d0d0d0;transform:scaleX(1.022);transform-origin:0 0;">3</div>
<div style="left:289.6px;top:425.65px;width:3.6000000000000227px;height:1.5px;background:#c0c0c0;border-radius:1px;"></div>
<div style="left:290.65000000000003px;top:424.65px;width:1.5px;height:3.5px;background:#c0c0c0;border-radius:1px;"></div>
<div class="t" style="left:297.0px;top:473.46px;font-size:9.5px;color:#d0d0d0;font-weight:normal;text-shadow:0 0 1px #d0d0d0;transform:scaleX(0.946);transform-origin:0 0;">0</div>
<div class="t" style="left:294.3px;top:524.96px;font-size:9.5px;color:#d0d0d0;font-weight:normal;text-shadow:0 0 1px #d0d0d0;transform:scaleX(1.022);transform-origin:0 0;">3</div>
<div style="left:289.4px;top:528.8px;width:2.0px;height:1.2000000000000455px;background:#a8a8a8;"></div>
<div class="t" style="left:294.3px;top:576.46px;font-size:9.5px;color:#d0d0d0;font-weight:normal;text-shadow:0 0 1px #d0d0d0;transform:scaleX(1.022);transform-origin:0 0;">6</div>
<div style="left:289.4px;top:580.3px;width:2.0px;height:1.2000000000000455px;background:#a8a8a8;"></div>
<div class="t" style="left:294.3px;top:627.96px;font-size:9.5px;color:#d0d0d0;font-weight:normal;text-shadow:0 0 1px #d0d0d0;transform:scaleX(1.022);transform-origin:0 0;">9</div>
<div style="left:289.4px;top:631.8px;width:2.0px;height:1.2000000000000455px;background:#a8a8a8;"></div>
<div class="t" style="left:291.5px;top:679.46px;font-size:9.5px;color:#d0d0d0;font-weight:normal;text-shadow:0 0 1px #d0d0d0;transform:scaleX(1.032);transform-origin:0 0;">12</div>
<div style="left:288.8px;top:683.3px;width:2.0px;height:1.2000000000000455px;background:#a8a8a8;"></div>
<div class="t" style="left:291.5px;top:730.96px;font-size:9.5px;color:#d0d0d0;font-weight:normal;text-shadow:0 0 1px #d0d0d0;transform:scaleX(1.032);transform-origin:0 0;">15</div>
<div style="left:288.8px;top:734.8px;width:2.0px;height:1.2000000000000455px;background:#a8a8a8;"></div>
<div style="left:306.2px;top:774.5px;width:23.80000000000001px;height:13.0px;background:#fafafa;"></div>
<div class="t" style="left:308px;top:777.65px;font-size:7.5px;color:#444;font-weight:normal;text-shadow:0 0 1px #444;transform:scaleX(0.867);transform-origin:0 0;">40 dB</div>
<div style="left:331.8px;top:774.5px;width:10.199999999999989px;height:13.0px;background:#2e2e2e;"></div>
<svg style="position:absolute;left:331.8px;top:774.5px" width="10" height="13"><path d="M5,3.5 L5,8.5 M3.3,6.8 L5,9 L6.7,6.8" stroke="#d8d8d8" stroke-width="1" fill="none"/></svg>
<div style="left:347.7px;top:774.5px;width:23.69999999999999px;height:13.0px;background:#fafafa;"></div>
<div class="t" style="left:348.8px;top:777.65px;font-size:7.5px;color:#444;font-weight:normal;text-shadow:0 0 1px #444;transform:scaleX(0.933);transform-origin:0 0;">20 min</div>
<div style="left:373.3px;top:774.5px;width:9.699999999999989px;height:13.0px;background:#2e2e2e;"></div>
<svg style="position:absolute;left:373.3px;top:774.5px" width="10" height="13"><path d="M5,3.5 L5,8.5 M3.3,6.8 L5,9 L6.7,6.8" stroke="#d8d8d8" stroke-width="1" fill="none"/></svg>
<div class="t" style="left:388.2px;top:777.10px;font-size:8.5px;color:#b8b8b8;font-weight:normal;text-shadow:0 0 1px #b8b8b8;transform:scaleX(1.095);transform-origin:0 0;">min</div>
<div class="t" style="left:500.5px;top:775.83px;font-size:10px;color:#d0d0d0;font-weight:normal;text-shadow:0 0 1px #d0d0d0;transform:scaleX(0.854);transform-origin:0 0;">18</div>
<div style="left:497.6px;top:780.9px;width:2.0px;height:1.0px;background:#9a9a9a;"></div>
<div class="t" style="left:613.4px;top:775.83px;font-size:10px;color:#d0d0d0;font-weight:normal;text-shadow:0 0 1px #d0d0d0;transform:scaleX(0.854);transform-origin:0 0;">16</div>
<div style="left:610.5px;top:780.9px;width:2.0px;height:1.0px;background:#9a9a9a;"></div>
<div class="t" style="left:726.3px;top:775.83px;font-size:10px;color:#d0d0d0;font-weight:normal;text-shadow:0 0 1px #d0d0d0;transform:scaleX(0.854);transform-origin:0 0;">14</div>
<div style="left:723.4px;top:780.9px;width:2.0px;height:1.0px;background:#9a9a9a;"></div>
<div class="t" style="left:839.2px;top:775.83px;font-size:10px;color:#d0d0d0;font-weight:normal;text-shadow:0 0 1px #d0d0d0;transform:scaleX(0.854);transform-origin:0 0;">12</div>
<div style="left:836.3000000000001px;top:780.9px;width:2.0px;height:1.0px;background:#9a9a9a;"></div>
<div class="t" style="left:952.1px;top:775.83px;font-size:10px;color:#d0d0d0;font-weight:normal;text-shadow:0 0 1px #d0d0d0;transform:scaleX(0.854);transform-origin:0 0;">10</div>
<div style="left:949.2px;top:780.9px;width:2.0px;height:1.0px;background:#9a9a9a;"></div>
<div class="t" style="left:1065.0px;top:775.83px;font-size:10px;color:#d0d0d0;font-weight:normal;text-shadow:0 0 1px #d0d0d0;">8</div>
<div style="left:1062.1px;top:780.9px;width:2.0px;height:1.0px;background:#9a9a9a;"></div>
<div class="t" style="left:1177.9px;top:775.83px;font-size:10px;color:#d0d0d0;font-weight:normal;text-shadow:0 0 1px #d0d0d0;">6</div>
<div style="left:1175.0px;top:780.9px;width:2.0px;height:1.0px;background:#9a9a9a;"></div>
<div class="t" style="left:1290.8000000000002px;top:775.83px;font-size:10px;color:#d0d0d0;font-weight:normal;text-shadow:0 0 1px #d0d0d0;">4</div>
<div style="left:1287.9px;top:780.9px;width:2.0px;height:1.0px;background:#9a9a9a;"></div>
<div style="left:1322px;top:14px;width:2px;height:775.5px;background:rgba(0,0,0,0.28);"></div>
<div style="left:287px;top:787.8px;width:1035px;height:1.7000000000000455px;background:rgba(0,0,0,0.22);"></div>
<div style="left:305.3px;top:768.3px;width:1016.7px;height:1.7000000000000455px;background:rgba(0,0,0,0.2);"></div></div>
</body></html>
